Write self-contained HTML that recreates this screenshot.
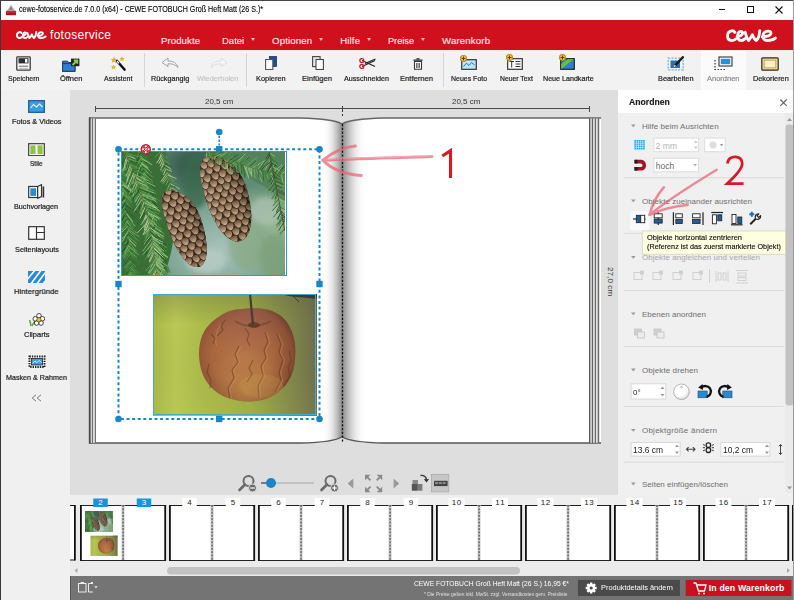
<!DOCTYPE html><html><head><meta charset='utf-8'><style>
*{margin:0;padding:0}
html,body{width:794px;height:600px;overflow:hidden;background:#f0f0f0;position:relative}
body{font-family:"Liberation Sans",sans-serif}
.a{position:absolute;display:block}
.t{position:absolute;white-space:nowrap;font-family:"Liberation Sans",sans-serif}
#titlebar{position:absolute;left:0;top:0;width:794px;height:20px;background:#fff}
#hdr{position:absolute;left:0;top:20px;width:794px;height:30px;background:#d0101c}
#tbar{position:absolute;left:0;top:50px;width:794px;height:40px;background:#f2f2f2}
#side{position:absolute;left:0;top:90px;width:70px;height:510px;background:#f0f0f0}
#canvas{position:absolute;left:70px;top:90px;width:548px;height:405px;background:#dedede}
#rpanel{position:absolute;left:618px;top:90px;width:176px;height:405px;background:#f0f0f0}
#film{position:absolute;left:70px;top:495px;width:724px;height:81px;background:#ebebeb}
#bbar{position:absolute;left:70px;top:576px;width:724px;height:24px;background:#747474}
</style></head><body><div id='titlebar'></div>
<div id='hdr'></div>
<div id='tbar'></div>
<div id='side'></div>
<div id='canvas'></div>
<div id='rpanel'></div>
<div id='film'></div>
<div id='bbar'></div>
<svg class='a' style='left:5px;top:4px' width='12' height='12' viewBox='0 0 12 12'>
<path d='M6 0.5 L10.5 7 L1.5 7 Z' fill='#c9c9c9'/><path d='M6 2 L8.5 6 L3.5 6Z' fill='#8a8a8a'/>
<rect x='1' y='6.8' width='10' height='4.4' fill='#b0141c'/><rect x='1' y='7.6' width='10' height='0.8' fill='#e04a50'/></svg>
<div class='a' style='left:719px;top:9px;width:6px;height:1px;background:#111'></div>
<div class='a' style='left:747px;top:6px;width:5px;height:5px;border:1px solid #111'></div>
<svg class='a' style='left:775px;top:6px' width='8' height='8' viewBox='0 0 8 8'><path d='M0.5 0.5L7.5 7.5M7.5 0.5L0.5 7.5' stroke='#111' stroke-width='1.1'/></svg>
<svg class='a' style='left:16.3px;top:31px' width='30.5' height='8' viewBox='0.4 -0.1 52.2 13.2' preserveAspectRatio='none'><g fill='none' stroke='#fff' stroke-width='3.3' stroke-linecap='round' stroke-linejoin='round'><path d='M9.5 3.3 C8.5 1.8 7 1.6 6 1.8 C3.2 2.3 2 4.8 2 7 C2 9.8 3.8 11.5 6.2 11.5 C7.8 11.5 9.2 10.8 10.2 10'/><path d='M11.8 7.6 C14.5 7.4 17.6 6 17.4 3.8 C17.2 1.6 13.6 1.7 12.6 4.8 C11.6 8.2 12.8 11.5 15.8 11.5 C17.6 11.5 19 10.6 20 9.6'/><path d='M20 3.2 C21 6.6 22 10 23.4 11.5 C25 10.3 26 7.8 27.4 5.6 C28.4 8 29.4 10.6 31.4 11.5 C33.4 10 34.6 6 35 1.5'/><path d='M37.5 7.8 C41 7.6 46.5 6.6 46.5 3.9 C46.5 1.3 40.5 1.3 38.8 4.6 C37.4 8 38.8 11.5 42.8 11.5 C46.2 11.5 49 10.6 51 9'/></g></svg><svg class='a' style='left:725.7px;top:28.6px' width='51' height='13.1' viewBox='0.4 -0.1 52.2 13.2' preserveAspectRatio='none'><g fill='none' stroke='#fff' stroke-width='2.9' stroke-linecap='round' stroke-linejoin='round'><path d='M9.5 3.3 C8.5 1.8 7 1.6 6 1.8 C3.2 2.3 2 4.8 2 7 C2 9.8 3.8 11.5 6.2 11.5 C7.8 11.5 9.2 10.8 10.2 10'/><path d='M11.8 7.6 C14.5 7.4 17.6 6 17.4 3.8 C17.2 1.6 13.6 1.7 12.6 4.8 C11.6 8.2 12.8 11.5 15.8 11.5 C17.6 11.5 19 10.6 20 9.6'/><path d='M20 3.2 C21 6.6 22 10 23.4 11.5 C25 10.3 26 7.8 27.4 5.6 C28.4 8 29.4 10.6 31.4 11.5 C33.4 10 34.6 6 35 1.5'/><path d='M37.5 7.8 C41 7.6 46.5 6.6 46.5 3.9 C46.5 1.3 40.5 1.3 38.8 4.6 C37.4 8 38.8 11.5 42.8 11.5 C46.2 11.5 49 10.6 51 9'/></g></svg><div class='a tri' style='left:251.0px;top:37.8px;border-left:2.5px solid transparent;border-right:2.5px solid transparent;border-top:3px solid #f2c4c4'></div><div class='a tri' style='left:319.3px;top:37.8px;border-left:2.5px solid transparent;border-right:2.5px solid transparent;border-top:3px solid #f2c4c4'></div><div class='a tri' style='left:366.8px;top:37.8px;border-left:2.5px solid transparent;border-right:2.5px solid transparent;border-top:3px solid #f2c4c4'></div><div class='a tri' style='left:421.1px;top:37.8px;border-left:2.5px solid transparent;border-right:2.5px solid transparent;border-top:3px solid #f2c4c4'></div><div class='a' style='left:143.5px;top:53px;width:1px;height:34px;background:#d6d6d6'></div><div class='a' style='left:245.5px;top:53px;width:1px;height:34px;background:#d6d6d6'></div><div class='a' style='left:443px;top:53px;width:1px;height:34px;background:#d6d6d6'></div><div class='a' style='left:701px;top:51px;width:45px;height:39px;background:#fbfbfb'></div><svg class='a' style='left:15.5px;top:55.5px' width='15' height='15' viewBox='0 0 15 15'><rect x='0.8' y='0.8' width='13.4' height='13.4' rx='0.8' fill='#fdfdfd' stroke='#3a3a3a' stroke-width='1.3'/><rect x='2.5' y='2.2' width='10' height='5.2' fill='#2e2e2e'/><rect x='9' y='3' width='2.4' height='3.6' fill='#fff'/><rect x='2.8' y='9.6' width='9.4' height='1.3' fill='#8a8a8a'/><rect x='2.8' y='11.8' width='9.4' height='1' fill='#b4b4b4'/></svg><svg class='a' style='left:61.5px;top:57.5px' width='18' height='14' viewBox='0 0 18 14'><path d='M0.6 3.2 H5.5 L6.5 4.5 H13 V13.3 H0.6Z' fill='#2a74c0' stroke='#1b3f66' stroke-width='1'/><rect x='0.6' y='5.6' width='12.4' height='7.7' fill='#2f7fd0' stroke='#1b3f66' stroke-width='1'/><rect x='9' y='0.6' width='8.4' height='7.6' fill='#222'/><path d='M10.6 7 L15 2.5 M11.8 2.3 H15.3 V5.8' stroke='#8fd14f' stroke-width='1.8' fill='none'/></svg><svg class='a' style='left:109.5px;top:55.5px' width='16' height='15' viewBox='0 0 16 15'><path d='M7 5 L14.5 13.5' stroke='#111' stroke-width='2.6' stroke-linecap='round'/><path d='M7 5 L9 7.3' stroke='#fff' stroke-width='1.2'/><path d='M4 0.5 L5 2.8 L7.5 3 L5.6 4.6 L6.2 7 L4 5.7 L1.8 7 L2.4 4.6 L0.5 3 L3 2.8Z' fill='#e0b22e'/><path d='M12 0.3 L12.8 2 L14.7 2.2 L13.3 3.4 L13.7 5.3 L12 4.3 L10.3 5.3 L10.7 3.4 L9.3 2.2 L11.2 2Z' fill='#e0b22e'/><path d='M3.5 8.5 L4.3 10.2 L6.2 10.4 L4.8 11.6 L5.2 13.5 L3.5 12.5 L1.8 13.5 L2.2 11.6 L0.8 10.4 L2.7 10.2Z' fill='#e0b22e'/></svg><svg class='a' style='left:160.5px;top:57px' width='18' height='11' viewBox='0 0 18 11'><path d='M17 10.5 C16 6 12 3.8 7 4.2 L7 1 L1 5.5 L7 9.5 L7 6.8 C11 6.5 14.5 7.5 17 10.5Z' fill='#f4f4f4' stroke='#9a9a9a' stroke-width='0.9'/></svg><svg class='a' style='left:209.5px;top:57px' width='18' height='11' viewBox='0 0 18 11'><path d='M1 10.5 C2 6 6 3.8 11 4.2 L11 1 L17 5.5 L11 9.5 L11 6.8 C7 6.5 3.5 7.5 1 10.5Z' fill='#f6f6f6' stroke='#dadada' stroke-width='0.9'/></svg><svg class='a' style='left:264.5px;top:56px' width='12' height='14' viewBox='0 0 12 14'><rect x='4.5' y='0.5' width='7' height='10' fill='#1f4d8f' stroke='#183a6a' stroke-width='0.8'/><rect x='0.6' y='3.5' width='7.2' height='10' fill='#fff' stroke='#555' stroke-width='1.1'/></svg><svg class='a' style='left:311.5px;top:56px' width='12' height='14' viewBox='0 0 12 14'><rect x='0.6' y='0.6' width='7.5' height='10' fill='#e8e8e8' stroke='#444' stroke-width='1.1'/><rect x='4' y='3.5' width='7.4' height='10' fill='#fff' stroke='#444' stroke-width='1.1'/></svg><svg class='a' style='left:358.5px;top:57.5px' width='17' height='11' viewBox='0 0 17 11'><path d='M3 2.5 L16 8.5 M3 8.5 L16 2.5' stroke='#222' stroke-width='1.1'/><path d='M6 5.5 L16.5 1' stroke='#222' stroke-width='1.3'/><circle cx='2.8' cy='2.6' r='2' fill='none' stroke='#d0202a' stroke-width='1.3'/><circle cx='2.8' cy='8.5' r='2' fill='none' stroke='#d0202a' stroke-width='1.3'/></svg><svg class='a' style='left:412.5px;top:58px' width='10' height='12' viewBox='0 0 10 12'><rect x='0.5' y='1.5' width='9' height='1.3' fill='#333'/><rect x='3.5' y='0.2' width='3' height='1.5' fill='#333'/><path d='M1.5 3.5 H8.5 V11.3 H1.5Z' fill='#fff' stroke='#333' stroke-width='1.1'/><path d='M3.6 5 V10 M5 5 V10 M6.4 5 V10' stroke='#333' stroke-width='0.8'/></svg><svg class='a' style='left:461px;top:58.5px' width='16' height='11' viewBox='0 0 16 11'><rect x='0.7' y='0.7' width='14.6' height='9.6' fill='#bfe3f7' stroke='#333' stroke-width='1.2'/><path d='M2.5 7.5 L5.5 4.2 L8 6.5 L10.5 3.5 L13.5 6' stroke='#1d78c2' stroke-width='1' fill='none'/></svg><svg class='a' style='left:459.5px;top:54.8px' width='7' height='7' viewBox='0 0 7 7'><circle cx='3.5' cy='3.5' r='3.2' fill='#f0c040' stroke='#8a6a10' stroke-width='0.7'/><path d='M3.5 1.5 V5.5 M1.5 3.5 H5.5' stroke='#5a4000' stroke-width='1'/></svg><svg class='a' style='left:507px;top:57.5px' width='16' height='12' viewBox='0 0 16 12'><rect x='0.7' y='0.7' width='14.6' height='10.6' fill='#fff' stroke='#333' stroke-width='1.2'/><path d='M2.5 3.5 H7 M4.7 3.5 V9.5 M8.5 3.5 H13.5 M8.5 6 H13.5 M8.5 8.5 H13.5' stroke='#333' stroke-width='1'/></svg><svg class='a' style='left:505.5px;top:54.3px' width='7' height='7' viewBox='0 0 7 7'><circle cx='3.5' cy='3.5' r='3.2' fill='#f0c040' stroke='#8a6a10' stroke-width='0.7'/><path d='M3.5 1.5 V5.5 M1.5 3.5 H5.5' stroke='#5a4000' stroke-width='1'/></svg><svg class='a' style='left:560px;top:57.5px' width='15' height='12' viewBox='0 0 15 12'><rect x='0.7' y='0.7' width='13.6' height='10.6' fill='#2f7fd0' stroke='#222' stroke-width='1.2'/><path d='M1.2 11 L1.2 6 L8 1.2 L13.8 1.2 Z' fill='#6cbf3a'/></svg><svg class='a' style='left:558.5px;top:54.3px' width='7' height='7' viewBox='0 0 7 7'><circle cx='3.5' cy='3.5' r='3.2' fill='#f0c040' stroke='#8a6a10' stroke-width='0.7'/><path d='M3.5 1.5 V5.5 M1.5 3.5 H5.5' stroke='#5a4000' stroke-width='1'/></svg><svg class='a' style='left:667px;top:55px' width='19' height='16' viewBox='0 0 19 16'><rect x='1.2' y='3.2' width='15' height='11.6' fill='none' stroke='#6ab4ea' stroke-width='1.3' stroke-dasharray='2 1.3'/><rect x='3.5' y='5.5' width='9.5' height='7.5' fill='#2a70b4'/><path d='M8.3 10.2 L15.8 2.2' stroke='#1a1a1a' stroke-width='2.4' stroke-linecap='round'/><path d='M8.3 10.2 L7.3 11.6' stroke='#fff' stroke-width='1.2'/></svg><svg class='a' style='left:713.5px;top:56px' width='20' height='15' viewBox='0 0 20 15'><path d='M1 4 V13.5 H12' stroke='#333' stroke-width='1.2' stroke-dasharray='1.5 1.5' fill='none'/><rect x='5' y='1' width='13' height='9' fill='#fff' stroke='#333' stroke-width='1.1'/><rect x='6.8' y='2.8' width='9.4' height='5.4' fill='#2a8fd8'/></svg><svg class='a' style='left:761px;top:56.5px' width='18' height='14' viewBox='0 0 18 14'><rect x='0.8' y='0.8' width='16.4' height='12.4' rx='1' fill='#ecd49a' stroke='#2e2a22' stroke-width='1.2'/><rect x='3.3' y='3.2' width='11.4' height='7.6' fill='#fbf2cc' stroke='#c4a050' stroke-width='0.8'/></svg><svg class='a' style='left:28px;top:99.5px' width='17' height='13' viewBox='0 0 17 13'><rect x='0.7' y='0.7' width='15.6' height='11.6' fill='#3b9ee0' stroke='#1c5e9a' stroke-width='1.3'/><path d='M2.5 8 L5.5 4.5 L8.5 7 L11.5 4 L14.5 7' stroke='#e8f6ff' stroke-width='1.1' fill='none'/></svg><svg class='a' style='left:28px;top:142.5px' width='17' height='13.5' viewBox='0 0 17 13.5'><rect x='0.7' y='0.7' width='15.6' height='12' fill='#fff' stroke='#3a3a3a' stroke-width='1.2'/><rect x='2.3' y='2.3' width='5.2' height='8.8' fill='#8cc63f'/><rect x='9.5' y='2.3' width='5.2' height='8.8' fill='#8cc63f'/></svg><svg class='a' style='left:28px;top:183.5px' width='17' height='15' viewBox='0 0 17 15'><rect x='0.7' y='2.5' width='9' height='11' fill='#fff' stroke='#333' stroke-width='1.2'/><rect x='2.3' y='4.3' width='5.8' height='7.6' fill='#2a8ad6'/><path d='M9.7 2.5 L13.5 0.7 V12.5 L9.7 14.3Z' fill='#fff' stroke='#333' stroke-width='1.2'/><rect x='14.6' y='2.5' width='1.6' height='11' fill='#333'/></svg><svg class='a' style='left:28px;top:226px' width='17' height='14' viewBox='0 0 17 14'><rect x='0.7' y='0.7' width='15.6' height='12.6' fill='#fff' stroke='#333' stroke-width='1.2'/><path d='M8.5 0.7 V13.3 M8.5 6.5 H16.3' stroke='#333' stroke-width='1.2'/></svg><svg class='a' style='left:27.8px;top:270.5px' width='17.5' height='12.5' viewBox='0 0 17.5 12.5'><defs><clipPath id='hc'><rect x='0' y='0' width='17.5' height='12.5'/></clipPath></defs><rect x='0' y='0' width='17.5' height='12.5' fill='#2a8ad6'/><g clip-path='url(#hc)' stroke='#fff' stroke-width='1.6'><path d='M-2 10 L8 -2 M2 14 L14 -2 M8 14 L20 -2 M14 14 L24 2'/></g></svg><svg class='a' style='left:29px;top:312.5px' width='16' height='14' viewBox='0 0 16 14'><path d='M2 13 C1.5 10 1 8 0.5 7' stroke='#5aa83a' stroke-width='1.6' fill='none'/><path d='M3 13 C4 11 5 9 6 8.5' stroke='#5aa83a' stroke-width='1.4' fill='none'/><g fill='#fff' stroke='#333' stroke-width='0.9'><circle cx='10' cy='2.8' r='2.3'/><circle cx='13.4' cy='5.8' r='2.3'/><circle cx='12' cy='10' r='2.3'/><circle cx='7.6' cy='10' r='2.3'/><circle cx='6.3' cy='5.8' r='2.3'/></g><circle cx='9.9' cy='6.8' r='2.2' fill='#f0c020' stroke='#333' stroke-width='0.6'/></svg><svg class='a' style='left:27.5px;top:354.5px' width='18' height='13.5' viewBox='0 0 18 13.5'><rect x='1.5' y='1.5' width='15' height='10.5' fill='#fff' stroke='#222' stroke-width='2' stroke-dasharray='1.4 1'/><rect x='3.5' y='3.5' width='11' height='6.5' fill='#3b9ee0' stroke='#222' stroke-width='0.8'/><path d='M4.5 8.5 L7 6 L9 7.5 L11 5.5 L13.5 7.5' stroke='#fff' stroke-width='0.8' fill='none'/></svg><svg class='a' style='left:30.5px;top:394px' width='11' height='8' viewBox='0 0 11 8'><path d='M5 0.8 L1.2 4 L5 7.2 M10 0.8 L6.2 4 L10 7.2' stroke='#777' stroke-width='1' fill='none'/></svg><div class='a' style='left:95px;top:108px;width:494.5px;height:1px;background:#4a4a4a'></div><div class='a' style='left:95px;top:105.5px;width:1px;height:6px;background:#4a4a4a'></div><div class='a' style='left:342px;top:105.5px;width:1px;height:6px;background:#4a4a4a'></div><div class='a' style='left:589px;top:105.5px;width:1px;height:6px;background:#4a4a4a'></div><div class='a' style='left:342px;top:105.5px;width:1px;height:12px;background:repeating-linear-gradient(#333 0 2px,transparent 2px 4px)'></div><div class='t' style='left:596px;top:277px;width:28px;font-size:8px;line-height:8px;color:#333;transform:rotate(90deg);letter-spacing:0.1px'>27,0 cm</div><svg class='a' style='left:0;top:0' width='794' height='600'><defs><linearGradient id='shL' x1='0' x2='1'><stop offset='0' stop-color='#fff' stop-opacity='0'/><stop offset='0.45' stop-color='#d8d8d8' stop-opacity='0.6'/><stop offset='1' stop-color='#8a8a8a'/></linearGradient><linearGradient id='shR' x1='0' x2='1'><stop offset='0' stop-color='#8a8a8a'/><stop offset='0.5' stop-color='#d4d4d4' stop-opacity='0.7'/><stop offset='1' stop-color='#fff' stop-opacity='0'/></linearGradient></defs><clipPath id='pgc'><path d='M89 118 H300 C320 118.5 336 120 342 124 C348 120 364 118.5 384 118 H601 V443 H384 C364 442.5 348 441 342 436.7 C336 441 320 442.5 300 443 H89 Z'/></clipPath><path d='M89 118 H300 C320 118.5 336 120 342 124 C348 120 364 118.5 384 118 H601 V443 H384 C364 442.5 348 441 342 436.7 C336 441 320 442.5 300 443 H89 Z' fill='#fff'/><g clip-path='url(#pgc)'><rect x='323' y='119' width='19' height='323' fill='url(#shL)'/><rect x='342' y='119' width='24' height='323' fill='url(#shR)'/></g><path d='M89 118 H300 C320 118.5 336 120 342 124 C348 120 364 118.5 384 118 H601' fill='none' stroke='#666' stroke-width='1.4'/><path d='M89 443 H300 C320 442.5 336 441 342 436.7 C348 441 364 442.5 384 443 H601' fill='none' stroke='#555' stroke-width='1.3'/><rect x='88.8' y='117.5' width='2' height='326' fill='#4a4a4a'/><rect x='90.8' y='118.5' width='1.2' height='324.5' fill='#d4d4d4'/><rect x='92' y='118.5' width='1.2' height='324.5' fill='#6e6e6e'/><rect x='93.2' y='118.5' width='1.6' height='324.5' fill='#dcdcdc'/><rect x='94.8' y='118.5' width='1.2' height='324.5' fill='#727272'/><rect x='589' y='118.5' width='1.6' height='324.5' fill='#5a5a5a'/><rect x='590.6' y='118.5' width='1.3' height='324.5' fill='#d8d8d8'/><rect x='591.9' y='118.5' width='1.4' height='324.5' fill='#626262'/><rect x='593.3' y='118.5' width='1.5' height='324.5' fill='#dcdcdc'/><rect x='594.8' y='118.5' width='1.4' height='324.5' fill='#686868'/><rect x='596.2' y='118.5' width='1.5' height='324.5' fill='#e2e2e2'/><rect x='597.7' y='118.5' width='1.5' height='324.5' fill='#6a6a6a'/><line x1='342.5' y1='124' x2='342.5' y2='442' stroke='#111' stroke-width='1.3' stroke-dasharray='2.2 1.6'/></svg><svg class='a' style='left:121px;top:151px' width='164' height='124' viewBox='0 0 164 124'><defs><radialGradient id='pbg1' cx='0.6' cy='0.8' r='0.55'><stop offset='0' stop-color='#a8c4bc'/><stop offset='0.55' stop-color='#82a898'/><stop offset='1' stop-color='#5f8c74'/></radialGradient><radialGradient id='pbg2' cx='0.92' cy='0.55' r='0.3'><stop offset='0' stop-color='#9ab890'/><stop offset='1' stop-color='#9ab890' stop-opacity='0'/></radialGradient><radialGradient id='pbg3' cx='0.45' cy='0.12' r='0.28'><stop offset='0' stop-color='#2c4c44'/><stop offset='1' stop-color='#2c4c44' stop-opacity='0'/></radialGradient><linearGradient id='pbr' x1='0' x2='1'><stop offset='0' stop-color='#2e5a30'/><stop offset='0.6' stop-color='#4a8040'/><stop offset='1' stop-color='#4a8040' stop-opacity='0'/></linearGradient><filter id='blur1'><feGaussianBlur stdDeviation='2.5'/></filter></defs><rect width='164' height='124' fill='url(#pbg1)'/><rect width='164' height='124' fill='url(#pbg2)'/><rect width='164' height='124' fill='url(#pbg3)'/><g filter='url(#blur1)' opacity='0.8'><ellipse cx='128' cy='92' rx='20' ry='28' fill='#8aac88'/><ellipse cx='152' cy='105' rx='14' ry='22' fill='#7fa278'/><ellipse cx='145' cy='60' rx='16' ry='14' fill='#a8c0b0'/><ellipse cx='85' cy='110' rx='20' ry='12' fill='#b8ccc6'/><ellipse cx='75' cy='30' rx='14' ry='28' fill='#3e6a50'/></g><path d='M0 0 H44 C50 30 56 60 52 90 C50 105 46 115 44 124 H0Z' fill='#3a6e36'/><line x1='0.0' y1='20.0' x2='6.3' y2='25.3' stroke='#6aa85a' stroke-width='1.0' stroke-linecap='round'/><line x1='0.0' y1='20.0' x2='-4.1' y2='32.4' stroke='#2e6a2c' stroke-width='1.0' stroke-linecap='round'/><line x1='0.2' y1='21.3' x2='5.8' y2='26.3' stroke='#24522a' stroke-width='1.0' stroke-linecap='round'/><line x1='0.2' y1='21.3' x2='-2.9' y2='28.5' stroke='#5a9a50' stroke-width='1.0' stroke-linecap='round'/><line x1='0.3' y1='22.6' x2='6.9' y2='26.9' stroke='#5a9a50' stroke-width='1.0' stroke-linecap='round'/><line x1='0.3' y1='22.6' x2='-3.2' y2='33.2' stroke='#3e7c38' stroke-width='1.0' stroke-linecap='round'/><line x1='0.5' y1='23.9' x2='7.9' y2='32.5' stroke='#2e6a2c' stroke-width='1.0' stroke-linecap='round'/><line x1='0.5' y1='23.9' x2='-5.0' y2='32.3' stroke='#3e7c38' stroke-width='1.0' stroke-linecap='round'/><line x1='0.6' y1='25.3' x2='11.9' y2='32.3' stroke='#4c8a44' stroke-width='1.0' stroke-linecap='round'/><line x1='0.6' y1='25.3' x2='-4.7' y2='34.9' stroke='#24522a' stroke-width='1.0' stroke-linecap='round'/><line x1='0.8' y1='26.6' x2='10.8' y2='34.9' stroke='#3e7c38' stroke-width='1.0' stroke-linecap='round'/><line x1='0.8' y1='26.6' x2='-3.0' y2='37.1' stroke='#3e7c38' stroke-width='1.0' stroke-linecap='round'/><line x1='0.9' y1='27.9' x2='9.2' y2='35.2' stroke='#2e6a2c' stroke-width='1.0' stroke-linecap='round'/><line x1='0.9' y1='27.9' x2='-5.4' y2='37.6' stroke='#5a9a50' stroke-width='1.0' stroke-linecap='round'/><line x1='1.1' y1='29.2' x2='7.6' y2='37.1' stroke='#4c8a44' stroke-width='1.0' stroke-linecap='round'/><line x1='1.1' y1='29.2' x2='-5.8' y2='41.1' stroke='#4c8a44' stroke-width='1.0' stroke-linecap='round'/><line x1='1.3' y1='30.5' x2='11.2' y2='38.7' stroke='#6aa85a' stroke-width='1.0' stroke-linecap='round'/><line x1='1.3' y1='30.5' x2='-3.6' y2='36.5' stroke='#4c8a44' stroke-width='1.0' stroke-linecap='round'/><line x1='1.4' y1='31.8' x2='10.8' y2='41.5' stroke='#6aa85a' stroke-width='1.0' stroke-linecap='round'/><line x1='1.4' y1='31.8' x2='-4.3' y2='41.8' stroke='#2e6a2c' stroke-width='1.0' stroke-linecap='round'/><line x1='1.6' y1='33.2' x2='10.0' y2='38.9' stroke='#8cbc74' stroke-width='1.0' stroke-linecap='round'/><line x1='1.6' y1='33.2' x2='-4.6' y2='45.5' stroke='#5a9a50' stroke-width='1.0' stroke-linecap='round'/><line x1='1.7' y1='34.5' x2='11.9' y2='40.8' stroke='#8cbc74' stroke-width='1.0' stroke-linecap='round'/><line x1='1.7' y1='34.5' x2='-5.2' y2='45.2' stroke='#8cbc74' stroke-width='1.0' stroke-linecap='round'/><line x1='1.9' y1='35.8' x2='11.2' y2='43.6' stroke='#24522a' stroke-width='1.0' stroke-linecap='round'/><line x1='1.9' y1='35.8' x2='-4.7' y2='46.8' stroke='#2e6a2c' stroke-width='1.0' stroke-linecap='round'/><line x1='2.1' y1='37.1' x2='10.0' y2='48.5' stroke='#5a9a50' stroke-width='1.0' stroke-linecap='round'/><line x1='2.1' y1='37.1' x2='-2.5' y2='43.2' stroke='#6aa85a' stroke-width='1.0' stroke-linecap='round'/><line x1='2.2' y1='38.4' x2='9.6' y2='47.6' stroke='#6aa85a' stroke-width='1.0' stroke-linecap='round'/><line x1='2.2' y1='38.4' x2='-3.7' y2='45.4' stroke='#5a9a50' stroke-width='1.0' stroke-linecap='round'/><line x1='2.4' y1='39.7' x2='7.7' y2='47.7' stroke='#5a9a50' stroke-width='1.0' stroke-linecap='round'/><line x1='2.4' y1='39.7' x2='-2.9' y2='50.0' stroke='#5a9a50' stroke-width='1.0' stroke-linecap='round'/><line x1='2.5' y1='41.1' x2='13.2' y2='47.8' stroke='#3e7c38' stroke-width='1.0' stroke-linecap='round'/><line x1='2.5' y1='41.1' x2='-3.6' y2='48.9' stroke='#8cbc74' stroke-width='1.0' stroke-linecap='round'/><line x1='2.7' y1='42.4' x2='8.6' y2='48.3' stroke='#5a9a50' stroke-width='1.0' stroke-linecap='round'/><line x1='2.7' y1='42.4' x2='-4.6' y2='53.7' stroke='#8cbc74' stroke-width='1.0' stroke-linecap='round'/><line x1='2.8' y1='43.7' x2='10.9' y2='51.3' stroke='#6aa85a' stroke-width='1.0' stroke-linecap='round'/><line x1='2.8' y1='43.7' x2='-1.8' y2='52.2' stroke='#5a9a50' stroke-width='1.0' stroke-linecap='round'/><line x1='3.0' y1='45.0' x2='7.3' y2='52.0' stroke='#3e7c38' stroke-width='1.0' stroke-linecap='round'/><line x1='3.0' y1='45.0' x2='-1.3' y2='56.1' stroke='#2e6a2c' stroke-width='1.0' stroke-linecap='round'/><line x1='3.2' y1='46.3' x2='11.2' y2='54.3' stroke='#4c8a44' stroke-width='1.0' stroke-linecap='round'/><line x1='3.2' y1='46.3' x2='-0.3' y2='53.7' stroke='#24522a' stroke-width='1.0' stroke-linecap='round'/><line x1='3.3' y1='47.6' x2='11.7' y2='55.0' stroke='#3e7c38' stroke-width='1.0' stroke-linecap='round'/><line x1='3.3' y1='47.6' x2='-3.1' y2='56.3' stroke='#24522a' stroke-width='1.0' stroke-linecap='round'/><line x1='3.5' y1='48.9' x2='11.5' y2='58.4' stroke='#5a9a50' stroke-width='1.0' stroke-linecap='round'/><line x1='3.5' y1='48.9' x2='-5.1' y2='58.3' stroke='#8cbc74' stroke-width='1.0' stroke-linecap='round'/><line x1='3.6' y1='50.3' x2='10.7' y2='58.8' stroke='#5a9a50' stroke-width='1.0' stroke-linecap='round'/><line x1='3.6' y1='50.3' x2='-0.1' y2='57.2' stroke='#6aa85a' stroke-width='1.0' stroke-linecap='round'/><line x1='3.8' y1='51.6' x2='10.1' y2='57.3' stroke='#3e7c38' stroke-width='1.0' stroke-linecap='round'/><line x1='3.8' y1='51.6' x2='-0.1' y2='58.5' stroke='#24522a' stroke-width='1.0' stroke-linecap='round'/><line x1='3.9' y1='52.9' x2='10.0' y2='56.7' stroke='#3e7c38' stroke-width='1.0' stroke-linecap='round'/><line x1='3.9' y1='52.9' x2='-3.5' y2='64.7' stroke='#24522a' stroke-width='1.0' stroke-linecap='round'/><line x1='4.1' y1='54.2' x2='15.5' y2='61.2' stroke='#24522a' stroke-width='1.0' stroke-linecap='round'/><line x1='4.1' y1='54.2' x2='-1.3' y2='64.6' stroke='#4c8a44' stroke-width='1.0' stroke-linecap='round'/><line x1='4.3' y1='55.5' x2='11.3' y2='63.4' stroke='#2e6a2c' stroke-width='1.0' stroke-linecap='round'/><line x1='4.3' y1='55.5' x2='-5.1' y2='66.3' stroke='#5a9a50' stroke-width='1.0' stroke-linecap='round'/><line x1='4.4' y1='56.8' x2='11.1' y2='63.4' stroke='#3e7c38' stroke-width='1.0' stroke-linecap='round'/><line x1='4.4' y1='56.8' x2='1.2' y2='65.9' stroke='#4c8a44' stroke-width='1.0' stroke-linecap='round'/><line x1='4.6' y1='58.2' x2='13.2' y2='66.6' stroke='#24522a' stroke-width='1.0' stroke-linecap='round'/><line x1='4.6' y1='58.2' x2='0.4' y2='71.5' stroke='#24522a' stroke-width='1.0' stroke-linecap='round'/><line x1='4.7' y1='59.5' x2='13.8' y2='67.4' stroke='#2e6a2c' stroke-width='1.0' stroke-linecap='round'/><line x1='4.7' y1='59.5' x2='-1.0' y2='66.7' stroke='#6aa85a' stroke-width='1.0' stroke-linecap='round'/><line x1='4.9' y1='60.8' x2='11.8' y2='70.8' stroke='#4c8a44' stroke-width='1.0' stroke-linecap='round'/><line x1='4.9' y1='60.8' x2='-2.3' y2='72.4' stroke='#4c8a44' stroke-width='1.0' stroke-linecap='round'/><line x1='5.1' y1='62.1' x2='11.7' y2='70.9' stroke='#8cbc74' stroke-width='1.0' stroke-linecap='round'/><line x1='5.1' y1='62.1' x2='-1.0' y2='72.1' stroke='#24522a' stroke-width='1.0' stroke-linecap='round'/><line x1='5.2' y1='63.4' x2='13.5' y2='74.9' stroke='#8cbc74' stroke-width='1.0' stroke-linecap='round'/><line x1='5.2' y1='63.4' x2='1.8' y2='71.6' stroke='#5a9a50' stroke-width='1.0' stroke-linecap='round'/><line x1='5.4' y1='64.7' x2='10.8' y2='71.7' stroke='#24522a' stroke-width='1.0' stroke-linecap='round'/><line x1='5.4' y1='64.7' x2='-1.0' y2='75.4' stroke='#2e6a2c' stroke-width='1.0' stroke-linecap='round'/><line x1='5.5' y1='66.1' x2='11.8' y2='74.5' stroke='#3e7c38' stroke-width='1.0' stroke-linecap='round'/><line x1='5.5' y1='66.1' x2='-2.8' y2='77.3' stroke='#5a9a50' stroke-width='1.0' stroke-linecap='round'/><line x1='5.7' y1='67.4' x2='12.9' y2='77.3' stroke='#4c8a44' stroke-width='1.0' stroke-linecap='round'/><line x1='5.7' y1='67.4' x2='-1.1' y2='74.4' stroke='#3e7c38' stroke-width='1.0' stroke-linecap='round'/><line x1='5.8' y1='68.7' x2='14.6' y2='74.5' stroke='#4c8a44' stroke-width='1.0' stroke-linecap='round'/><line x1='5.8' y1='68.7' x2='1.4' y2='79.4' stroke='#24522a' stroke-width='1.0' stroke-linecap='round'/><line x1='6.0' y1='70.0' x2='11.7' y2='78.9' stroke='#6aa85a' stroke-width='1.0' stroke-linecap='round'/><line x1='6.0' y1='70.0' x2='0.3' y2='80.2' stroke='#8cbc74' stroke-width='1.0' stroke-linecap='round'/><line x1='6.1' y1='71.3' x2='14.4' y2='82.1' stroke='#8cbc74' stroke-width='1.0' stroke-linecap='round'/><line x1='6.1' y1='71.3' x2='0.6' y2='77.9' stroke='#3e7c38' stroke-width='1.0' stroke-linecap='round'/><line x1='6.2' y1='72.6' x2='14.3' y2='81.0' stroke='#2e6a2c' stroke-width='1.0' stroke-linecap='round'/><line x1='6.2' y1='72.6' x2='-3.3' y2='83.0' stroke='#5a9a50' stroke-width='1.0' stroke-linecap='round'/><line x1='6.3' y1='74.0' x2='14.8' y2='83.0' stroke='#2e6a2c' stroke-width='1.0' stroke-linecap='round'/><line x1='6.3' y1='74.0' x2='0.9' y2='80.3' stroke='#3e7c38' stroke-width='1.0' stroke-linecap='round'/><line x1='6.4' y1='75.3' x2='15.8' y2='81.7' stroke='#5a9a50' stroke-width='1.0' stroke-linecap='round'/><line x1='6.4' y1='75.3' x2='0.8' y2='81.3' stroke='#8cbc74' stroke-width='1.0' stroke-linecap='round'/><line x1='6.5' y1='76.6' x2='13.2' y2='84.7' stroke='#4c8a44' stroke-width='1.0' stroke-linecap='round'/><line x1='6.5' y1='76.6' x2='2.0' y2='86.7' stroke='#2e6a2c' stroke-width='1.0' stroke-linecap='round'/><line x1='6.6' y1='77.9' x2='18.3' y2='85.8' stroke='#6aa85a' stroke-width='1.0' stroke-linecap='round'/><line x1='6.6' y1='77.9' x2='1.8' y2='89.5' stroke='#3e7c38' stroke-width='1.0' stroke-linecap='round'/><line x1='6.7' y1='79.2' x2='16.0' y2='88.8' stroke='#8cbc74' stroke-width='1.0' stroke-linecap='round'/><line x1='6.7' y1='79.2' x2='1.5' y2='84.5' stroke='#3e7c38' stroke-width='1.0' stroke-linecap='round'/><line x1='6.8' y1='80.5' x2='13.4' y2='86.5' stroke='#24522a' stroke-width='1.0' stroke-linecap='round'/><line x1='6.8' y1='80.5' x2='1.5' y2='90.2' stroke='#8cbc74' stroke-width='1.0' stroke-linecap='round'/><line x1='6.9' y1='81.9' x2='17.8' y2='90.1' stroke='#4c8a44' stroke-width='1.0' stroke-linecap='round'/><line x1='6.9' y1='81.9' x2='-1.6' y2='90.2' stroke='#8cbc74' stroke-width='1.0' stroke-linecap='round'/><line x1='7.0' y1='83.2' x2='12.2' y2='91.9' stroke='#24522a' stroke-width='1.0' stroke-linecap='round'/><line x1='7.0' y1='83.2' x2='3.7' y2='90.7' stroke='#24522a' stroke-width='1.0' stroke-linecap='round'/><line x1='7.1' y1='84.5' x2='15.6' y2='90.2' stroke='#3e7c38' stroke-width='1.0' stroke-linecap='round'/><line x1='7.1' y1='84.5' x2='-0.5' y2='94.6' stroke='#3e7c38' stroke-width='1.0' stroke-linecap='round'/><line x1='7.2' y1='85.8' x2='15.4' y2='92.3' stroke='#6aa85a' stroke-width='1.0' stroke-linecap='round'/><line x1='7.2' y1='85.8' x2='4.2' y2='92.8' stroke='#6aa85a' stroke-width='1.0' stroke-linecap='round'/><line x1='7.3' y1='87.1' x2='14.7' y2='95.4' stroke='#8cbc74' stroke-width='1.0' stroke-linecap='round'/><line x1='7.3' y1='87.1' x2='-1.7' y2='97.2' stroke='#2e6a2c' stroke-width='1.0' stroke-linecap='round'/><line x1='7.4' y1='88.4' x2='14.3' y2='94.4' stroke='#8cbc74' stroke-width='1.0' stroke-linecap='round'/><line x1='7.4' y1='88.4' x2='3.4' y2='98.0' stroke='#2e6a2c' stroke-width='1.0' stroke-linecap='round'/><line x1='7.5' y1='89.8' x2='15.3' y2='101.0' stroke='#5a9a50' stroke-width='1.0' stroke-linecap='round'/><line x1='7.5' y1='89.8' x2='0.7' y2='102.1' stroke='#24522a' stroke-width='1.0' stroke-linecap='round'/><line x1='7.6' y1='91.1' x2='15.6' y2='100.1' stroke='#5a9a50' stroke-width='1.0' stroke-linecap='round'/><line x1='7.6' y1='91.1' x2='0.3' y2='101.8' stroke='#24522a' stroke-width='1.0' stroke-linecap='round'/><line x1='7.7' y1='92.4' x2='13.7' y2='103.0' stroke='#4c8a44' stroke-width='1.0' stroke-linecap='round'/><line x1='7.7' y1='92.4' x2='-2.1' y2='101.8' stroke='#3e7c38' stroke-width='1.0' stroke-linecap='round'/><line x1='7.8' y1='93.7' x2='12.1' y2='100.6' stroke='#2e6a2c' stroke-width='1.0' stroke-linecap='round'/><line x1='7.8' y1='93.7' x2='3.0' y2='101.8' stroke='#6aa85a' stroke-width='1.0' stroke-linecap='round'/><line x1='7.9' y1='95.0' x2='13.7' y2='100.0' stroke='#6aa85a' stroke-width='1.0' stroke-linecap='round'/><line x1='7.9' y1='95.0' x2='4.1' y2='102.1' stroke='#8cbc74' stroke-width='1.0' stroke-linecap='round'/><line x1='8.0' y1='96.3' x2='17.6' y2='103.9' stroke='#6aa85a' stroke-width='1.0' stroke-linecap='round'/><line x1='8.0' y1='96.3' x2='3.5' y2='104.1' stroke='#3e7c38' stroke-width='1.0' stroke-linecap='round'/><line x1='8.0' y1='97.7' x2='12.3' y2='105.3' stroke='#2e6a2c' stroke-width='1.0' stroke-linecap='round'/><line x1='8.0' y1='97.7' x2='2.6' y2='106.8' stroke='#6aa85a' stroke-width='1.0' stroke-linecap='round'/><line x1='8.1' y1='99.0' x2='12.6' y2='106.0' stroke='#5a9a50' stroke-width='1.0' stroke-linecap='round'/><line x1='8.1' y1='99.0' x2='0.7' y2='105.7' stroke='#5a9a50' stroke-width='1.0' stroke-linecap='round'/><line x1='8.2' y1='100.3' x2='15.6' y2='106.2' stroke='#6aa85a' stroke-width='1.0' stroke-linecap='round'/><line x1='8.2' y1='100.3' x2='3.5' y2='108.6' stroke='#5a9a50' stroke-width='1.0' stroke-linecap='round'/><line x1='8.3' y1='101.6' x2='13.4' y2='106.9' stroke='#4c8a44' stroke-width='1.0' stroke-linecap='round'/><line x1='8.3' y1='101.6' x2='3.1' y2='109.3' stroke='#2e6a2c' stroke-width='1.0' stroke-linecap='round'/><line x1='8.4' y1='102.9' x2='19.4' y2='111.1' stroke='#3e7c38' stroke-width='1.0' stroke-linecap='round'/><line x1='8.4' y1='102.9' x2='2.6' y2='108.3' stroke='#4c8a44' stroke-width='1.0' stroke-linecap='round'/><line x1='8.5' y1='104.2' x2='18.8' y2='113.2' stroke='#3e7c38' stroke-width='1.0' stroke-linecap='round'/><line x1='8.5' y1='104.2' x2='4.8' y2='111.4' stroke='#5a9a50' stroke-width='1.0' stroke-linecap='round'/><line x1='8.6' y1='105.6' x2='15.0' y2='115.7' stroke='#4c8a44' stroke-width='1.0' stroke-linecap='round'/><line x1='8.6' y1='105.6' x2='3.0' y2='115.0' stroke='#24522a' stroke-width='1.0' stroke-linecap='round'/><line x1='8.7' y1='106.9' x2='16.6' y2='116.2' stroke='#2e6a2c' stroke-width='1.0' stroke-linecap='round'/><line x1='8.7' y1='106.9' x2='2.8' y2='118.3' stroke='#3e7c38' stroke-width='1.0' stroke-linecap='round'/><line x1='8.8' y1='108.2' x2='14.2' y2='113.7' stroke='#2e6a2c' stroke-width='1.0' stroke-linecap='round'/><line x1='8.8' y1='108.2' x2='1.0' y2='118.4' stroke='#2e6a2c' stroke-width='1.0' stroke-linecap='round'/><line x1='8.9' y1='109.5' x2='14.4' y2='116.3' stroke='#4c8a44' stroke-width='1.0' stroke-linecap='round'/><line x1='8.9' y1='109.5' x2='1.7' y2='117.0' stroke='#4c8a44' stroke-width='1.0' stroke-linecap='round'/><line x1='9.0' y1='110.8' x2='13.8' y2='119.8' stroke='#4c8a44' stroke-width='1.0' stroke-linecap='round'/><line x1='9.0' y1='110.8' x2='4.5' y2='116.8' stroke='#6aa85a' stroke-width='1.0' stroke-linecap='round'/><line x1='9.1' y1='112.1' x2='15.2' y2='117.3' stroke='#3e7c38' stroke-width='1.0' stroke-linecap='round'/><line x1='9.1' y1='112.1' x2='5.3' y2='119.7' stroke='#4c8a44' stroke-width='1.0' stroke-linecap='round'/><line x1='9.2' y1='113.5' x2='16.0' y2='122.0' stroke='#3e7c38' stroke-width='1.0' stroke-linecap='round'/><line x1='9.2' y1='113.5' x2='4.2' y2='123.0' stroke='#3e7c38' stroke-width='1.0' stroke-linecap='round'/><line x1='9.3' y1='114.8' x2='19.0' y2='123.3' stroke='#4c8a44' stroke-width='1.0' stroke-linecap='round'/><line x1='9.3' y1='114.8' x2='6.8' y2='121.6' stroke='#24522a' stroke-width='1.0' stroke-linecap='round'/><line x1='9.4' y1='116.1' x2='15.0' y2='122.5' stroke='#5a9a50' stroke-width='1.0' stroke-linecap='round'/><line x1='9.4' y1='116.1' x2='4.8' y2='125.4' stroke='#6aa85a' stroke-width='1.0' stroke-linecap='round'/><line x1='9.5' y1='117.4' x2='15.1' y2='126.0' stroke='#5a9a50' stroke-width='1.0' stroke-linecap='round'/><line x1='9.5' y1='117.4' x2='1.8' y2='128.5' stroke='#24522a' stroke-width='1.0' stroke-linecap='round'/><line x1='9.6' y1='118.7' x2='16.0' y2='124.6' stroke='#3e7c38' stroke-width='1.0' stroke-linecap='round'/><line x1='9.6' y1='118.7' x2='3.2' y2='130.2' stroke='#6aa85a' stroke-width='1.0' stroke-linecap='round'/><line x1='9.7' y1='120.0' x2='14.5' y2='126.7' stroke='#4c8a44' stroke-width='1.0' stroke-linecap='round'/><line x1='9.7' y1='120.0' x2='0.0' y2='128.9' stroke='#2e6a2c' stroke-width='1.0' stroke-linecap='round'/><line x1='9.8' y1='121.4' x2='19.9' y2='128.6' stroke='#4c8a44' stroke-width='1.0' stroke-linecap='round'/><line x1='9.8' y1='121.4' x2='5.8' y2='127.8' stroke='#6aa85a' stroke-width='1.0' stroke-linecap='round'/><line x1='9.9' y1='122.7' x2='17.1' y2='134.0' stroke='#6aa85a' stroke-width='1.0' stroke-linecap='round'/><line x1='9.9' y1='122.7' x2='1.5' y2='130.4' stroke='#6aa85a' stroke-width='1.0' stroke-linecap='round'/><line x1='18.0' y1='0.0' x2='25.8' y2='5.6' stroke='#3e7c38' stroke-width='1.0' stroke-linecap='round'/><line x1='18.0' y1='0.0' x2='16.3' y2='6.4' stroke='#4c8a44' stroke-width='1.0' stroke-linecap='round'/><line x1='18.4' y1='1.5' x2='25.9' y2='12.1' stroke='#24522a' stroke-width='1.0' stroke-linecap='round'/><line x1='18.4' y1='1.5' x2='16.4' y2='8.0' stroke='#4c8a44' stroke-width='1.0' stroke-linecap='round'/><line x1='18.7' y1='2.9' x2='25.2' y2='7.2' stroke='#4c8a44' stroke-width='1.0' stroke-linecap='round'/><line x1='18.7' y1='2.9' x2='15.7' y2='12.2' stroke='#24522a' stroke-width='1.0' stroke-linecap='round'/><line x1='19.1' y1='4.4' x2='24.8' y2='10.3' stroke='#8cbc74' stroke-width='1.0' stroke-linecap='round'/><line x1='19.1' y1='4.4' x2='18.0' y2='12.7' stroke='#2e6a2c' stroke-width='1.0' stroke-linecap='round'/><line x1='19.4' y1='5.9' x2='28.4' y2='11.3' stroke='#5a9a50' stroke-width='1.0' stroke-linecap='round'/><line x1='19.4' y1='5.9' x2='18.2' y2='14.4' stroke='#3e7c38' stroke-width='1.0' stroke-linecap='round'/><line x1='19.8' y1='7.4' x2='31.0' y2='13.7' stroke='#8cbc74' stroke-width='1.0' stroke-linecap='round'/><line x1='19.8' y1='7.4' x2='14.5' y2='17.0' stroke='#6aa85a' stroke-width='1.0' stroke-linecap='round'/><line x1='20.1' y1='8.8' x2='26.9' y2='16.9' stroke='#8cbc74' stroke-width='1.0' stroke-linecap='round'/><line x1='20.1' y1='8.8' x2='16.4' y2='21.4' stroke='#3e7c38' stroke-width='1.0' stroke-linecap='round'/><line x1='20.5' y1='10.3' x2='29.2' y2='16.5' stroke='#3e7c38' stroke-width='1.0' stroke-linecap='round'/><line x1='20.5' y1='10.3' x2='18.7' y2='22.3' stroke='#24522a' stroke-width='1.0' stroke-linecap='round'/><line x1='20.8' y1='11.8' x2='28.9' y2='19.9' stroke='#8cbc74' stroke-width='1.0' stroke-linecap='round'/><line x1='20.8' y1='11.8' x2='16.2' y2='23.5' stroke='#8cbc74' stroke-width='1.0' stroke-linecap='round'/><line x1='21.2' y1='13.2' x2='30.2' y2='21.3' stroke='#8cbc74' stroke-width='1.0' stroke-linecap='round'/><line x1='21.2' y1='13.2' x2='19.7' y2='24.3' stroke='#8cbc74' stroke-width='1.0' stroke-linecap='round'/><line x1='21.5' y1='14.7' x2='28.3' y2='23.5' stroke='#6aa85a' stroke-width='1.0' stroke-linecap='round'/><line x1='21.5' y1='14.7' x2='18.4' y2='21.2' stroke='#2e6a2c' stroke-width='1.0' stroke-linecap='round'/><line x1='21.9' y1='16.2' x2='29.6' y2='20.8' stroke='#2e6a2c' stroke-width='1.0' stroke-linecap='round'/><line x1='21.9' y1='16.2' x2='18.9' y2='25.3' stroke='#2e6a2c' stroke-width='1.0' stroke-linecap='round'/><line x1='22.2' y1='17.6' x2='29.8' y2='25.3' stroke='#6aa85a' stroke-width='1.0' stroke-linecap='round'/><line x1='22.2' y1='17.6' x2='20.2' y2='25.7' stroke='#5a9a50' stroke-width='1.0' stroke-linecap='round'/><line x1='22.6' y1='19.1' x2='30.0' y2='28.0' stroke='#24522a' stroke-width='1.0' stroke-linecap='round'/><line x1='22.6' y1='19.1' x2='18.7' y2='25.2' stroke='#24522a' stroke-width='1.0' stroke-linecap='round'/><line x1='22.9' y1='20.6' x2='33.0' y2='26.2' stroke='#4c8a44' stroke-width='1.0' stroke-linecap='round'/><line x1='22.9' y1='20.6' x2='16.8' y2='31.1' stroke='#3e7c38' stroke-width='1.0' stroke-linecap='round'/><line x1='23.3' y1='22.1' x2='28.6' y2='28.0' stroke='#6aa85a' stroke-width='1.0' stroke-linecap='round'/><line x1='23.3' y1='22.1' x2='19.1' y2='30.7' stroke='#8cbc74' stroke-width='1.0' stroke-linecap='round'/><line x1='23.6' y1='23.5' x2='31.3' y2='29.6' stroke='#6aa85a' stroke-width='1.0' stroke-linecap='round'/><line x1='23.6' y1='23.5' x2='21.8' y2='30.2' stroke='#6aa85a' stroke-width='1.0' stroke-linecap='round'/><line x1='24.0' y1='25.0' x2='29.0' y2='30.1' stroke='#3e7c38' stroke-width='1.0' stroke-linecap='round'/><line x1='24.0' y1='25.0' x2='20.9' y2='35.4' stroke='#6aa85a' stroke-width='1.0' stroke-linecap='round'/><line x1='24.4' y1='26.5' x2='32.7' y2='32.5' stroke='#2e6a2c' stroke-width='1.0' stroke-linecap='round'/><line x1='24.4' y1='26.5' x2='20.8' y2='35.6' stroke='#6aa85a' stroke-width='1.0' stroke-linecap='round'/><line x1='24.7' y1='27.9' x2='31.7' y2='32.0' stroke='#5a9a50' stroke-width='1.0' stroke-linecap='round'/><line x1='24.7' y1='27.9' x2='22.0' y2='37.6' stroke='#5a9a50' stroke-width='1.0' stroke-linecap='round'/><line x1='25.1' y1='29.4' x2='33.9' y2='37.0' stroke='#24522a' stroke-width='1.0' stroke-linecap='round'/><line x1='25.1' y1='29.4' x2='22.1' y2='42.1' stroke='#5a9a50' stroke-width='1.0' stroke-linecap='round'/><line x1='25.4' y1='30.9' x2='33.9' y2='35.4' stroke='#8cbc74' stroke-width='1.0' stroke-linecap='round'/><line x1='25.4' y1='30.9' x2='20.5' y2='43.1' stroke='#4c8a44' stroke-width='1.0' stroke-linecap='round'/><line x1='25.8' y1='32.4' x2='35.7' y2='40.2' stroke='#3e7c38' stroke-width='1.0' stroke-linecap='round'/><line x1='25.8' y1='32.4' x2='24.6' y2='39.5' stroke='#6aa85a' stroke-width='1.0' stroke-linecap='round'/><line x1='26.1' y1='33.8' x2='35.7' y2='42.5' stroke='#3e7c38' stroke-width='1.0' stroke-linecap='round'/><line x1='26.1' y1='33.8' x2='21.7' y2='43.6' stroke='#4c8a44' stroke-width='1.0' stroke-linecap='round'/><line x1='26.5' y1='35.3' x2='33.3' y2='44.2' stroke='#3e7c38' stroke-width='1.0' stroke-linecap='round'/><line x1='26.5' y1='35.3' x2='21.9' y2='46.8' stroke='#5a9a50' stroke-width='1.0' stroke-linecap='round'/><line x1='26.8' y1='36.8' x2='32.7' y2='39.9' stroke='#5a9a50' stroke-width='1.0' stroke-linecap='round'/><line x1='26.8' y1='36.8' x2='22.7' y2='45.1' stroke='#6aa85a' stroke-width='1.0' stroke-linecap='round'/><line x1='27.2' y1='38.2' x2='34.8' y2='42.8' stroke='#4c8a44' stroke-width='1.0' stroke-linecap='round'/><line x1='27.2' y1='38.2' x2='25.6' y2='46.9' stroke='#4c8a44' stroke-width='1.0' stroke-linecap='round'/><line x1='27.5' y1='39.7' x2='35.5' y2='48.8' stroke='#2e6a2c' stroke-width='1.0' stroke-linecap='round'/><line x1='27.5' y1='39.7' x2='23.1' y2='46.2' stroke='#2e6a2c' stroke-width='1.0' stroke-linecap='round'/><line x1='27.9' y1='41.2' x2='33.0' y2='48.0' stroke='#4c8a44' stroke-width='1.0' stroke-linecap='round'/><line x1='27.9' y1='41.2' x2='26.4' y2='50.2' stroke='#8cbc74' stroke-width='1.0' stroke-linecap='round'/><line x1='28.2' y1='42.6' x2='34.7' y2='48.9' stroke='#5a9a50' stroke-width='1.0' stroke-linecap='round'/><line x1='28.2' y1='42.6' x2='22.3' y2='53.4' stroke='#4c8a44' stroke-width='1.0' stroke-linecap='round'/><line x1='28.6' y1='44.1' x2='39.1' y2='50.2' stroke='#4c8a44' stroke-width='1.0' stroke-linecap='round'/><line x1='28.6' y1='44.1' x2='25.3' y2='51.0' stroke='#4c8a44' stroke-width='1.0' stroke-linecap='round'/><line x1='28.9' y1='45.6' x2='35.6' y2='51.1' stroke='#8cbc74' stroke-width='1.0' stroke-linecap='round'/><line x1='28.9' y1='45.6' x2='25.0' y2='57.9' stroke='#2e6a2c' stroke-width='1.0' stroke-linecap='round'/><line x1='29.3' y1='47.1' x2='36.1' y2='55.4' stroke='#24522a' stroke-width='1.0' stroke-linecap='round'/><line x1='29.3' y1='47.1' x2='24.9' y2='57.5' stroke='#2e6a2c' stroke-width='1.0' stroke-linecap='round'/><line x1='29.6' y1='48.5' x2='35.1' y2='56.1' stroke='#24522a' stroke-width='1.0' stroke-linecap='round'/><line x1='29.6' y1='48.5' x2='24.4' y2='58.0' stroke='#4c8a44' stroke-width='1.0' stroke-linecap='round'/><line x1='30.0' y1='50.0' x2='38.9' y2='59.0' stroke='#24522a' stroke-width='1.0' stroke-linecap='round'/><line x1='30.0' y1='50.0' x2='27.5' y2='59.4' stroke='#4c8a44' stroke-width='1.0' stroke-linecap='round'/><line x1='30.2' y1='51.5' x2='36.6' y2='56.8' stroke='#6aa85a' stroke-width='1.0' stroke-linecap='round'/><line x1='30.2' y1='51.5' x2='25.0' y2='57.9' stroke='#6aa85a' stroke-width='1.0' stroke-linecap='round'/><line x1='30.5' y1='53.0' x2='38.2' y2='59.1' stroke='#6aa85a' stroke-width='1.0' stroke-linecap='round'/><line x1='30.5' y1='53.0' x2='27.5' y2='60.1' stroke='#3e7c38' stroke-width='1.0' stroke-linecap='round'/><line x1='30.7' y1='54.5' x2='39.0' y2='60.0' stroke='#8cbc74' stroke-width='1.0' stroke-linecap='round'/><line x1='30.7' y1='54.5' x2='27.2' y2='61.8' stroke='#4c8a44' stroke-width='1.0' stroke-linecap='round'/><line x1='31.0' y1='56.0' x2='35.8' y2='64.3' stroke='#3e7c38' stroke-width='1.0' stroke-linecap='round'/><line x1='31.0' y1='56.0' x2='27.2' y2='63.3' stroke='#3e7c38' stroke-width='1.0' stroke-linecap='round'/><line x1='31.2' y1='57.6' x2='36.6' y2='62.3' stroke='#3e7c38' stroke-width='1.0' stroke-linecap='round'/><line x1='31.2' y1='57.6' x2='26.7' y2='68.6' stroke='#3e7c38' stroke-width='1.0' stroke-linecap='round'/><line x1='31.5' y1='59.1' x2='37.8' y2='68.7' stroke='#5a9a50' stroke-width='1.0' stroke-linecap='round'/><line x1='31.5' y1='59.1' x2='27.1' y2='69.7' stroke='#3e7c38' stroke-width='1.0' stroke-linecap='round'/><line x1='31.7' y1='60.6' x2='38.3' y2='66.5' stroke='#2e6a2c' stroke-width='1.0' stroke-linecap='round'/><line x1='31.7' y1='60.6' x2='27.2' y2='69.9' stroke='#4c8a44' stroke-width='1.0' stroke-linecap='round'/><line x1='32.0' y1='62.1' x2='40.1' y2='67.8' stroke='#6aa85a' stroke-width='1.0' stroke-linecap='round'/><line x1='32.0' y1='62.1' x2='25.1' y2='72.2' stroke='#2e6a2c' stroke-width='1.0' stroke-linecap='round'/><line x1='32.2' y1='63.6' x2='38.6' y2='68.8' stroke='#5a9a50' stroke-width='1.0' stroke-linecap='round'/><line x1='32.2' y1='63.6' x2='27.5' y2='71.8' stroke='#4c8a44' stroke-width='1.0' stroke-linecap='round'/><line x1='32.4' y1='65.1' x2='39.4' y2='75.3' stroke='#2e6a2c' stroke-width='1.0' stroke-linecap='round'/><line x1='32.4' y1='65.1' x2='30.0' y2='74.2' stroke='#8cbc74' stroke-width='1.0' stroke-linecap='round'/><line x1='32.7' y1='66.6' x2='38.0' y2='74.8' stroke='#24522a' stroke-width='1.0' stroke-linecap='round'/><line x1='32.7' y1='66.6' x2='29.6' y2='73.0' stroke='#8cbc74' stroke-width='1.0' stroke-linecap='round'/><line x1='32.9' y1='68.1' x2='39.6' y2='75.2' stroke='#5a9a50' stroke-width='1.0' stroke-linecap='round'/><line x1='32.9' y1='68.1' x2='30.6' y2='75.1' stroke='#3e7c38' stroke-width='1.0' stroke-linecap='round'/><line x1='33.2' y1='69.6' x2='43.7' y2='77.2' stroke='#2e6a2c' stroke-width='1.0' stroke-linecap='round'/><line x1='33.2' y1='69.6' x2='26.1' y2='78.5' stroke='#6aa85a' stroke-width='1.0' stroke-linecap='round'/><line x1='33.4' y1='71.1' x2='40.5' y2='81.5' stroke='#2e6a2c' stroke-width='1.0' stroke-linecap='round'/><line x1='33.4' y1='71.1' x2='30.3' y2='77.2' stroke='#8cbc74' stroke-width='1.0' stroke-linecap='round'/><line x1='33.7' y1='72.7' x2='42.2' y2='78.6' stroke='#2e6a2c' stroke-width='1.0' stroke-linecap='round'/><line x1='33.7' y1='72.7' x2='29.4' y2='80.1' stroke='#3e7c38' stroke-width='1.0' stroke-linecap='round'/><line x1='33.9' y1='74.2' x2='40.5' y2='81.8' stroke='#5a9a50' stroke-width='1.0' stroke-linecap='round'/><line x1='33.9' y1='74.2' x2='30.1' y2='80.4' stroke='#2e6a2c' stroke-width='1.0' stroke-linecap='round'/><line x1='34.2' y1='75.7' x2='44.0' y2='83.9' stroke='#3e7c38' stroke-width='1.0' stroke-linecap='round'/><line x1='34.2' y1='75.7' x2='31.1' y2='83.1' stroke='#24522a' stroke-width='1.0' stroke-linecap='round'/><line x1='34.4' y1='77.2' x2='43.1' y2='82.5' stroke='#5a9a50' stroke-width='1.0' stroke-linecap='round'/><line x1='34.4' y1='77.2' x2='31.5' y2='85.4' stroke='#8cbc74' stroke-width='1.0' stroke-linecap='round'/><line x1='34.7' y1='78.7' x2='40.0' y2='86.8' stroke='#3e7c38' stroke-width='1.0' stroke-linecap='round'/><line x1='34.7' y1='78.7' x2='31.6' y2='84.7' stroke='#5a9a50' stroke-width='1.0' stroke-linecap='round'/><line x1='34.9' y1='80.2' x2='40.3' y2='87.0' stroke='#2e6a2c' stroke-width='1.0' stroke-linecap='round'/><line x1='34.9' y1='80.2' x2='31.3' y2='92.1' stroke='#6aa85a' stroke-width='1.0' stroke-linecap='round'/><line x1='35.1' y1='81.7' x2='41.2' y2='87.4' stroke='#6aa85a' stroke-width='1.0' stroke-linecap='round'/><line x1='35.1' y1='81.7' x2='31.5' y2='90.0' stroke='#5a9a50' stroke-width='1.0' stroke-linecap='round'/><line x1='35.4' y1='83.2' x2='42.8' y2='88.0' stroke='#5a9a50' stroke-width='1.0' stroke-linecap='round'/><line x1='35.4' y1='83.2' x2='32.0' y2='91.8' stroke='#2e6a2c' stroke-width='1.0' stroke-linecap='round'/><line x1='35.6' y1='84.7' x2='42.3' y2='94.1' stroke='#24522a' stroke-width='1.0' stroke-linecap='round'/><line x1='35.6' y1='84.7' x2='33.3' y2='94.3' stroke='#3e7c38' stroke-width='1.0' stroke-linecap='round'/><line x1='35.9' y1='86.2' x2='45.0' y2='94.0' stroke='#3e7c38' stroke-width='1.0' stroke-linecap='round'/><line x1='35.9' y1='86.2' x2='32.4' y2='93.8' stroke='#4c8a44' stroke-width='1.0' stroke-linecap='round'/><line x1='36.1' y1='87.8' x2='44.9' y2='93.8' stroke='#24522a' stroke-width='1.0' stroke-linecap='round'/><line x1='36.1' y1='87.8' x2='33.8' y2='95.5' stroke='#5a9a50' stroke-width='1.0' stroke-linecap='round'/><line x1='36.4' y1='89.3' x2='40.1' y2='95.1' stroke='#24522a' stroke-width='1.0' stroke-linecap='round'/><line x1='36.4' y1='89.3' x2='33.9' y2='98.1' stroke='#3e7c38' stroke-width='1.0' stroke-linecap='round'/><line x1='36.6' y1='90.8' x2='45.5' y2='96.4' stroke='#5a9a50' stroke-width='1.0' stroke-linecap='round'/><line x1='36.6' y1='90.8' x2='35.0' y2='97.6' stroke='#5a9a50' stroke-width='1.0' stroke-linecap='round'/><line x1='36.9' y1='92.3' x2='44.9' y2='100.2' stroke='#4c8a44' stroke-width='1.0' stroke-linecap='round'/><line x1='36.9' y1='92.3' x2='29.8' y2='103.4' stroke='#3e7c38' stroke-width='1.0' stroke-linecap='round'/><line x1='37.1' y1='93.8' x2='43.0' y2='98.9' stroke='#24522a' stroke-width='1.0' stroke-linecap='round'/><line x1='37.1' y1='93.8' x2='33.4' y2='99.5' stroke='#6aa85a' stroke-width='1.0' stroke-linecap='round'/><line x1='37.3' y1='95.3' x2='44.8' y2='104.9' stroke='#4c8a44' stroke-width='1.0' stroke-linecap='round'/><line x1='37.3' y1='95.3' x2='34.4' y2='102.0' stroke='#2e6a2c' stroke-width='1.0' stroke-linecap='round'/><line x1='37.6' y1='96.8' x2='44.5' y2='102.5' stroke='#2e6a2c' stroke-width='1.0' stroke-linecap='round'/><line x1='37.6' y1='96.8' x2='32.2' y2='107.1' stroke='#5a9a50' stroke-width='1.0' stroke-linecap='round'/><line x1='37.8' y1='98.3' x2='46.8' y2='106.3' stroke='#8cbc74' stroke-width='1.0' stroke-linecap='round'/><line x1='37.8' y1='98.3' x2='33.8' y2='104.2' stroke='#6aa85a' stroke-width='1.0' stroke-linecap='round'/><line x1='38.1' y1='99.8' x2='44.5' y2='106.2' stroke='#5a9a50' stroke-width='1.0' stroke-linecap='round'/><line x1='38.1' y1='99.8' x2='35.4' y2='108.4' stroke='#5a9a50' stroke-width='1.0' stroke-linecap='round'/><line x1='38.3' y1='101.3' x2='46.2' y2='106.3' stroke='#8cbc74' stroke-width='1.0' stroke-linecap='round'/><line x1='38.3' y1='101.3' x2='33.8' y2='109.4' stroke='#5a9a50' stroke-width='1.0' stroke-linecap='round'/><line x1='38.6' y1='102.9' x2='44.5' y2='106.6' stroke='#2e6a2c' stroke-width='1.0' stroke-linecap='round'/><line x1='38.6' y1='102.9' x2='34.8' y2='113.8' stroke='#24522a' stroke-width='1.0' stroke-linecap='round'/><line x1='38.8' y1='104.4' x2='45.1' y2='109.9' stroke='#24522a' stroke-width='1.0' stroke-linecap='round'/><line x1='38.8' y1='104.4' x2='36.3' y2='115.6' stroke='#6aa85a' stroke-width='1.0' stroke-linecap='round'/><line x1='39.1' y1='105.9' x2='45.5' y2='111.3' stroke='#2e6a2c' stroke-width='1.0' stroke-linecap='round'/><line x1='39.1' y1='105.9' x2='33.5' y2='114.8' stroke='#8cbc74' stroke-width='1.0' stroke-linecap='round'/><line x1='39.3' y1='107.4' x2='47.6' y2='117.2' stroke='#2e6a2c' stroke-width='1.0' stroke-linecap='round'/><line x1='39.3' y1='107.4' x2='35.1' y2='113.4' stroke='#6aa85a' stroke-width='1.0' stroke-linecap='round'/><line x1='39.6' y1='108.9' x2='46.2' y2='119.9' stroke='#5a9a50' stroke-width='1.0' stroke-linecap='round'/><line x1='39.6' y1='108.9' x2='32.5' y2='119.4' stroke='#8cbc74' stroke-width='1.0' stroke-linecap='round'/><line x1='39.8' y1='110.4' x2='48.7' y2='119.5' stroke='#3e7c38' stroke-width='1.0' stroke-linecap='round'/><line x1='39.8' y1='110.4' x2='37.2' y2='122.9' stroke='#4c8a44' stroke-width='1.0' stroke-linecap='round'/><line x1='40.0' y1='111.9' x2='46.7' y2='121.5' stroke='#24522a' stroke-width='1.0' stroke-linecap='round'/><line x1='40.0' y1='111.9' x2='36.2' y2='123.6' stroke='#5a9a50' stroke-width='1.0' stroke-linecap='round'/><line x1='40.3' y1='113.4' x2='49.1' y2='121.3' stroke='#2e6a2c' stroke-width='1.0' stroke-linecap='round'/><line x1='40.3' y1='113.4' x2='36.2' y2='121.7' stroke='#3e7c38' stroke-width='1.0' stroke-linecap='round'/><line x1='40.5' y1='114.9' x2='46.0' y2='119.3' stroke='#2e6a2c' stroke-width='1.0' stroke-linecap='round'/><line x1='40.5' y1='114.9' x2='36.2' y2='124.2' stroke='#3e7c38' stroke-width='1.0' stroke-linecap='round'/><line x1='40.8' y1='116.4' x2='47.1' y2='127.2' stroke='#2e6a2c' stroke-width='1.0' stroke-linecap='round'/><line x1='40.8' y1='116.4' x2='38.4' y2='123.2' stroke='#2e6a2c' stroke-width='1.0' stroke-linecap='round'/><line x1='41.0' y1='118.0' x2='50.5' y2='127.0' stroke='#5a9a50' stroke-width='1.0' stroke-linecap='round'/><line x1='41.0' y1='118.0' x2='38.9' y2='125.1' stroke='#5a9a50' stroke-width='1.0' stroke-linecap='round'/><line x1='41.3' y1='119.5' x2='48.5' y2='127.8' stroke='#6aa85a' stroke-width='1.0' stroke-linecap='round'/><line x1='41.3' y1='119.5' x2='36.0' y2='129.9' stroke='#8cbc74' stroke-width='1.0' stroke-linecap='round'/><line x1='41.5' y1='121.0' x2='51.5' y2='127.9' stroke='#4c8a44' stroke-width='1.0' stroke-linecap='round'/><line x1='41.5' y1='121.0' x2='38.7' y2='128.9' stroke='#4c8a44' stroke-width='1.0' stroke-linecap='round'/><line x1='41.8' y1='122.5' x2='46.6' y2='128.8' stroke='#3e7c38' stroke-width='1.0' stroke-linecap='round'/><line x1='41.8' y1='122.5' x2='39.4' y2='130.3' stroke='#4c8a44' stroke-width='1.0' stroke-linecap='round'/><line x1='4.0' y1='0.0' x2='14.1' y2='8.2' stroke='#6aa85a' stroke-width='0.9' stroke-linecap='round'/><line x1='4.0' y1='0.0' x2='3.0' y2='10.3' stroke='#5a9a50' stroke-width='0.9' stroke-linecap='round'/><line x1='4.5' y1='1.2' x2='13.4' y2='6.0' stroke='#3e7c38' stroke-width='0.9' stroke-linecap='round'/><line x1='4.5' y1='1.2' x2='-1.8' y2='16.3' stroke='#3e7c38' stroke-width='0.9' stroke-linecap='round'/><line x1='4.9' y1='2.3' x2='20.0' y2='6.1' stroke='#5a9a50' stroke-width='0.9' stroke-linecap='round'/><line x1='4.9' y1='2.3' x2='-2.5' y2='16.3' stroke='#2e6a2c' stroke-width='0.9' stroke-linecap='round'/><line x1='5.4' y1='3.5' x2='13.3' y2='9.9' stroke='#2e6a2c' stroke-width='0.9' stroke-linecap='round'/><line x1='5.4' y1='3.5' x2='2.8' y2='19.5' stroke='#c4d8a8' stroke-width='0.9' stroke-linecap='round'/><line x1='5.8' y1='4.6' x2='14.2' y2='7.6' stroke='#a8c890' stroke-width='0.9' stroke-linecap='round'/><line x1='5.8' y1='4.6' x2='0.1' y2='15.1' stroke='#24522a' stroke-width='0.9' stroke-linecap='round'/><line x1='6.3' y1='5.8' x2='17.4' y2='13.9' stroke='#2e6a2c' stroke-width='0.9' stroke-linecap='round'/><line x1='6.3' y1='5.8' x2='4.7' y2='18.8' stroke='#c4d8a8' stroke-width='0.9' stroke-linecap='round'/><line x1='6.8' y1='6.9' x2='14.6' y2='10.4' stroke='#6aa85a' stroke-width='0.9' stroke-linecap='round'/><line x1='6.8' y1='6.9' x2='5.4' y2='16.8' stroke='#24522a' stroke-width='0.9' stroke-linecap='round'/><line x1='7.2' y1='8.1' x2='21.0' y2='11.8' stroke='#5a9a50' stroke-width='0.9' stroke-linecap='round'/><line x1='7.2' y1='8.1' x2='0.4' y2='21.4' stroke='#8cbc74' stroke-width='0.9' stroke-linecap='round'/><line x1='7.7' y1='9.2' x2='15.9' y2='14.6' stroke='#24522a' stroke-width='0.9' stroke-linecap='round'/><line x1='7.7' y1='9.2' x2='6.8' y2='17.7' stroke='#8cb878' stroke-width='0.9' stroke-linecap='round'/><line x1='8.2' y1='10.4' x2='15.8' y2='14.7' stroke='#3e7c38' stroke-width='0.9' stroke-linecap='round'/><line x1='8.2' y1='10.4' x2='2.0' y2='22.7' stroke='#4c8a44' stroke-width='0.9' stroke-linecap='round'/><line x1='8.6' y1='11.5' x2='16.2' y2='16.3' stroke='#4c8a44' stroke-width='0.9' stroke-linecap='round'/><line x1='8.6' y1='11.5' x2='5.9' y2='21.7' stroke='#24522a' stroke-width='0.9' stroke-linecap='round'/><line x1='9.1' y1='12.7' x2='18.9' y2='19.1' stroke='#2e6a2c' stroke-width='0.9' stroke-linecap='round'/><line x1='9.1' y1='12.7' x2='6.2' y2='25.3' stroke='#6aa85a' stroke-width='0.9' stroke-linecap='round'/><line x1='9.5' y1='13.8' x2='17.1' y2='17.5' stroke='#6aa85a' stroke-width='0.9' stroke-linecap='round'/><line x1='9.5' y1='13.8' x2='5.2' y2='24.5' stroke='#8cbc74' stroke-width='0.9' stroke-linecap='round'/><line x1='10.0' y1='15.0' x2='17.8' y2='17.8' stroke='#4c8a44' stroke-width='0.9' stroke-linecap='round'/><line x1='10.0' y1='15.0' x2='5.9' y2='29.4' stroke='#8cbc74' stroke-width='0.9' stroke-linecap='round'/><line x1='10.5' y1='16.2' x2='20.2' y2='21.9' stroke='#4c8a44' stroke-width='0.9' stroke-linecap='round'/><line x1='10.5' y1='16.2' x2='9.3' y2='24.8' stroke='#4c8a44' stroke-width='0.9' stroke-linecap='round'/><line x1='10.9' y1='17.3' x2='24.3' y2='25.7' stroke='#3e7c38' stroke-width='0.9' stroke-linecap='round'/><line x1='10.9' y1='17.3' x2='5.4' y2='32.2' stroke='#b0c898' stroke-width='0.9' stroke-linecap='round'/><line x1='11.4' y1='18.5' x2='19.7' y2='22.9' stroke='#24522a' stroke-width='0.9' stroke-linecap='round'/><line x1='11.4' y1='18.5' x2='10.0' y2='28.0' stroke='#3e7c38' stroke-width='0.9' stroke-linecap='round'/><line x1='11.8' y1='19.6' x2='23.6' y2='23.2' stroke='#5a9a50' stroke-width='0.9' stroke-linecap='round'/><line x1='11.8' y1='19.6' x2='8.6' y2='34.4' stroke='#2e6a2c' stroke-width='0.9' stroke-linecap='round'/><line x1='12.3' y1='20.8' x2='21.4' y2='28.9' stroke='#2e6a2c' stroke-width='0.9' stroke-linecap='round'/><line x1='12.3' y1='20.8' x2='7.4' y2='33.3' stroke='#3e7c38' stroke-width='0.9' stroke-linecap='round'/><line x1='12.8' y1='21.9' x2='23.0' y2='30.5' stroke='#4c8a44' stroke-width='0.9' stroke-linecap='round'/><line x1='12.8' y1='21.9' x2='7.0' y2='36.1' stroke='#c4d8a8' stroke-width='0.9' stroke-linecap='round'/><line x1='13.2' y1='23.1' x2='27.0' y2='29.6' stroke='#8cb878' stroke-width='0.9' stroke-linecap='round'/><line x1='13.2' y1='23.1' x2='11.6' y2='33.0' stroke='#8cbc74' stroke-width='0.9' stroke-linecap='round'/><line x1='13.7' y1='24.2' x2='20.9' y2='30.5' stroke='#6aa85a' stroke-width='0.9' stroke-linecap='round'/><line x1='13.7' y1='24.2' x2='12.4' y2='34.4' stroke='#b0c898' stroke-width='0.9' stroke-linecap='round'/><line x1='14.2' y1='25.4' x2='22.0' y2='31.3' stroke='#a8c890' stroke-width='0.9' stroke-linecap='round'/><line x1='14.2' y1='25.4' x2='7.7' y2='37.6' stroke='#6aa05a' stroke-width='0.9' stroke-linecap='round'/><line x1='14.6' y1='26.5' x2='21.9' y2='32.2' stroke='#c4d8a8' stroke-width='0.9' stroke-linecap='round'/><line x1='14.6' y1='26.5' x2='10.2' y2='41.1' stroke='#24522a' stroke-width='0.9' stroke-linecap='round'/><line x1='15.1' y1='27.7' x2='24.2' y2='33.5' stroke='#5a9a50' stroke-width='0.9' stroke-linecap='round'/><line x1='15.1' y1='27.7' x2='11.3' y2='40.8' stroke='#8cb878' stroke-width='0.9' stroke-linecap='round'/><line x1='15.5' y1='28.8' x2='24.1' y2='33.5' stroke='#2e6a2c' stroke-width='0.9' stroke-linecap='round'/><line x1='15.5' y1='28.8' x2='11.0' y2='40.3' stroke='#5a9a50' stroke-width='0.9' stroke-linecap='round'/><line x1='16.0' y1='30.0' x2='27.6' y2='36.7' stroke='#8cb878' stroke-width='0.9' stroke-linecap='round'/><line x1='16.0' y1='30.0' x2='8.3' y2='42.8' stroke='#8cbc74' stroke-width='0.9' stroke-linecap='round'/><line x1='16.4' y1='31.2' x2='25.1' y2='34.4' stroke='#8cbc74' stroke-width='0.9' stroke-linecap='round'/><line x1='16.4' y1='31.2' x2='11.9' y2='45.3' stroke='#a8c890' stroke-width='0.9' stroke-linecap='round'/><line x1='16.8' y1='32.3' x2='24.1' y2='36.8' stroke='#6aa05a' stroke-width='0.9' stroke-linecap='round'/><line x1='16.8' y1='32.3' x2='13.8' y2='47.9' stroke='#6aa85a' stroke-width='0.9' stroke-linecap='round'/><line x1='17.2' y1='33.5' x2='26.8' y2='41.4' stroke='#2e6a2c' stroke-width='0.9' stroke-linecap='round'/><line x1='17.2' y1='33.5' x2='9.6' y2='47.2' stroke='#6aa05a' stroke-width='0.9' stroke-linecap='round'/><line x1='17.5' y1='34.6' x2='24.2' y2='41.2' stroke='#3e7c38' stroke-width='0.9' stroke-linecap='round'/><line x1='17.5' y1='34.6' x2='9.2' y2='46.2' stroke='#3e7c38' stroke-width='0.9' stroke-linecap='round'/><line x1='17.9' y1='35.8' x2='33.0' y2='42.1' stroke='#8cb878' stroke-width='0.9' stroke-linecap='round'/><line x1='17.9' y1='35.8' x2='13.9' y2='50.2' stroke='#4c8a44' stroke-width='0.9' stroke-linecap='round'/><line x1='18.3' y1='36.9' x2='29.7' y2='45.4' stroke='#5a9a50' stroke-width='0.9' stroke-linecap='round'/><line x1='18.3' y1='36.9' x2='16.5' y2='47.9' stroke='#24522a' stroke-width='0.9' stroke-linecap='round'/><line x1='18.7' y1='38.1' x2='33.2' y2='43.9' stroke='#24522a' stroke-width='0.9' stroke-linecap='round'/><line x1='18.7' y1='38.1' x2='12.1' y2='48.1' stroke='#24522a' stroke-width='0.9' stroke-linecap='round'/><line x1='19.1' y1='39.2' x2='32.6' y2='47.5' stroke='#5a9a50' stroke-width='0.9' stroke-linecap='round'/><line x1='19.1' y1='39.2' x2='13.6' y2='51.4' stroke='#5a9a50' stroke-width='0.9' stroke-linecap='round'/><line x1='19.5' y1='40.4' x2='27.1' y2='44.2' stroke='#4c8a44' stroke-width='0.9' stroke-linecap='round'/><line x1='19.5' y1='40.4' x2='15.1' y2='53.2' stroke='#24522a' stroke-width='0.9' stroke-linecap='round'/><line x1='19.8' y1='41.5' x2='32.4' y2='50.9' stroke='#4c8a44' stroke-width='0.9' stroke-linecap='round'/><line x1='19.8' y1='41.5' x2='14.6' y2='50.6' stroke='#a8c890' stroke-width='0.9' stroke-linecap='round'/><line x1='20.2' y1='42.7' x2='34.8' y2='47.6' stroke='#8cb878' stroke-width='0.9' stroke-linecap='round'/><line x1='20.2' y1='42.7' x2='15.1' y2='54.7' stroke='#3e7c38' stroke-width='0.9' stroke-linecap='round'/><line x1='20.6' y1='43.8' x2='32.1' y2='49.1' stroke='#8cbc74' stroke-width='0.9' stroke-linecap='round'/><line x1='20.6' y1='43.8' x2='15.2' y2='53.8' stroke='#8cbc74' stroke-width='0.9' stroke-linecap='round'/><line x1='21.0' y1='45.0' x2='30.1' y2='54.3' stroke='#6aa85a' stroke-width='0.9' stroke-linecap='round'/><line x1='21.0' y1='45.0' x2='18.4' y2='53.5' stroke='#5a9a50' stroke-width='0.9' stroke-linecap='round'/><line x1='21.4' y1='46.2' x2='34.7' y2='51.6' stroke='#2e6a2c' stroke-width='0.9' stroke-linecap='round'/><line x1='21.4' y1='46.2' x2='18.0' y2='58.2' stroke='#24522a' stroke-width='0.9' stroke-linecap='round'/><line x1='21.8' y1='47.3' x2='35.1' y2='56.8' stroke='#c4d8a8' stroke-width='0.9' stroke-linecap='round'/><line x1='21.8' y1='47.3' x2='13.1' y2='60.3' stroke='#b0c898' stroke-width='0.9' stroke-linecap='round'/><line x1='22.2' y1='48.5' x2='30.3' y2='51.0' stroke='#4c8a44' stroke-width='0.9' stroke-linecap='round'/><line x1='22.2' y1='48.5' x2='18.6' y2='61.4' stroke='#8cbc74' stroke-width='0.9' stroke-linecap='round'/><line x1='22.5' y1='49.6' x2='35.8' y2='57.9' stroke='#4c8a44' stroke-width='0.9' stroke-linecap='round'/><line x1='22.5' y1='49.6' x2='17.7' y2='62.0' stroke='#2e6a2c' stroke-width='0.9' stroke-linecap='round'/><line x1='22.9' y1='50.8' x2='30.8' y2='53.3' stroke='#6aa85a' stroke-width='0.9' stroke-linecap='round'/><line x1='22.9' y1='50.8' x2='19.5' y2='62.9' stroke='#a8c890' stroke-width='0.9' stroke-linecap='round'/><line x1='23.3' y1='51.9' x2='35.3' y2='57.2' stroke='#c4d8a8' stroke-width='0.9' stroke-linecap='round'/><line x1='23.3' y1='51.9' x2='21.1' y2='63.0' stroke='#8cb878' stroke-width='0.9' stroke-linecap='round'/><line x1='23.7' y1='53.1' x2='31.5' y2='56.2' stroke='#5a9a50' stroke-width='0.9' stroke-linecap='round'/><line x1='23.7' y1='53.1' x2='18.2' y2='63.7' stroke='#3e7c38' stroke-width='0.9' stroke-linecap='round'/><line x1='24.1' y1='54.2' x2='36.6' y2='63.2' stroke='#24522a' stroke-width='0.9' stroke-linecap='round'/><line x1='24.1' y1='54.2' x2='20.7' y2='64.1' stroke='#2e6a2c' stroke-width='0.9' stroke-linecap='round'/><line x1='24.5' y1='55.4' x2='38.7' y2='60.2' stroke='#6aa85a' stroke-width='0.9' stroke-linecap='round'/><line x1='24.5' y1='55.4' x2='19.1' y2='67.3' stroke='#c4d8a8' stroke-width='0.9' stroke-linecap='round'/><line x1='24.8' y1='56.5' x2='35.1' y2='66.5' stroke='#5a9a50' stroke-width='0.9' stroke-linecap='round'/><line x1='24.8' y1='56.5' x2='23.1' y2='64.6' stroke='#2e6a2c' stroke-width='0.9' stroke-linecap='round'/><line x1='25.2' y1='57.7' x2='35.0' y2='63.9' stroke='#5a9a50' stroke-width='0.9' stroke-linecap='round'/><line x1='25.2' y1='57.7' x2='22.0' y2='73.1' stroke='#3e7c38' stroke-width='0.9' stroke-linecap='round'/><line x1='25.6' y1='58.8' x2='37.8' y2='62.7' stroke='#5a9a50' stroke-width='0.9' stroke-linecap='round'/><line x1='25.6' y1='58.8' x2='23.7' y2='68.5' stroke='#c4d8a8' stroke-width='0.9' stroke-linecap='round'/><line x1='26.0' y1='60.0' x2='35.7' y2='69.5' stroke='#8cbc74' stroke-width='0.9' stroke-linecap='round'/><line x1='26.0' y1='60.0' x2='19.9' y2='67.5' stroke='#24522a' stroke-width='0.9' stroke-linecap='round'/><line x1='26.2' y1='61.2' x2='38.1' y2='67.5' stroke='#b0c898' stroke-width='0.9' stroke-linecap='round'/><line x1='26.2' y1='61.2' x2='17.4' y2='72.3' stroke='#2e6a2c' stroke-width='0.9' stroke-linecap='round'/><line x1='26.4' y1='62.4' x2='35.9' y2='69.5' stroke='#8cb878' stroke-width='0.9' stroke-linecap='round'/><line x1='26.4' y1='62.4' x2='22.1' y2='75.4' stroke='#4c8a44' stroke-width='0.9' stroke-linecap='round'/><line x1='26.6' y1='63.6' x2='34.3' y2='68.5' stroke='#5a9a50' stroke-width='0.9' stroke-linecap='round'/><line x1='26.6' y1='63.6' x2='21.4' y2='71.3' stroke='#b0c898' stroke-width='0.9' stroke-linecap='round'/><line x1='26.8' y1='64.8' x2='36.6' y2='77.5' stroke='#24522a' stroke-width='0.9' stroke-linecap='round'/><line x1='26.8' y1='64.8' x2='20.6' y2='73.2' stroke='#a8c890' stroke-width='0.9' stroke-linecap='round'/><line x1='27.0' y1='66.0' x2='36.8' y2='75.9' stroke='#a8c890' stroke-width='0.9' stroke-linecap='round'/><line x1='27.0' y1='66.0' x2='19.6' y2='73.8' stroke='#5a9a50' stroke-width='0.9' stroke-linecap='round'/><line x1='27.2' y1='67.2' x2='38.2' y2='73.2' stroke='#4c8a44' stroke-width='0.9' stroke-linecap='round'/><line x1='27.2' y1='67.2' x2='23.2' y2='76.6' stroke='#b0c898' stroke-width='0.9' stroke-linecap='round'/><line x1='27.4' y1='68.4' x2='35.6' y2='73.5' stroke='#6aa85a' stroke-width='0.9' stroke-linecap='round'/><line x1='27.4' y1='68.4' x2='23.3' y2='79.1' stroke='#c4d8a8' stroke-width='0.9' stroke-linecap='round'/><line x1='27.7' y1='69.7' x2='40.9' y2='78.2' stroke='#6aa05a' stroke-width='0.9' stroke-linecap='round'/><line x1='27.7' y1='69.7' x2='16.6' y2='81.7' stroke='#a8c890' stroke-width='0.9' stroke-linecap='round'/><line x1='27.9' y1='70.9' x2='39.6' y2='80.5' stroke='#b0c898' stroke-width='0.9' stroke-linecap='round'/><line x1='27.9' y1='70.9' x2='25.5' y2='79.0' stroke='#b0c898' stroke-width='0.9' stroke-linecap='round'/><line x1='28.1' y1='72.1' x2='41.2' y2='80.5' stroke='#5a9a50' stroke-width='0.9' stroke-linecap='round'/><line x1='28.1' y1='72.1' x2='22.1' y2='83.7' stroke='#c4d8a8' stroke-width='0.9' stroke-linecap='round'/><line x1='28.3' y1='73.3' x2='34.1' y2='80.7' stroke='#2e6a2c' stroke-width='0.9' stroke-linecap='round'/><line x1='28.3' y1='73.3' x2='23.9' y2='85.9' stroke='#4c8a44' stroke-width='0.9' stroke-linecap='round'/><line x1='28.5' y1='74.5' x2='36.1' y2='80.0' stroke='#2e6a2c' stroke-width='0.9' stroke-linecap='round'/><line x1='28.5' y1='74.5' x2='25.8' y2='83.5' stroke='#6aa05a' stroke-width='0.9' stroke-linecap='round'/><line x1='28.7' y1='75.7' x2='38.7' y2='85.4' stroke='#b0c898' stroke-width='0.9' stroke-linecap='round'/><line x1='28.7' y1='75.7' x2='24.1' y2='90.3' stroke='#6aa85a' stroke-width='0.9' stroke-linecap='round'/><line x1='28.9' y1='76.9' x2='42.6' y2='85.4' stroke='#a8c890' stroke-width='0.9' stroke-linecap='round'/><line x1='28.9' y1='76.9' x2='23.1' y2='83.5' stroke='#b0c898' stroke-width='0.9' stroke-linecap='round'/><line x1='29.1' y1='78.1' x2='34.6' y2='85.4' stroke='#5a9a50' stroke-width='0.9' stroke-linecap='round'/><line x1='29.1' y1='78.1' x2='25.9' y2='86.0' stroke='#6aa05a' stroke-width='0.9' stroke-linecap='round'/><line x1='29.3' y1='79.3' x2='42.0' y2='86.2' stroke='#6aa05a' stroke-width='0.9' stroke-linecap='round'/><line x1='29.3' y1='79.3' x2='25.6' y2='87.6' stroke='#3e7c38' stroke-width='0.9' stroke-linecap='round'/><line x1='29.5' y1='80.5' x2='38.5' y2='90.7' stroke='#24522a' stroke-width='0.9' stroke-linecap='round'/><line x1='29.5' y1='80.5' x2='24.5' y2='91.2' stroke='#2e6a2c' stroke-width='0.9' stroke-linecap='round'/><line x1='29.7' y1='81.7' x2='42.6' y2='91.1' stroke='#2e6a2c' stroke-width='0.9' stroke-linecap='round'/><line x1='29.7' y1='81.7' x2='23.0' y2='90.8' stroke='#6aa85a' stroke-width='0.9' stroke-linecap='round'/><line x1='29.9' y1='82.9' x2='38.8' y2='92.8' stroke='#8cb878' stroke-width='0.9' stroke-linecap='round'/><line x1='29.9' y1='82.9' x2='21.3' y2='93.1' stroke='#2e6a2c' stroke-width='0.9' stroke-linecap='round'/><line x1='30.1' y1='84.1' x2='35.8' y2='90.5' stroke='#a8c890' stroke-width='0.9' stroke-linecap='round'/><line x1='30.1' y1='84.1' x2='23.3' y2='92.9' stroke='#b0c898' stroke-width='0.9' stroke-linecap='round'/><line x1='30.3' y1='85.3' x2='41.8' y2='91.3' stroke='#b0c898' stroke-width='0.9' stroke-linecap='round'/><line x1='30.3' y1='85.3' x2='24.5' y2='92.2' stroke='#24522a' stroke-width='0.9' stroke-linecap='round'/><line x1='30.6' y1='86.6' x2='37.6' y2='90.8' stroke='#5a9a50' stroke-width='0.9' stroke-linecap='round'/><line x1='30.6' y1='86.6' x2='24.6' y2='99.7' stroke='#2e6a2c' stroke-width='0.9' stroke-linecap='round'/><line x1='30.8' y1='87.8' x2='41.8' y2='93.2' stroke='#8cb878' stroke-width='0.9' stroke-linecap='round'/><line x1='30.8' y1='87.8' x2='21.9' y2='100.0' stroke='#8cb878' stroke-width='0.9' stroke-linecap='round'/><line x1='31.0' y1='89.0' x2='42.8' y2='100.0' stroke='#a8c890' stroke-width='0.9' stroke-linecap='round'/><line x1='31.0' y1='89.0' x2='24.6' y2='103.7' stroke='#24522a' stroke-width='0.9' stroke-linecap='round'/><line x1='31.2' y1='90.2' x2='41.6' y2='102.3' stroke='#5a9a50' stroke-width='0.9' stroke-linecap='round'/><line x1='31.2' y1='90.2' x2='26.6' y2='98.1' stroke='#6aa05a' stroke-width='0.9' stroke-linecap='round'/><line x1='31.4' y1='91.4' x2='39.6' y2='100.5' stroke='#b0c898' stroke-width='0.9' stroke-linecap='round'/><line x1='31.4' y1='91.4' x2='26.5' y2='99.1' stroke='#6aa85a' stroke-width='0.9' stroke-linecap='round'/><line x1='31.6' y1='92.6' x2='40.9' y2='99.4' stroke='#8cbc74' stroke-width='0.9' stroke-linecap='round'/><line x1='31.6' y1='92.6' x2='22.0' y2='103.4' stroke='#8cbc74' stroke-width='0.9' stroke-linecap='round'/><line x1='31.8' y1='93.8' x2='37.1' y2='100.4' stroke='#5a9a50' stroke-width='0.9' stroke-linecap='round'/><line x1='31.8' y1='93.8' x2='26.9' y2='104.5' stroke='#a8c890' stroke-width='0.9' stroke-linecap='round'/><line x1='32.0' y1='95.0' x2='40.4' y2='102.6' stroke='#6aa05a' stroke-width='0.9' stroke-linecap='round'/><line x1='32.0' y1='95.0' x2='27.0' y2='106.0' stroke='#a8c890' stroke-width='0.9' stroke-linecap='round'/><line x1='32.2' y1='96.2' x2='42.0' y2='106.0' stroke='#c4d8a8' stroke-width='0.9' stroke-linecap='round'/><line x1='32.2' y1='96.2' x2='25.6' y2='105.2' stroke='#6aa85a' stroke-width='0.9' stroke-linecap='round'/><line x1='32.3' y1='97.4' x2='43.6' y2='107.9' stroke='#8cb878' stroke-width='0.9' stroke-linecap='round'/><line x1='32.3' y1='97.4' x2='23.7' y2='108.9' stroke='#4c8a44' stroke-width='0.9' stroke-linecap='round'/><line x1='32.5' y1='98.6' x2='43.0' y2='107.8' stroke='#24522a' stroke-width='0.9' stroke-linecap='round'/><line x1='32.5' y1='98.6' x2='27.2' y2='106.3' stroke='#8cb878' stroke-width='0.9' stroke-linecap='round'/><line x1='32.7' y1='99.8' x2='42.3' y2='109.9' stroke='#a8c890' stroke-width='0.9' stroke-linecap='round'/><line x1='32.7' y1='99.8' x2='28.4' y2='109.7' stroke='#b0c898' stroke-width='0.9' stroke-linecap='round'/><line x1='32.8' y1='101.0' x2='41.1' y2='111.5' stroke='#b0c898' stroke-width='0.9' stroke-linecap='round'/><line x1='32.8' y1='101.0' x2='28.9' y2='110.6' stroke='#6aa85a' stroke-width='0.9' stroke-linecap='round'/><line x1='33.0' y1='102.2' x2='40.9' y2='110.1' stroke='#5a9a50' stroke-width='0.9' stroke-linecap='round'/><line x1='33.0' y1='102.2' x2='28.5' y2='111.0' stroke='#b0c898' stroke-width='0.9' stroke-linecap='round'/><line x1='33.2' y1='103.5' x2='38.5' y2='111.5' stroke='#6aa05a' stroke-width='0.9' stroke-linecap='round'/><line x1='33.2' y1='103.5' x2='29.1' y2='114.1' stroke='#4c8a44' stroke-width='0.9' stroke-linecap='round'/><line x1='33.3' y1='104.7' x2='42.4' y2='115.7' stroke='#8cbc74' stroke-width='0.9' stroke-linecap='round'/><line x1='33.3' y1='104.7' x2='29.4' y2='112.9' stroke='#3e7c38' stroke-width='0.9' stroke-linecap='round'/><line x1='33.5' y1='105.9' x2='46.1' y2='115.0' stroke='#8cb878' stroke-width='0.9' stroke-linecap='round'/><line x1='33.5' y1='105.9' x2='29.8' y2='116.8' stroke='#8cbc74' stroke-width='0.9' stroke-linecap='round'/><line x1='33.7' y1='107.1' x2='42.0' y2='116.2' stroke='#6aa05a' stroke-width='0.9' stroke-linecap='round'/><line x1='33.7' y1='107.1' x2='29.9' y2='114.6' stroke='#24522a' stroke-width='0.9' stroke-linecap='round'/><line x1='33.8' y1='108.3' x2='42.0' y2='116.5' stroke='#b0c898' stroke-width='0.9' stroke-linecap='round'/><line x1='33.8' y1='108.3' x2='27.4' y2='122.2' stroke='#b0c898' stroke-width='0.9' stroke-linecap='round'/><line x1='34.0' y1='109.5' x2='44.3' y2='119.6' stroke='#8cbc74' stroke-width='0.9' stroke-linecap='round'/><line x1='34.0' y1='109.5' x2='24.8' y2='119.7' stroke='#6aa05a' stroke-width='0.9' stroke-linecap='round'/><line x1='34.2' y1='110.7' x2='43.0' y2='122.4' stroke='#b0c898' stroke-width='0.9' stroke-linecap='round'/><line x1='34.2' y1='110.7' x2='28.4' y2='119.1' stroke='#4c8a44' stroke-width='0.9' stroke-linecap='round'/><line x1='34.3' y1='111.9' x2='42.6' y2='120.6' stroke='#6aa85a' stroke-width='0.9' stroke-linecap='round'/><line x1='34.3' y1='111.9' x2='28.3' y2='124.6' stroke='#8cbc74' stroke-width='0.9' stroke-linecap='round'/><line x1='34.5' y1='113.1' x2='44.0' y2='119.7' stroke='#b0c898' stroke-width='0.9' stroke-linecap='round'/><line x1='34.5' y1='113.1' x2='28.5' y2='121.5' stroke='#8cbc74' stroke-width='0.9' stroke-linecap='round'/><line x1='34.7' y1='114.3' x2='41.0' y2='119.9' stroke='#8cbc74' stroke-width='0.9' stroke-linecap='round'/><line x1='34.7' y1='114.3' x2='27.3' y2='125.9' stroke='#4c8a44' stroke-width='0.9' stroke-linecap='round'/><line x1='34.8' y1='115.5' x2='41.4' y2='124.3' stroke='#2e6a2c' stroke-width='0.9' stroke-linecap='round'/><line x1='34.8' y1='115.5' x2='28.9' y2='126.3' stroke='#3e7c38' stroke-width='0.9' stroke-linecap='round'/><line x1='35.0' y1='116.8' x2='46.1' y2='122.9' stroke='#4c8a44' stroke-width='0.9' stroke-linecap='round'/><line x1='35.0' y1='116.8' x2='25.0' y2='129.4' stroke='#5a9a50' stroke-width='0.9' stroke-linecap='round'/><line x1='35.2' y1='118.0' x2='41.8' y2='124.1' stroke='#c4d8a8' stroke-width='0.9' stroke-linecap='round'/><line x1='35.2' y1='118.0' x2='30.1' y2='126.5' stroke='#8cb878' stroke-width='0.9' stroke-linecap='round'/><line x1='35.3' y1='119.2' x2='45.3' y2='128.3' stroke='#6aa85a' stroke-width='0.9' stroke-linecap='round'/><line x1='35.3' y1='119.2' x2='29.0' y2='129.0' stroke='#8cb878' stroke-width='0.9' stroke-linecap='round'/><line x1='35.5' y1='120.4' x2='47.0' y2='128.1' stroke='#8cbc74' stroke-width='0.9' stroke-linecap='round'/><line x1='35.5' y1='120.4' x2='26.9' y2='133.8' stroke='#b0c898' stroke-width='0.9' stroke-linecap='round'/><line x1='35.7' y1='121.6' x2='41.9' y2='130.9' stroke='#2e6a2c' stroke-width='0.9' stroke-linecap='round'/><line x1='35.7' y1='121.6' x2='30.8' y2='131.9' stroke='#2e6a2c' stroke-width='0.9' stroke-linecap='round'/><line x1='35.8' y1='122.8' x2='46.1' y2='128.3' stroke='#8cbc74' stroke-width='0.9' stroke-linecap='round'/><line x1='35.8' y1='122.8' x2='27.7' y2='134.0' stroke='#c4d8a8' stroke-width='0.9' stroke-linecap='round'/><polyline points='4.0,0.0 16.0,30.0 26.0,60.0 32.0,95.0 36.0,124.0' fill='none' stroke='#5a6a38' stroke-width='0.9' opacity='0.7'/><line x1='40.0' y1='0.0' x2='46.2' y2='2.6' stroke='#3e7c38' stroke-width='0.9' stroke-linecap='round'/><line x1='40.0' y1='0.0' x2='34.3' y2='6.2' stroke='#6aa05a' stroke-width='0.9' stroke-linecap='round'/><line x1='40.5' y1='2.0' x2='48.3' y2='9.5' stroke='#4c8a44' stroke-width='0.9' stroke-linecap='round'/><line x1='40.5' y1='2.0' x2='38.3' y2='7.8' stroke='#a8c890' stroke-width='0.9' stroke-linecap='round'/><line x1='41.1' y1='4.0' x2='48.1' y2='9.6' stroke='#4c8a44' stroke-width='0.9' stroke-linecap='round'/><line x1='41.1' y1='4.0' x2='35.8' y2='11.9' stroke='#c4d8a8' stroke-width='0.9' stroke-linecap='round'/><line x1='41.6' y1='6.0' x2='49.8' y2='9.9' stroke='#3e7c38' stroke-width='0.9' stroke-linecap='round'/><line x1='41.6' y1='6.0' x2='38.2' y2='12.2' stroke='#c4d8a8' stroke-width='0.9' stroke-linecap='round'/><line x1='42.2' y1='8.0' x2='48.6' y2='12.9' stroke='#6aa05a' stroke-width='0.9' stroke-linecap='round'/><line x1='42.2' y1='8.0' x2='39.2' y2='15.0' stroke='#b0c898' stroke-width='0.9' stroke-linecap='round'/><line x1='42.7' y1='10.0' x2='49.4' y2='16.4' stroke='#4c8a44' stroke-width='0.9' stroke-linecap='round'/><line x1='42.7' y1='10.0' x2='40.2' y2='19.1' stroke='#b0c898' stroke-width='0.9' stroke-linecap='round'/><line x1='43.3' y1='12.0' x2='51.5' y2='15.9' stroke='#2e6a2c' stroke-width='0.9' stroke-linecap='round'/><line x1='43.3' y1='12.0' x2='39.4' y2='18.9' stroke='#a8c890' stroke-width='0.9' stroke-linecap='round'/><line x1='43.8' y1='14.0' x2='50.0' y2='18.2' stroke='#b0c898' stroke-width='0.9' stroke-linecap='round'/><line x1='43.8' y1='14.0' x2='40.1' y2='18.5' stroke='#2e6a2c' stroke-width='0.9' stroke-linecap='round'/><line x1='44.4' y1='16.0' x2='49.3' y2='19.9' stroke='#2e6a2c' stroke-width='0.9' stroke-linecap='round'/><line x1='44.4' y1='16.0' x2='41.3' y2='20.7' stroke='#8cb878' stroke-width='0.9' stroke-linecap='round'/><line x1='44.9' y1='18.0' x2='50.4' y2='20.2' stroke='#b0c898' stroke-width='0.9' stroke-linecap='round'/><line x1='44.9' y1='18.0' x2='42.6' y2='23.6' stroke='#c4d8a8' stroke-width='0.9' stroke-linecap='round'/><line x1='45.5' y1='20.0' x2='50.5' y2='24.2' stroke='#4c8a44' stroke-width='0.9' stroke-linecap='round'/><line x1='45.5' y1='20.0' x2='42.7' y2='25.7' stroke='#3e7c38' stroke-width='0.9' stroke-linecap='round'/><line x1='46.0' y1='22.0' x2='51.0' y2='26.0' stroke='#a8c890' stroke-width='0.9' stroke-linecap='round'/><line x1='46.0' y1='22.0' x2='40.0' y2='30.5' stroke='#b0c898' stroke-width='0.9' stroke-linecap='round'/><line x1='46.5' y1='24.1' x2='55.2' y2='27.5' stroke='#a8c890' stroke-width='0.9' stroke-linecap='round'/><line x1='46.5' y1='24.1' x2='41.7' y2='30.4' stroke='#a8c890' stroke-width='0.9' stroke-linecap='round'/><line x1='47.1' y1='26.2' x2='53.0' y2='29.9' stroke='#6aa05a' stroke-width='0.9' stroke-linecap='round'/><line x1='47.1' y1='26.2' x2='41.9' y2='32.4' stroke='#8cb878' stroke-width='0.9' stroke-linecap='round'/><line x1='47.6' y1='28.3' x2='56.7' y2='33.5' stroke='#4c8a44' stroke-width='0.9' stroke-linecap='round'/><line x1='47.6' y1='28.3' x2='45.1' y2='34.2' stroke='#8cb878' stroke-width='0.9' stroke-linecap='round'/><line x1='48.2' y1='30.4' x2='55.0' y2='32.9' stroke='#4c8a44' stroke-width='0.9' stroke-linecap='round'/><line x1='48.2' y1='30.4' x2='42.4' y2='38.6' stroke='#2e6a2c' stroke-width='0.9' stroke-linecap='round'/><line x1='48.7' y1='32.5' x2='58.4' y2='37.7' stroke='#a8c890' stroke-width='0.9' stroke-linecap='round'/><line x1='48.7' y1='32.5' x2='46.0' y2='39.4' stroke='#8cb878' stroke-width='0.9' stroke-linecap='round'/><line x1='49.3' y1='34.5' x2='54.8' y2='36.2' stroke='#2e6a2c' stroke-width='0.9' stroke-linecap='round'/><line x1='49.3' y1='34.5' x2='45.5' y2='39.2' stroke='#4c8a44' stroke-width='0.9' stroke-linecap='round'/><line x1='49.8' y1='36.6' x2='58.9' y2='41.8' stroke='#8cb878' stroke-width='0.9' stroke-linecap='round'/><line x1='49.8' y1='36.6' x2='46.9' y2='43.8' stroke='#c4d8a8' stroke-width='0.9' stroke-linecap='round'/><line x1='50.4' y1='38.7' x2='59.6' y2='43.2' stroke='#2e6a2c' stroke-width='0.9' stroke-linecap='round'/><line x1='50.4' y1='38.7' x2='46.1' y2='47.5' stroke='#6aa05a' stroke-width='0.9' stroke-linecap='round'/><line x1='50.9' y1='40.8' x2='57.6' y2='43.8' stroke='#b0c898' stroke-width='0.9' stroke-linecap='round'/><line x1='50.9' y1='40.8' x2='45.6' y2='49.3' stroke='#b0c898' stroke-width='0.9' stroke-linecap='round'/><line x1='51.5' y1='42.9' x2='58.8' y2='46.5' stroke='#2e6a2c' stroke-width='0.9' stroke-linecap='round'/><line x1='51.5' y1='42.9' x2='47.9' y2='48.9' stroke='#2e6a2c' stroke-width='0.9' stroke-linecap='round'/><polyline points='40.0,0.0 46.0,22.0 52.0,45.0' fill='none' stroke='#5a6a38' stroke-width='0.9' opacity='0.7'/><path d='M82 0 H164 V50 C150 40 135 30 118 22 C105 15 92 8 82 0Z' fill='#4a7a48' opacity='0.55'/><line x1='84.0' y1='0.0' x2='94.7' y2='-5.1' stroke='#3e7c38' stroke-width='0.9' stroke-linecap='round'/><line x1='84.0' y1='0.0' x2='86.2' y2='9.1' stroke='#24522a' stroke-width='0.9' stroke-linecap='round'/><line x1='85.6' y1='0.6' x2='94.8' y2='-10.1' stroke='#3e7c38' stroke-width='0.9' stroke-linecap='round'/><line x1='85.6' y1='0.6' x2='85.7' y2='8.1' stroke='#a8c890' stroke-width='0.9' stroke-linecap='round'/><line x1='87.2' y1='1.2' x2='97.0' y2='-3.9' stroke='#2e6a2c' stroke-width='0.9' stroke-linecap='round'/><line x1='87.2' y1='1.2' x2='88.9' y2='9.0' stroke='#2e6a2c' stroke-width='0.9' stroke-linecap='round'/><line x1='88.9' y1='1.9' x2='98.1' y2='-8.3' stroke='#2e6a2c' stroke-width='0.9' stroke-linecap='round'/><line x1='88.9' y1='1.9' x2='89.0' y2='15.5' stroke='#8cbc74' stroke-width='0.9' stroke-linecap='round'/><line x1='90.5' y1='2.5' x2='100.0' y2='-4.3' stroke='#3e7c38' stroke-width='0.9' stroke-linecap='round'/><line x1='90.5' y1='2.5' x2='94.0' y2='13.9' stroke='#8cb878' stroke-width='0.9' stroke-linecap='round'/><line x1='92.1' y1='3.1' x2='99.0' y2='-1.7' stroke='#4c8a44' stroke-width='0.9' stroke-linecap='round'/><line x1='92.1' y1='3.1' x2='91.8' y2='13.3' stroke='#3e7c38' stroke-width='0.9' stroke-linecap='round'/><line x1='93.8' y1='3.8' x2='104.3' y2='-1.6' stroke='#6aa85a' stroke-width='0.9' stroke-linecap='round'/><line x1='93.8' y1='3.8' x2='93.5' y2='11.9' stroke='#24522a' stroke-width='0.9' stroke-linecap='round'/><line x1='95.4' y1='4.4' x2='102.5' y2='-1.1' stroke='#24522a' stroke-width='0.9' stroke-linecap='round'/><line x1='95.4' y1='4.4' x2='97.7' y2='11.4' stroke='#2e6a2c' stroke-width='0.9' stroke-linecap='round'/><line x1='97.0' y1='5.0' x2='105.9' y2='-2.7' stroke='#2e6a2c' stroke-width='0.9' stroke-linecap='round'/><line x1='97.0' y1='5.0' x2='98.7' y2='15.7' stroke='#3e7c38' stroke-width='0.9' stroke-linecap='round'/><line x1='98.6' y1='5.6' x2='107.3' y2='0.4' stroke='#8cbc74' stroke-width='0.9' stroke-linecap='round'/><line x1='98.6' y1='5.6' x2='99.9' y2='12.8' stroke='#8cbc74' stroke-width='0.9' stroke-linecap='round'/><line x1='100.2' y1='6.2' x2='111.7' y2='-2.2' stroke='#4c8a44' stroke-width='0.9' stroke-linecap='round'/><line x1='100.2' y1='6.2' x2='101.9' y2='16.2' stroke='#3e7c38' stroke-width='0.9' stroke-linecap='round'/><line x1='101.9' y1='6.9' x2='108.5' y2='-1.3' stroke='#4c8a44' stroke-width='0.9' stroke-linecap='round'/><line x1='101.9' y1='6.9' x2='102.8' y2='17.0' stroke='#2e6a2c' stroke-width='0.9' stroke-linecap='round'/><line x1='103.5' y1='7.5' x2='110.2' y2='3.1' stroke='#3e7c38' stroke-width='0.9' stroke-linecap='round'/><line x1='103.5' y1='7.5' x2='105.8' y2='15.2' stroke='#8cb878' stroke-width='0.9' stroke-linecap='round'/><line x1='105.1' y1='8.1' x2='112.6' y2='-1.7' stroke='#5a9a50' stroke-width='0.9' stroke-linecap='round'/><line x1='105.1' y1='8.1' x2='107.4' y2='20.4' stroke='#2e6a2c' stroke-width='0.9' stroke-linecap='round'/><line x1='106.8' y1='8.8' x2='115.9' y2='0.3' stroke='#4c8a44' stroke-width='0.9' stroke-linecap='round'/><line x1='106.8' y1='8.8' x2='107.1' y2='16.5' stroke='#a8c890' stroke-width='0.9' stroke-linecap='round'/><line x1='108.4' y1='9.4' x2='117.1' y2='3.7' stroke='#24522a' stroke-width='0.9' stroke-linecap='round'/><line x1='108.4' y1='9.4' x2='108.0' y2='16.9' stroke='#2e6a2c' stroke-width='0.9' stroke-linecap='round'/><line x1='110.0' y1='10.0' x2='114.0' y2='4.0' stroke='#3e7c38' stroke-width='0.9' stroke-linecap='round'/><line x1='110.0' y1='10.0' x2='112.5' y2='19.0' stroke='#4c8a44' stroke-width='0.9' stroke-linecap='round'/><line x1='111.7' y1='10.5' x2='123.1' y2='4.1' stroke='#2e6a2c' stroke-width='0.9' stroke-linecap='round'/><line x1='111.7' y1='10.5' x2='115.9' y2='23.8' stroke='#8cb878' stroke-width='0.9' stroke-linecap='round'/><line x1='113.3' y1='11.1' x2='119.4' y2='5.4' stroke='#3e7c38' stroke-width='0.9' stroke-linecap='round'/><line x1='113.3' y1='11.1' x2='116.6' y2='22.4' stroke='#8cbc74' stroke-width='0.9' stroke-linecap='round'/><line x1='115.0' y1='11.6' x2='124.3' y2='2.9' stroke='#8cb878' stroke-width='0.9' stroke-linecap='round'/><line x1='115.0' y1='11.6' x2='114.9' y2='24.4' stroke='#6aa85a' stroke-width='0.9' stroke-linecap='round'/><line x1='116.7' y1='12.1' x2='121.7' y2='6.5' stroke='#6aa85a' stroke-width='0.9' stroke-linecap='round'/><line x1='116.7' y1='12.1' x2='117.0' y2='24.5' stroke='#2e6a2c' stroke-width='0.9' stroke-linecap='round'/><line x1='118.3' y1='12.7' x2='128.0' y2='6.5' stroke='#24522a' stroke-width='0.9' stroke-linecap='round'/><line x1='118.3' y1='12.7' x2='120.7' y2='26.6' stroke='#5a9a50' stroke-width='0.9' stroke-linecap='round'/><line x1='120.0' y1='13.2' x2='128.4' y2='4.6' stroke='#5a9a50' stroke-width='0.9' stroke-linecap='round'/><line x1='120.0' y1='13.2' x2='120.6' y2='22.4' stroke='#2e6a2c' stroke-width='0.9' stroke-linecap='round'/><line x1='121.7' y1='13.7' x2='127.8' y2='7.1' stroke='#4c8a44' stroke-width='0.9' stroke-linecap='round'/><line x1='121.7' y1='13.7' x2='123.9' y2='26.5' stroke='#2e6a2c' stroke-width='0.9' stroke-linecap='round'/><line x1='123.3' y1='14.3' x2='128.8' y2='8.2' stroke='#4c8a44' stroke-width='0.9' stroke-linecap='round'/><line x1='123.3' y1='14.3' x2='127.6' y2='26.8' stroke='#a8c890' stroke-width='0.9' stroke-linecap='round'/><line x1='125.0' y1='14.8' x2='135.9' y2='6.6' stroke='#6aa85a' stroke-width='0.9' stroke-linecap='round'/><line x1='125.0' y1='14.8' x2='127.2' y2='25.6' stroke='#8cb878' stroke-width='0.9' stroke-linecap='round'/><line x1='126.7' y1='15.3' x2='133.8' y2='10.6' stroke='#5a9a50' stroke-width='0.9' stroke-linecap='round'/><line x1='126.7' y1='15.3' x2='129.0' y2='22.5' stroke='#8cbc74' stroke-width='0.9' stroke-linecap='round'/><line x1='128.3' y1='15.9' x2='134.6' y2='10.0' stroke='#24522a' stroke-width='0.9' stroke-linecap='round'/><line x1='128.3' y1='15.9' x2='129.6' y2='23.0' stroke='#8cbc74' stroke-width='0.9' stroke-linecap='round'/><line x1='130.0' y1='16.4' x2='135.6' y2='11.1' stroke='#6aa85a' stroke-width='0.9' stroke-linecap='round'/><line x1='130.0' y1='16.4' x2='130.7' y2='25.2' stroke='#a8c890' stroke-width='0.9' stroke-linecap='round'/><line x1='131.7' y1='16.9' x2='143.2' y2='10.0' stroke='#a8c890' stroke-width='0.9' stroke-linecap='round'/><line x1='131.7' y1='16.9' x2='134.9' y2='27.2' stroke='#5a9a50' stroke-width='0.9' stroke-linecap='round'/><line x1='133.3' y1='17.5' x2='138.7' y2='10.8' stroke='#4c8a44' stroke-width='0.9' stroke-linecap='round'/><line x1='133.3' y1='17.5' x2='133.9' y2='26.7' stroke='#6aa85a' stroke-width='0.9' stroke-linecap='round'/><line x1='135.0' y1='18.0' x2='141.8' y2='9.6' stroke='#4c8a44' stroke-width='0.9' stroke-linecap='round'/><line x1='135.0' y1='18.0' x2='140.9' y2='30.4' stroke='#8cb878' stroke-width='0.9' stroke-linecap='round'/><line x1='136.7' y1='18.4' x2='141.6' y2='12.1' stroke='#8cb878' stroke-width='0.9' stroke-linecap='round'/><line x1='136.7' y1='18.4' x2='138.2' y2='26.5' stroke='#2e6a2c' stroke-width='0.9' stroke-linecap='round'/><line x1='138.4' y1='18.7' x2='145.0' y2='10.1' stroke='#2e6a2c' stroke-width='0.9' stroke-linecap='round'/><line x1='138.4' y1='18.7' x2='142.7' y2='26.2' stroke='#8cb878' stroke-width='0.9' stroke-linecap='round'/><line x1='140.1' y1='19.1' x2='146.2' y2='12.8' stroke='#24522a' stroke-width='0.9' stroke-linecap='round'/><line x1='140.1' y1='19.1' x2='145.0' y2='32.1' stroke='#4c8a44' stroke-width='0.9' stroke-linecap='round'/><line x1='141.8' y1='19.4' x2='146.0' y2='13.3' stroke='#5a9a50' stroke-width='0.9' stroke-linecap='round'/><line x1='141.8' y1='19.4' x2='142.5' y2='29.2' stroke='#2e6a2c' stroke-width='0.9' stroke-linecap='round'/><line x1='143.5' y1='19.8' x2='148.9' y2='10.0' stroke='#8cb878' stroke-width='0.9' stroke-linecap='round'/><line x1='143.5' y1='19.8' x2='147.8' y2='32.3' stroke='#3e7c38' stroke-width='0.9' stroke-linecap='round'/><line x1='145.2' y1='20.1' x2='154.5' y2='12.9' stroke='#3e7c38' stroke-width='0.9' stroke-linecap='round'/><line x1='145.2' y1='20.1' x2='146.9' y2='27.7' stroke='#6aa85a' stroke-width='0.9' stroke-linecap='round'/><line x1='146.9' y1='20.5' x2='155.0' y2='12.0' stroke='#a8c890' stroke-width='0.9' stroke-linecap='round'/><line x1='146.9' y1='20.5' x2='150.7' y2='30.1' stroke='#4c8a44' stroke-width='0.9' stroke-linecap='round'/><line x1='148.6' y1='20.8' x2='154.1' y2='13.9' stroke='#5a9a50' stroke-width='0.9' stroke-linecap='round'/><line x1='148.6' y1='20.8' x2='155.1' y2='33.1' stroke='#6aa85a' stroke-width='0.9' stroke-linecap='round'/><line x1='150.4' y1='21.2' x2='155.7' y2='11.5' stroke='#2e6a2c' stroke-width='0.9' stroke-linecap='round'/><line x1='150.4' y1='21.2' x2='151.5' y2='28.6' stroke='#a8c890' stroke-width='0.9' stroke-linecap='round'/><line x1='152.1' y1='21.5' x2='160.8' y2='13.6' stroke='#8cb878' stroke-width='0.9' stroke-linecap='round'/><line x1='152.1' y1='21.5' x2='156.3' y2='28.5' stroke='#2e6a2c' stroke-width='0.9' stroke-linecap='round'/><line x1='153.8' y1='21.9' x2='163.5' y2='14.9' stroke='#24522a' stroke-width='0.9' stroke-linecap='round'/><line x1='153.8' y1='21.9' x2='156.6' y2='31.8' stroke='#3e7c38' stroke-width='0.9' stroke-linecap='round'/><line x1='155.5' y1='22.2' x2='161.9' y2='14.8' stroke='#8cbc74' stroke-width='0.9' stroke-linecap='round'/><line x1='155.5' y1='22.2' x2='160.6' y2='31.5' stroke='#4c8a44' stroke-width='0.9' stroke-linecap='round'/><line x1='157.2' y1='22.6' x2='165.5' y2='12.7' stroke='#2e6a2c' stroke-width='0.9' stroke-linecap='round'/><line x1='157.2' y1='22.6' x2='161.7' y2='35.5' stroke='#2e6a2c' stroke-width='0.9' stroke-linecap='round'/><line x1='158.9' y1='22.9' x2='165.8' y2='11.8' stroke='#3e7c38' stroke-width='0.9' stroke-linecap='round'/><line x1='158.9' y1='22.9' x2='160.2' y2='36.2' stroke='#4c8a44' stroke-width='0.9' stroke-linecap='round'/><line x1='160.6' y1='23.3' x2='171.3' y2='14.2' stroke='#8cbc74' stroke-width='0.9' stroke-linecap='round'/><line x1='160.6' y1='23.3' x2='162.3' y2='34.8' stroke='#8cb878' stroke-width='0.9' stroke-linecap='round'/><line x1='162.3' y1='23.6' x2='170.1' y2='18.3' stroke='#5a9a50' stroke-width='0.9' stroke-linecap='round'/><line x1='162.3' y1='23.6' x2='166.1' y2='34.7' stroke='#4c8a44' stroke-width='0.9' stroke-linecap='round'/><polyline points='84.0,0.0 110.0,10.0 135.0,18.0 164.0,24.0' fill='none' stroke='#5a6a38' stroke-width='0.9' opacity='0.7'/><line x1='148.0' y1='0.0' x2='156.4' y2='4.6' stroke='#4c8a44' stroke-width='0.9' stroke-linecap='round'/><line x1='148.0' y1='0.0' x2='142.5' y2='6.6' stroke='#4c8a44' stroke-width='0.9' stroke-linecap='round'/><line x1='148.4' y1='2.0' x2='153.8' y2='5.3' stroke='#8cbc74' stroke-width='0.9' stroke-linecap='round'/><line x1='148.4' y1='2.0' x2='145.1' y2='7.4' stroke='#24522a' stroke-width='0.9' stroke-linecap='round'/><line x1='148.8' y1='4.0' x2='154.6' y2='8.2' stroke='#4c8a44' stroke-width='0.9' stroke-linecap='round'/><line x1='148.8' y1='4.0' x2='146.0' y2='9.4' stroke='#4a4030' stroke-width='0.9' stroke-linecap='round'/><line x1='149.2' y1='6.0' x2='153.5' y2='10.4' stroke='#2e6a2c' stroke-width='0.9' stroke-linecap='round'/><line x1='149.2' y1='6.0' x2='143.2' y2='13.8' stroke='#5a9a50' stroke-width='0.9' stroke-linecap='round'/><line x1='149.6' y1='8.0' x2='157.8' y2='13.8' stroke='#3e7c38' stroke-width='0.9' stroke-linecap='round'/><line x1='149.6' y1='8.0' x2='146.6' y2='13.9' stroke='#6aa85a' stroke-width='0.9' stroke-linecap='round'/><line x1='150.0' y1='10.0' x2='155.9' y2='13.7' stroke='#5a9a50' stroke-width='0.9' stroke-linecap='round'/><line x1='150.0' y1='10.0' x2='145.7' y2='14.2' stroke='#24522a' stroke-width='0.9' stroke-linecap='round'/><line x1='150.4' y1='12.0' x2='155.9' y2='15.3' stroke='#24522a' stroke-width='0.9' stroke-linecap='round'/><line x1='150.4' y1='12.0' x2='146.8' y2='20.3' stroke='#4a4030' stroke-width='0.9' stroke-linecap='round'/><line x1='150.8' y1='14.0' x2='156.2' y2='19.0' stroke='#4c8a44' stroke-width='0.9' stroke-linecap='round'/><line x1='150.8' y1='14.0' x2='145.6' y2='22.3' stroke='#24522a' stroke-width='0.9' stroke-linecap='round'/><line x1='151.2' y1='16.0' x2='158.4' y2='19.3' stroke='#8cbc74' stroke-width='0.9' stroke-linecap='round'/><line x1='151.2' y1='16.0' x2='147.5' y2='23.8' stroke='#4c8a44' stroke-width='0.9' stroke-linecap='round'/><line x1='151.6' y1='18.0' x2='157.7' y2='23.8' stroke='#5a9a50' stroke-width='0.9' stroke-linecap='round'/><line x1='151.6' y1='18.0' x2='147.4' y2='23.1' stroke='#3e7c38' stroke-width='0.9' stroke-linecap='round'/><line x1='152.0' y1='20.0' x2='159.6' y2='27.1' stroke='#4a4030' stroke-width='0.9' stroke-linecap='round'/><line x1='152.0' y1='20.0' x2='147.7' y2='24.9' stroke='#4c8a44' stroke-width='0.9' stroke-linecap='round'/><line x1='152.4' y1='22.0' x2='159.9' y2='27.6' stroke='#5a9a50' stroke-width='0.9' stroke-linecap='round'/><line x1='152.4' y1='22.0' x2='148.5' y2='27.3' stroke='#3e7c38' stroke-width='0.9' stroke-linecap='round'/><line x1='152.8' y1='24.0' x2='159.3' y2='29.3' stroke='#2e6a2c' stroke-width='0.9' stroke-linecap='round'/><line x1='152.8' y1='24.0' x2='148.6' y2='30.1' stroke='#24522a' stroke-width='0.9' stroke-linecap='round'/><line x1='153.2' y1='26.0' x2='160.6' y2='33.1' stroke='#4a4030' stroke-width='0.9' stroke-linecap='round'/><line x1='153.2' y1='26.0' x2='150.3' y2='33.2' stroke='#4a4030' stroke-width='0.9' stroke-linecap='round'/><line x1='153.6' y1='28.0' x2='162.0' y2='31.6' stroke='#5a9a50' stroke-width='0.9' stroke-linecap='round'/><line x1='153.6' y1='28.0' x2='149.4' y2='37.2' stroke='#6aa85a' stroke-width='0.9' stroke-linecap='round'/><line x1='154.0' y1='30.0' x2='162.8' y2='33.3' stroke='#2e6a2c' stroke-width='0.9' stroke-linecap='round'/><line x1='154.0' y1='30.0' x2='148.8' y2='39.2' stroke='#3e7c38' stroke-width='0.9' stroke-linecap='round'/><line x1='154.4' y1='32.0' x2='163.1' y2='35.7' stroke='#6aa85a' stroke-width='0.9' stroke-linecap='round'/><line x1='154.4' y1='32.0' x2='147.6' y2='39.7' stroke='#2e6a2c' stroke-width='0.9' stroke-linecap='round'/><line x1='154.8' y1='34.0' x2='160.2' y2='36.8' stroke='#4a4030' stroke-width='0.9' stroke-linecap='round'/><line x1='154.8' y1='34.0' x2='151.8' y2='38.8' stroke='#4c8a44' stroke-width='0.9' stroke-linecap='round'/><line x1='155.2' y1='36.0' x2='165.4' y2='39.7' stroke='#5a9a50' stroke-width='0.9' stroke-linecap='round'/><line x1='155.2' y1='36.0' x2='151.3' y2='41.1' stroke='#24522a' stroke-width='0.9' stroke-linecap='round'/><line x1='155.6' y1='38.0' x2='164.5' y2='42.5' stroke='#2e6a2c' stroke-width='0.9' stroke-linecap='round'/><line x1='155.6' y1='38.0' x2='152.0' y2='48.0' stroke='#5a9a50' stroke-width='0.9' stroke-linecap='round'/><line x1='156.0' y1='40.0' x2='165.0' y2='44.6' stroke='#4a4030' stroke-width='0.9' stroke-linecap='round'/><line x1='156.0' y1='40.0' x2='150.7' y2='47.7' stroke='#3e7c38' stroke-width='0.9' stroke-linecap='round'/><line x1='156.4' y1='42.0' x2='161.6' y2='45.0' stroke='#4c8a44' stroke-width='0.9' stroke-linecap='round'/><line x1='156.4' y1='42.0' x2='154.2' y2='47.8' stroke='#4a4030' stroke-width='0.9' stroke-linecap='round'/><line x1='156.8' y1='44.0' x2='164.6' y2='49.7' stroke='#3e7c38' stroke-width='0.9' stroke-linecap='round'/><line x1='156.8' y1='44.0' x2='153.8' y2='51.1' stroke='#4c8a44' stroke-width='0.9' stroke-linecap='round'/><line x1='157.2' y1='46.0' x2='162.7' y2='49.9' stroke='#5a9a50' stroke-width='0.9' stroke-linecap='round'/><line x1='157.2' y1='46.0' x2='153.7' y2='53.9' stroke='#8cbc74' stroke-width='0.9' stroke-linecap='round'/><line x1='157.6' y1='48.0' x2='166.8' y2='52.1' stroke='#8cbc74' stroke-width='0.9' stroke-linecap='round'/><line x1='157.6' y1='48.0' x2='152.0' y2='54.8' stroke='#2e6a2c' stroke-width='0.9' stroke-linecap='round'/><line x1='158.0' y1='50.0' x2='167.2' y2='55.5' stroke='#6aa85a' stroke-width='0.9' stroke-linecap='round'/><line x1='158.0' y1='50.0' x2='154.7' y2='56.0' stroke='#6aa85a' stroke-width='0.9' stroke-linecap='round'/><line x1='158.4' y1='52.0' x2='166.2' y2='58.5' stroke='#6aa85a' stroke-width='0.9' stroke-linecap='round'/><line x1='158.4' y1='52.0' x2='151.5' y2='59.5' stroke='#2e6a2c' stroke-width='0.9' stroke-linecap='round'/><line x1='158.8' y1='54.0' x2='164.3' y2='57.0' stroke='#6aa85a' stroke-width='0.9' stroke-linecap='round'/><line x1='158.8' y1='54.0' x2='155.3' y2='61.0' stroke='#2e6a2c' stroke-width='0.9' stroke-linecap='round'/><line x1='159.2' y1='56.0' x2='166.5' y2='60.2' stroke='#3e7c38' stroke-width='0.9' stroke-linecap='round'/><line x1='159.2' y1='56.0' x2='156.0' y2='61.8' stroke='#2e6a2c' stroke-width='0.9' stroke-linecap='round'/><line x1='159.6' y1='58.0' x2='166.6' y2='61.4' stroke='#8cbc74' stroke-width='0.9' stroke-linecap='round'/><line x1='159.6' y1='58.0' x2='152.5' y2='66.0' stroke='#2e6a2c' stroke-width='0.9' stroke-linecap='round'/><line x1='160.0' y1='60.0' x2='167.6' y2='67.0' stroke='#2e6a2c' stroke-width='0.9' stroke-linecap='round'/><line x1='160.0' y1='60.0' x2='156.9' y2='68.5' stroke='#24522a' stroke-width='0.9' stroke-linecap='round'/><line x1='160.4' y1='62.0' x2='166.6' y2='68.4' stroke='#2e6a2c' stroke-width='0.9' stroke-linecap='round'/><line x1='160.4' y1='62.0' x2='156.2' y2='67.5' stroke='#2e6a2c' stroke-width='0.9' stroke-linecap='round'/><line x1='160.8' y1='64.0' x2='169.9' y2='69.7' stroke='#24522a' stroke-width='0.9' stroke-linecap='round'/><line x1='160.8' y1='64.0' x2='158.0' y2='70.8' stroke='#4c8a44' stroke-width='0.9' stroke-linecap='round'/><line x1='161.2' y1='66.0' x2='169.3' y2='69.4' stroke='#24522a' stroke-width='0.9' stroke-linecap='round'/><line x1='161.2' y1='66.0' x2='158.0' y2='74.1' stroke='#4c8a44' stroke-width='0.9' stroke-linecap='round'/><line x1='161.6' y1='68.0' x2='168.7' y2='72.4' stroke='#24522a' stroke-width='0.9' stroke-linecap='round'/><line x1='161.6' y1='68.0' x2='155.4' y2='74.1' stroke='#24522a' stroke-width='0.9' stroke-linecap='round'/><line x1='162.0' y1='70.0' x2='167.4' y2='72.7' stroke='#24522a' stroke-width='0.9' stroke-linecap='round'/><line x1='162.0' y1='70.0' x2='155.9' y2='76.4' stroke='#5a9a50' stroke-width='0.9' stroke-linecap='round'/><line x1='162.4' y1='72.0' x2='167.6' y2='76.1' stroke='#6aa85a' stroke-width='0.9' stroke-linecap='round'/><line x1='162.4' y1='72.0' x2='157.8' y2='79.2' stroke='#4a4030' stroke-width='0.9' stroke-linecap='round'/><line x1='162.8' y1='74.0' x2='168.9' y2='77.9' stroke='#5a9a50' stroke-width='0.9' stroke-linecap='round'/><line x1='162.8' y1='74.0' x2='159.6' y2='79.7' stroke='#8cbc74' stroke-width='0.9' stroke-linecap='round'/><line x1='163.2' y1='76.0' x2='168.4' y2='81.6' stroke='#6aa85a' stroke-width='0.9' stroke-linecap='round'/><line x1='163.2' y1='76.0' x2='158.8' y2='85.8' stroke='#6aa85a' stroke-width='0.9' stroke-linecap='round'/><line x1='163.6' y1='78.0' x2='170.3' y2='82.7' stroke='#24522a' stroke-width='0.9' stroke-linecap='round'/><line x1='163.6' y1='78.0' x2='158.9' y2='82.8' stroke='#2e6a2c' stroke-width='0.9' stroke-linecap='round'/><polyline points='148.0,0.0 154.0,30.0 160.0,60.0 164.0,80.0' fill='none' stroke='#4a3a28' stroke-width='0.9' opacity='0.7'/><defs><linearGradient id='c1g' x1='0' y1='0' x2='0' y2='1'><stop offset='0' stop-color='#5a4230'/><stop offset='0.55' stop-color='#a38364'/><stop offset='1' stop-color='#d2b898'/></linearGradient><linearGradient id='c1s' x1='0' x2='1'><stop offset='0' stop-color='#fff' stop-opacity='0.12'/><stop offset='0.4' stop-color='#fff' stop-opacity='0'/><stop offset='0.75' stop-color='#000' stop-opacity='0.1'/><stop offset='1' stop-color='#000' stop-opacity='0.45'/></linearGradient></defs><g transform='translate(65 77) rotate(-19)'><clipPath id='c1'><path d='M-7.7 -41.0 C3.4 -42.6 16.1 -28.7 17.0 -6.1 C17.3 16.4 11.9 40.2 0.0 41.0 C-11.9 40.2 -17.3 16.4 -17.0 -6.1 C-16.7 -28.7 -14.4 -39.4 -7.7 -41.0Z'/></clipPath><path d='M-7.7 -41.0 C3.4 -42.6 16.1 -28.7 17.0 -6.1 C17.3 16.4 11.9 40.2 0.0 41.0 C-11.9 40.2 -17.3 16.4 -17.0 -6.1 C-16.7 -28.7 -14.4 -39.4 -7.7 -41.0Z' fill='#3e2c20'/><g clip-path='url(#c1)'><path d='M-20.4 40.5 C-20.7 46.5 -18.1 49.1 -16.1 49.1 C-14.1 49.1 -11.5 46.5 -11.8 40.5Z' fill='url(#c1g)' stroke='#2a1c12' stroke-width='0.85'/><path d='M-13.2 41.2 C-13.5 47.2 -10.9 49.8 -8.9 49.8 C-6.9 49.8 -4.3 47.2 -4.6 41.2Z' fill='url(#c1g)' stroke='#2a1c12' stroke-width='0.85'/><path d='M-4.8 40.4 C-5.1 46.4 -2.5 49.0 -0.5 49.0 C1.5 49.0 4.1 46.4 3.8 40.4Z' fill='url(#c1g)' stroke='#2a1c12' stroke-width='0.85'/><path d='M3.2 40.7 C2.9 46.7 5.5 49.3 7.5 49.3 C9.5 49.3 12.1 46.7 11.8 40.7Z' fill='url(#c1g)' stroke='#2a1c12' stroke-width='0.85'/><path d='M11.6 40.4 C11.3 46.4 13.9 49.0 15.9 49.0 C17.9 49.0 20.5 46.4 20.2 40.4Z' fill='url(#c1g)' stroke='#2a1c12' stroke-width='0.85'/><path d='M-25.0 34.7 C-25.3 40.7 -22.7 43.3 -20.7 43.3 C-18.7 43.3 -16.1 40.7 -16.4 34.7Z' fill='url(#c1g)' stroke='#2a1c12' stroke-width='0.85'/><path d='M-16.4 33.9 C-16.7 39.9 -14.1 42.5 -12.1 42.5 C-10.1 42.5 -7.5 39.9 -7.8 33.9Z' fill='url(#c1g)' stroke='#2a1c12' stroke-width='0.85'/><path d='M-8.9 34.1 C-9.2 40.1 -6.6 42.7 -4.6 42.7 C-2.6 42.7 0.0 40.1 -0.3 34.1Z' fill='url(#c1g)' stroke='#2a1c12' stroke-width='0.85'/><path d='M-0.5 34.3 C-0.8 40.3 1.8 42.9 3.8 42.9 C5.8 42.9 8.4 40.3 8.1 34.3Z' fill='url(#c1g)' stroke='#2a1c12' stroke-width='0.85'/><path d='M7.7 34.5 C7.4 40.5 10.0 43.1 12.0 43.1 C14.0 43.1 16.6 40.5 16.3 34.5Z' fill='url(#c1g)' stroke='#2a1c12' stroke-width='0.85'/><path d='M15.3 34.4 C15.0 40.4 17.6 43.0 19.6 43.0 C21.6 43.0 24.2 40.4 23.9 34.4Z' fill='url(#c1g)' stroke='#2a1c12' stroke-width='0.85'/><path d='M-20.4 27.9 C-20.7 33.9 -18.1 36.5 -16.1 36.5 C-14.1 36.5 -11.5 33.9 -11.8 27.9Z' fill='url(#c1g)' stroke='#2a1c12' stroke-width='0.85'/><path d='M-12.7 27.9 C-13.0 33.9 -10.4 36.5 -8.4 36.5 C-6.4 36.5 -3.8 33.9 -4.1 27.9Z' fill='url(#c1g)' stroke='#2a1c12' stroke-width='0.85'/><path d='M-4.4 28.0 C-4.7 34.0 -2.1 36.6 -0.1 36.6 C1.9 36.6 4.5 34.0 4.2 28.0Z' fill='url(#c1g)' stroke='#2a1c12' stroke-width='0.85'/><path d='M2.9 28.0 C2.6 34.0 5.2 36.6 7.2 36.6 C9.2 36.6 11.8 34.0 11.5 28.0Z' fill='url(#c1g)' stroke='#2a1c12' stroke-width='0.85'/><path d='M10.7 27.9 C10.4 33.9 13.0 36.5 15.0 36.5 C17.0 36.5 19.6 33.9 19.3 27.9Z' fill='url(#c1g)' stroke='#2a1c12' stroke-width='0.85'/><path d='M-24.6 21.0 C-24.9 27.0 -22.3 29.6 -20.3 29.6 C-18.3 29.6 -15.7 27.0 -16.0 21.0Z' fill='url(#c1g)' stroke='#2a1c12' stroke-width='0.85'/><path d='M-16.1 21.1 C-16.4 27.1 -13.8 29.7 -11.8 29.7 C-9.8 29.7 -7.2 27.1 -7.5 21.1Z' fill='url(#c1g)' stroke='#2a1c12' stroke-width='0.85'/><path d='M-8.8 21.3 C-9.1 27.3 -6.5 29.9 -4.5 29.9 C-2.5 29.9 0.1 27.3 -0.2 21.3Z' fill='url(#c1g)' stroke='#2a1c12' stroke-width='0.85'/><path d='M-0.3 21.1 C-0.6 27.1 2.0 29.7 4.0 29.7 C6.0 29.7 8.6 27.1 8.3 21.1Z' fill='url(#c1g)' stroke='#2a1c12' stroke-width='0.85'/><path d='M7.2 21.0 C6.9 27.0 9.5 29.6 11.5 29.6 C13.5 29.6 16.1 27.0 15.8 21.0Z' fill='url(#c1g)' stroke='#2a1c12' stroke-width='0.85'/><path d='M15.2 21.2 C14.9 27.2 17.5 29.8 19.5 29.8 C21.5 29.8 24.1 27.2 23.8 21.2Z' fill='url(#c1g)' stroke='#2a1c12' stroke-width='0.85'/><path d='M-20.9 14.3 C-21.2 20.3 -18.6 22.9 -16.6 22.9 C-14.6 22.9 -12.0 20.3 -12.3 14.3Z' fill='url(#c1g)' stroke='#2a1c12' stroke-width='0.85'/><path d='M-12.6 14.3 C-12.9 20.3 -10.3 22.9 -8.3 22.9 C-6.3 22.9 -3.7 20.3 -4.0 14.3Z' fill='url(#c1g)' stroke='#2a1c12' stroke-width='0.85'/><path d='M-4.9 14.7 C-5.2 20.7 -2.6 23.3 -0.6 23.3 C1.4 23.3 4.0 20.7 3.7 14.7Z' fill='url(#c1g)' stroke='#2a1c12' stroke-width='0.85'/><path d='M3.7 14.4 C3.4 20.4 6.0 23.0 8.0 23.0 C10.0 23.0 12.6 20.4 12.3 14.4Z' fill='url(#c1g)' stroke='#2a1c12' stroke-width='0.85'/><path d='M11.2 14.1 C10.9 20.1 13.5 22.7 15.5 22.7 C17.5 22.7 20.1 20.1 19.8 14.1Z' fill='url(#c1g)' stroke='#2a1c12' stroke-width='0.85'/><path d='M-24.9 7.4 C-25.2 13.4 -22.6 16.0 -20.6 16.0 C-18.6 16.0 -16.0 13.4 -16.3 7.4Z' fill='url(#c1g)' stroke='#2a1c12' stroke-width='0.85'/><path d='M-16.6 7.9 C-16.9 13.9 -14.3 16.5 -12.3 16.5 C-10.3 16.5 -7.7 13.9 -8.0 7.9Z' fill='url(#c1g)' stroke='#2a1c12' stroke-width='0.85'/><path d='M-9.2 8.2 C-9.5 14.2 -6.9 16.8 -4.9 16.8 C-2.9 16.8 -0.3 14.2 -0.6 8.2Z' fill='url(#c1g)' stroke='#2a1c12' stroke-width='0.85'/><path d='M-0.9 8.1 C-1.2 14.1 1.4 16.7 3.4 16.7 C5.4 16.7 8.0 14.1 7.7 8.1Z' fill='url(#c1g)' stroke='#2a1c12' stroke-width='0.85'/><path d='M7.7 8.3 C7.4 14.3 10.0 16.9 12.0 16.9 C14.0 16.9 16.6 14.3 16.3 8.3Z' fill='url(#c1g)' stroke='#2a1c12' stroke-width='0.85'/><path d='M14.9 7.7 C14.6 13.7 17.2 16.3 19.2 16.3 C21.2 16.3 23.8 13.7 23.5 7.7Z' fill='url(#c1g)' stroke='#2a1c12' stroke-width='0.85'/><path d='M-20.2 0.7 C-20.5 6.7 -17.9 9.3 -15.9 9.3 C-13.9 9.3 -11.3 6.7 -11.6 0.7Z' fill='url(#c1g)' stroke='#2a1c12' stroke-width='0.85'/><path d='M-13.2 1.3 C-13.5 7.3 -10.9 9.9 -8.9 9.9 C-6.9 9.9 -4.3 7.3 -4.6 1.3Z' fill='url(#c1g)' stroke='#2a1c12' stroke-width='0.85'/><path d='M-4.7 1.6 C-5.0 7.6 -2.4 10.2 -0.4 10.2 C1.6 10.2 4.2 7.6 3.9 1.6Z' fill='url(#c1g)' stroke='#2a1c12' stroke-width='0.85'/><path d='M3.6 1.2 C3.3 7.2 5.9 9.8 7.9 9.8 C9.9 9.8 12.5 7.2 12.2 1.2Z' fill='url(#c1g)' stroke='#2a1c12' stroke-width='0.85'/><path d='M11.9 1.2 C11.6 7.2 14.2 9.8 16.2 9.8 C18.2 9.8 20.8 7.2 20.5 1.2Z' fill='url(#c1g)' stroke='#2a1c12' stroke-width='0.85'/><path d='M-24.7 -5.2 C-25.0 0.8 -22.4 3.4 -20.4 3.4 C-18.4 3.4 -15.8 0.8 -16.1 -5.2Z' fill='url(#c1g)' stroke='#2a1c12' stroke-width='0.85'/><path d='M-16.8 -5.5 C-17.1 0.5 -14.5 3.1 -12.5 3.1 C-10.5 3.1 -7.9 0.5 -8.2 -5.5Z' fill='url(#c1g)' stroke='#2a1c12' stroke-width='0.85'/><path d='M-8.6 -5.5 C-8.9 0.5 -6.3 3.1 -4.3 3.1 C-2.3 3.1 0.3 0.5 0.0 -5.5Z' fill='url(#c1g)' stroke='#2a1c12' stroke-width='0.85'/><path d='M-0.2 -5.2 C-0.5 0.8 2.1 3.4 4.1 3.4 C6.1 3.4 8.7 0.8 8.4 -5.2Z' fill='url(#c1g)' stroke='#2a1c12' stroke-width='0.85'/><path d='M7.3 -5.8 C7.0 0.2 9.6 2.8 11.6 2.8 C13.6 2.8 16.2 0.2 15.9 -5.8Z' fill='url(#c1g)' stroke='#2a1c12' stroke-width='0.85'/><path d='M15.1 -5.5 C14.8 0.5 17.4 3.1 19.4 3.1 C21.4 3.1 24.0 0.5 23.7 -5.5Z' fill='url(#c1g)' stroke='#2a1c12' stroke-width='0.85'/><path d='M-20.6 -11.9 C-20.9 -5.9 -18.3 -3.3 -16.3 -3.3 C-14.3 -3.3 -11.7 -5.9 -12.0 -11.9Z' fill='url(#c1g)' stroke='#2a1c12' stroke-width='0.85'/><path d='M-12.2 -11.5 C-12.5 -5.5 -9.9 -2.9 -7.9 -2.9 C-5.9 -2.9 -3.3 -5.5 -3.6 -11.5Z' fill='url(#c1g)' stroke='#2a1c12' stroke-width='0.85'/><path d='M-4.7 -12.1 C-5.0 -6.1 -2.4 -3.5 -0.4 -3.5 C1.6 -3.5 4.2 -6.1 3.9 -12.1Z' fill='url(#c1g)' stroke='#2a1c12' stroke-width='0.85'/><path d='M3.4 -11.5 C3.1 -5.5 5.7 -2.9 7.7 -2.9 C9.7 -2.9 12.3 -5.5 12.0 -11.5Z' fill='url(#c1g)' stroke='#2a1c12' stroke-width='0.85'/><path d='M11.1 -12.0 C10.8 -6.0 13.4 -3.4 15.4 -3.4 C17.4 -3.4 20.0 -6.0 19.7 -12.0Z' fill='url(#c1g)' stroke='#2a1c12' stroke-width='0.85'/><path d='M-24.3 -18.9 C-24.6 -12.9 -22.0 -10.3 -20.0 -10.3 C-18.0 -10.3 -15.4 -12.9 -15.7 -18.9Z' fill='url(#c1g)' stroke='#2a1c12' stroke-width='0.85'/><path d='M-16.9 -18.1 C-17.2 -12.1 -14.6 -9.5 -12.6 -9.5 C-10.6 -9.5 -8.0 -12.1 -8.3 -18.1Z' fill='url(#c1g)' stroke='#2a1c12' stroke-width='0.85'/><path d='M-8.3 -18.6 C-8.6 -12.6 -6.0 -10.0 -4.0 -10.0 C-2.0 -10.0 0.6 -12.6 0.3 -18.6Z' fill='url(#c1g)' stroke='#2a1c12' stroke-width='0.85'/><path d='M-1.2 -18.2 C-1.5 -12.2 1.1 -9.6 3.1 -9.6 C5.1 -9.6 7.7 -12.2 7.4 -18.2Z' fill='url(#c1g)' stroke='#2a1c12' stroke-width='0.85'/><path d='M7.5 -18.3 C7.2 -12.3 9.8 -9.7 11.8 -9.7 C13.8 -9.7 16.4 -12.3 16.1 -18.3Z' fill='url(#c1g)' stroke='#2a1c12' stroke-width='0.85'/><path d='M15.9 -18.2 C15.6 -12.2 18.2 -9.6 20.2 -9.6 C22.2 -9.6 24.8 -12.2 24.5 -18.2Z' fill='url(#c1g)' stroke='#2a1c12' stroke-width='0.85'/><path d='M-20.8 -25.5 C-21.1 -19.5 -18.5 -16.9 -16.5 -16.9 C-14.5 -16.9 -11.9 -19.5 -12.2 -25.5Z' fill='url(#c1g)' stroke='#2a1c12' stroke-width='0.85'/><path d='M-13.0 -25.2 C-13.3 -19.2 -10.7 -16.6 -8.7 -16.6 C-6.7 -16.6 -4.1 -19.2 -4.4 -25.2Z' fill='url(#c1g)' stroke='#2a1c12' stroke-width='0.85'/><path d='M-4.7 -25.5 C-5.0 -19.5 -2.4 -16.9 -0.4 -16.9 C1.6 -16.9 4.2 -19.5 3.9 -25.5Z' fill='url(#c1g)' stroke='#2a1c12' stroke-width='0.85'/><path d='M2.9 -25.1 C2.6 -19.1 5.2 -16.5 7.2 -16.5 C9.2 -16.5 11.8 -19.1 11.5 -25.1Z' fill='url(#c1g)' stroke='#2a1c12' stroke-width='0.85'/><path d='M11.4 -25.3 C11.1 -19.3 13.7 -16.7 15.7 -16.7 C17.7 -16.7 20.3 -19.3 20.0 -25.3Z' fill='url(#c1g)' stroke='#2a1c12' stroke-width='0.85'/><path d='M-24.1 -31.7 C-24.4 -25.7 -21.8 -23.1 -19.8 -23.1 C-17.8 -23.1 -15.2 -25.7 -15.5 -31.7Z' fill='url(#c1g)' stroke='#2a1c12' stroke-width='0.85'/><path d='M-17.2 -31.9 C-17.5 -25.9 -14.9 -23.3 -12.9 -23.3 C-10.9 -23.3 -8.3 -25.9 -8.6 -31.9Z' fill='url(#c1g)' stroke='#2a1c12' stroke-width='0.85'/><path d='M-8.4 -32.0 C-8.7 -26.0 -6.1 -23.4 -4.1 -23.4 C-2.1 -23.4 0.5 -26.0 0.2 -32.0Z' fill='url(#c1g)' stroke='#2a1c12' stroke-width='0.85'/><path d='M-0.5 -32.3 C-0.8 -26.3 1.8 -23.7 3.8 -23.7 C5.8 -23.7 8.4 -26.3 8.1 -32.3Z' fill='url(#c1g)' stroke='#2a1c12' stroke-width='0.85'/><path d='M7.1 -31.5 C6.8 -25.5 9.4 -22.9 11.4 -22.9 C13.4 -22.9 16.0 -25.5 15.7 -31.5Z' fill='url(#c1g)' stroke='#2a1c12' stroke-width='0.85'/><path d='M15.4 -31.6 C15.1 -25.6 17.7 -23.0 19.7 -23.0 C21.7 -23.0 24.3 -25.6 24.0 -31.6Z' fill='url(#c1g)' stroke='#2a1c12' stroke-width='0.85'/><path d='M-21.1 -38.4 C-21.4 -32.4 -18.8 -29.8 -16.8 -29.8 C-14.8 -29.8 -12.2 -32.4 -12.5 -38.4Z' fill='url(#c1g)' stroke='#2a1c12' stroke-width='0.85'/><path d='M-12.6 -38.6 C-12.9 -32.6 -10.3 -30.0 -8.3 -30.0 C-6.3 -30.0 -3.7 -32.6 -4.0 -38.6Z' fill='url(#c1g)' stroke='#2a1c12' stroke-width='0.85'/><path d='M-4.5 -38.4 C-4.8 -32.4 -2.2 -29.8 -0.2 -29.8 C1.8 -29.8 4.4 -32.4 4.1 -38.4Z' fill='url(#c1g)' stroke='#2a1c12' stroke-width='0.85'/><path d='M3.9 -38.3 C3.6 -32.3 6.2 -29.7 8.2 -29.7 C10.2 -29.7 12.8 -32.3 12.5 -38.3Z' fill='url(#c1g)' stroke='#2a1c12' stroke-width='0.85'/><path d='M11.2 -38.8 C10.9 -32.8 13.5 -30.2 15.5 -30.2 C17.5 -30.2 20.1 -32.8 19.8 -38.8Z' fill='url(#c1g)' stroke='#2a1c12' stroke-width='0.85'/><path d='M-25.1 -44.7 C-25.4 -38.7 -22.8 -36.1 -20.8 -36.1 C-18.8 -36.1 -16.2 -38.7 -16.5 -44.7Z' fill='url(#c1g)' stroke='#2a1c12' stroke-width='0.85'/><path d='M-17.2 -45.4 C-17.5 -39.4 -14.9 -36.8 -12.9 -36.8 C-10.9 -36.8 -8.3 -39.4 -8.6 -45.4Z' fill='url(#c1g)' stroke='#2a1c12' stroke-width='0.85'/><path d='M-9.1 -45.0 C-9.4 -39.0 -6.8 -36.4 -4.8 -36.4 C-2.8 -36.4 -0.2 -39.0 -0.5 -45.0Z' fill='url(#c1g)' stroke='#2a1c12' stroke-width='0.85'/><path d='M-0.3 -44.9 C-0.6 -38.9 2.0 -36.3 4.0 -36.3 C6.0 -36.3 8.6 -38.9 8.3 -44.9Z' fill='url(#c1g)' stroke='#2a1c12' stroke-width='0.85'/><path d='M7.7 -45.4 C7.4 -39.4 10.0 -36.8 12.0 -36.8 C14.0 -36.8 16.6 -39.4 16.3 -45.4Z' fill='url(#c1g)' stroke='#2a1c12' stroke-width='0.85'/><path d='M14.7 -44.7 C14.4 -38.7 17.0 -36.1 19.0 -36.1 C21.0 -36.1 23.6 -38.7 23.3 -44.7Z' fill='url(#c1g)' stroke='#2a1c12' stroke-width='0.85'/><rect x='-18.700000000000003' y='-45.1' width='37.400000000000006' height='90.2' fill='url(#c1s)'/></g></g><defs><linearGradient id='c2g' x1='0' y1='0' x2='0' y2='1'><stop offset='0' stop-color='#5a4230'/><stop offset='0.55' stop-color='#a38364'/><stop offset='1' stop-color='#d2b898'/></linearGradient><linearGradient id='c2s' x1='0' x2='1'><stop offset='0' stop-color='#fff' stop-opacity='0.12'/><stop offset='0.4' stop-color='#fff' stop-opacity='0'/><stop offset='0.75' stop-color='#000' stop-opacity='0.1'/><stop offset='1' stop-color='#000' stop-opacity='0.45'/></linearGradient></defs><g transform='translate(106.5 47) rotate(-17)'><clipPath id='c2'><path d='M-9.5 -45.0 C4.2 -46.8 19.9 -31.5 21.0 -6.8 C21.4 18.0 14.7 44.1 0.0 45.0 C-14.7 44.1 -21.4 18.0 -21.0 -6.8 C-20.6 -31.5 -17.8 -43.2 -9.5 -45.0Z'/></clipPath><path d='M-9.5 -45.0 C4.2 -46.8 19.9 -31.5 21.0 -6.8 C21.4 18.0 14.7 44.1 0.0 45.0 C-14.7 44.1 -21.4 18.0 -21.0 -6.8 C-20.6 -31.5 -17.8 -43.2 -9.5 -45.0Z' fill='#3e2c20'/><g clip-path='url(#c2)'><path d='M-29.7 43.6 C-30.0 49.6 -27.4 52.2 -25.4 52.2 C-23.4 52.2 -20.8 49.6 -21.1 43.6Z' fill='url(#c2g)' stroke='#2a1c12' stroke-width='0.85'/><path d='M-21.7 43.1 C-22.0 49.1 -19.4 51.7 -17.4 51.7 C-15.4 51.7 -12.8 49.1 -13.1 43.1Z' fill='url(#c2g)' stroke='#2a1c12' stroke-width='0.85'/><path d='M-13.8 43.0 C-14.1 49.0 -11.5 51.6 -9.5 51.6 C-7.5 51.6 -4.9 49.0 -5.2 43.0Z' fill='url(#c2g)' stroke='#2a1c12' stroke-width='0.85'/><path d='M-5.0 43.5 C-5.3 49.5 -2.7 52.1 -0.7 52.1 C1.3 52.1 3.9 49.5 3.6 43.5Z' fill='url(#c2g)' stroke='#2a1c12' stroke-width='0.85'/><path d='M2.3 43.3 C2.0 49.3 4.6 51.9 6.6 51.9 C8.6 51.9 11.2 49.3 10.9 43.3Z' fill='url(#c2g)' stroke='#2a1c12' stroke-width='0.85'/><path d='M10.4 43.0 C10.1 49.0 12.7 51.6 14.7 51.6 C16.7 51.6 19.3 49.0 19.0 43.0Z' fill='url(#c2g)' stroke='#2a1c12' stroke-width='0.85'/><path d='M19.0 43.5 C18.7 49.5 21.3 52.1 23.3 52.1 C25.3 52.1 27.9 49.5 27.6 43.5Z' fill='url(#c2g)' stroke='#2a1c12' stroke-width='0.85'/><path d='M-24.9 36.7 C-25.2 42.7 -22.6 45.3 -20.6 45.3 C-18.6 45.3 -16.0 42.7 -16.3 36.7Z' fill='url(#c2g)' stroke='#2a1c12' stroke-width='0.85'/><path d='M-17.4 36.5 C-17.7 42.5 -15.1 45.1 -13.1 45.1 C-11.1 45.1 -8.5 42.5 -8.8 36.5Z' fill='url(#c2g)' stroke='#2a1c12' stroke-width='0.85'/><path d='M-10.0 37.2 C-10.3 43.2 -7.7 45.8 -5.7 45.8 C-3.7 45.8 -1.1 43.2 -1.4 37.2Z' fill='url(#c2g)' stroke='#2a1c12' stroke-width='0.85'/><path d='M-1.1 36.6 C-1.4 42.6 1.2 45.2 3.2 45.2 C5.2 45.2 7.8 42.6 7.5 36.6Z' fill='url(#c2g)' stroke='#2a1c12' stroke-width='0.85'/><path d='M7.0 37.1 C6.7 43.1 9.3 45.7 11.3 45.7 C13.3 45.7 15.9 43.1 15.6 37.1Z' fill='url(#c2g)' stroke='#2a1c12' stroke-width='0.85'/><path d='M14.3 36.9 C14.0 42.9 16.6 45.5 18.6 45.5 C20.6 45.5 23.2 42.9 22.9 36.9Z' fill='url(#c2g)' stroke='#2a1c12' stroke-width='0.85'/><path d='M-28.9 30.2 C-29.2 36.2 -26.6 38.8 -24.6 38.8 C-22.6 38.8 -20.0 36.2 -20.3 30.2Z' fill='url(#c2g)' stroke='#2a1c12' stroke-width='0.85'/><path d='M-21.0 29.9 C-21.3 35.9 -18.7 38.5 -16.7 38.5 C-14.7 38.5 -12.1 35.9 -12.4 29.9Z' fill='url(#c2g)' stroke='#2a1c12' stroke-width='0.85'/><path d='M-13.6 30.4 C-13.9 36.4 -11.3 39.0 -9.3 39.0 C-7.3 39.0 -4.7 36.4 -5.0 30.4Z' fill='url(#c2g)' stroke='#2a1c12' stroke-width='0.85'/><path d='M-5.8 30.0 C-6.1 36.0 -3.5 38.6 -1.5 38.6 C0.5 38.6 3.1 36.0 2.8 30.0Z' fill='url(#c2g)' stroke='#2a1c12' stroke-width='0.85'/><path d='M3.0 30.2 C2.7 36.2 5.3 38.8 7.3 38.8 C9.3 38.8 11.9 36.2 11.6 30.2Z' fill='url(#c2g)' stroke='#2a1c12' stroke-width='0.85'/><path d='M10.9 29.9 C10.6 35.9 13.2 38.5 15.2 38.5 C17.2 38.5 19.8 35.9 19.5 29.9Z' fill='url(#c2g)' stroke='#2a1c12' stroke-width='0.85'/><path d='M18.1 30.1 C17.8 36.1 20.4 38.7 22.4 38.7 C24.4 38.7 27.0 36.1 26.7 30.1Z' fill='url(#c2g)' stroke='#2a1c12' stroke-width='0.85'/><path d='M-25.9 24.1 C-26.2 30.1 -23.6 32.7 -21.6 32.7 C-19.6 32.7 -17.0 30.1 -17.3 24.1Z' fill='url(#c2g)' stroke='#2a1c12' stroke-width='0.85'/><path d='M-17.8 23.7 C-18.1 29.7 -15.5 32.3 -13.5 32.3 C-11.5 32.3 -8.9 29.7 -9.2 23.7Z' fill='url(#c2g)' stroke='#2a1c12' stroke-width='0.85'/><path d='M-10.0 23.6 C-10.3 29.6 -7.7 32.2 -5.7 32.2 C-3.7 32.2 -1.1 29.6 -1.4 23.6Z' fill='url(#c2g)' stroke='#2a1c12' stroke-width='0.85'/><path d='M-1.6 23.5 C-1.9 29.5 0.7 32.1 2.7 32.1 C4.7 32.1 7.3 29.5 7.0 23.5Z' fill='url(#c2g)' stroke='#2a1c12' stroke-width='0.85'/><path d='M6.0 23.2 C5.7 29.2 8.3 31.8 10.3 31.8 C12.3 31.8 14.9 29.2 14.6 23.2Z' fill='url(#c2g)' stroke='#2a1c12' stroke-width='0.85'/><path d='M14.9 23.5 C14.6 29.5 17.2 32.1 19.2 32.1 C21.2 32.1 23.8 29.5 23.5 23.5Z' fill='url(#c2g)' stroke='#2a1c12' stroke-width='0.85'/><path d='M-29.8 16.7 C-30.1 22.7 -27.5 25.3 -25.5 25.3 C-23.5 25.3 -20.9 22.7 -21.2 16.7Z' fill='url(#c2g)' stroke='#2a1c12' stroke-width='0.85'/><path d='M-21.8 16.7 C-22.1 22.7 -19.5 25.3 -17.5 25.3 C-15.5 25.3 -12.9 22.7 -13.2 16.7Z' fill='url(#c2g)' stroke='#2a1c12' stroke-width='0.85'/><path d='M-14.1 17.2 C-14.4 23.2 -11.8 25.8 -9.8 25.8 C-7.8 25.8 -5.2 23.2 -5.5 17.2Z' fill='url(#c2g)' stroke='#2a1c12' stroke-width='0.85'/><path d='M-5.7 16.7 C-6.0 22.7 -3.4 25.3 -1.4 25.3 C0.6 25.3 3.2 22.7 2.9 16.7Z' fill='url(#c2g)' stroke='#2a1c12' stroke-width='0.85'/><path d='M2.7 16.6 C2.4 22.6 5.0 25.2 7.0 25.2 C9.0 25.2 11.6 22.6 11.3 16.6Z' fill='url(#c2g)' stroke='#2a1c12' stroke-width='0.85'/><path d='M10.2 17.3 C9.9 23.3 12.5 25.9 14.5 25.9 C16.5 25.9 19.1 23.3 18.8 17.3Z' fill='url(#c2g)' stroke='#2a1c12' stroke-width='0.85'/><path d='M18.1 16.9 C17.8 22.9 20.4 25.5 22.4 25.5 C24.4 25.5 27.0 22.9 26.7 16.9Z' fill='url(#c2g)' stroke='#2a1c12' stroke-width='0.85'/><path d='M-25.1 10.7 C-25.4 16.7 -22.8 19.3 -20.8 19.3 C-18.8 19.3 -16.2 16.7 -16.5 10.7Z' fill='url(#c2g)' stroke='#2a1c12' stroke-width='0.85'/><path d='M-17.9 10.3 C-18.2 16.3 -15.6 18.9 -13.6 18.9 C-11.6 18.9 -9.0 16.3 -9.3 10.3Z' fill='url(#c2g)' stroke='#2a1c12' stroke-width='0.85'/><path d='M-9.2 10.3 C-9.5 16.3 -6.9 18.9 -4.9 18.9 C-2.9 18.9 -0.3 16.3 -0.6 10.3Z' fill='url(#c2g)' stroke='#2a1c12' stroke-width='0.85'/><path d='M-0.9 10.1 C-1.2 16.1 1.4 18.7 3.4 18.7 C5.4 18.7 8.0 16.1 7.7 10.1Z' fill='url(#c2g)' stroke='#2a1c12' stroke-width='0.85'/><path d='M7.0 10.4 C6.7 16.4 9.3 19.0 11.3 19.0 C13.3 19.0 15.9 16.4 15.6 10.4Z' fill='url(#c2g)' stroke='#2a1c12' stroke-width='0.85'/><path d='M14.2 10.4 C13.9 16.4 16.5 19.0 18.5 19.0 C20.5 19.0 23.1 16.4 22.8 10.4Z' fill='url(#c2g)' stroke='#2a1c12' stroke-width='0.85'/><path d='M-29.9 4.0 C-30.2 10.0 -27.6 12.6 -25.6 12.6 C-23.6 12.6 -21.0 10.0 -21.3 4.0Z' fill='url(#c2g)' stroke='#2a1c12' stroke-width='0.85'/><path d='M-21.8 4.2 C-22.1 10.2 -19.5 12.8 -17.5 12.8 C-15.5 12.8 -12.9 10.2 -13.2 4.2Z' fill='url(#c2g)' stroke='#2a1c12' stroke-width='0.85'/><path d='M-13.4 3.7 C-13.7 9.7 -11.1 12.3 -9.1 12.3 C-7.1 12.3 -4.5 9.7 -4.8 3.7Z' fill='url(#c2g)' stroke='#2a1c12' stroke-width='0.85'/><path d='M-5.8 3.9 C-6.1 9.9 -3.5 12.5 -1.5 12.5 C0.5 12.5 3.1 9.9 2.8 3.9Z' fill='url(#c2g)' stroke='#2a1c12' stroke-width='0.85'/><path d='M2.2 4.2 C1.9 10.2 4.5 12.8 6.5 12.8 C8.5 12.8 11.1 10.2 10.8 4.2Z' fill='url(#c2g)' stroke='#2a1c12' stroke-width='0.85'/><path d='M10.0 3.8 C9.7 9.8 12.3 12.4 14.3 12.4 C16.3 12.4 18.9 9.8 18.6 3.8Z' fill='url(#c2g)' stroke='#2a1c12' stroke-width='0.85'/><path d='M18.6 3.6 C18.3 9.6 20.9 12.2 22.9 12.2 C24.9 12.2 27.5 9.6 27.2 3.6Z' fill='url(#c2g)' stroke='#2a1c12' stroke-width='0.85'/><path d='M-25.2 -2.9 C-25.5 3.1 -22.9 5.7 -20.9 5.7 C-18.9 5.7 -16.3 3.1 -16.6 -2.9Z' fill='url(#c2g)' stroke='#2a1c12' stroke-width='0.85'/><path d='M-17.3 -2.7 C-17.6 3.3 -15.0 5.9 -13.0 5.9 C-11.0 5.9 -8.4 3.3 -8.7 -2.7Z' fill='url(#c2g)' stroke='#2a1c12' stroke-width='0.85'/><path d='M-9.7 -2.9 C-10.0 3.1 -7.4 5.7 -5.4 5.7 C-3.4 5.7 -0.8 3.1 -1.1 -2.9Z' fill='url(#c2g)' stroke='#2a1c12' stroke-width='0.85'/><path d='M-2.0 -3.1 C-2.3 2.9 0.3 5.5 2.3 5.5 C4.3 5.5 6.9 2.9 6.6 -3.1Z' fill='url(#c2g)' stroke='#2a1c12' stroke-width='0.85'/><path d='M6.9 -3.0 C6.6 3.0 9.2 5.6 11.2 5.6 C13.2 5.6 15.8 3.0 15.5 -3.0Z' fill='url(#c2g)' stroke='#2a1c12' stroke-width='0.85'/><path d='M14.7 -3.2 C14.4 2.8 17.0 5.4 19.0 5.4 C21.0 5.4 23.6 2.8 23.3 -3.2Z' fill='url(#c2g)' stroke='#2a1c12' stroke-width='0.85'/><path d='M-29.4 -9.5 C-29.7 -3.5 -27.1 -0.9 -25.1 -0.9 C-23.1 -0.9 -20.5 -3.5 -20.8 -9.5Z' fill='url(#c2g)' stroke='#2a1c12' stroke-width='0.85'/><path d='M-21.5 -9.6 C-21.8 -3.6 -19.2 -1.0 -17.2 -1.0 C-15.2 -1.0 -12.6 -3.6 -12.9 -9.6Z' fill='url(#c2g)' stroke='#2a1c12' stroke-width='0.85'/><path d='M-14.0 -9.6 C-14.3 -3.6 -11.7 -1.0 -9.7 -1.0 C-7.7 -1.0 -5.1 -3.6 -5.4 -9.6Z' fill='url(#c2g)' stroke='#2a1c12' stroke-width='0.85'/><path d='M-5.8 -9.8 C-6.1 -3.8 -3.5 -1.2 -1.5 -1.2 C0.5 -1.2 3.1 -3.8 2.8 -9.8Z' fill='url(#c2g)' stroke='#2a1c12' stroke-width='0.85'/><path d='M2.8 -9.6 C2.5 -3.6 5.1 -1.0 7.1 -1.0 C9.1 -1.0 11.7 -3.6 11.4 -9.6Z' fill='url(#c2g)' stroke='#2a1c12' stroke-width='0.85'/><path d='M10.4 -9.0 C10.1 -3.0 12.7 -0.4 14.7 -0.4 C16.7 -0.4 19.3 -3.0 19.0 -9.0Z' fill='url(#c2g)' stroke='#2a1c12' stroke-width='0.85'/><path d='M18.8 -9.0 C18.5 -3.0 21.1 -0.4 23.1 -0.4 C25.1 -0.4 27.7 -3.0 27.4 -9.0Z' fill='url(#c2g)' stroke='#2a1c12' stroke-width='0.85'/><path d='M-25.1 -16.4 C-25.4 -10.4 -22.8 -7.8 -20.8 -7.8 C-18.8 -7.8 -16.2 -10.4 -16.5 -16.4Z' fill='url(#c2g)' stroke='#2a1c12' stroke-width='0.85'/><path d='M-17.8 -16.5 C-18.1 -10.5 -15.5 -7.9 -13.5 -7.9 C-11.5 -7.9 -8.9 -10.5 -9.2 -16.5Z' fill='url(#c2g)' stroke='#2a1c12' stroke-width='0.85'/><path d='M-9.3 -15.8 C-9.6 -9.8 -7.0 -7.2 -5.0 -7.2 C-3.0 -7.2 -0.4 -9.8 -0.7 -15.8Z' fill='url(#c2g)' stroke='#2a1c12' stroke-width='0.85'/><path d='M-1.7 -16.1 C-2.0 -10.1 0.6 -7.5 2.6 -7.5 C4.6 -7.5 7.2 -10.1 6.9 -16.1Z' fill='url(#c2g)' stroke='#2a1c12' stroke-width='0.85'/><path d='M6.7 -15.8 C6.4 -9.8 9.0 -7.2 11.0 -7.2 C13.0 -7.2 15.6 -9.8 15.3 -15.8Z' fill='url(#c2g)' stroke='#2a1c12' stroke-width='0.85'/><path d='M14.2 -15.7 C13.9 -9.7 16.5 -7.1 18.5 -7.1 C20.5 -7.1 23.1 -9.7 22.8 -15.7Z' fill='url(#c2g)' stroke='#2a1c12' stroke-width='0.85'/><path d='M-29.7 -22.5 C-30.0 -16.5 -27.4 -13.9 -25.4 -13.9 C-23.4 -13.9 -20.8 -16.5 -21.1 -22.5Z' fill='url(#c2g)' stroke='#2a1c12' stroke-width='0.85'/><path d='M-21.9 -23.0 C-22.2 -17.0 -19.6 -14.4 -17.6 -14.4 C-15.6 -14.4 -13.0 -17.0 -13.3 -23.0Z' fill='url(#c2g)' stroke='#2a1c12' stroke-width='0.85'/><path d='M-13.0 -22.4 C-13.3 -16.4 -10.7 -13.8 -8.7 -13.8 C-6.7 -13.8 -4.1 -16.4 -4.4 -22.4Z' fill='url(#c2g)' stroke='#2a1c12' stroke-width='0.85'/><path d='M-5.2 -23.1 C-5.5 -17.1 -2.9 -14.5 -0.9 -14.5 C1.1 -14.5 3.7 -17.1 3.4 -23.1Z' fill='url(#c2g)' stroke='#2a1c12' stroke-width='0.85'/><path d='M1.9 -22.9 C1.6 -16.9 4.2 -14.3 6.2 -14.3 C8.2 -14.3 10.8 -16.9 10.5 -22.9Z' fill='url(#c2g)' stroke='#2a1c12' stroke-width='0.85'/><path d='M10.1 -22.8 C9.8 -16.8 12.4 -14.2 14.4 -14.2 C16.4 -14.2 19.0 -16.8 18.7 -22.8Z' fill='url(#c2g)' stroke='#2a1c12' stroke-width='0.85'/><path d='M18.4 -23.1 C18.1 -17.1 20.7 -14.5 22.7 -14.5 C24.7 -14.5 27.3 -17.1 27.0 -23.1Z' fill='url(#c2g)' stroke='#2a1c12' stroke-width='0.85'/><path d='M-25.7 -29.1 C-26.0 -23.1 -23.4 -20.5 -21.4 -20.5 C-19.4 -20.5 -16.8 -23.1 -17.1 -29.1Z' fill='url(#c2g)' stroke='#2a1c12' stroke-width='0.85'/><path d='M-17.9 -28.9 C-18.2 -22.9 -15.6 -20.3 -13.6 -20.3 C-11.6 -20.3 -9.0 -22.9 -9.3 -28.9Z' fill='url(#c2g)' stroke='#2a1c12' stroke-width='0.85'/><path d='M-9.4 -29.0 C-9.7 -23.0 -7.1 -20.4 -5.1 -20.4 C-3.1 -20.4 -0.5 -23.0 -0.8 -29.0Z' fill='url(#c2g)' stroke='#2a1c12' stroke-width='0.85'/><path d='M-1.8 -29.3 C-2.1 -23.3 0.5 -20.7 2.5 -20.7 C4.5 -20.7 7.1 -23.3 6.8 -29.3Z' fill='url(#c2g)' stroke='#2a1c12' stroke-width='0.85'/><path d='M6.7 -29.4 C6.4 -23.4 9.0 -20.8 11.0 -20.8 C13.0 -20.8 15.6 -23.4 15.3 -29.4Z' fill='url(#c2g)' stroke='#2a1c12' stroke-width='0.85'/><path d='M13.9 -28.9 C13.6 -22.9 16.2 -20.3 18.2 -20.3 C20.2 -20.3 22.8 -22.9 22.5 -28.9Z' fill='url(#c2g)' stroke='#2a1c12' stroke-width='0.85'/><path d='M-29.2 -36.0 C-29.5 -30.0 -26.9 -27.4 -24.9 -27.4 C-22.9 -27.4 -20.3 -30.0 -20.6 -36.0Z' fill='url(#c2g)' stroke='#2a1c12' stroke-width='0.85'/><path d='M-22.0 -35.4 C-22.3 -29.4 -19.7 -26.8 -17.7 -26.8 C-15.7 -26.8 -13.1 -29.4 -13.4 -35.4Z' fill='url(#c2g)' stroke='#2a1c12' stroke-width='0.85'/><path d='M-13.4 -36.3 C-13.7 -30.3 -11.1 -27.7 -9.1 -27.7 C-7.1 -27.7 -4.5 -30.3 -4.8 -36.3Z' fill='url(#c2g)' stroke='#2a1c12' stroke-width='0.85'/><path d='M-5.8 -36.2 C-6.1 -30.2 -3.5 -27.6 -1.5 -27.6 C0.5 -27.6 3.1 -30.2 2.8 -36.2Z' fill='url(#c2g)' stroke='#2a1c12' stroke-width='0.85'/><path d='M2.8 -36.1 C2.5 -30.1 5.1 -27.5 7.1 -27.5 C9.1 -27.5 11.7 -30.1 11.4 -36.1Z' fill='url(#c2g)' stroke='#2a1c12' stroke-width='0.85'/><path d='M11.0 -35.6 C10.7 -29.6 13.3 -27.0 15.3 -27.0 C17.3 -27.0 19.9 -29.6 19.6 -35.6Z' fill='url(#c2g)' stroke='#2a1c12' stroke-width='0.85'/><path d='M18.0 -35.6 C17.7 -29.6 20.3 -27.0 22.3 -27.0 C24.3 -27.0 26.9 -29.6 26.6 -35.6Z' fill='url(#c2g)' stroke='#2a1c12' stroke-width='0.85'/><path d='M-25.6 -42.2 C-25.9 -36.2 -23.3 -33.6 -21.3 -33.6 C-19.3 -33.6 -16.7 -36.2 -17.0 -42.2Z' fill='url(#c2g)' stroke='#2a1c12' stroke-width='0.85'/><path d='M-17.1 -42.6 C-17.4 -36.6 -14.8 -34.0 -12.8 -34.0 C-10.8 -34.0 -8.2 -36.6 -8.5 -42.6Z' fill='url(#c2g)' stroke='#2a1c12' stroke-width='0.85'/><path d='M-10.0 -42.0 C-10.3 -36.0 -7.7 -33.4 -5.7 -33.4 C-3.7 -33.4 -1.1 -36.0 -1.4 -42.0Z' fill='url(#c2g)' stroke='#2a1c12' stroke-width='0.85'/><path d='M-1.6 -42.0 C-1.9 -36.0 0.7 -33.4 2.7 -33.4 C4.7 -33.4 7.3 -36.0 7.0 -42.0Z' fill='url(#c2g)' stroke='#2a1c12' stroke-width='0.85'/><path d='M6.7 -42.2 C6.4 -36.2 9.0 -33.6 11.0 -33.6 C13.0 -33.6 15.6 -36.2 15.3 -42.2Z' fill='url(#c2g)' stroke='#2a1c12' stroke-width='0.85'/><path d='M14.9 -42.3 C14.6 -36.3 17.2 -33.7 19.2 -33.7 C21.2 -33.7 23.8 -36.3 23.5 -42.3Z' fill='url(#c2g)' stroke='#2a1c12' stroke-width='0.85'/><path d='M-29.6 -49.4 C-29.9 -43.4 -27.3 -40.8 -25.3 -40.8 C-23.3 -40.8 -20.7 -43.4 -21.0 -49.4Z' fill='url(#c2g)' stroke='#2a1c12' stroke-width='0.85'/><path d='M-21.3 -49.1 C-21.6 -43.1 -19.0 -40.5 -17.0 -40.5 C-15.0 -40.5 -12.4 -43.1 -12.7 -49.1Z' fill='url(#c2g)' stroke='#2a1c12' stroke-width='0.85'/><path d='M-13.5 -48.6 C-13.8 -42.6 -11.2 -40.0 -9.2 -40.0 C-7.2 -40.0 -4.6 -42.6 -4.9 -48.6Z' fill='url(#c2g)' stroke='#2a1c12' stroke-width='0.85'/><path d='M-5.9 -48.7 C-6.2 -42.7 -3.6 -40.1 -1.6 -40.1 C0.4 -40.1 3.0 -42.7 2.7 -48.7Z' fill='url(#c2g)' stroke='#2a1c12' stroke-width='0.85'/><path d='M2.0 -48.8 C1.7 -42.8 4.3 -40.2 6.3 -40.2 C8.3 -40.2 10.9 -42.8 10.6 -48.8Z' fill='url(#c2g)' stroke='#2a1c12' stroke-width='0.85'/><path d='M10.9 -49.2 C10.6 -43.2 13.2 -40.6 15.2 -40.6 C17.2 -40.6 19.8 -43.2 19.5 -49.2Z' fill='url(#c2g)' stroke='#2a1c12' stroke-width='0.85'/><path d='M18.6 -48.5 C18.3 -42.5 20.9 -39.9 22.9 -39.9 C24.9 -39.9 27.5 -42.5 27.2 -48.5Z' fill='url(#c2g)' stroke='#2a1c12' stroke-width='0.85'/><rect x='-23.1' y='-49.50000000000001' width='46.2' height='99.00000000000001' fill='url(#c2s)'/></g></g><line x1='86.0' y1='0.0' x2='93.1' y2='-2.9' stroke='#3e7c38' stroke-width='0.9' stroke-linecap='round'/><line x1='86.0' y1='0.0' x2='83.9' y2='5.4' stroke='#4c8a44' stroke-width='0.9' stroke-linecap='round'/><line x1='88.0' y1='1.4' x2='93.2' y2='-1.5' stroke='#4c8a44' stroke-width='0.9' stroke-linecap='round'/><line x1='88.0' y1='1.4' x2='88.4' y2='9.8' stroke='#5a9a50' stroke-width='0.9' stroke-linecap='round'/><line x1='90.0' y1='2.9' x2='95.7' y2='0.6' stroke='#3e7c38' stroke-width='0.9' stroke-linecap='round'/><line x1='90.0' y1='2.9' x2='91.0' y2='11.2' stroke='#3e7c38' stroke-width='0.9' stroke-linecap='round'/><line x1='92.0' y1='4.3' x2='98.5' y2='2.7' stroke='#4c8a44' stroke-width='0.9' stroke-linecap='round'/><line x1='92.0' y1='4.3' x2='92.4' y2='12.7' stroke='#24522a' stroke-width='0.9' stroke-linecap='round'/><line x1='94.0' y1='5.7' x2='100.0' y2='3.0' stroke='#8cbc74' stroke-width='0.9' stroke-linecap='round'/><line x1='94.0' y1='5.7' x2='94.4' y2='12.8' stroke='#3e7c38' stroke-width='0.9' stroke-linecap='round'/><line x1='96.0' y1='7.1' x2='101.3' y2='5.1' stroke='#5a9a50' stroke-width='0.9' stroke-linecap='round'/><line x1='96.0' y1='7.1' x2='93.9' y2='13.8' stroke='#3e7c38' stroke-width='0.9' stroke-linecap='round'/><line x1='98.0' y1='8.6' x2='103.1' y2='4.7' stroke='#4c8a44' stroke-width='0.9' stroke-linecap='round'/><line x1='98.0' y1='8.6' x2='97.4' y2='13.7' stroke='#4c8a44' stroke-width='0.9' stroke-linecap='round'/><line x1='100.0' y1='10.0' x2='103.7' y2='6.0' stroke='#4c8a44' stroke-width='0.9' stroke-linecap='round'/><line x1='100.0' y1='10.0' x2='100.9' y2='15.4' stroke='#4c8a44' stroke-width='0.9' stroke-linecap='round'/><line x1='102.3' y1='10.9' x2='108.0' y2='5.6' stroke='#4c8a44' stroke-width='0.9' stroke-linecap='round'/><line x1='102.3' y1='10.9' x2='103.8' y2='15.9' stroke='#2e6a2c' stroke-width='0.9' stroke-linecap='round'/><line x1='104.6' y1='11.7' x2='111.8' y2='5.1' stroke='#5a9a50' stroke-width='0.9' stroke-linecap='round'/><line x1='104.6' y1='11.7' x2='107.4' y2='19.7' stroke='#6aa85a' stroke-width='0.9' stroke-linecap='round'/><line x1='106.9' y1='12.6' x2='111.1' y2='9.1' stroke='#5a9a50' stroke-width='0.9' stroke-linecap='round'/><line x1='106.9' y1='12.6' x2='106.1' y2='19.9' stroke='#8cbc74' stroke-width='0.9' stroke-linecap='round'/><line x1='109.1' y1='13.4' x2='113.0' y2='10.2' stroke='#2e6a2c' stroke-width='0.9' stroke-linecap='round'/><line x1='109.1' y1='13.4' x2='109.6' y2='21.5' stroke='#6aa85a' stroke-width='0.9' stroke-linecap='round'/><line x1='111.4' y1='14.3' x2='116.4' y2='10.6' stroke='#3e7c38' stroke-width='0.9' stroke-linecap='round'/><line x1='111.4' y1='14.3' x2='114.3' y2='22.4' stroke='#2e6a2c' stroke-width='0.9' stroke-linecap='round'/><line x1='113.7' y1='15.1' x2='121.3' y2='10.1' stroke='#4c8a44' stroke-width='0.9' stroke-linecap='round'/><line x1='113.7' y1='15.1' x2='115.6' y2='24.7' stroke='#24522a' stroke-width='0.9' stroke-linecap='round'/></svg><div class='a' style='left:120.5px;top:150.5px;width:164px;height:123px;border:1px solid #2b9ac8'></div><svg class='a' style='left:153px;top:294px' width='164' height='122' viewBox='0 0 164 122'><defs><linearGradient id='abg' x1='0' x2='1'><stop offset='0' stop-color='#a8b848'/><stop offset='0.14' stop-color='#bac855'/><stop offset='0.3' stop-color='#acbb4a'/><stop offset='0.6' stop-color='#9eab48'/><stop offset='0.84' stop-color='#80864a'/><stop offset='1' stop-color='#6e6c4c'/></linearGradient><linearGradient id='abg2' x1='0' y1='0' x2='0' y2='1'><stop offset='0' stop-color='#5a6040' stop-opacity='0.3'/><stop offset='0.25' stop-color='#5a6040' stop-opacity='0'/><stop offset='1' stop-color='#b8c850' stop-opacity='0.12'/></linearGradient><radialGradient id='ap' cx='0.45' cy='0.5' r='0.58'><stop offset='0' stop-color='#b87648'/><stop offset='0.55' stop-color='#a8663e'/><stop offset='0.88' stop-color='#8a5034'/><stop offset='1' stop-color='#6e3e2a'/></radialGradient><radialGradient id='aps' cx='0.5' cy='0.88' r='0.45'><stop offset='0' stop-color='#c89a50' stop-opacity='0.55'/><stop offset='1' stop-color='#c89a50' stop-opacity='0'/></radialGradient><radialGradient id='apt' cx='0.5' cy='0.1' r='0.45'><stop offset='0' stop-color='#9a6058' stop-opacity='0.5'/><stop offset='1' stop-color='#9a6058' stop-opacity='0'/></radialGradient></defs><rect width='164' height='122' fill='url(#abg)'/><rect width='164' height='122' fill='url(#abg2)'/><path d='M128 0 H164 V5 C152 3 140 4 128 0Z' fill='#3a3a30'/><path d='M140 2 L146 8' stroke='#3a3a30' stroke-width='1'/><path d='M72 19 C79.0 15.4 86.7 15.0 94 14.5 C101.3 14.0 109.5 13.9 116 16 C122.5 18.1 128.7 21.3 133 27 C137.3 32.7 141.0 41.2 142 50 C143.0 58.8 142.2 71.7 139 80 C135.8 88.3 129.8 95.4 123 100 C116.2 104.6 106.8 107.2 98 107.5 C89.2 107.8 77.7 105.8 70 102 C62.3 98.2 56.0 92.0 52 85 C48.0 78.0 46.0 68.2 46 60 C46.0 51.8 47.7 42.8 52 36 C56.3 29.2 65.0 22.6 72 19 Z' fill='url(#ap)'/><path d='M72 19 C79.0 15.4 86.7 15.0 94 14.5 C101.3 14.0 109.5 13.9 116 16 C122.5 18.1 128.7 21.3 133 27 C137.3 32.7 141.0 41.2 142 50 C143.0 58.8 142.2 71.7 139 80 C135.8 88.3 129.8 95.4 123 100 C116.2 104.6 106.8 107.2 98 107.5 C89.2 107.8 77.7 105.8 70 102 C62.3 98.2 56.0 92.0 52 85 C48.0 78.0 46.0 68.2 46 60 C46.0 51.8 47.7 42.8 52 36 C56.3 29.2 65.0 22.6 72 19 Z' fill='url(#aps)'/><path d='M72 19 C79.0 15.4 86.7 15.0 94 14.5 C101.3 14.0 109.5 13.9 116 16 C122.5 18.1 128.7 21.3 133 27 C137.3 32.7 141.0 41.2 142 50 C143.0 58.8 142.2 71.7 139 80 C135.8 88.3 129.8 95.4 123 100 C116.2 104.6 106.8 107.2 98 107.5 C89.2 107.8 77.7 105.8 70 102 C62.3 98.2 56.0 92.0 52 85 C48.0 78.0 46.0 68.2 46 60 C46.0 51.8 47.7 42.8 52 36 C56.3 29.2 65.0 22.6 72 19 Z' fill='url(#apt)'/><path d='M82 27 C90 33 106 34 118 27' stroke='#6a3a26' stroke-width='2' fill='none' opacity='0.5'/><ellipse cx='101' cy='31' rx='6' ry='3' fill='#4a2a1e' opacity='0.6'/><path d='M97 0 C98 10 99 20 100 31' stroke='#4a3a32' stroke-width='2.2' fill='none'/><path d='M72 26 L68 32 L70 36 L64 42 M58 40 L62 44 L60 50' stroke='#5e321e' stroke-width='1.1' fill='none' opacity='0.5' stroke-linejoin='round'/><path d='M112 38 L115 48 L111 56 L113 64 L108 72 L110 82 L105 92 L106 104' stroke='#5e321e' stroke-width='1.1' fill='none' opacity='0.5' stroke-linejoin='round'/><path d='M124 40 L128 50 L126 58 L130 66 L126 78 L128 86 L122 98' stroke='#5e321e' stroke-width='1.1' fill='none' opacity='0.5' stroke-linejoin='round'/><path d='M86 52 L82 60 L85 68 L79 76 L81 84 L75 94 L77 104' stroke='#5e321e' stroke-width='1.1' fill='none' opacity='0.5' stroke-linejoin='round'/><path d='M136 56 L138 66 L135 74 L137 82 L131 92' stroke='#5e321e' stroke-width='1.1' fill='none' opacity='0.5' stroke-linejoin='round'/><path d='M92 34 L96 40 L94 46 L97 52' stroke='#5e321e' stroke-width='1.1' fill='none' opacity='0.5' stroke-linejoin='round'/><path d='M56 70 L54 78 L58 86 L57 94' stroke='#5e321e' stroke-width='1.1' fill='none' opacity='0.5' stroke-linejoin='round'/><path d='M100 66 L96 74 L99 80 L94 88' stroke='#5e321e' stroke-width='1.1' fill='none' opacity='0.5' stroke-linejoin='round'/><path d='M112 38 L115 48 L111 56 L113 64 L108 72 L110 82 L105 92 L106 104' stroke='#d49c68' stroke-width='1.2' fill='none' opacity='0.35' transform='translate(1.6 0.4)' stroke-linejoin='round'/><path d='M86 52 L82 60 L85 68 L79 76 L81 84 L75 94 L77 104' stroke='#d49c68' stroke-width='1.2' fill='none' opacity='0.35' transform='translate(1.6 0.4)' stroke-linejoin='round'/><path d='M124 40 L128 50 L126 58 L130 66 L126 78 L128 86 L122 98' stroke='#d49c68' stroke-width='1.2' fill='none' opacity='0.35' transform='translate(1.6 0.4)' stroke-linejoin='round'/><path d='M66 30 C62 36 60 44 62 52' stroke='#d49c68' stroke-width='1.2' fill='none' opacity='0.35' transform='translate(1.6 0.4)' stroke-linejoin='round'/><ellipse cx='108' cy='92' rx='22' ry='12' fill='#c8984c' opacity='0.25'/></svg><div class='a' style='left:152.5px;top:293.5px;width:163.5px;height:121.5px;border:1px solid #48a8c8;box-sizing:border-box'></div><svg class='a' style='left:0;top:0' width='794' height='600'><path d='M118.5 149.2 H319.5 V419 H118.5 Z' fill='none' stroke='#1a86c8' stroke-width='2' stroke-dasharray='3 2.6'/><circle cx='118.5' cy='149.2' r='3.3' fill='#1a86c8'/><circle cx='319.5' cy='149.2' r='3.3' fill='#1a86c8'/><circle cx='118.5' cy='419' r='3.3' fill='#1a86c8'/><circle cx='319.5' cy='419' r='3.3' fill='#1a86c8'/><rect x='216.0' y='146.0' width='6.4' height='6.4' fill='#1a86c8'/><rect x='216.0' y='415.8' width='6.4' height='6.4' fill='#1a86c8'/><rect x='115.3' y='280.8' width='6.4' height='6.4' fill='#1a86c8'/><rect x='316.3' y='280.8' width='6.4' height='6.4' fill='#1a86c8'/><line x1='219.2' y1='132' x2='219.2' y2='146' stroke='#1a86c8' stroke-width='1.6' stroke-dasharray='2.2 1.6'/><circle cx='219.2' cy='132' r='3.3' fill='#1a86c8'/><circle cx='145.8' cy='149.3' r='5.2' fill='#b01828'/><circle cx='145.8' cy='149.3' r='3.9' fill='none' stroke='#fff' stroke-width='0.5' opacity='0.6'/><g fill='#fff'><circle cx='145.8' cy='146.6' r='1'/><circle cx='145.8' cy='152' r='1'/><circle cx='143.1' cy='149.3' r='1'/><circle cx='148.5' cy='149.3' r='1'/></g><path d='M144 147.5 L147.6 151.1 M147.6 147.5 L144 151.1' stroke='#fff' stroke-width='0.8'/></svg><svg class='a' style='left:0;top:0' width='794' height='600'><circle cx='248.5' cy='481.0' r='5' fill='none' stroke='#6a6a6a' stroke-width='2'/><path d='M245.0 484.5 L239.5 490.0' stroke='#6a6a6a' stroke-width='2.6' stroke-linecap='round'/><circle cx='252.5' cy='488.0' r='4' fill='#6a6a6a' stroke='#dedede' stroke-width='1'/><path d='M250.2 488.0 H254.8' stroke='#fff' stroke-width='1.2'/><circle cx='330.5' cy='481.0' r='5' fill='none' stroke='#6a6a6a' stroke-width='2'/><path d='M327.0 484.5 L321.5 490.0' stroke='#6a6a6a' stroke-width='2.6' stroke-linecap='round'/><circle cx='334.5' cy='488.0' r='4' fill='#6a6a6a' stroke='#dedede' stroke-width='1'/><path d='M332.2 488.0 H336.8' stroke='#fff' stroke-width='1.2'/><path d='M334.5 485.7 V490.3' stroke='#fff' stroke-width='1.2'/><line x1='261' y1='483' x2='314' y2='483' stroke='#9a9a9a' stroke-width='0.8'/><line x1='261' y1='483' x2='268' y2='483' stroke='#333' stroke-width='1'/><circle cx='271' cy='483' r='5' fill='#1a86c8'/><path d='M353.3 478.6 L347.6 483.5 L353.3 488.4Z' fill='#9a9a9a'/><path d='M393.6 478.6 L399.2 483.5 L393.6 488.4Z' fill='#9a9a9a'/><g fill='#8a8a8a'><path d='M365 474.8 L370.5 474.8 L365 480.3Z'/><path d='M382.2 474.8 L376.7 474.8 L382.2 480.3Z'/><path d='M365 492.2 L370.5 492.2 L365 486.7Z'/><path d='M382.2 492.2 L376.7 492.2 L382.2 486.7Z'/></g><g stroke='#8a8a8a' stroke-width='1.8'><path d='M366.5 476.3 L370.5 480.3 M380.7 476.3 L376.7 480.3 M366.5 490.7 L370.5 486.7 M380.7 490.7 L376.7 486.7'/></g><rect x='411.8' y='484' width='6' height='6.7' fill='#555'/><rect x='417.8' y='484' width='4.6' height='6.7' fill='#7a7a7a'/><rect x='412.5' y='480' width='5.5' height='4' fill='#888'/><path d='M420.5 475.5 C424 475 426.5 477 426.5 480' stroke='#333' stroke-width='1.4' fill='none'/><path d='M423.8 479.3 L426.6 482.6 L429 479Z' fill='#333'/><rect x='431.4' y='474.3' width='17.4' height='17.6' fill='#c6c6c6' stroke='#a8a8a8' stroke-width='0.7'/><rect x='434' y='480.8' width='13.6' height='5.3' fill='#444'/><path d='M435 483 H446.5' stroke='#ccc' stroke-width='1' stroke-dasharray='3 0.8'/></svg><svg class='a' style='left:0;top:0' width='794' height='600'><rect x='618' y='90' width='176' height='22.8' fill='#fff'/><path d='M780.3 99.5 L786.7 105.9 M786.7 99.5 L780.3 105.9' stroke='#666' stroke-width='1.15'/><rect x='785' y='113' width='9' height='380' fill='#ebebeb'/><rect x='785.5' y='124.5' width='8' height='281' rx='3' fill='#c2c2c2'/><path d='M787 121 L789.5 118 L792 121Z' fill='#999'/><path d='M787 486.5 L789.5 489.5 L792 486.5Z' fill='#999'/><rect x='623.5' y='177.2' width='160' height='1' fill='#dadada'/><rect x='623.5' y='232.8' width='160' height='1' fill='#dadada'/><rect x='623.5' y='290' width='160' height='1' fill='#dadada'/><rect x='623.5' y='346' width='160' height='1' fill='#dadada'/><rect x='623.5' y='406' width='160' height='1' fill='#dadada'/><rect x='623.5' y='461.6' width='160' height='1' fill='#dadada'/><path d='M631 124.5 H635.6 L633.3 127.3Z' fill='#999'/><path d='M631 199.5 H635.6 L633.3 202.3Z' fill='#999'/><path d='M631 256 H635.6 L633.3 258.8Z' fill='#999'/><path d='M631 312.4 H635.6 L633.3 315.2Z' fill='#999'/><path d='M631 368.6 H635.6 L633.3 371.40000000000003Z' fill='#999'/><path d='M631 429 H635.6 L633.3 431.8Z' fill='#999'/><path d='M631 482.6 H635.6 L633.3 485.40000000000003Z' fill='#999'/><rect x='634.4' y='140' width='10.3' height='9.4' fill='#2f9ad8'/><g stroke='#e8f6ff' stroke-width='0.55'><line x1='636.46' y1='140' x2='636.46' y2='149.4'/><line x1='638.52' y1='140' x2='638.52' y2='149.4'/><line x1='640.58' y1='140' x2='640.58' y2='149.4'/><line x1='642.64' y1='140' x2='642.64' y2='149.4'/><line x1='634.4' y1='141.88' x2='644.7' y2='141.88'/><line x1='634.4' y1='143.76' x2='644.7' y2='143.76'/><line x1='634.4' y1='145.64' x2='644.7' y2='145.64'/><line x1='634.4' y1='147.52' x2='644.7' y2='147.52'/></g><rect x='653.9' y='138.1' width='44.7' height='13.6' fill='#fff' stroke='#dcdcdc' stroke-width='1'/><path d='M693.8 143 L695.8 140.6 L697.8 143Z M693.8 146.5 L695.8 149 L697.8 146.5Z' fill='#c8c8c8'/><rect x='704.7' y='138.1' width='20.5' height='13.6' fill='#fff' stroke='#dcdcdc' stroke-width='1'/><circle cx='713' cy='145' r='3.6' fill='#dedede'/><path d='M719.8 144 L723.4 144 L721.6 146.3Z' fill='#999'/><path d='M634.6 159.8 H640.5 C644.4 159.8 646 162.4 646 165.2 C646 168 644.4 170.6 640.5 170.6 H634.6 V167 H640.3 C642 167 642.5 166.1 642.5 165.2 C642.5 164.3 642 163.4 640.3 163.4 H634.6Z' fill='#9e1628'/><rect x='634.4' y='159.8' width='3.2' height='3.6' fill='#222'/><rect x='634.4' y='167' width='3.2' height='3.6' fill='#222'/><rect x='653.9' y='158.2' width='44.7' height='13.6' fill='#fff' stroke='#dcdcdc' stroke-width='1'/><path d='M693.3 164 L697 164 L695.15 166.3Z' fill='#aaa'/><rect x='630.4' y='211.3' width='18.6' height='19' fill='#fafafa'/><g transform='translate(0 -1.5)'><path d='M633 220.5 H645.5' stroke='#222' stroke-width='1.2'/><rect x='636.3' y='216.8' width='4' height='7.4' fill='#1f5f9a' stroke='#222' stroke-width='0.8'/><rect x='640.7' y='216.8' width='4' height='7.4' fill='#fff' stroke='#222' stroke-width='0.9'/><path d='M658.2 213.8 V226.5' stroke='#222' stroke-width='1.2'/><rect x='654.2' y='215.3' width='8' height='4' fill='#fff' stroke='#222' stroke-width='0.9'/><rect x='654.2' y='220.6' width='8' height='4' fill='#1f5f9a' stroke='#222' stroke-width='0.8'/><path d='M673.4 213.8 V226.5' stroke='#222' stroke-width='1.2'/><rect x='675.8' y='215.3' width='6.5' height='4' fill='#fff' stroke='#222' stroke-width='0.9'/><rect x='675.8' y='221' width='6.5' height='4' fill='#1f5f9a' stroke='#222' stroke-width='0.8'/><path d='M703 213.8 V226.5' stroke='#222' stroke-width='1.2'/><rect x='692.6' y='215.3' width='7.5' height='4' fill='#fff' stroke='#222' stroke-width='0.9'/><rect x='692.6' y='221' width='7.5' height='4' fill='#1f5f9a' stroke='#222' stroke-width='0.8'/><path d='M711.3 214 H723' stroke='#222' stroke-width='1.2'/><rect x='712.4' y='216.3' width='4' height='9' fill='#fff' stroke='#222' stroke-width='0.9'/><rect x='717.8' y='216.3' width='4' height='6' fill='#1f5f9a' stroke='#222' stroke-width='0.8'/><path d='M731 226.3 H742.6' stroke='#222' stroke-width='1.2'/><rect x='732' y='216' width='4' height='9' fill='#fff' stroke='#222' stroke-width='0.9'/><rect x='737.8' y='218.5' width='4' height='6.5' fill='#1f5f9a' stroke='#222' stroke-width='0.8'/><path d='M750 225.5 L755.5 220 C754.5 217.5 756 215 758.8 215.3 L757 217.3 L758.6 218.9 L760.6 217.1 C761 220 758.5 221.5 756 220.5 L750.5 226' stroke='#222' stroke-width='1.2' fill='#fff' stroke-linejoin='round'/><path d='M751.8 213.3 V218.3 M749.3 215.8 H754.3' stroke='#1f6fb8' stroke-width='2'/></g><rect x='634' y='272.5' width='8' height='7' fill='none' stroke='#d0d0d0' stroke-width='1'/><rect x='640' y='270.5' width='4' height='4' fill='#d0d0d0'/><rect x='653' y='272.5' width='8' height='7' fill='none' stroke='#d0d0d0' stroke-width='1'/><rect x='659' y='270.5' width='4' height='4' fill='#d0d0d0'/><rect x='673' y='272.5' width='8' height='7' fill='none' stroke='#d0d0d0' stroke-width='1'/><rect x='679' y='270.5' width='4' height='4' fill='#d0d0d0'/><rect x='693' y='272.5' width='8' height='7' fill='none' stroke='#d0d0d0' stroke-width='1'/><rect x='699' y='270.5' width='4' height='4' fill='#d0d0d0'/><rect x='709' y='269' width='1' height='14' fill='#d0d0d0'/><path d='M716 271 V282 M728 271 V282' stroke='#d0d0d0' stroke-width='1'/><rect x='718' y='273' width='3' height='7' fill='none' stroke='#d0d0d0'/><rect x='723' y='273' width='3' height='7' fill='none' stroke='#d0d0d0'/><path d='M736 270.5 H748 M736 283 H748' stroke='#d0d0d0'/><rect x='738' y='273' width='8' height='3' fill='none' stroke='#d0d0d0'/><rect x='738' y='277.5' width='8' height='3' fill='none' stroke='#d0d0d0'/><rect x='634.5' y='329' width='7' height='6' fill='#d0d0d0' stroke='#c4c4c4' stroke-width='0.8'/><rect x='637.5' y='332' width='7' height='6' fill='#ececec' stroke='#c4c4c4' stroke-width='0.8'/><rect x='654' y='329' width='7' height='6' fill='#d0d0d0' stroke='#c4c4c4' stroke-width='0.8'/><rect x='657' y='332' width='7' height='6' fill='#ececec' stroke='#c4c4c4' stroke-width='0.8'/><rect x='631.1' y='383.8' width='34.7' height='15.2' fill='#fff' stroke='#d8d8d8'/><path d='M660.5 389 L662.5 386.5 L664.5 389Z M660.5 394 L662.5 396.5 L664.5 394Z' fill='#999'/><defs><radialGradient id='dial' cx='0.4' cy='0.35' r='0.7'><stop offset='0.6' stop-color='#fff'/><stop offset='1' stop-color='#d0d0d0'/></radialGradient></defs><circle cx='681.5' cy='391.8' r='7.8' fill='url(#dial)' stroke='#9a9a9a' stroke-width='0.7'/><circle cx='681.5' cy='387.2' r='1' fill='none' stroke='#999' stroke-width='0.6'/><rect x='698' y='391' width='9.2' height='6.8' fill='#2a8ad0' stroke='#16507e' stroke-width='0.6'/><path d='M701.5 387.3 C703.5 385.6 708 385.3 710 388.3 C712 391.5 710.5 396 706.5 396.8' stroke='#111' stroke-width='2.3' fill='none'/><path d='M698.2 387.5 L702.6 384 L703 390Z' fill='#111'/><rect x='722.8' y='391' width='9.2' height='6.8' fill='#2a8ad0' stroke='#16507e' stroke-width='0.6'/><path d='M728.5 387.3 C726.5 385.6 722 385.3 720 388.3 C718 391.5 719.5 396 723.5 396.8' stroke='#111' stroke-width='2.3' fill='none'/><path d='M731.8 387.5 L727.4 384 L727 390Z' fill='#111'/><rect x='631.1' y='442.5' width='49' height='13.6' fill='#fff' stroke='#d8d8d8'/><path d='M675 447 L677 444.5 L679 447Z M675 451.5 L677 454 L679 451.5Z' fill='#999'/><rect x='720.9' y='442.5' width='49' height='13.6' fill='#fff' stroke='#d8d8d8'/><path d='M765 447 L767 444.5 L769 447Z M765 451.5 L767 454 L769 451.5Z' fill='#999'/><path d='M686.5 449.3 H695 M688.6 447.2 L686.5 449.3 L688.6 451.4 M692.9 447.2 L695 449.3 L692.9 451.4' stroke='#444' stroke-width='1.1' fill='none'/><path d='M780.5 444.5 V454.5 M778.8 446.2 L780.5 444.5 L782.2 446.2 M778.8 452.8 L780.5 454.5 L782.2 452.8' stroke='#444' stroke-width='1' fill='none'/><g stroke='#222' fill='none'><rect x='706.2' y='442.8' width='4.4' height='4.6' rx='2' stroke-width='1.3'/><rect x='706.2' y='447.9' width='4.4' height='4.6' rx='2' stroke-width='1.3'/><path d='M703 444.5 L705 445.5 M702.8 447.7 H705 M703 450.9 L705 449.9 M713.8 444.5 L711.8 445.5 M714 447.7 H711.8 M713.8 450.9 L711.8 449.9' stroke-width='0.9'/></g></svg><svg class='a' style='left:0;top:0' width='794' height='600'><rect x='70' y='495' width='724' height='10' fill='#efefef'/><rect x='70' y='505' width='6' height='55.5' fill='#fff'/><path d='M70 505.5 H75 M70 560 H75' stroke='#111' stroke-width='1'/><rect x='74' y='505' width='1.8' height='55.5' fill='#111'/><rect x='80.0' y='505' width='86.1' height='55.5' fill='#fff'/><path d='M80.0 505.5 H166.1 M80.0 560.5 H166.1' stroke='#222' stroke-width='1'/><rect x='80.0' y='505' width='1.8' height='55.5' fill='#111'/><rect x='164.29999999999998' y='505' width='1.8' height='55.5' fill='#111'/><rect x='121.05' y='505.5' width='4' height='54.5' fill='#e6e6e6'/><rect x='122.05' y='505.5' width='2' height='54.5' fill='#c8c8c8'/><line x1='123.05' y1='505' x2='123.05' y2='560.5' stroke='#333' stroke-width='1' stroke-dasharray='2 1.3'/><rect x='169.0' y='505' width='86.1' height='55.5' fill='#fff'/><path d='M169.0 505.5 H255.1 M169.0 560.5 H255.1' stroke='#222' stroke-width='1'/><rect x='169.0' y='505' width='1.8' height='55.5' fill='#111'/><rect x='253.29999999999998' y='505' width='1.8' height='55.5' fill='#111'/><rect x='210.05' y='505.5' width='4' height='54.5' fill='#e6e6e6'/><rect x='211.05' y='505.5' width='2' height='54.5' fill='#c8c8c8'/><line x1='212.05' y1='505' x2='212.05' y2='560.5' stroke='#333' stroke-width='1' stroke-dasharray='2 1.3'/><rect x='258.0' y='505' width='86.1' height='55.5' fill='#fff'/><path d='M258.0 505.5 H344.1 M258.0 560.5 H344.1' stroke='#222' stroke-width='1'/><rect x='258.0' y='505' width='1.8' height='55.5' fill='#111'/><rect x='342.3' y='505' width='1.8' height='55.5' fill='#111'/><rect x='299.05' y='505.5' width='4' height='54.5' fill='#e6e6e6'/><rect x='300.05' y='505.5' width='2' height='54.5' fill='#c8c8c8'/><line x1='301.05' y1='505' x2='301.05' y2='560.5' stroke='#333' stroke-width='1' stroke-dasharray='2 1.3'/><rect x='347.0' y='505' width='86.1' height='55.5' fill='#fff'/><path d='M347.0 505.5 H433.1 M347.0 560.5 H433.1' stroke='#222' stroke-width='1'/><rect x='347.0' y='505' width='1.8' height='55.5' fill='#111'/><rect x='431.3' y='505' width='1.8' height='55.5' fill='#111'/><rect x='388.05' y='505.5' width='4' height='54.5' fill='#e6e6e6'/><rect x='389.05' y='505.5' width='2' height='54.5' fill='#c8c8c8'/><line x1='390.05' y1='505' x2='390.05' y2='560.5' stroke='#333' stroke-width='1' stroke-dasharray='2 1.3'/><rect x='436.0' y='505' width='86.1' height='55.5' fill='#fff'/><path d='M436.0 505.5 H522.1 M436.0 560.5 H522.1' stroke='#222' stroke-width='1'/><rect x='436.0' y='505' width='1.8' height='55.5' fill='#111'/><rect x='520.3000000000001' y='505' width='1.8' height='55.5' fill='#111'/><rect x='477.05' y='505.5' width='4' height='54.5' fill='#e6e6e6'/><rect x='478.05' y='505.5' width='2' height='54.5' fill='#c8c8c8'/><line x1='479.05' y1='505' x2='479.05' y2='560.5' stroke='#333' stroke-width='1' stroke-dasharray='2 1.3'/><rect x='525.0' y='505' width='86.1' height='55.5' fill='#fff'/><path d='M525.0 505.5 H611.1 M525.0 560.5 H611.1' stroke='#222' stroke-width='1'/><rect x='525.0' y='505' width='1.8' height='55.5' fill='#111'/><rect x='609.3000000000001' y='505' width='1.8' height='55.5' fill='#111'/><rect x='566.05' y='505.5' width='4' height='54.5' fill='#e6e6e6'/><rect x='567.05' y='505.5' width='2' height='54.5' fill='#c8c8c8'/><line x1='568.05' y1='505' x2='568.05' y2='560.5' stroke='#333' stroke-width='1' stroke-dasharray='2 1.3'/><rect x='614.0' y='505' width='86.1' height='55.5' fill='#fff'/><path d='M614.0 505.5 H700.1 M614.0 560.5 H700.1' stroke='#222' stroke-width='1'/><rect x='614.0' y='505' width='1.8' height='55.5' fill='#111'/><rect x='698.3000000000001' y='505' width='1.8' height='55.5' fill='#111'/><rect x='655.05' y='505.5' width='4' height='54.5' fill='#e6e6e6'/><rect x='656.05' y='505.5' width='2' height='54.5' fill='#c8c8c8'/><line x1='657.05' y1='505' x2='657.05' y2='560.5' stroke='#333' stroke-width='1' stroke-dasharray='2 1.3'/><rect x='703.0' y='505' width='86.1' height='55.5' fill='#fff'/><path d='M703.0 505.5 H789.1 M703.0 560.5 H789.1' stroke='#222' stroke-width='1'/><rect x='703.0' y='505' width='1.8' height='55.5' fill='#111'/><rect x='787.3000000000001' y='505' width='1.8' height='55.5' fill='#111'/><rect x='744.05' y='505.5' width='4' height='54.5' fill='#e6e6e6'/><rect x='745.05' y='505.5' width='2' height='54.5' fill='#c8c8c8'/><line x1='746.05' y1='505' x2='746.05' y2='560.5' stroke='#333' stroke-width='1' stroke-dasharray='2 1.3'/><rect x='792.0' y='505' width='86.1' height='55.5' fill='#fff'/><path d='M792.0 505.5 H878.1 M792.0 560.5 H878.1' stroke='#222' stroke-width='1'/><rect x='792.0' y='505' width='1.8' height='55.5' fill='#111'/><rect x='876.3000000000001' y='505' width='1.8' height='55.5' fill='#111'/><rect x='833.05' y='505.5' width='4' height='54.5' fill='#e6e6e6'/><rect x='834.05' y='505.5' width='2' height='54.5' fill='#c8c8c8'/><line x1='835.05' y1='505' x2='835.05' y2='560.5' stroke='#333' stroke-width='1' stroke-dasharray='2 1.3'/><defs><linearGradient id='tbg' x1='0' x2='1'><stop offset='0' stop-color='#b0bd50'/><stop offset='1' stop-color='#7d8048'/></linearGradient><radialGradient id='tap' cx='0.4' cy='0.4' r='0.6'><stop offset='0' stop-color='#c8885a'/><stop offset='1' stop-color='#8a4a2c'/></radialGradient></defs><svg x='85' y='511' width='28' height='21' viewBox='0 0 164 124' preserveAspectRatio='none'><defs><radialGradient id='pbg1T' cx='0.6' cy='0.8' r='0.55'><stop offset='0' stop-color='#a8c4bc'/><stop offset='0.55' stop-color='#82a898'/><stop offset='1' stop-color='#5f8c74'/></radialGradient><radialGradient id='pbg2T' cx='0.92' cy='0.55' r='0.3'><stop offset='0' stop-color='#9ab890'/><stop offset='1' stop-color='#9ab890' stop-opacity='0'/></radialGradient><radialGradient id='pbg3T' cx='0.45' cy='0.12' r='0.28'><stop offset='0' stop-color='#2c4c44'/><stop offset='1' stop-color='#2c4c44' stop-opacity='0'/></radialGradient><linearGradient id='pbrT' x1='0' x2='1'><stop offset='0' stop-color='#2e5a30'/><stop offset='0.6' stop-color='#4a8040'/><stop offset='1' stop-color='#4a8040' stop-opacity='0'/></linearGradient><filter id='blur1T'><feGaussianBlur stdDeviation='2.5'/></filter></defs><rect width='164' height='124' fill='url(#pbg1T)'/><rect width='164' height='124' fill='url(#pbg2T)'/><rect width='164' height='124' fill='url(#pbg3T)'/><g filter='url(#blur1T)' opacity='0.8'><ellipse cx='128' cy='92' rx='20' ry='28' fill='#8aac88'/><ellipse cx='152' cy='105' rx='14' ry='22' fill='#7fa278'/><ellipse cx='145' cy='60' rx='16' ry='14' fill='#a8c0b0'/><ellipse cx='85' cy='110' rx='20' ry='12' fill='#b8ccc6'/><ellipse cx='75' cy='30' rx='14' ry='28' fill='#3e6a50'/></g><path d='M0 0 H44 C50 30 56 60 52 90 C50 105 46 115 44 124 H0Z' fill='#3a6e36'/><line x1='0.0' y1='20.0' x2='6.3' y2='25.3' stroke='#6aa85a' stroke-width='1.0' stroke-linecap='round'/><line x1='0.0' y1='20.0' x2='-4.1' y2='32.4' stroke='#2e6a2c' stroke-width='1.0' stroke-linecap='round'/><line x1='0.2' y1='21.3' x2='5.8' y2='26.3' stroke='#24522a' stroke-width='1.0' stroke-linecap='round'/><line x1='0.2' y1='21.3' x2='-2.9' y2='28.5' stroke='#5a9a50' stroke-width='1.0' stroke-linecap='round'/><line x1='0.3' y1='22.6' x2='6.9' y2='26.9' stroke='#5a9a50' stroke-width='1.0' stroke-linecap='round'/><line x1='0.3' y1='22.6' x2='-3.2' y2='33.2' stroke='#3e7c38' stroke-width='1.0' stroke-linecap='round'/><line x1='0.5' y1='23.9' x2='7.9' y2='32.5' stroke='#2e6a2c' stroke-width='1.0' stroke-linecap='round'/><line x1='0.5' y1='23.9' x2='-5.0' y2='32.3' stroke='#3e7c38' stroke-width='1.0' stroke-linecap='round'/><line x1='0.6' y1='25.3' x2='11.9' y2='32.3' stroke='#4c8a44' stroke-width='1.0' stroke-linecap='round'/><line x1='0.6' y1='25.3' x2='-4.7' y2='34.9' stroke='#24522a' stroke-width='1.0' stroke-linecap='round'/><line x1='0.8' y1='26.6' x2='10.8' y2='34.9' stroke='#3e7c38' stroke-width='1.0' stroke-linecap='round'/><line x1='0.8' y1='26.6' x2='-3.0' y2='37.1' stroke='#3e7c38' stroke-width='1.0' stroke-linecap='round'/><line x1='0.9' y1='27.9' x2='9.2' y2='35.2' stroke='#2e6a2c' stroke-width='1.0' stroke-linecap='round'/><line x1='0.9' y1='27.9' x2='-5.4' y2='37.6' stroke='#5a9a50' stroke-width='1.0' stroke-linecap='round'/><line x1='1.1' y1='29.2' x2='7.6' y2='37.1' stroke='#4c8a44' stroke-width='1.0' stroke-linecap='round'/><line x1='1.1' y1='29.2' x2='-5.8' y2='41.1' stroke='#4c8a44' stroke-width='1.0' stroke-linecap='round'/><line x1='1.3' y1='30.5' x2='11.2' y2='38.7' stroke='#6aa85a' stroke-width='1.0' stroke-linecap='round'/><line x1='1.3' y1='30.5' x2='-3.6' y2='36.5' stroke='#4c8a44' stroke-width='1.0' stroke-linecap='round'/><line x1='1.4' y1='31.8' x2='10.8' y2='41.5' stroke='#6aa85a' stroke-width='1.0' stroke-linecap='round'/><line x1='1.4' y1='31.8' x2='-4.3' y2='41.8' stroke='#2e6a2c' stroke-width='1.0' stroke-linecap='round'/><line x1='1.6' y1='33.2' x2='10.0' y2='38.9' stroke='#8cbc74' stroke-width='1.0' stroke-linecap='round'/><line x1='1.6' y1='33.2' x2='-4.6' y2='45.5' stroke='#5a9a50' stroke-width='1.0' stroke-linecap='round'/><line x1='1.7' y1='34.5' x2='11.9' y2='40.8' stroke='#8cbc74' stroke-width='1.0' stroke-linecap='round'/><line x1='1.7' y1='34.5' x2='-5.2' y2='45.2' stroke='#8cbc74' stroke-width='1.0' stroke-linecap='round'/><line x1='1.9' y1='35.8' x2='11.2' y2='43.6' stroke='#24522a' stroke-width='1.0' stroke-linecap='round'/><line x1='1.9' y1='35.8' x2='-4.7' y2='46.8' stroke='#2e6a2c' stroke-width='1.0' stroke-linecap='round'/><line x1='2.1' y1='37.1' x2='10.0' y2='48.5' stroke='#5a9a50' stroke-width='1.0' stroke-linecap='round'/><line x1='2.1' y1='37.1' x2='-2.5' y2='43.2' stroke='#6aa85a' stroke-width='1.0' stroke-linecap='round'/><line x1='2.2' y1='38.4' x2='9.6' y2='47.6' stroke='#6aa85a' stroke-width='1.0' stroke-linecap='round'/><line x1='2.2' y1='38.4' x2='-3.7' y2='45.4' stroke='#5a9a50' stroke-width='1.0' stroke-linecap='round'/><line x1='2.4' y1='39.7' x2='7.7' y2='47.7' stroke='#5a9a50' stroke-width='1.0' stroke-linecap='round'/><line x1='2.4' y1='39.7' x2='-2.9' y2='50.0' stroke='#5a9a50' stroke-width='1.0' stroke-linecap='round'/><line x1='2.5' y1='41.1' x2='13.2' y2='47.8' stroke='#3e7c38' stroke-width='1.0' stroke-linecap='round'/><line x1='2.5' y1='41.1' x2='-3.6' y2='48.9' stroke='#8cbc74' stroke-width='1.0' stroke-linecap='round'/><line x1='2.7' y1='42.4' x2='8.6' y2='48.3' stroke='#5a9a50' stroke-width='1.0' stroke-linecap='round'/><line x1='2.7' y1='42.4' x2='-4.6' y2='53.7' stroke='#8cbc74' stroke-width='1.0' stroke-linecap='round'/><line x1='2.8' y1='43.7' x2='10.9' y2='51.3' stroke='#6aa85a' stroke-width='1.0' stroke-linecap='round'/><line x1='2.8' y1='43.7' x2='-1.8' y2='52.2' stroke='#5a9a50' stroke-width='1.0' stroke-linecap='round'/><line x1='3.0' y1='45.0' x2='7.3' y2='52.0' stroke='#3e7c38' stroke-width='1.0' stroke-linecap='round'/><line x1='3.0' y1='45.0' x2='-1.3' y2='56.1' stroke='#2e6a2c' stroke-width='1.0' stroke-linecap='round'/><line x1='3.2' y1='46.3' x2='11.2' y2='54.3' stroke='#4c8a44' stroke-width='1.0' stroke-linecap='round'/><line x1='3.2' y1='46.3' x2='-0.3' y2='53.7' stroke='#24522a' stroke-width='1.0' stroke-linecap='round'/><line x1='3.3' y1='47.6' x2='11.7' y2='55.0' stroke='#3e7c38' stroke-width='1.0' stroke-linecap='round'/><line x1='3.3' y1='47.6' x2='-3.1' y2='56.3' stroke='#24522a' stroke-width='1.0' stroke-linecap='round'/><line x1='3.5' y1='48.9' x2='11.5' y2='58.4' stroke='#5a9a50' stroke-width='1.0' stroke-linecap='round'/><line x1='3.5' y1='48.9' x2='-5.1' y2='58.3' stroke='#8cbc74' stroke-width='1.0' stroke-linecap='round'/><line x1='3.6' y1='50.3' x2='10.7' y2='58.8' stroke='#5a9a50' stroke-width='1.0' stroke-linecap='round'/><line x1='3.6' y1='50.3' x2='-0.1' y2='57.2' stroke='#6aa85a' stroke-width='1.0' stroke-linecap='round'/><line x1='3.8' y1='51.6' x2='10.1' y2='57.3' stroke='#3e7c38' stroke-width='1.0' stroke-linecap='round'/><line x1='3.8' y1='51.6' x2='-0.1' y2='58.5' stroke='#24522a' stroke-width='1.0' stroke-linecap='round'/><line x1='3.9' y1='52.9' x2='10.0' y2='56.7' stroke='#3e7c38' stroke-width='1.0' stroke-linecap='round'/><line x1='3.9' y1='52.9' x2='-3.5' y2='64.7' stroke='#24522a' stroke-width='1.0' stroke-linecap='round'/><line x1='4.1' y1='54.2' x2='15.5' y2='61.2' stroke='#24522a' stroke-width='1.0' stroke-linecap='round'/><line x1='4.1' y1='54.2' x2='-1.3' y2='64.6' stroke='#4c8a44' stroke-width='1.0' stroke-linecap='round'/><line x1='4.3' y1='55.5' x2='11.3' y2='63.4' stroke='#2e6a2c' stroke-width='1.0' stroke-linecap='round'/><line x1='4.3' y1='55.5' x2='-5.1' y2='66.3' stroke='#5a9a50' stroke-width='1.0' stroke-linecap='round'/><line x1='4.4' y1='56.8' x2='11.1' y2='63.4' stroke='#3e7c38' stroke-width='1.0' stroke-linecap='round'/><line x1='4.4' y1='56.8' x2='1.2' y2='65.9' stroke='#4c8a44' stroke-width='1.0' stroke-linecap='round'/><line x1='4.6' y1='58.2' x2='13.2' y2='66.6' stroke='#24522a' stroke-width='1.0' stroke-linecap='round'/><line x1='4.6' y1='58.2' x2='0.4' y2='71.5' stroke='#24522a' stroke-width='1.0' stroke-linecap='round'/><line x1='4.7' y1='59.5' x2='13.8' y2='67.4' stroke='#2e6a2c' stroke-width='1.0' stroke-linecap='round'/><line x1='4.7' y1='59.5' x2='-1.0' y2='66.7' stroke='#6aa85a' stroke-width='1.0' stroke-linecap='round'/><line x1='4.9' y1='60.8' x2='11.8' y2='70.8' stroke='#4c8a44' stroke-width='1.0' stroke-linecap='round'/><line x1='4.9' y1='60.8' x2='-2.3' y2='72.4' stroke='#4c8a44' stroke-width='1.0' stroke-linecap='round'/><line x1='5.1' y1='62.1' x2='11.7' y2='70.9' stroke='#8cbc74' stroke-width='1.0' stroke-linecap='round'/><line x1='5.1' y1='62.1' x2='-1.0' y2='72.1' stroke='#24522a' stroke-width='1.0' stroke-linecap='round'/><line x1='5.2' y1='63.4' x2='13.5' y2='74.9' stroke='#8cbc74' stroke-width='1.0' stroke-linecap='round'/><line x1='5.2' y1='63.4' x2='1.8' y2='71.6' stroke='#5a9a50' stroke-width='1.0' stroke-linecap='round'/><line x1='5.4' y1='64.7' x2='10.8' y2='71.7' stroke='#24522a' stroke-width='1.0' stroke-linecap='round'/><line x1='5.4' y1='64.7' x2='-1.0' y2='75.4' stroke='#2e6a2c' stroke-width='1.0' stroke-linecap='round'/><line x1='5.5' y1='66.1' x2='11.8' y2='74.5' stroke='#3e7c38' stroke-width='1.0' stroke-linecap='round'/><line x1='5.5' y1='66.1' x2='-2.8' y2='77.3' stroke='#5a9a50' stroke-width='1.0' stroke-linecap='round'/><line x1='5.7' y1='67.4' x2='12.9' y2='77.3' stroke='#4c8a44' stroke-width='1.0' stroke-linecap='round'/><line x1='5.7' y1='67.4' x2='-1.1' y2='74.4' stroke='#3e7c38' stroke-width='1.0' stroke-linecap='round'/><line x1='5.8' y1='68.7' x2='14.6' y2='74.5' stroke='#4c8a44' stroke-width='1.0' stroke-linecap='round'/><line x1='5.8' y1='68.7' x2='1.4' y2='79.4' stroke='#24522a' stroke-width='1.0' stroke-linecap='round'/><line x1='6.0' y1='70.0' x2='11.7' y2='78.9' stroke='#6aa85a' stroke-width='1.0' stroke-linecap='round'/><line x1='6.0' y1='70.0' x2='0.3' y2='80.2' stroke='#8cbc74' stroke-width='1.0' stroke-linecap='round'/><line x1='6.1' y1='71.3' x2='14.4' y2='82.1' stroke='#8cbc74' stroke-width='1.0' stroke-linecap='round'/><line x1='6.1' y1='71.3' x2='0.6' y2='77.9' stroke='#3e7c38' stroke-width='1.0' stroke-linecap='round'/><line x1='6.2' y1='72.6' x2='14.3' y2='81.0' stroke='#2e6a2c' stroke-width='1.0' stroke-linecap='round'/><line x1='6.2' y1='72.6' x2='-3.3' y2='83.0' stroke='#5a9a50' stroke-width='1.0' stroke-linecap='round'/><line x1='6.3' y1='74.0' x2='14.8' y2='83.0' stroke='#2e6a2c' stroke-width='1.0' stroke-linecap='round'/><line x1='6.3' y1='74.0' x2='0.9' y2='80.3' stroke='#3e7c38' stroke-width='1.0' stroke-linecap='round'/><line x1='6.4' y1='75.3' x2='15.8' y2='81.7' stroke='#5a9a50' stroke-width='1.0' stroke-linecap='round'/><line x1='6.4' y1='75.3' x2='0.8' y2='81.3' stroke='#8cbc74' stroke-width='1.0' stroke-linecap='round'/><line x1='6.5' y1='76.6' x2='13.2' y2='84.7' stroke='#4c8a44' stroke-width='1.0' stroke-linecap='round'/><line x1='6.5' y1='76.6' x2='2.0' y2='86.7' stroke='#2e6a2c' stroke-width='1.0' stroke-linecap='round'/><line x1='6.6' y1='77.9' x2='18.3' y2='85.8' stroke='#6aa85a' stroke-width='1.0' stroke-linecap='round'/><line x1='6.6' y1='77.9' x2='1.8' y2='89.5' stroke='#3e7c38' stroke-width='1.0' stroke-linecap='round'/><line x1='6.7' y1='79.2' x2='16.0' y2='88.8' stroke='#8cbc74' stroke-width='1.0' stroke-linecap='round'/><line x1='6.7' y1='79.2' x2='1.5' y2='84.5' stroke='#3e7c38' stroke-width='1.0' stroke-linecap='round'/><line x1='6.8' y1='80.5' x2='13.4' y2='86.5' stroke='#24522a' stroke-width='1.0' stroke-linecap='round'/><line x1='6.8' y1='80.5' x2='1.5' y2='90.2' stroke='#8cbc74' stroke-width='1.0' stroke-linecap='round'/><line x1='6.9' y1='81.9' x2='17.8' y2='90.1' stroke='#4c8a44' stroke-width='1.0' stroke-linecap='round'/><line x1='6.9' y1='81.9' x2='-1.6' y2='90.2' stroke='#8cbc74' stroke-width='1.0' stroke-linecap='round'/><line x1='7.0' y1='83.2' x2='12.2' y2='91.9' stroke='#24522a' stroke-width='1.0' stroke-linecap='round'/><line x1='7.0' y1='83.2' x2='3.7' y2='90.7' stroke='#24522a' stroke-width='1.0' stroke-linecap='round'/><line x1='7.1' y1='84.5' x2='15.6' y2='90.2' stroke='#3e7c38' stroke-width='1.0' stroke-linecap='round'/><line x1='7.1' y1='84.5' x2='-0.5' y2='94.6' stroke='#3e7c38' stroke-width='1.0' stroke-linecap='round'/><line x1='7.2' y1='85.8' x2='15.4' y2='92.3' stroke='#6aa85a' stroke-width='1.0' stroke-linecap='round'/><line x1='7.2' y1='85.8' x2='4.2' y2='92.8' stroke='#6aa85a' stroke-width='1.0' stroke-linecap='round'/><line x1='7.3' y1='87.1' x2='14.7' y2='95.4' stroke='#8cbc74' stroke-width='1.0' stroke-linecap='round'/><line x1='7.3' y1='87.1' x2='-1.7' y2='97.2' stroke='#2e6a2c' stroke-width='1.0' stroke-linecap='round'/><line x1='7.4' y1='88.4' x2='14.3' y2='94.4' stroke='#8cbc74' stroke-width='1.0' stroke-linecap='round'/><line x1='7.4' y1='88.4' x2='3.4' y2='98.0' stroke='#2e6a2c' stroke-width='1.0' stroke-linecap='round'/><line x1='7.5' y1='89.8' x2='15.3' y2='101.0' stroke='#5a9a50' stroke-width='1.0' stroke-linecap='round'/><line x1='7.5' y1='89.8' x2='0.7' y2='102.1' stroke='#24522a' stroke-width='1.0' stroke-linecap='round'/><line x1='7.6' y1='91.1' x2='15.6' y2='100.1' stroke='#5a9a50' stroke-width='1.0' stroke-linecap='round'/><line x1='7.6' y1='91.1' x2='0.3' y2='101.8' stroke='#24522a' stroke-width='1.0' stroke-linecap='round'/><line x1='7.7' y1='92.4' x2='13.7' y2='103.0' stroke='#4c8a44' stroke-width='1.0' stroke-linecap='round'/><line x1='7.7' y1='92.4' x2='-2.1' y2='101.8' stroke='#3e7c38' stroke-width='1.0' stroke-linecap='round'/><line x1='7.8' y1='93.7' x2='12.1' y2='100.6' stroke='#2e6a2c' stroke-width='1.0' stroke-linecap='round'/><line x1='7.8' y1='93.7' x2='3.0' y2='101.8' stroke='#6aa85a' stroke-width='1.0' stroke-linecap='round'/><line x1='7.9' y1='95.0' x2='13.7' y2='100.0' stroke='#6aa85a' stroke-width='1.0' stroke-linecap='round'/><line x1='7.9' y1='95.0' x2='4.1' y2='102.1' stroke='#8cbc74' stroke-width='1.0' stroke-linecap='round'/><line x1='8.0' y1='96.3' x2='17.6' y2='103.9' stroke='#6aa85a' stroke-width='1.0' stroke-linecap='round'/><line x1='8.0' y1='96.3' x2='3.5' y2='104.1' stroke='#3e7c38' stroke-width='1.0' stroke-linecap='round'/><line x1='8.0' y1='97.7' x2='12.3' y2='105.3' stroke='#2e6a2c' stroke-width='1.0' stroke-linecap='round'/><line x1='8.0' y1='97.7' x2='2.6' y2='106.8' stroke='#6aa85a' stroke-width='1.0' stroke-linecap='round'/><line x1='8.1' y1='99.0' x2='12.6' y2='106.0' stroke='#5a9a50' stroke-width='1.0' stroke-linecap='round'/><line x1='8.1' y1='99.0' x2='0.7' y2='105.7' stroke='#5a9a50' stroke-width='1.0' stroke-linecap='round'/><line x1='8.2' y1='100.3' x2='15.6' y2='106.2' stroke='#6aa85a' stroke-width='1.0' stroke-linecap='round'/><line x1='8.2' y1='100.3' x2='3.5' y2='108.6' stroke='#5a9a50' stroke-width='1.0' stroke-linecap='round'/><line x1='8.3' y1='101.6' x2='13.4' y2='106.9' stroke='#4c8a44' stroke-width='1.0' stroke-linecap='round'/><line x1='8.3' y1='101.6' x2='3.1' y2='109.3' stroke='#2e6a2c' stroke-width='1.0' stroke-linecap='round'/><line x1='8.4' y1='102.9' x2='19.4' y2='111.1' stroke='#3e7c38' stroke-width='1.0' stroke-linecap='round'/><line x1='8.4' y1='102.9' x2='2.6' y2='108.3' stroke='#4c8a44' stroke-width='1.0' stroke-linecap='round'/><line x1='8.5' y1='104.2' x2='18.8' y2='113.2' stroke='#3e7c38' stroke-width='1.0' stroke-linecap='round'/><line x1='8.5' y1='104.2' x2='4.8' y2='111.4' stroke='#5a9a50' stroke-width='1.0' stroke-linecap='round'/><line x1='8.6' y1='105.6' x2='15.0' y2='115.7' stroke='#4c8a44' stroke-width='1.0' stroke-linecap='round'/><line x1='8.6' y1='105.6' x2='3.0' y2='115.0' stroke='#24522a' stroke-width='1.0' stroke-linecap='round'/><line x1='8.7' y1='106.9' x2='16.6' y2='116.2' stroke='#2e6a2c' stroke-width='1.0' stroke-linecap='round'/><line x1='8.7' y1='106.9' x2='2.8' y2='118.3' stroke='#3e7c38' stroke-width='1.0' stroke-linecap='round'/><line x1='8.8' y1='108.2' x2='14.2' y2='113.7' stroke='#2e6a2c' stroke-width='1.0' stroke-linecap='round'/><line x1='8.8' y1='108.2' x2='1.0' y2='118.4' stroke='#2e6a2c' stroke-width='1.0' stroke-linecap='round'/><line x1='8.9' y1='109.5' x2='14.4' y2='116.3' stroke='#4c8a44' stroke-width='1.0' stroke-linecap='round'/><line x1='8.9' y1='109.5' x2='1.7' y2='117.0' stroke='#4c8a44' stroke-width='1.0' stroke-linecap='round'/><line x1='9.0' y1='110.8' x2='13.8' y2='119.8' stroke='#4c8a44' stroke-width='1.0' stroke-linecap='round'/><line x1='9.0' y1='110.8' x2='4.5' y2='116.8' stroke='#6aa85a' stroke-width='1.0' stroke-linecap='round'/><line x1='9.1' y1='112.1' x2='15.2' y2='117.3' stroke='#3e7c38' stroke-width='1.0' stroke-linecap='round'/><line x1='9.1' y1='112.1' x2='5.3' y2='119.7' stroke='#4c8a44' stroke-width='1.0' stroke-linecap='round'/><line x1='9.2' y1='113.5' x2='16.0' y2='122.0' stroke='#3e7c38' stroke-width='1.0' stroke-linecap='round'/><line x1='9.2' y1='113.5' x2='4.2' y2='123.0' stroke='#3e7c38' stroke-width='1.0' stroke-linecap='round'/><line x1='9.3' y1='114.8' x2='19.0' y2='123.3' stroke='#4c8a44' stroke-width='1.0' stroke-linecap='round'/><line x1='9.3' y1='114.8' x2='6.8' y2='121.6' stroke='#24522a' stroke-width='1.0' stroke-linecap='round'/><line x1='9.4' y1='116.1' x2='15.0' y2='122.5' stroke='#5a9a50' stroke-width='1.0' stroke-linecap='round'/><line x1='9.4' y1='116.1' x2='4.8' y2='125.4' stroke='#6aa85a' stroke-width='1.0' stroke-linecap='round'/><line x1='9.5' y1='117.4' x2='15.1' y2='126.0' stroke='#5a9a50' stroke-width='1.0' stroke-linecap='round'/><line x1='9.5' y1='117.4' x2='1.8' y2='128.5' stroke='#24522a' stroke-width='1.0' stroke-linecap='round'/><line x1='9.6' y1='118.7' x2='16.0' y2='124.6' stroke='#3e7c38' stroke-width='1.0' stroke-linecap='round'/><line x1='9.6' y1='118.7' x2='3.2' y2='130.2' stroke='#6aa85a' stroke-width='1.0' stroke-linecap='round'/><line x1='9.7' y1='120.0' x2='14.5' y2='126.7' stroke='#4c8a44' stroke-width='1.0' stroke-linecap='round'/><line x1='9.7' y1='120.0' x2='0.0' y2='128.9' stroke='#2e6a2c' stroke-width='1.0' stroke-linecap='round'/><line x1='9.8' y1='121.4' x2='19.9' y2='128.6' stroke='#4c8a44' stroke-width='1.0' stroke-linecap='round'/><line x1='9.8' y1='121.4' x2='5.8' y2='127.8' stroke='#6aa85a' stroke-width='1.0' stroke-linecap='round'/><line x1='9.9' y1='122.7' x2='17.1' y2='134.0' stroke='#6aa85a' stroke-width='1.0' stroke-linecap='round'/><line x1='9.9' y1='122.7' x2='1.5' y2='130.4' stroke='#6aa85a' stroke-width='1.0' stroke-linecap='round'/><line x1='18.0' y1='0.0' x2='25.8' y2='5.6' stroke='#3e7c38' stroke-width='1.0' stroke-linecap='round'/><line x1='18.0' y1='0.0' x2='16.3' y2='6.4' stroke='#4c8a44' stroke-width='1.0' stroke-linecap='round'/><line x1='18.4' y1='1.5' x2='25.9' y2='12.1' stroke='#24522a' stroke-width='1.0' stroke-linecap='round'/><line x1='18.4' y1='1.5' x2='16.4' y2='8.0' stroke='#4c8a44' stroke-width='1.0' stroke-linecap='round'/><line x1='18.7' y1='2.9' x2='25.2' y2='7.2' stroke='#4c8a44' stroke-width='1.0' stroke-linecap='round'/><line x1='18.7' y1='2.9' x2='15.7' y2='12.2' stroke='#24522a' stroke-width='1.0' stroke-linecap='round'/><line x1='19.1' y1='4.4' x2='24.8' y2='10.3' stroke='#8cbc74' stroke-width='1.0' stroke-linecap='round'/><line x1='19.1' y1='4.4' x2='18.0' y2='12.7' stroke='#2e6a2c' stroke-width='1.0' stroke-linecap='round'/><line x1='19.4' y1='5.9' x2='28.4' y2='11.3' stroke='#5a9a50' stroke-width='1.0' stroke-linecap='round'/><line x1='19.4' y1='5.9' x2='18.2' y2='14.4' stroke='#3e7c38' stroke-width='1.0' stroke-linecap='round'/><line x1='19.8' y1='7.4' x2='31.0' y2='13.7' stroke='#8cbc74' stroke-width='1.0' stroke-linecap='round'/><line x1='19.8' y1='7.4' x2='14.5' y2='17.0' stroke='#6aa85a' stroke-width='1.0' stroke-linecap='round'/><line x1='20.1' y1='8.8' x2='26.9' y2='16.9' stroke='#8cbc74' stroke-width='1.0' stroke-linecap='round'/><line x1='20.1' y1='8.8' x2='16.4' y2='21.4' stroke='#3e7c38' stroke-width='1.0' stroke-linecap='round'/><line x1='20.5' y1='10.3' x2='29.2' y2='16.5' stroke='#3e7c38' stroke-width='1.0' stroke-linecap='round'/><line x1='20.5' y1='10.3' x2='18.7' y2='22.3' stroke='#24522a' stroke-width='1.0' stroke-linecap='round'/><line x1='20.8' y1='11.8' x2='28.9' y2='19.9' stroke='#8cbc74' stroke-width='1.0' stroke-linecap='round'/><line x1='20.8' y1='11.8' x2='16.2' y2='23.5' stroke='#8cbc74' stroke-width='1.0' stroke-linecap='round'/><line x1='21.2' y1='13.2' x2='30.2' y2='21.3' stroke='#8cbc74' stroke-width='1.0' stroke-linecap='round'/><line x1='21.2' y1='13.2' x2='19.7' y2='24.3' stroke='#8cbc74' stroke-width='1.0' stroke-linecap='round'/><line x1='21.5' y1='14.7' x2='28.3' y2='23.5' stroke='#6aa85a' stroke-width='1.0' stroke-linecap='round'/><line x1='21.5' y1='14.7' x2='18.4' y2='21.2' stroke='#2e6a2c' stroke-width='1.0' stroke-linecap='round'/><line x1='21.9' y1='16.2' x2='29.6' y2='20.8' stroke='#2e6a2c' stroke-width='1.0' stroke-linecap='round'/><line x1='21.9' y1='16.2' x2='18.9' y2='25.3' stroke='#2e6a2c' stroke-width='1.0' stroke-linecap='round'/><line x1='22.2' y1='17.6' x2='29.8' y2='25.3' stroke='#6aa85a' stroke-width='1.0' stroke-linecap='round'/><line x1='22.2' y1='17.6' x2='20.2' y2='25.7' stroke='#5a9a50' stroke-width='1.0' stroke-linecap='round'/><line x1='22.6' y1='19.1' x2='30.0' y2='28.0' stroke='#24522a' stroke-width='1.0' stroke-linecap='round'/><line x1='22.6' y1='19.1' x2='18.7' y2='25.2' stroke='#24522a' stroke-width='1.0' stroke-linecap='round'/><line x1='22.9' y1='20.6' x2='33.0' y2='26.2' stroke='#4c8a44' stroke-width='1.0' stroke-linecap='round'/><line x1='22.9' y1='20.6' x2='16.8' y2='31.1' stroke='#3e7c38' stroke-width='1.0' stroke-linecap='round'/><line x1='23.3' y1='22.1' x2='28.6' y2='28.0' stroke='#6aa85a' stroke-width='1.0' stroke-linecap='round'/><line x1='23.3' y1='22.1' x2='19.1' y2='30.7' stroke='#8cbc74' stroke-width='1.0' stroke-linecap='round'/><line x1='23.6' y1='23.5' x2='31.3' y2='29.6' stroke='#6aa85a' stroke-width='1.0' stroke-linecap='round'/><line x1='23.6' y1='23.5' x2='21.8' y2='30.2' stroke='#6aa85a' stroke-width='1.0' stroke-linecap='round'/><line x1='24.0' y1='25.0' x2='29.0' y2='30.1' stroke='#3e7c38' stroke-width='1.0' stroke-linecap='round'/><line x1='24.0' y1='25.0' x2='20.9' y2='35.4' stroke='#6aa85a' stroke-width='1.0' stroke-linecap='round'/><line x1='24.4' y1='26.5' x2='32.7' y2='32.5' stroke='#2e6a2c' stroke-width='1.0' stroke-linecap='round'/><line x1='24.4' y1='26.5' x2='20.8' y2='35.6' stroke='#6aa85a' stroke-width='1.0' stroke-linecap='round'/><line x1='24.7' y1='27.9' x2='31.7' y2='32.0' stroke='#5a9a50' stroke-width='1.0' stroke-linecap='round'/><line x1='24.7' y1='27.9' x2='22.0' y2='37.6' stroke='#5a9a50' stroke-width='1.0' stroke-linecap='round'/><line x1='25.1' y1='29.4' x2='33.9' y2='37.0' stroke='#24522a' stroke-width='1.0' stroke-linecap='round'/><line x1='25.1' y1='29.4' x2='22.1' y2='42.1' stroke='#5a9a50' stroke-width='1.0' stroke-linecap='round'/><line x1='25.4' y1='30.9' x2='33.9' y2='35.4' stroke='#8cbc74' stroke-width='1.0' stroke-linecap='round'/><line x1='25.4' y1='30.9' x2='20.5' y2='43.1' stroke='#4c8a44' stroke-width='1.0' stroke-linecap='round'/><line x1='25.8' y1='32.4' x2='35.7' y2='40.2' stroke='#3e7c38' stroke-width='1.0' stroke-linecap='round'/><line x1='25.8' y1='32.4' x2='24.6' y2='39.5' stroke='#6aa85a' stroke-width='1.0' stroke-linecap='round'/><line x1='26.1' y1='33.8' x2='35.7' y2='42.5' stroke='#3e7c38' stroke-width='1.0' stroke-linecap='round'/><line x1='26.1' y1='33.8' x2='21.7' y2='43.6' stroke='#4c8a44' stroke-width='1.0' stroke-linecap='round'/><line x1='26.5' y1='35.3' x2='33.3' y2='44.2' stroke='#3e7c38' stroke-width='1.0' stroke-linecap='round'/><line x1='26.5' y1='35.3' x2='21.9' y2='46.8' stroke='#5a9a50' stroke-width='1.0' stroke-linecap='round'/><line x1='26.8' y1='36.8' x2='32.7' y2='39.9' stroke='#5a9a50' stroke-width='1.0' stroke-linecap='round'/><line x1='26.8' y1='36.8' x2='22.7' y2='45.1' stroke='#6aa85a' stroke-width='1.0' stroke-linecap='round'/><line x1='27.2' y1='38.2' x2='34.8' y2='42.8' stroke='#4c8a44' stroke-width='1.0' stroke-linecap='round'/><line x1='27.2' y1='38.2' x2='25.6' y2='46.9' stroke='#4c8a44' stroke-width='1.0' stroke-linecap='round'/><line x1='27.5' y1='39.7' x2='35.5' y2='48.8' stroke='#2e6a2c' stroke-width='1.0' stroke-linecap='round'/><line x1='27.5' y1='39.7' x2='23.1' y2='46.2' stroke='#2e6a2c' stroke-width='1.0' stroke-linecap='round'/><line x1='27.9' y1='41.2' x2='33.0' y2='48.0' stroke='#4c8a44' stroke-width='1.0' stroke-linecap='round'/><line x1='27.9' y1='41.2' x2='26.4' y2='50.2' stroke='#8cbc74' stroke-width='1.0' stroke-linecap='round'/><line x1='28.2' y1='42.6' x2='34.7' y2='48.9' stroke='#5a9a50' stroke-width='1.0' stroke-linecap='round'/><line x1='28.2' y1='42.6' x2='22.3' y2='53.4' stroke='#4c8a44' stroke-width='1.0' stroke-linecap='round'/><line x1='28.6' y1='44.1' x2='39.1' y2='50.2' stroke='#4c8a44' stroke-width='1.0' stroke-linecap='round'/><line x1='28.6' y1='44.1' x2='25.3' y2='51.0' stroke='#4c8a44' stroke-width='1.0' stroke-linecap='round'/><line x1='28.9' y1='45.6' x2='35.6' y2='51.1' stroke='#8cbc74' stroke-width='1.0' stroke-linecap='round'/><line x1='28.9' y1='45.6' x2='25.0' y2='57.9' stroke='#2e6a2c' stroke-width='1.0' stroke-linecap='round'/><line x1='29.3' y1='47.1' x2='36.1' y2='55.4' stroke='#24522a' stroke-width='1.0' stroke-linecap='round'/><line x1='29.3' y1='47.1' x2='24.9' y2='57.5' stroke='#2e6a2c' stroke-width='1.0' stroke-linecap='round'/><line x1='29.6' y1='48.5' x2='35.1' y2='56.1' stroke='#24522a' stroke-width='1.0' stroke-linecap='round'/><line x1='29.6' y1='48.5' x2='24.4' y2='58.0' stroke='#4c8a44' stroke-width='1.0' stroke-linecap='round'/><line x1='30.0' y1='50.0' x2='38.9' y2='59.0' stroke='#24522a' stroke-width='1.0' stroke-linecap='round'/><line x1='30.0' y1='50.0' x2='27.5' y2='59.4' stroke='#4c8a44' stroke-width='1.0' stroke-linecap='round'/><line x1='30.2' y1='51.5' x2='36.6' y2='56.8' stroke='#6aa85a' stroke-width='1.0' stroke-linecap='round'/><line x1='30.2' y1='51.5' x2='25.0' y2='57.9' stroke='#6aa85a' stroke-width='1.0' stroke-linecap='round'/><line x1='30.5' y1='53.0' x2='38.2' y2='59.1' stroke='#6aa85a' stroke-width='1.0' stroke-linecap='round'/><line x1='30.5' y1='53.0' x2='27.5' y2='60.1' stroke='#3e7c38' stroke-width='1.0' stroke-linecap='round'/><line x1='30.7' y1='54.5' x2='39.0' y2='60.0' stroke='#8cbc74' stroke-width='1.0' stroke-linecap='round'/><line x1='30.7' y1='54.5' x2='27.2' y2='61.8' stroke='#4c8a44' stroke-width='1.0' stroke-linecap='round'/><line x1='31.0' y1='56.0' x2='35.8' y2='64.3' stroke='#3e7c38' stroke-width='1.0' stroke-linecap='round'/><line x1='31.0' y1='56.0' x2='27.2' y2='63.3' stroke='#3e7c38' stroke-width='1.0' stroke-linecap='round'/><line x1='31.2' y1='57.6' x2='36.6' y2='62.3' stroke='#3e7c38' stroke-width='1.0' stroke-linecap='round'/><line x1='31.2' y1='57.6' x2='26.7' y2='68.6' stroke='#3e7c38' stroke-width='1.0' stroke-linecap='round'/><line x1='31.5' y1='59.1' x2='37.8' y2='68.7' stroke='#5a9a50' stroke-width='1.0' stroke-linecap='round'/><line x1='31.5' y1='59.1' x2='27.1' y2='69.7' stroke='#3e7c38' stroke-width='1.0' stroke-linecap='round'/><line x1='31.7' y1='60.6' x2='38.3' y2='66.5' stroke='#2e6a2c' stroke-width='1.0' stroke-linecap='round'/><line x1='31.7' y1='60.6' x2='27.2' y2='69.9' stroke='#4c8a44' stroke-width='1.0' stroke-linecap='round'/><line x1='32.0' y1='62.1' x2='40.1' y2='67.8' stroke='#6aa85a' stroke-width='1.0' stroke-linecap='round'/><line x1='32.0' y1='62.1' x2='25.1' y2='72.2' stroke='#2e6a2c' stroke-width='1.0' stroke-linecap='round'/><line x1='32.2' y1='63.6' x2='38.6' y2='68.8' stroke='#5a9a50' stroke-width='1.0' stroke-linecap='round'/><line x1='32.2' y1='63.6' x2='27.5' y2='71.8' stroke='#4c8a44' stroke-width='1.0' stroke-linecap='round'/><line x1='32.4' y1='65.1' x2='39.4' y2='75.3' stroke='#2e6a2c' stroke-width='1.0' stroke-linecap='round'/><line x1='32.4' y1='65.1' x2='30.0' y2='74.2' stroke='#8cbc74' stroke-width='1.0' stroke-linecap='round'/><line x1='32.7' y1='66.6' x2='38.0' y2='74.8' stroke='#24522a' stroke-width='1.0' stroke-linecap='round'/><line x1='32.7' y1='66.6' x2='29.6' y2='73.0' stroke='#8cbc74' stroke-width='1.0' stroke-linecap='round'/><line x1='32.9' y1='68.1' x2='39.6' y2='75.2' stroke='#5a9a50' stroke-width='1.0' stroke-linecap='round'/><line x1='32.9' y1='68.1' x2='30.6' y2='75.1' stroke='#3e7c38' stroke-width='1.0' stroke-linecap='round'/><line x1='33.2' y1='69.6' x2='43.7' y2='77.2' stroke='#2e6a2c' stroke-width='1.0' stroke-linecap='round'/><line x1='33.2' y1='69.6' x2='26.1' y2='78.5' stroke='#6aa85a' stroke-width='1.0' stroke-linecap='round'/><line x1='33.4' y1='71.1' x2='40.5' y2='81.5' stroke='#2e6a2c' stroke-width='1.0' stroke-linecap='round'/><line x1='33.4' y1='71.1' x2='30.3' y2='77.2' stroke='#8cbc74' stroke-width='1.0' stroke-linecap='round'/><line x1='33.7' y1='72.7' x2='42.2' y2='78.6' stroke='#2e6a2c' stroke-width='1.0' stroke-linecap='round'/><line x1='33.7' y1='72.7' x2='29.4' y2='80.1' stroke='#3e7c38' stroke-width='1.0' stroke-linecap='round'/><line x1='33.9' y1='74.2' x2='40.5' y2='81.8' stroke='#5a9a50' stroke-width='1.0' stroke-linecap='round'/><line x1='33.9' y1='74.2' x2='30.1' y2='80.4' stroke='#2e6a2c' stroke-width='1.0' stroke-linecap='round'/><line x1='34.2' y1='75.7' x2='44.0' y2='83.9' stroke='#3e7c38' stroke-width='1.0' stroke-linecap='round'/><line x1='34.2' y1='75.7' x2='31.1' y2='83.1' stroke='#24522a' stroke-width='1.0' stroke-linecap='round'/><line x1='34.4' y1='77.2' x2='43.1' y2='82.5' stroke='#5a9a50' stroke-width='1.0' stroke-linecap='round'/><line x1='34.4' y1='77.2' x2='31.5' y2='85.4' stroke='#8cbc74' stroke-width='1.0' stroke-linecap='round'/><line x1='34.7' y1='78.7' x2='40.0' y2='86.8' stroke='#3e7c38' stroke-width='1.0' stroke-linecap='round'/><line x1='34.7' y1='78.7' x2='31.6' y2='84.7' stroke='#5a9a50' stroke-width='1.0' stroke-linecap='round'/><line x1='34.9' y1='80.2' x2='40.3' y2='87.0' stroke='#2e6a2c' stroke-width='1.0' stroke-linecap='round'/><line x1='34.9' y1='80.2' x2='31.3' y2='92.1' stroke='#6aa85a' stroke-width='1.0' stroke-linecap='round'/><line x1='35.1' y1='81.7' x2='41.2' y2='87.4' stroke='#6aa85a' stroke-width='1.0' stroke-linecap='round'/><line x1='35.1' y1='81.7' x2='31.5' y2='90.0' stroke='#5a9a50' stroke-width='1.0' stroke-linecap='round'/><line x1='35.4' y1='83.2' x2='42.8' y2='88.0' stroke='#5a9a50' stroke-width='1.0' stroke-linecap='round'/><line x1='35.4' y1='83.2' x2='32.0' y2='91.8' stroke='#2e6a2c' stroke-width='1.0' stroke-linecap='round'/><line x1='35.6' y1='84.7' x2='42.3' y2='94.1' stroke='#24522a' stroke-width='1.0' stroke-linecap='round'/><line x1='35.6' y1='84.7' x2='33.3' y2='94.3' stroke='#3e7c38' stroke-width='1.0' stroke-linecap='round'/><line x1='35.9' y1='86.2' x2='45.0' y2='94.0' stroke='#3e7c38' stroke-width='1.0' stroke-linecap='round'/><line x1='35.9' y1='86.2' x2='32.4' y2='93.8' stroke='#4c8a44' stroke-width='1.0' stroke-linecap='round'/><line x1='36.1' y1='87.8' x2='44.9' y2='93.8' stroke='#24522a' stroke-width='1.0' stroke-linecap='round'/><line x1='36.1' y1='87.8' x2='33.8' y2='95.5' stroke='#5a9a50' stroke-width='1.0' stroke-linecap='round'/><line x1='36.4' y1='89.3' x2='40.1' y2='95.1' stroke='#24522a' stroke-width='1.0' stroke-linecap='round'/><line x1='36.4' y1='89.3' x2='33.9' y2='98.1' stroke='#3e7c38' stroke-width='1.0' stroke-linecap='round'/><line x1='36.6' y1='90.8' x2='45.5' y2='96.4' stroke='#5a9a50' stroke-width='1.0' stroke-linecap='round'/><line x1='36.6' y1='90.8' x2='35.0' y2='97.6' stroke='#5a9a50' stroke-width='1.0' stroke-linecap='round'/><line x1='36.9' y1='92.3' x2='44.9' y2='100.2' stroke='#4c8a44' stroke-width='1.0' stroke-linecap='round'/><line x1='36.9' y1='92.3' x2='29.8' y2='103.4' stroke='#3e7c38' stroke-width='1.0' stroke-linecap='round'/><line x1='37.1' y1='93.8' x2='43.0' y2='98.9' stroke='#24522a' stroke-width='1.0' stroke-linecap='round'/><line x1='37.1' y1='93.8' x2='33.4' y2='99.5' stroke='#6aa85a' stroke-width='1.0' stroke-linecap='round'/><line x1='37.3' y1='95.3' x2='44.8' y2='104.9' stroke='#4c8a44' stroke-width='1.0' stroke-linecap='round'/><line x1='37.3' y1='95.3' x2='34.4' y2='102.0' stroke='#2e6a2c' stroke-width='1.0' stroke-linecap='round'/><line x1='37.6' y1='96.8' x2='44.5' y2='102.5' stroke='#2e6a2c' stroke-width='1.0' stroke-linecap='round'/><line x1='37.6' y1='96.8' x2='32.2' y2='107.1' stroke='#5a9a50' stroke-width='1.0' stroke-linecap='round'/><line x1='37.8' y1='98.3' x2='46.8' y2='106.3' stroke='#8cbc74' stroke-width='1.0' stroke-linecap='round'/><line x1='37.8' y1='98.3' x2='33.8' y2='104.2' stroke='#6aa85a' stroke-width='1.0' stroke-linecap='round'/><line x1='38.1' y1='99.8' x2='44.5' y2='106.2' stroke='#5a9a50' stroke-width='1.0' stroke-linecap='round'/><line x1='38.1' y1='99.8' x2='35.4' y2='108.4' stroke='#5a9a50' stroke-width='1.0' stroke-linecap='round'/><line x1='38.3' y1='101.3' x2='46.2' y2='106.3' stroke='#8cbc74' stroke-width='1.0' stroke-linecap='round'/><line x1='38.3' y1='101.3' x2='33.8' y2='109.4' stroke='#5a9a50' stroke-width='1.0' stroke-linecap='round'/><line x1='38.6' y1='102.9' x2='44.5' y2='106.6' stroke='#2e6a2c' stroke-width='1.0' stroke-linecap='round'/><line x1='38.6' y1='102.9' x2='34.8' y2='113.8' stroke='#24522a' stroke-width='1.0' stroke-linecap='round'/><line x1='38.8' y1='104.4' x2='45.1' y2='109.9' stroke='#24522a' stroke-width='1.0' stroke-linecap='round'/><line x1='38.8' y1='104.4' x2='36.3' y2='115.6' stroke='#6aa85a' stroke-width='1.0' stroke-linecap='round'/><line x1='39.1' y1='105.9' x2='45.5' y2='111.3' stroke='#2e6a2c' stroke-width='1.0' stroke-linecap='round'/><line x1='39.1' y1='105.9' x2='33.5' y2='114.8' stroke='#8cbc74' stroke-width='1.0' stroke-linecap='round'/><line x1='39.3' y1='107.4' x2='47.6' y2='117.2' stroke='#2e6a2c' stroke-width='1.0' stroke-linecap='round'/><line x1='39.3' y1='107.4' x2='35.1' y2='113.4' stroke='#6aa85a' stroke-width='1.0' stroke-linecap='round'/><line x1='39.6' y1='108.9' x2='46.2' y2='119.9' stroke='#5a9a50' stroke-width='1.0' stroke-linecap='round'/><line x1='39.6' y1='108.9' x2='32.5' y2='119.4' stroke='#8cbc74' stroke-width='1.0' stroke-linecap='round'/><line x1='39.8' y1='110.4' x2='48.7' y2='119.5' stroke='#3e7c38' stroke-width='1.0' stroke-linecap='round'/><line x1='39.8' y1='110.4' x2='37.2' y2='122.9' stroke='#4c8a44' stroke-width='1.0' stroke-linecap='round'/><line x1='40.0' y1='111.9' x2='46.7' y2='121.5' stroke='#24522a' stroke-width='1.0' stroke-linecap='round'/><line x1='40.0' y1='111.9' x2='36.2' y2='123.6' stroke='#5a9a50' stroke-width='1.0' stroke-linecap='round'/><line x1='40.3' y1='113.4' x2='49.1' y2='121.3' stroke='#2e6a2c' stroke-width='1.0' stroke-linecap='round'/><line x1='40.3' y1='113.4' x2='36.2' y2='121.7' stroke='#3e7c38' stroke-width='1.0' stroke-linecap='round'/><line x1='40.5' y1='114.9' x2='46.0' y2='119.3' stroke='#2e6a2c' stroke-width='1.0' stroke-linecap='round'/><line x1='40.5' y1='114.9' x2='36.2' y2='124.2' stroke='#3e7c38' stroke-width='1.0' stroke-linecap='round'/><line x1='40.8' y1='116.4' x2='47.1' y2='127.2' stroke='#2e6a2c' stroke-width='1.0' stroke-linecap='round'/><line x1='40.8' y1='116.4' x2='38.4' y2='123.2' stroke='#2e6a2c' stroke-width='1.0' stroke-linecap='round'/><line x1='41.0' y1='118.0' x2='50.5' y2='127.0' stroke='#5a9a50' stroke-width='1.0' stroke-linecap='round'/><line x1='41.0' y1='118.0' x2='38.9' y2='125.1' stroke='#5a9a50' stroke-width='1.0' stroke-linecap='round'/><line x1='41.3' y1='119.5' x2='48.5' y2='127.8' stroke='#6aa85a' stroke-width='1.0' stroke-linecap='round'/><line x1='41.3' y1='119.5' x2='36.0' y2='129.9' stroke='#8cbc74' stroke-width='1.0' stroke-linecap='round'/><line x1='41.5' y1='121.0' x2='51.5' y2='127.9' stroke='#4c8a44' stroke-width='1.0' stroke-linecap='round'/><line x1='41.5' y1='121.0' x2='38.7' y2='128.9' stroke='#4c8a44' stroke-width='1.0' stroke-linecap='round'/><line x1='41.8' y1='122.5' x2='46.6' y2='128.8' stroke='#3e7c38' stroke-width='1.0' stroke-linecap='round'/><line x1='41.8' y1='122.5' x2='39.4' y2='130.3' stroke='#4c8a44' stroke-width='1.0' stroke-linecap='round'/><line x1='4.0' y1='0.0' x2='14.1' y2='8.2' stroke='#6aa85a' stroke-width='0.9' stroke-linecap='round'/><line x1='4.0' y1='0.0' x2='3.0' y2='10.3' stroke='#5a9a50' stroke-width='0.9' stroke-linecap='round'/><line x1='4.5' y1='1.2' x2='13.4' y2='6.0' stroke='#3e7c38' stroke-width='0.9' stroke-linecap='round'/><line x1='4.5' y1='1.2' x2='-1.8' y2='16.3' stroke='#3e7c38' stroke-width='0.9' stroke-linecap='round'/><line x1='4.9' y1='2.3' x2='20.0' y2='6.1' stroke='#5a9a50' stroke-width='0.9' stroke-linecap='round'/><line x1='4.9' y1='2.3' x2='-2.5' y2='16.3' stroke='#2e6a2c' stroke-width='0.9' stroke-linecap='round'/><line x1='5.4' y1='3.5' x2='13.3' y2='9.9' stroke='#2e6a2c' stroke-width='0.9' stroke-linecap='round'/><line x1='5.4' y1='3.5' x2='2.8' y2='19.5' stroke='#c4d8a8' stroke-width='0.9' stroke-linecap='round'/><line x1='5.8' y1='4.6' x2='14.2' y2='7.6' stroke='#a8c890' stroke-width='0.9' stroke-linecap='round'/><line x1='5.8' y1='4.6' x2='0.1' y2='15.1' stroke='#24522a' stroke-width='0.9' stroke-linecap='round'/><line x1='6.3' y1='5.8' x2='17.4' y2='13.9' stroke='#2e6a2c' stroke-width='0.9' stroke-linecap='round'/><line x1='6.3' y1='5.8' x2='4.7' y2='18.8' stroke='#c4d8a8' stroke-width='0.9' stroke-linecap='round'/><line x1='6.8' y1='6.9' x2='14.6' y2='10.4' stroke='#6aa85a' stroke-width='0.9' stroke-linecap='round'/><line x1='6.8' y1='6.9' x2='5.4' y2='16.8' stroke='#24522a' stroke-width='0.9' stroke-linecap='round'/><line x1='7.2' y1='8.1' x2='21.0' y2='11.8' stroke='#5a9a50' stroke-width='0.9' stroke-linecap='round'/><line x1='7.2' y1='8.1' x2='0.4' y2='21.4' stroke='#8cbc74' stroke-width='0.9' stroke-linecap='round'/><line x1='7.7' y1='9.2' x2='15.9' y2='14.6' stroke='#24522a' stroke-width='0.9' stroke-linecap='round'/><line x1='7.7' y1='9.2' x2='6.8' y2='17.7' stroke='#8cb878' stroke-width='0.9' stroke-linecap='round'/><line x1='8.2' y1='10.4' x2='15.8' y2='14.7' stroke='#3e7c38' stroke-width='0.9' stroke-linecap='round'/><line x1='8.2' y1='10.4' x2='2.0' y2='22.7' stroke='#4c8a44' stroke-width='0.9' stroke-linecap='round'/><line x1='8.6' y1='11.5' x2='16.2' y2='16.3' stroke='#4c8a44' stroke-width='0.9' stroke-linecap='round'/><line x1='8.6' y1='11.5' x2='5.9' y2='21.7' stroke='#24522a' stroke-width='0.9' stroke-linecap='round'/><line x1='9.1' y1='12.7' x2='18.9' y2='19.1' stroke='#2e6a2c' stroke-width='0.9' stroke-linecap='round'/><line x1='9.1' y1='12.7' x2='6.2' y2='25.3' stroke='#6aa85a' stroke-width='0.9' stroke-linecap='round'/><line x1='9.5' y1='13.8' x2='17.1' y2='17.5' stroke='#6aa85a' stroke-width='0.9' stroke-linecap='round'/><line x1='9.5' y1='13.8' x2='5.2' y2='24.5' stroke='#8cbc74' stroke-width='0.9' stroke-linecap='round'/><line x1='10.0' y1='15.0' x2='17.8' y2='17.8' stroke='#4c8a44' stroke-width='0.9' stroke-linecap='round'/><line x1='10.0' y1='15.0' x2='5.9' y2='29.4' stroke='#8cbc74' stroke-width='0.9' stroke-linecap='round'/><line x1='10.5' y1='16.2' x2='20.2' y2='21.9' stroke='#4c8a44' stroke-width='0.9' stroke-linecap='round'/><line x1='10.5' y1='16.2' x2='9.3' y2='24.8' stroke='#4c8a44' stroke-width='0.9' stroke-linecap='round'/><line x1='10.9' y1='17.3' x2='24.3' y2='25.7' stroke='#3e7c38' stroke-width='0.9' stroke-linecap='round'/><line x1='10.9' y1='17.3' x2='5.4' y2='32.2' stroke='#b0c898' stroke-width='0.9' stroke-linecap='round'/><line x1='11.4' y1='18.5' x2='19.7' y2='22.9' stroke='#24522a' stroke-width='0.9' stroke-linecap='round'/><line x1='11.4' y1='18.5' x2='10.0' y2='28.0' stroke='#3e7c38' stroke-width='0.9' stroke-linecap='round'/><line x1='11.8' y1='19.6' x2='23.6' y2='23.2' stroke='#5a9a50' stroke-width='0.9' stroke-linecap='round'/><line x1='11.8' y1='19.6' x2='8.6' y2='34.4' stroke='#2e6a2c' stroke-width='0.9' stroke-linecap='round'/><line x1='12.3' y1='20.8' x2='21.4' y2='28.9' stroke='#2e6a2c' stroke-width='0.9' stroke-linecap='round'/><line x1='12.3' y1='20.8' x2='7.4' y2='33.3' stroke='#3e7c38' stroke-width='0.9' stroke-linecap='round'/><line x1='12.8' y1='21.9' x2='23.0' y2='30.5' stroke='#4c8a44' stroke-width='0.9' stroke-linecap='round'/><line x1='12.8' y1='21.9' x2='7.0' y2='36.1' stroke='#c4d8a8' stroke-width='0.9' stroke-linecap='round'/><line x1='13.2' y1='23.1' x2='27.0' y2='29.6' stroke='#8cb878' stroke-width='0.9' stroke-linecap='round'/><line x1='13.2' y1='23.1' x2='11.6' y2='33.0' stroke='#8cbc74' stroke-width='0.9' stroke-linecap='round'/><line x1='13.7' y1='24.2' x2='20.9' y2='30.5' stroke='#6aa85a' stroke-width='0.9' stroke-linecap='round'/><line x1='13.7' y1='24.2' x2='12.4' y2='34.4' stroke='#b0c898' stroke-width='0.9' stroke-linecap='round'/><line x1='14.2' y1='25.4' x2='22.0' y2='31.3' stroke='#a8c890' stroke-width='0.9' stroke-linecap='round'/><line x1='14.2' y1='25.4' x2='7.7' y2='37.6' stroke='#6aa05a' stroke-width='0.9' stroke-linecap='round'/><line x1='14.6' y1='26.5' x2='21.9' y2='32.2' stroke='#c4d8a8' stroke-width='0.9' stroke-linecap='round'/><line x1='14.6' y1='26.5' x2='10.2' y2='41.1' stroke='#24522a' stroke-width='0.9' stroke-linecap='round'/><line x1='15.1' y1='27.7' x2='24.2' y2='33.5' stroke='#5a9a50' stroke-width='0.9' stroke-linecap='round'/><line x1='15.1' y1='27.7' x2='11.3' y2='40.8' stroke='#8cb878' stroke-width='0.9' stroke-linecap='round'/><line x1='15.5' y1='28.8' x2='24.1' y2='33.5' stroke='#2e6a2c' stroke-width='0.9' stroke-linecap='round'/><line x1='15.5' y1='28.8' x2='11.0' y2='40.3' stroke='#5a9a50' stroke-width='0.9' stroke-linecap='round'/><line x1='16.0' y1='30.0' x2='27.6' y2='36.7' stroke='#8cb878' stroke-width='0.9' stroke-linecap='round'/><line x1='16.0' y1='30.0' x2='8.3' y2='42.8' stroke='#8cbc74' stroke-width='0.9' stroke-linecap='round'/><line x1='16.4' y1='31.2' x2='25.1' y2='34.4' stroke='#8cbc74' stroke-width='0.9' stroke-linecap='round'/><line x1='16.4' y1='31.2' x2='11.9' y2='45.3' stroke='#a8c890' stroke-width='0.9' stroke-linecap='round'/><line x1='16.8' y1='32.3' x2='24.1' y2='36.8' stroke='#6aa05a' stroke-width='0.9' stroke-linecap='round'/><line x1='16.8' y1='32.3' x2='13.8' y2='47.9' stroke='#6aa85a' stroke-width='0.9' stroke-linecap='round'/><line x1='17.2' y1='33.5' x2='26.8' y2='41.4' stroke='#2e6a2c' stroke-width='0.9' stroke-linecap='round'/><line x1='17.2' y1='33.5' x2='9.6' y2='47.2' stroke='#6aa05a' stroke-width='0.9' stroke-linecap='round'/><line x1='17.5' y1='34.6' x2='24.2' y2='41.2' stroke='#3e7c38' stroke-width='0.9' stroke-linecap='round'/><line x1='17.5' y1='34.6' x2='9.2' y2='46.2' stroke='#3e7c38' stroke-width='0.9' stroke-linecap='round'/><line x1='17.9' y1='35.8' x2='33.0' y2='42.1' stroke='#8cb878' stroke-width='0.9' stroke-linecap='round'/><line x1='17.9' y1='35.8' x2='13.9' y2='50.2' stroke='#4c8a44' stroke-width='0.9' stroke-linecap='round'/><line x1='18.3' y1='36.9' x2='29.7' y2='45.4' stroke='#5a9a50' stroke-width='0.9' stroke-linecap='round'/><line x1='18.3' y1='36.9' x2='16.5' y2='47.9' stroke='#24522a' stroke-width='0.9' stroke-linecap='round'/><line x1='18.7' y1='38.1' x2='33.2' y2='43.9' stroke='#24522a' stroke-width='0.9' stroke-linecap='round'/><line x1='18.7' y1='38.1' x2='12.1' y2='48.1' stroke='#24522a' stroke-width='0.9' stroke-linecap='round'/><line x1='19.1' y1='39.2' x2='32.6' y2='47.5' stroke='#5a9a50' stroke-width='0.9' stroke-linecap='round'/><line x1='19.1' y1='39.2' x2='13.6' y2='51.4' stroke='#5a9a50' stroke-width='0.9' stroke-linecap='round'/><line x1='19.5' y1='40.4' x2='27.1' y2='44.2' stroke='#4c8a44' stroke-width='0.9' stroke-linecap='round'/><line x1='19.5' y1='40.4' x2='15.1' y2='53.2' stroke='#24522a' stroke-width='0.9' stroke-linecap='round'/><line x1='19.8' y1='41.5' x2='32.4' y2='50.9' stroke='#4c8a44' stroke-width='0.9' stroke-linecap='round'/><line x1='19.8' y1='41.5' x2='14.6' y2='50.6' stroke='#a8c890' stroke-width='0.9' stroke-linecap='round'/><line x1='20.2' y1='42.7' x2='34.8' y2='47.6' stroke='#8cb878' stroke-width='0.9' stroke-linecap='round'/><line x1='20.2' y1='42.7' x2='15.1' y2='54.7' stroke='#3e7c38' stroke-width='0.9' stroke-linecap='round'/><line x1='20.6' y1='43.8' x2='32.1' y2='49.1' stroke='#8cbc74' stroke-width='0.9' stroke-linecap='round'/><line x1='20.6' y1='43.8' x2='15.2' y2='53.8' stroke='#8cbc74' stroke-width='0.9' stroke-linecap='round'/><line x1='21.0' y1='45.0' x2='30.1' y2='54.3' stroke='#6aa85a' stroke-width='0.9' stroke-linecap='round'/><line x1='21.0' y1='45.0' x2='18.4' y2='53.5' stroke='#5a9a50' stroke-width='0.9' stroke-linecap='round'/><line x1='21.4' y1='46.2' x2='34.7' y2='51.6' stroke='#2e6a2c' stroke-width='0.9' stroke-linecap='round'/><line x1='21.4' y1='46.2' x2='18.0' y2='58.2' stroke='#24522a' stroke-width='0.9' stroke-linecap='round'/><line x1='21.8' y1='47.3' x2='35.1' y2='56.8' stroke='#c4d8a8' stroke-width='0.9' stroke-linecap='round'/><line x1='21.8' y1='47.3' x2='13.1' y2='60.3' stroke='#b0c898' stroke-width='0.9' stroke-linecap='round'/><line x1='22.2' y1='48.5' x2='30.3' y2='51.0' stroke='#4c8a44' stroke-width='0.9' stroke-linecap='round'/><line x1='22.2' y1='48.5' x2='18.6' y2='61.4' stroke='#8cbc74' stroke-width='0.9' stroke-linecap='round'/><line x1='22.5' y1='49.6' x2='35.8' y2='57.9' stroke='#4c8a44' stroke-width='0.9' stroke-linecap='round'/><line x1='22.5' y1='49.6' x2='17.7' y2='62.0' stroke='#2e6a2c' stroke-width='0.9' stroke-linecap='round'/><line x1='22.9' y1='50.8' x2='30.8' y2='53.3' stroke='#6aa85a' stroke-width='0.9' stroke-linecap='round'/><line x1='22.9' y1='50.8' x2='19.5' y2='62.9' stroke='#a8c890' stroke-width='0.9' stroke-linecap='round'/><line x1='23.3' y1='51.9' x2='35.3' y2='57.2' stroke='#c4d8a8' stroke-width='0.9' stroke-linecap='round'/><line x1='23.3' y1='51.9' x2='21.1' y2='63.0' stroke='#8cb878' stroke-width='0.9' stroke-linecap='round'/><line x1='23.7' y1='53.1' x2='31.5' y2='56.2' stroke='#5a9a50' stroke-width='0.9' stroke-linecap='round'/><line x1='23.7' y1='53.1' x2='18.2' y2='63.7' stroke='#3e7c38' stroke-width='0.9' stroke-linecap='round'/><line x1='24.1' y1='54.2' x2='36.6' y2='63.2' stroke='#24522a' stroke-width='0.9' stroke-linecap='round'/><line x1='24.1' y1='54.2' x2='20.7' y2='64.1' stroke='#2e6a2c' stroke-width='0.9' stroke-linecap='round'/><line x1='24.5' y1='55.4' x2='38.7' y2='60.2' stroke='#6aa85a' stroke-width='0.9' stroke-linecap='round'/><line x1='24.5' y1='55.4' x2='19.1' y2='67.3' stroke='#c4d8a8' stroke-width='0.9' stroke-linecap='round'/><line x1='24.8' y1='56.5' x2='35.1' y2='66.5' stroke='#5a9a50' stroke-width='0.9' stroke-linecap='round'/><line x1='24.8' y1='56.5' x2='23.1' y2='64.6' stroke='#2e6a2c' stroke-width='0.9' stroke-linecap='round'/><line x1='25.2' y1='57.7' x2='35.0' y2='63.9' stroke='#5a9a50' stroke-width='0.9' stroke-linecap='round'/><line x1='25.2' y1='57.7' x2='22.0' y2='73.1' stroke='#3e7c38' stroke-width='0.9' stroke-linecap='round'/><line x1='25.6' y1='58.8' x2='37.8' y2='62.7' stroke='#5a9a50' stroke-width='0.9' stroke-linecap='round'/><line x1='25.6' y1='58.8' x2='23.7' y2='68.5' stroke='#c4d8a8' stroke-width='0.9' stroke-linecap='round'/><line x1='26.0' y1='60.0' x2='35.7' y2='69.5' stroke='#8cbc74' stroke-width='0.9' stroke-linecap='round'/><line x1='26.0' y1='60.0' x2='19.9' y2='67.5' stroke='#24522a' stroke-width='0.9' stroke-linecap='round'/><line x1='26.2' y1='61.2' x2='38.1' y2='67.5' stroke='#b0c898' stroke-width='0.9' stroke-linecap='round'/><line x1='26.2' y1='61.2' x2='17.4' y2='72.3' stroke='#2e6a2c' stroke-width='0.9' stroke-linecap='round'/><line x1='26.4' y1='62.4' x2='35.9' y2='69.5' stroke='#8cb878' stroke-width='0.9' stroke-linecap='round'/><line x1='26.4' y1='62.4' x2='22.1' y2='75.4' stroke='#4c8a44' stroke-width='0.9' stroke-linecap='round'/><line x1='26.6' y1='63.6' x2='34.3' y2='68.5' stroke='#5a9a50' stroke-width='0.9' stroke-linecap='round'/><line x1='26.6' y1='63.6' x2='21.4' y2='71.3' stroke='#b0c898' stroke-width='0.9' stroke-linecap='round'/><line x1='26.8' y1='64.8' x2='36.6' y2='77.5' stroke='#24522a' stroke-width='0.9' stroke-linecap='round'/><line x1='26.8' y1='64.8' x2='20.6' y2='73.2' stroke='#a8c890' stroke-width='0.9' stroke-linecap='round'/><line x1='27.0' y1='66.0' x2='36.8' y2='75.9' stroke='#a8c890' stroke-width='0.9' stroke-linecap='round'/><line x1='27.0' y1='66.0' x2='19.6' y2='73.8' stroke='#5a9a50' stroke-width='0.9' stroke-linecap='round'/><line x1='27.2' y1='67.2' x2='38.2' y2='73.2' stroke='#4c8a44' stroke-width='0.9' stroke-linecap='round'/><line x1='27.2' y1='67.2' x2='23.2' y2='76.6' stroke='#b0c898' stroke-width='0.9' stroke-linecap='round'/><line x1='27.4' y1='68.4' x2='35.6' y2='73.5' stroke='#6aa85a' stroke-width='0.9' stroke-linecap='round'/><line x1='27.4' y1='68.4' x2='23.3' y2='79.1' stroke='#c4d8a8' stroke-width='0.9' stroke-linecap='round'/><line x1='27.7' y1='69.7' x2='40.9' y2='78.2' stroke='#6aa05a' stroke-width='0.9' stroke-linecap='round'/><line x1='27.7' y1='69.7' x2='16.6' y2='81.7' stroke='#a8c890' stroke-width='0.9' stroke-linecap='round'/><line x1='27.9' y1='70.9' x2='39.6' y2='80.5' stroke='#b0c898' stroke-width='0.9' stroke-linecap='round'/><line x1='27.9' y1='70.9' x2='25.5' y2='79.0' stroke='#b0c898' stroke-width='0.9' stroke-linecap='round'/><line x1='28.1' y1='72.1' x2='41.2' y2='80.5' stroke='#5a9a50' stroke-width='0.9' stroke-linecap='round'/><line x1='28.1' y1='72.1' x2='22.1' y2='83.7' stroke='#c4d8a8' stroke-width='0.9' stroke-linecap='round'/><line x1='28.3' y1='73.3' x2='34.1' y2='80.7' stroke='#2e6a2c' stroke-width='0.9' stroke-linecap='round'/><line x1='28.3' y1='73.3' x2='23.9' y2='85.9' stroke='#4c8a44' stroke-width='0.9' stroke-linecap='round'/><line x1='28.5' y1='74.5' x2='36.1' y2='80.0' stroke='#2e6a2c' stroke-width='0.9' stroke-linecap='round'/><line x1='28.5' y1='74.5' x2='25.8' y2='83.5' stroke='#6aa05a' stroke-width='0.9' stroke-linecap='round'/><line x1='28.7' y1='75.7' x2='38.7' y2='85.4' stroke='#b0c898' stroke-width='0.9' stroke-linecap='round'/><line x1='28.7' y1='75.7' x2='24.1' y2='90.3' stroke='#6aa85a' stroke-width='0.9' stroke-linecap='round'/><line x1='28.9' y1='76.9' x2='42.6' y2='85.4' stroke='#a8c890' stroke-width='0.9' stroke-linecap='round'/><line x1='28.9' y1='76.9' x2='23.1' y2='83.5' stroke='#b0c898' stroke-width='0.9' stroke-linecap='round'/><line x1='29.1' y1='78.1' x2='34.6' y2='85.4' stroke='#5a9a50' stroke-width='0.9' stroke-linecap='round'/><line x1='29.1' y1='78.1' x2='25.9' y2='86.0' stroke='#6aa05a' stroke-width='0.9' stroke-linecap='round'/><line x1='29.3' y1='79.3' x2='42.0' y2='86.2' stroke='#6aa05a' stroke-width='0.9' stroke-linecap='round'/><line x1='29.3' y1='79.3' x2='25.6' y2='87.6' stroke='#3e7c38' stroke-width='0.9' stroke-linecap='round'/><line x1='29.5' y1='80.5' x2='38.5' y2='90.7' stroke='#24522a' stroke-width='0.9' stroke-linecap='round'/><line x1='29.5' y1='80.5' x2='24.5' y2='91.2' stroke='#2e6a2c' stroke-width='0.9' stroke-linecap='round'/><line x1='29.7' y1='81.7' x2='42.6' y2='91.1' stroke='#2e6a2c' stroke-width='0.9' stroke-linecap='round'/><line x1='29.7' y1='81.7' x2='23.0' y2='90.8' stroke='#6aa85a' stroke-width='0.9' stroke-linecap='round'/><line x1='29.9' y1='82.9' x2='38.8' y2='92.8' stroke='#8cb878' stroke-width='0.9' stroke-linecap='round'/><line x1='29.9' y1='82.9' x2='21.3' y2='93.1' stroke='#2e6a2c' stroke-width='0.9' stroke-linecap='round'/><line x1='30.1' y1='84.1' x2='35.8' y2='90.5' stroke='#a8c890' stroke-width='0.9' stroke-linecap='round'/><line x1='30.1' y1='84.1' x2='23.3' y2='92.9' stroke='#b0c898' stroke-width='0.9' stroke-linecap='round'/><line x1='30.3' y1='85.3' x2='41.8' y2='91.3' stroke='#b0c898' stroke-width='0.9' stroke-linecap='round'/><line x1='30.3' y1='85.3' x2='24.5' y2='92.2' stroke='#24522a' stroke-width='0.9' stroke-linecap='round'/><line x1='30.6' y1='86.6' x2='37.6' y2='90.8' stroke='#5a9a50' stroke-width='0.9' stroke-linecap='round'/><line x1='30.6' y1='86.6' x2='24.6' y2='99.7' stroke='#2e6a2c' stroke-width='0.9' stroke-linecap='round'/><line x1='30.8' y1='87.8' x2='41.8' y2='93.2' stroke='#8cb878' stroke-width='0.9' stroke-linecap='round'/><line x1='30.8' y1='87.8' x2='21.9' y2='100.0' stroke='#8cb878' stroke-width='0.9' stroke-linecap='round'/><line x1='31.0' y1='89.0' x2='42.8' y2='100.0' stroke='#a8c890' stroke-width='0.9' stroke-linecap='round'/><line x1='31.0' y1='89.0' x2='24.6' y2='103.7' stroke='#24522a' stroke-width='0.9' stroke-linecap='round'/><line x1='31.2' y1='90.2' x2='41.6' y2='102.3' stroke='#5a9a50' stroke-width='0.9' stroke-linecap='round'/><line x1='31.2' y1='90.2' x2='26.6' y2='98.1' stroke='#6aa05a' stroke-width='0.9' stroke-linecap='round'/><line x1='31.4' y1='91.4' x2='39.6' y2='100.5' stroke='#b0c898' stroke-width='0.9' stroke-linecap='round'/><line x1='31.4' y1='91.4' x2='26.5' y2='99.1' stroke='#6aa85a' stroke-width='0.9' stroke-linecap='round'/><line x1='31.6' y1='92.6' x2='40.9' y2='99.4' stroke='#8cbc74' stroke-width='0.9' stroke-linecap='round'/><line x1='31.6' y1='92.6' x2='22.0' y2='103.4' stroke='#8cbc74' stroke-width='0.9' stroke-linecap='round'/><line x1='31.8' y1='93.8' x2='37.1' y2='100.4' stroke='#5a9a50' stroke-width='0.9' stroke-linecap='round'/><line x1='31.8' y1='93.8' x2='26.9' y2='104.5' stroke='#a8c890' stroke-width='0.9' stroke-linecap='round'/><line x1='32.0' y1='95.0' x2='40.4' y2='102.6' stroke='#6aa05a' stroke-width='0.9' stroke-linecap='round'/><line x1='32.0' y1='95.0' x2='27.0' y2='106.0' stroke='#a8c890' stroke-width='0.9' stroke-linecap='round'/><line x1='32.2' y1='96.2' x2='42.0' y2='106.0' stroke='#c4d8a8' stroke-width='0.9' stroke-linecap='round'/><line x1='32.2' y1='96.2' x2='25.6' y2='105.2' stroke='#6aa85a' stroke-width='0.9' stroke-linecap='round'/><line x1='32.3' y1='97.4' x2='43.6' y2='107.9' stroke='#8cb878' stroke-width='0.9' stroke-linecap='round'/><line x1='32.3' y1='97.4' x2='23.7' y2='108.9' stroke='#4c8a44' stroke-width='0.9' stroke-linecap='round'/><line x1='32.5' y1='98.6' x2='43.0' y2='107.8' stroke='#24522a' stroke-width='0.9' stroke-linecap='round'/><line x1='32.5' y1='98.6' x2='27.2' y2='106.3' stroke='#8cb878' stroke-width='0.9' stroke-linecap='round'/><line x1='32.7' y1='99.8' x2='42.3' y2='109.9' stroke='#a8c890' stroke-width='0.9' stroke-linecap='round'/><line x1='32.7' y1='99.8' x2='28.4' y2='109.7' stroke='#b0c898' stroke-width='0.9' stroke-linecap='round'/><line x1='32.8' y1='101.0' x2='41.1' y2='111.5' stroke='#b0c898' stroke-width='0.9' stroke-linecap='round'/><line x1='32.8' y1='101.0' x2='28.9' y2='110.6' stroke='#6aa85a' stroke-width='0.9' stroke-linecap='round'/><line x1='33.0' y1='102.2' x2='40.9' y2='110.1' stroke='#5a9a50' stroke-width='0.9' stroke-linecap='round'/><line x1='33.0' y1='102.2' x2='28.5' y2='111.0' stroke='#b0c898' stroke-width='0.9' stroke-linecap='round'/><line x1='33.2' y1='103.5' x2='38.5' y2='111.5' stroke='#6aa05a' stroke-width='0.9' stroke-linecap='round'/><line x1='33.2' y1='103.5' x2='29.1' y2='114.1' stroke='#4c8a44' stroke-width='0.9' stroke-linecap='round'/><line x1='33.3' y1='104.7' x2='42.4' y2='115.7' stroke='#8cbc74' stroke-width='0.9' stroke-linecap='round'/><line x1='33.3' y1='104.7' x2='29.4' y2='112.9' stroke='#3e7c38' stroke-width='0.9' stroke-linecap='round'/><line x1='33.5' y1='105.9' x2='46.1' y2='115.0' stroke='#8cb878' stroke-width='0.9' stroke-linecap='round'/><line x1='33.5' y1='105.9' x2='29.8' y2='116.8' stroke='#8cbc74' stroke-width='0.9' stroke-linecap='round'/><line x1='33.7' y1='107.1' x2='42.0' y2='116.2' stroke='#6aa05a' stroke-width='0.9' stroke-linecap='round'/><line x1='33.7' y1='107.1' x2='29.9' y2='114.6' stroke='#24522a' stroke-width='0.9' stroke-linecap='round'/><line x1='33.8' y1='108.3' x2='42.0' y2='116.5' stroke='#b0c898' stroke-width='0.9' stroke-linecap='round'/><line x1='33.8' y1='108.3' x2='27.4' y2='122.2' stroke='#b0c898' stroke-width='0.9' stroke-linecap='round'/><line x1='34.0' y1='109.5' x2='44.3' y2='119.6' stroke='#8cbc74' stroke-width='0.9' stroke-linecap='round'/><line x1='34.0' y1='109.5' x2='24.8' y2='119.7' stroke='#6aa05a' stroke-width='0.9' stroke-linecap='round'/><line x1='34.2' y1='110.7' x2='43.0' y2='122.4' stroke='#b0c898' stroke-width='0.9' stroke-linecap='round'/><line x1='34.2' y1='110.7' x2='28.4' y2='119.1' stroke='#4c8a44' stroke-width='0.9' stroke-linecap='round'/><line x1='34.3' y1='111.9' x2='42.6' y2='120.6' stroke='#6aa85a' stroke-width='0.9' stroke-linecap='round'/><line x1='34.3' y1='111.9' x2='28.3' y2='124.6' stroke='#8cbc74' stroke-width='0.9' stroke-linecap='round'/><line x1='34.5' y1='113.1' x2='44.0' y2='119.7' stroke='#b0c898' stroke-width='0.9' stroke-linecap='round'/><line x1='34.5' y1='113.1' x2='28.5' y2='121.5' stroke='#8cbc74' stroke-width='0.9' stroke-linecap='round'/><line x1='34.7' y1='114.3' x2='41.0' y2='119.9' stroke='#8cbc74' stroke-width='0.9' stroke-linecap='round'/><line x1='34.7' y1='114.3' x2='27.3' y2='125.9' stroke='#4c8a44' stroke-width='0.9' stroke-linecap='round'/><line x1='34.8' y1='115.5' x2='41.4' y2='124.3' stroke='#2e6a2c' stroke-width='0.9' stroke-linecap='round'/><line x1='34.8' y1='115.5' x2='28.9' y2='126.3' stroke='#3e7c38' stroke-width='0.9' stroke-linecap='round'/><line x1='35.0' y1='116.8' x2='46.1' y2='122.9' stroke='#4c8a44' stroke-width='0.9' stroke-linecap='round'/><line x1='35.0' y1='116.8' x2='25.0' y2='129.4' stroke='#5a9a50' stroke-width='0.9' stroke-linecap='round'/><line x1='35.2' y1='118.0' x2='41.8' y2='124.1' stroke='#c4d8a8' stroke-width='0.9' stroke-linecap='round'/><line x1='35.2' y1='118.0' x2='30.1' y2='126.5' stroke='#8cb878' stroke-width='0.9' stroke-linecap='round'/><line x1='35.3' y1='119.2' x2='45.3' y2='128.3' stroke='#6aa85a' stroke-width='0.9' stroke-linecap='round'/><line x1='35.3' y1='119.2' x2='29.0' y2='129.0' stroke='#8cb878' stroke-width='0.9' stroke-linecap='round'/><line x1='35.5' y1='120.4' x2='47.0' y2='128.1' stroke='#8cbc74' stroke-width='0.9' stroke-linecap='round'/><line x1='35.5' y1='120.4' x2='26.9' y2='133.8' stroke='#b0c898' stroke-width='0.9' stroke-linecap='round'/><line x1='35.7' y1='121.6' x2='41.9' y2='130.9' stroke='#2e6a2c' stroke-width='0.9' stroke-linecap='round'/><line x1='35.7' y1='121.6' x2='30.8' y2='131.9' stroke='#2e6a2c' stroke-width='0.9' stroke-linecap='round'/><line x1='35.8' y1='122.8' x2='46.1' y2='128.3' stroke='#8cbc74' stroke-width='0.9' stroke-linecap='round'/><line x1='35.8' y1='122.8' x2='27.7' y2='134.0' stroke='#c4d8a8' stroke-width='0.9' stroke-linecap='round'/><polyline points='4.0,0.0 16.0,30.0 26.0,60.0 32.0,95.0 36.0,124.0' fill='none' stroke='#5a6a38' stroke-width='0.9' opacity='0.7'/><line x1='40.0' y1='0.0' x2='46.2' y2='2.6' stroke='#3e7c38' stroke-width='0.9' stroke-linecap='round'/><line x1='40.0' y1='0.0' x2='34.3' y2='6.2' stroke='#6aa05a' stroke-width='0.9' stroke-linecap='round'/><line x1='40.5' y1='2.0' x2='48.3' y2='9.5' stroke='#4c8a44' stroke-width='0.9' stroke-linecap='round'/><line x1='40.5' y1='2.0' x2='38.3' y2='7.8' stroke='#a8c890' stroke-width='0.9' stroke-linecap='round'/><line x1='41.1' y1='4.0' x2='48.1' y2='9.6' stroke='#4c8a44' stroke-width='0.9' stroke-linecap='round'/><line x1='41.1' y1='4.0' x2='35.8' y2='11.9' stroke='#c4d8a8' stroke-width='0.9' stroke-linecap='round'/><line x1='41.6' y1='6.0' x2='49.8' y2='9.9' stroke='#3e7c38' stroke-width='0.9' stroke-linecap='round'/><line x1='41.6' y1='6.0' x2='38.2' y2='12.2' stroke='#c4d8a8' stroke-width='0.9' stroke-linecap='round'/><line x1='42.2' y1='8.0' x2='48.6' y2='12.9' stroke='#6aa05a' stroke-width='0.9' stroke-linecap='round'/><line x1='42.2' y1='8.0' x2='39.2' y2='15.0' stroke='#b0c898' stroke-width='0.9' stroke-linecap='round'/><line x1='42.7' y1='10.0' x2='49.4' y2='16.4' stroke='#4c8a44' stroke-width='0.9' stroke-linecap='round'/><line x1='42.7' y1='10.0' x2='40.2' y2='19.1' stroke='#b0c898' stroke-width='0.9' stroke-linecap='round'/><line x1='43.3' y1='12.0' x2='51.5' y2='15.9' stroke='#2e6a2c' stroke-width='0.9' stroke-linecap='round'/><line x1='43.3' y1='12.0' x2='39.4' y2='18.9' stroke='#a8c890' stroke-width='0.9' stroke-linecap='round'/><line x1='43.8' y1='14.0' x2='50.0' y2='18.2' stroke='#b0c898' stroke-width='0.9' stroke-linecap='round'/><line x1='43.8' y1='14.0' x2='40.1' y2='18.5' stroke='#2e6a2c' stroke-width='0.9' stroke-linecap='round'/><line x1='44.4' y1='16.0' x2='49.3' y2='19.9' stroke='#2e6a2c' stroke-width='0.9' stroke-linecap='round'/><line x1='44.4' y1='16.0' x2='41.3' y2='20.7' stroke='#8cb878' stroke-width='0.9' stroke-linecap='round'/><line x1='44.9' y1='18.0' x2='50.4' y2='20.2' stroke='#b0c898' stroke-width='0.9' stroke-linecap='round'/><line x1='44.9' y1='18.0' x2='42.6' y2='23.6' stroke='#c4d8a8' stroke-width='0.9' stroke-linecap='round'/><line x1='45.5' y1='20.0' x2='50.5' y2='24.2' stroke='#4c8a44' stroke-width='0.9' stroke-linecap='round'/><line x1='45.5' y1='20.0' x2='42.7' y2='25.7' stroke='#3e7c38' stroke-width='0.9' stroke-linecap='round'/><line x1='46.0' y1='22.0' x2='51.0' y2='26.0' stroke='#a8c890' stroke-width='0.9' stroke-linecap='round'/><line x1='46.0' y1='22.0' x2='40.0' y2='30.5' stroke='#b0c898' stroke-width='0.9' stroke-linecap='round'/><line x1='46.5' y1='24.1' x2='55.2' y2='27.5' stroke='#a8c890' stroke-width='0.9' stroke-linecap='round'/><line x1='46.5' y1='24.1' x2='41.7' y2='30.4' stroke='#a8c890' stroke-width='0.9' stroke-linecap='round'/><line x1='47.1' y1='26.2' x2='53.0' y2='29.9' stroke='#6aa05a' stroke-width='0.9' stroke-linecap='round'/><line x1='47.1' y1='26.2' x2='41.9' y2='32.4' stroke='#8cb878' stroke-width='0.9' stroke-linecap='round'/><line x1='47.6' y1='28.3' x2='56.7' y2='33.5' stroke='#4c8a44' stroke-width='0.9' stroke-linecap='round'/><line x1='47.6' y1='28.3' x2='45.1' y2='34.2' stroke='#8cb878' stroke-width='0.9' stroke-linecap='round'/><line x1='48.2' y1='30.4' x2='55.0' y2='32.9' stroke='#4c8a44' stroke-width='0.9' stroke-linecap='round'/><line x1='48.2' y1='30.4' x2='42.4' y2='38.6' stroke='#2e6a2c' stroke-width='0.9' stroke-linecap='round'/><line x1='48.7' y1='32.5' x2='58.4' y2='37.7' stroke='#a8c890' stroke-width='0.9' stroke-linecap='round'/><line x1='48.7' y1='32.5' x2='46.0' y2='39.4' stroke='#8cb878' stroke-width='0.9' stroke-linecap='round'/><line x1='49.3' y1='34.5' x2='54.8' y2='36.2' stroke='#2e6a2c' stroke-width='0.9' stroke-linecap='round'/><line x1='49.3' y1='34.5' x2='45.5' y2='39.2' stroke='#4c8a44' stroke-width='0.9' stroke-linecap='round'/><line x1='49.8' y1='36.6' x2='58.9' y2='41.8' stroke='#8cb878' stroke-width='0.9' stroke-linecap='round'/><line x1='49.8' y1='36.6' x2='46.9' y2='43.8' stroke='#c4d8a8' stroke-width='0.9' stroke-linecap='round'/><line x1='50.4' y1='38.7' x2='59.6' y2='43.2' stroke='#2e6a2c' stroke-width='0.9' stroke-linecap='round'/><line x1='50.4' y1='38.7' x2='46.1' y2='47.5' stroke='#6aa05a' stroke-width='0.9' stroke-linecap='round'/><line x1='50.9' y1='40.8' x2='57.6' y2='43.8' stroke='#b0c898' stroke-width='0.9' stroke-linecap='round'/><line x1='50.9' y1='40.8' x2='45.6' y2='49.3' stroke='#b0c898' stroke-width='0.9' stroke-linecap='round'/><line x1='51.5' y1='42.9' x2='58.8' y2='46.5' stroke='#2e6a2c' stroke-width='0.9' stroke-linecap='round'/><line x1='51.5' y1='42.9' x2='47.9' y2='48.9' stroke='#2e6a2c' stroke-width='0.9' stroke-linecap='round'/><polyline points='40.0,0.0 46.0,22.0 52.0,45.0' fill='none' stroke='#5a6a38' stroke-width='0.9' opacity='0.7'/><path d='M82 0 H164 V50 C150 40 135 30 118 22 C105 15 92 8 82 0Z' fill='#4a7a48' opacity='0.55'/><line x1='84.0' y1='0.0' x2='94.7' y2='-5.1' stroke='#3e7c38' stroke-width='0.9' stroke-linecap='round'/><line x1='84.0' y1='0.0' x2='86.2' y2='9.1' stroke='#24522a' stroke-width='0.9' stroke-linecap='round'/><line x1='85.6' y1='0.6' x2='94.8' y2='-10.1' stroke='#3e7c38' stroke-width='0.9' stroke-linecap='round'/><line x1='85.6' y1='0.6' x2='85.7' y2='8.1' stroke='#a8c890' stroke-width='0.9' stroke-linecap='round'/><line x1='87.2' y1='1.2' x2='97.0' y2='-3.9' stroke='#2e6a2c' stroke-width='0.9' stroke-linecap='round'/><line x1='87.2' y1='1.2' x2='88.9' y2='9.0' stroke='#2e6a2c' stroke-width='0.9' stroke-linecap='round'/><line x1='88.9' y1='1.9' x2='98.1' y2='-8.3' stroke='#2e6a2c' stroke-width='0.9' stroke-linecap='round'/><line x1='88.9' y1='1.9' x2='89.0' y2='15.5' stroke='#8cbc74' stroke-width='0.9' stroke-linecap='round'/><line x1='90.5' y1='2.5' x2='100.0' y2='-4.3' stroke='#3e7c38' stroke-width='0.9' stroke-linecap='round'/><line x1='90.5' y1='2.5' x2='94.0' y2='13.9' stroke='#8cb878' stroke-width='0.9' stroke-linecap='round'/><line x1='92.1' y1='3.1' x2='99.0' y2='-1.7' stroke='#4c8a44' stroke-width='0.9' stroke-linecap='round'/><line x1='92.1' y1='3.1' x2='91.8' y2='13.3' stroke='#3e7c38' stroke-width='0.9' stroke-linecap='round'/><line x1='93.8' y1='3.8' x2='104.3' y2='-1.6' stroke='#6aa85a' stroke-width='0.9' stroke-linecap='round'/><line x1='93.8' y1='3.8' x2='93.5' y2='11.9' stroke='#24522a' stroke-width='0.9' stroke-linecap='round'/><line x1='95.4' y1='4.4' x2='102.5' y2='-1.1' stroke='#24522a' stroke-width='0.9' stroke-linecap='round'/><line x1='95.4' y1='4.4' x2='97.7' y2='11.4' stroke='#2e6a2c' stroke-width='0.9' stroke-linecap='round'/><line x1='97.0' y1='5.0' x2='105.9' y2='-2.7' stroke='#2e6a2c' stroke-width='0.9' stroke-linecap='round'/><line x1='97.0' y1='5.0' x2='98.7' y2='15.7' stroke='#3e7c38' stroke-width='0.9' stroke-linecap='round'/><line x1='98.6' y1='5.6' x2='107.3' y2='0.4' stroke='#8cbc74' stroke-width='0.9' stroke-linecap='round'/><line x1='98.6' y1='5.6' x2='99.9' y2='12.8' stroke='#8cbc74' stroke-width='0.9' stroke-linecap='round'/><line x1='100.2' y1='6.2' x2='111.7' y2='-2.2' stroke='#4c8a44' stroke-width='0.9' stroke-linecap='round'/><line x1='100.2' y1='6.2' x2='101.9' y2='16.2' stroke='#3e7c38' stroke-width='0.9' stroke-linecap='round'/><line x1='101.9' y1='6.9' x2='108.5' y2='-1.3' stroke='#4c8a44' stroke-width='0.9' stroke-linecap='round'/><line x1='101.9' y1='6.9' x2='102.8' y2='17.0' stroke='#2e6a2c' stroke-width='0.9' stroke-linecap='round'/><line x1='103.5' y1='7.5' x2='110.2' y2='3.1' stroke='#3e7c38' stroke-width='0.9' stroke-linecap='round'/><line x1='103.5' y1='7.5' x2='105.8' y2='15.2' stroke='#8cb878' stroke-width='0.9' stroke-linecap='round'/><line x1='105.1' y1='8.1' x2='112.6' y2='-1.7' stroke='#5a9a50' stroke-width='0.9' stroke-linecap='round'/><line x1='105.1' y1='8.1' x2='107.4' y2='20.4' stroke='#2e6a2c' stroke-width='0.9' stroke-linecap='round'/><line x1='106.8' y1='8.8' x2='115.9' y2='0.3' stroke='#4c8a44' stroke-width='0.9' stroke-linecap='round'/><line x1='106.8' y1='8.8' x2='107.1' y2='16.5' stroke='#a8c890' stroke-width='0.9' stroke-linecap='round'/><line x1='108.4' y1='9.4' x2='117.1' y2='3.7' stroke='#24522a' stroke-width='0.9' stroke-linecap='round'/><line x1='108.4' y1='9.4' x2='108.0' y2='16.9' stroke='#2e6a2c' stroke-width='0.9' stroke-linecap='round'/><line x1='110.0' y1='10.0' x2='114.0' y2='4.0' stroke='#3e7c38' stroke-width='0.9' stroke-linecap='round'/><line x1='110.0' y1='10.0' x2='112.5' y2='19.0' stroke='#4c8a44' stroke-width='0.9' stroke-linecap='round'/><line x1='111.7' y1='10.5' x2='123.1' y2='4.1' stroke='#2e6a2c' stroke-width='0.9' stroke-linecap='round'/><line x1='111.7' y1='10.5' x2='115.9' y2='23.8' stroke='#8cb878' stroke-width='0.9' stroke-linecap='round'/><line x1='113.3' y1='11.1' x2='119.4' y2='5.4' stroke='#3e7c38' stroke-width='0.9' stroke-linecap='round'/><line x1='113.3' y1='11.1' x2='116.6' y2='22.4' stroke='#8cbc74' stroke-width='0.9' stroke-linecap='round'/><line x1='115.0' y1='11.6' x2='124.3' y2='2.9' stroke='#8cb878' stroke-width='0.9' stroke-linecap='round'/><line x1='115.0' y1='11.6' x2='114.9' y2='24.4' stroke='#6aa85a' stroke-width='0.9' stroke-linecap='round'/><line x1='116.7' y1='12.1' x2='121.7' y2='6.5' stroke='#6aa85a' stroke-width='0.9' stroke-linecap='round'/><line x1='116.7' y1='12.1' x2='117.0' y2='24.5' stroke='#2e6a2c' stroke-width='0.9' stroke-linecap='round'/><line x1='118.3' y1='12.7' x2='128.0' y2='6.5' stroke='#24522a' stroke-width='0.9' stroke-linecap='round'/><line x1='118.3' y1='12.7' x2='120.7' y2='26.6' stroke='#5a9a50' stroke-width='0.9' stroke-linecap='round'/><line x1='120.0' y1='13.2' x2='128.4' y2='4.6' stroke='#5a9a50' stroke-width='0.9' stroke-linecap='round'/><line x1='120.0' y1='13.2' x2='120.6' y2='22.4' stroke='#2e6a2c' stroke-width='0.9' stroke-linecap='round'/><line x1='121.7' y1='13.7' x2='127.8' y2='7.1' stroke='#4c8a44' stroke-width='0.9' stroke-linecap='round'/><line x1='121.7' y1='13.7' x2='123.9' y2='26.5' stroke='#2e6a2c' stroke-width='0.9' stroke-linecap='round'/><line x1='123.3' y1='14.3' x2='128.8' y2='8.2' stroke='#4c8a44' stroke-width='0.9' stroke-linecap='round'/><line x1='123.3' y1='14.3' x2='127.6' y2='26.8' stroke='#a8c890' stroke-width='0.9' stroke-linecap='round'/><line x1='125.0' y1='14.8' x2='135.9' y2='6.6' stroke='#6aa85a' stroke-width='0.9' stroke-linecap='round'/><line x1='125.0' y1='14.8' x2='127.2' y2='25.6' stroke='#8cb878' stroke-width='0.9' stroke-linecap='round'/><line x1='126.7' y1='15.3' x2='133.8' y2='10.6' stroke='#5a9a50' stroke-width='0.9' stroke-linecap='round'/><line x1='126.7' y1='15.3' x2='129.0' y2='22.5' stroke='#8cbc74' stroke-width='0.9' stroke-linecap='round'/><line x1='128.3' y1='15.9' x2='134.6' y2='10.0' stroke='#24522a' stroke-width='0.9' stroke-linecap='round'/><line x1='128.3' y1='15.9' x2='129.6' y2='23.0' stroke='#8cbc74' stroke-width='0.9' stroke-linecap='round'/><line x1='130.0' y1='16.4' x2='135.6' y2='11.1' stroke='#6aa85a' stroke-width='0.9' stroke-linecap='round'/><line x1='130.0' y1='16.4' x2='130.7' y2='25.2' stroke='#a8c890' stroke-width='0.9' stroke-linecap='round'/><line x1='131.7' y1='16.9' x2='143.2' y2='10.0' stroke='#a8c890' stroke-width='0.9' stroke-linecap='round'/><line x1='131.7' y1='16.9' x2='134.9' y2='27.2' stroke='#5a9a50' stroke-width='0.9' stroke-linecap='round'/><line x1='133.3' y1='17.5' x2='138.7' y2='10.8' stroke='#4c8a44' stroke-width='0.9' stroke-linecap='round'/><line x1='133.3' y1='17.5' x2='133.9' y2='26.7' stroke='#6aa85a' stroke-width='0.9' stroke-linecap='round'/><line x1='135.0' y1='18.0' x2='141.8' y2='9.6' stroke='#4c8a44' stroke-width='0.9' stroke-linecap='round'/><line x1='135.0' y1='18.0' x2='140.9' y2='30.4' stroke='#8cb878' stroke-width='0.9' stroke-linecap='round'/><line x1='136.7' y1='18.4' x2='141.6' y2='12.1' stroke='#8cb878' stroke-width='0.9' stroke-linecap='round'/><line x1='136.7' y1='18.4' x2='138.2' y2='26.5' stroke='#2e6a2c' stroke-width='0.9' stroke-linecap='round'/><line x1='138.4' y1='18.7' x2='145.0' y2='10.1' stroke='#2e6a2c' stroke-width='0.9' stroke-linecap='round'/><line x1='138.4' y1='18.7' x2='142.7' y2='26.2' stroke='#8cb878' stroke-width='0.9' stroke-linecap='round'/><line x1='140.1' y1='19.1' x2='146.2' y2='12.8' stroke='#24522a' stroke-width='0.9' stroke-linecap='round'/><line x1='140.1' y1='19.1' x2='145.0' y2='32.1' stroke='#4c8a44' stroke-width='0.9' stroke-linecap='round'/><line x1='141.8' y1='19.4' x2='146.0' y2='13.3' stroke='#5a9a50' stroke-width='0.9' stroke-linecap='round'/><line x1='141.8' y1='19.4' x2='142.5' y2='29.2' stroke='#2e6a2c' stroke-width='0.9' stroke-linecap='round'/><line x1='143.5' y1='19.8' x2='148.9' y2='10.0' stroke='#8cb878' stroke-width='0.9' stroke-linecap='round'/><line x1='143.5' y1='19.8' x2='147.8' y2='32.3' stroke='#3e7c38' stroke-width='0.9' stroke-linecap='round'/><line x1='145.2' y1='20.1' x2='154.5' y2='12.9' stroke='#3e7c38' stroke-width='0.9' stroke-linecap='round'/><line x1='145.2' y1='20.1' x2='146.9' y2='27.7' stroke='#6aa85a' stroke-width='0.9' stroke-linecap='round'/><line x1='146.9' y1='20.5' x2='155.0' y2='12.0' stroke='#a8c890' stroke-width='0.9' stroke-linecap='round'/><line x1='146.9' y1='20.5' x2='150.7' y2='30.1' stroke='#4c8a44' stroke-width='0.9' stroke-linecap='round'/><line x1='148.6' y1='20.8' x2='154.1' y2='13.9' stroke='#5a9a50' stroke-width='0.9' stroke-linecap='round'/><line x1='148.6' y1='20.8' x2='155.1' y2='33.1' stroke='#6aa85a' stroke-width='0.9' stroke-linecap='round'/><line x1='150.4' y1='21.2' x2='155.7' y2='11.5' stroke='#2e6a2c' stroke-width='0.9' stroke-linecap='round'/><line x1='150.4' y1='21.2' x2='151.5' y2='28.6' stroke='#a8c890' stroke-width='0.9' stroke-linecap='round'/><line x1='152.1' y1='21.5' x2='160.8' y2='13.6' stroke='#8cb878' stroke-width='0.9' stroke-linecap='round'/><line x1='152.1' y1='21.5' x2='156.3' y2='28.5' stroke='#2e6a2c' stroke-width='0.9' stroke-linecap='round'/><line x1='153.8' y1='21.9' x2='163.5' y2='14.9' stroke='#24522a' stroke-width='0.9' stroke-linecap='round'/><line x1='153.8' y1='21.9' x2='156.6' y2='31.8' stroke='#3e7c38' stroke-width='0.9' stroke-linecap='round'/><line x1='155.5' y1='22.2' x2='161.9' y2='14.8' stroke='#8cbc74' stroke-width='0.9' stroke-linecap='round'/><line x1='155.5' y1='22.2' x2='160.6' y2='31.5' stroke='#4c8a44' stroke-width='0.9' stroke-linecap='round'/><line x1='157.2' y1='22.6' x2='165.5' y2='12.7' stroke='#2e6a2c' stroke-width='0.9' stroke-linecap='round'/><line x1='157.2' y1='22.6' x2='161.7' y2='35.5' stroke='#2e6a2c' stroke-width='0.9' stroke-linecap='round'/><line x1='158.9' y1='22.9' x2='165.8' y2='11.8' stroke='#3e7c38' stroke-width='0.9' stroke-linecap='round'/><line x1='158.9' y1='22.9' x2='160.2' y2='36.2' stroke='#4c8a44' stroke-width='0.9' stroke-linecap='round'/><line x1='160.6' y1='23.3' x2='171.3' y2='14.2' stroke='#8cbc74' stroke-width='0.9' stroke-linecap='round'/><line x1='160.6' y1='23.3' x2='162.3' y2='34.8' stroke='#8cb878' stroke-width='0.9' stroke-linecap='round'/><line x1='162.3' y1='23.6' x2='170.1' y2='18.3' stroke='#5a9a50' stroke-width='0.9' stroke-linecap='round'/><line x1='162.3' y1='23.6' x2='166.1' y2='34.7' stroke='#4c8a44' stroke-width='0.9' stroke-linecap='round'/><polyline points='84.0,0.0 110.0,10.0 135.0,18.0 164.0,24.0' fill='none' stroke='#5a6a38' stroke-width='0.9' opacity='0.7'/><line x1='148.0' y1='0.0' x2='156.4' y2='4.6' stroke='#4c8a44' stroke-width='0.9' stroke-linecap='round'/><line x1='148.0' y1='0.0' x2='142.5' y2='6.6' stroke='#4c8a44' stroke-width='0.9' stroke-linecap='round'/><line x1='148.4' y1='2.0' x2='153.8' y2='5.3' stroke='#8cbc74' stroke-width='0.9' stroke-linecap='round'/><line x1='148.4' y1='2.0' x2='145.1' y2='7.4' stroke='#24522a' stroke-width='0.9' stroke-linecap='round'/><line x1='148.8' y1='4.0' x2='154.6' y2='8.2' stroke='#4c8a44' stroke-width='0.9' stroke-linecap='round'/><line x1='148.8' y1='4.0' x2='146.0' y2='9.4' stroke='#4a4030' stroke-width='0.9' stroke-linecap='round'/><line x1='149.2' y1='6.0' x2='153.5' y2='10.4' stroke='#2e6a2c' stroke-width='0.9' stroke-linecap='round'/><line x1='149.2' y1='6.0' x2='143.2' y2='13.8' stroke='#5a9a50' stroke-width='0.9' stroke-linecap='round'/><line x1='149.6' y1='8.0' x2='157.8' y2='13.8' stroke='#3e7c38' stroke-width='0.9' stroke-linecap='round'/><line x1='149.6' y1='8.0' x2='146.6' y2='13.9' stroke='#6aa85a' stroke-width='0.9' stroke-linecap='round'/><line x1='150.0' y1='10.0' x2='155.9' y2='13.7' stroke='#5a9a50' stroke-width='0.9' stroke-linecap='round'/><line x1='150.0' y1='10.0' x2='145.7' y2='14.2' stroke='#24522a' stroke-width='0.9' stroke-linecap='round'/><line x1='150.4' y1='12.0' x2='155.9' y2='15.3' stroke='#24522a' stroke-width='0.9' stroke-linecap='round'/><line x1='150.4' y1='12.0' x2='146.8' y2='20.3' stroke='#4a4030' stroke-width='0.9' stroke-linecap='round'/><line x1='150.8' y1='14.0' x2='156.2' y2='19.0' stroke='#4c8a44' stroke-width='0.9' stroke-linecap='round'/><line x1='150.8' y1='14.0' x2='145.6' y2='22.3' stroke='#24522a' stroke-width='0.9' stroke-linecap='round'/><line x1='151.2' y1='16.0' x2='158.4' y2='19.3' stroke='#8cbc74' stroke-width='0.9' stroke-linecap='round'/><line x1='151.2' y1='16.0' x2='147.5' y2='23.8' stroke='#4c8a44' stroke-width='0.9' stroke-linecap='round'/><line x1='151.6' y1='18.0' x2='157.7' y2='23.8' stroke='#5a9a50' stroke-width='0.9' stroke-linecap='round'/><line x1='151.6' y1='18.0' x2='147.4' y2='23.1' stroke='#3e7c38' stroke-width='0.9' stroke-linecap='round'/><line x1='152.0' y1='20.0' x2='159.6' y2='27.1' stroke='#4a4030' stroke-width='0.9' stroke-linecap='round'/><line x1='152.0' y1='20.0' x2='147.7' y2='24.9' stroke='#4c8a44' stroke-width='0.9' stroke-linecap='round'/><line x1='152.4' y1='22.0' x2='159.9' y2='27.6' stroke='#5a9a50' stroke-width='0.9' stroke-linecap='round'/><line x1='152.4' y1='22.0' x2='148.5' y2='27.3' stroke='#3e7c38' stroke-width='0.9' stroke-linecap='round'/><line x1='152.8' y1='24.0' x2='159.3' y2='29.3' stroke='#2e6a2c' stroke-width='0.9' stroke-linecap='round'/><line x1='152.8' y1='24.0' x2='148.6' y2='30.1' stroke='#24522a' stroke-width='0.9' stroke-linecap='round'/><line x1='153.2' y1='26.0' x2='160.6' y2='33.1' stroke='#4a4030' stroke-width='0.9' stroke-linecap='round'/><line x1='153.2' y1='26.0' x2='150.3' y2='33.2' stroke='#4a4030' stroke-width='0.9' stroke-linecap='round'/><line x1='153.6' y1='28.0' x2='162.0' y2='31.6' stroke='#5a9a50' stroke-width='0.9' stroke-linecap='round'/><line x1='153.6' y1='28.0' x2='149.4' y2='37.2' stroke='#6aa85a' stroke-width='0.9' stroke-linecap='round'/><line x1='154.0' y1='30.0' x2='162.8' y2='33.3' stroke='#2e6a2c' stroke-width='0.9' stroke-linecap='round'/><line x1='154.0' y1='30.0' x2='148.8' y2='39.2' stroke='#3e7c38' stroke-width='0.9' stroke-linecap='round'/><line x1='154.4' y1='32.0' x2='163.1' y2='35.7' stroke='#6aa85a' stroke-width='0.9' stroke-linecap='round'/><line x1='154.4' y1='32.0' x2='147.6' y2='39.7' stroke='#2e6a2c' stroke-width='0.9' stroke-linecap='round'/><line x1='154.8' y1='34.0' x2='160.2' y2='36.8' stroke='#4a4030' stroke-width='0.9' stroke-linecap='round'/><line x1='154.8' y1='34.0' x2='151.8' y2='38.8' stroke='#4c8a44' stroke-width='0.9' stroke-linecap='round'/><line x1='155.2' y1='36.0' x2='165.4' y2='39.7' stroke='#5a9a50' stroke-width='0.9' stroke-linecap='round'/><line x1='155.2' y1='36.0' x2='151.3' y2='41.1' stroke='#24522a' stroke-width='0.9' stroke-linecap='round'/><line x1='155.6' y1='38.0' x2='164.5' y2='42.5' stroke='#2e6a2c' stroke-width='0.9' stroke-linecap='round'/><line x1='155.6' y1='38.0' x2='152.0' y2='48.0' stroke='#5a9a50' stroke-width='0.9' stroke-linecap='round'/><line x1='156.0' y1='40.0' x2='165.0' y2='44.6' stroke='#4a4030' stroke-width='0.9' stroke-linecap='round'/><line x1='156.0' y1='40.0' x2='150.7' y2='47.7' stroke='#3e7c38' stroke-width='0.9' stroke-linecap='round'/><line x1='156.4' y1='42.0' x2='161.6' y2='45.0' stroke='#4c8a44' stroke-width='0.9' stroke-linecap='round'/><line x1='156.4' y1='42.0' x2='154.2' y2='47.8' stroke='#4a4030' stroke-width='0.9' stroke-linecap='round'/><line x1='156.8' y1='44.0' x2='164.6' y2='49.7' stroke='#3e7c38' stroke-width='0.9' stroke-linecap='round'/><line x1='156.8' y1='44.0' x2='153.8' y2='51.1' stroke='#4c8a44' stroke-width='0.9' stroke-linecap='round'/><line x1='157.2' y1='46.0' x2='162.7' y2='49.9' stroke='#5a9a50' stroke-width='0.9' stroke-linecap='round'/><line x1='157.2' y1='46.0' x2='153.7' y2='53.9' stroke='#8cbc74' stroke-width='0.9' stroke-linecap='round'/><line x1='157.6' y1='48.0' x2='166.8' y2='52.1' stroke='#8cbc74' stroke-width='0.9' stroke-linecap='round'/><line x1='157.6' y1='48.0' x2='152.0' y2='54.8' stroke='#2e6a2c' stroke-width='0.9' stroke-linecap='round'/><line x1='158.0' y1='50.0' x2='167.2' y2='55.5' stroke='#6aa85a' stroke-width='0.9' stroke-linecap='round'/><line x1='158.0' y1='50.0' x2='154.7' y2='56.0' stroke='#6aa85a' stroke-width='0.9' stroke-linecap='round'/><line x1='158.4' y1='52.0' x2='166.2' y2='58.5' stroke='#6aa85a' stroke-width='0.9' stroke-linecap='round'/><line x1='158.4' y1='52.0' x2='151.5' y2='59.5' stroke='#2e6a2c' stroke-width='0.9' stroke-linecap='round'/><line x1='158.8' y1='54.0' x2='164.3' y2='57.0' stroke='#6aa85a' stroke-width='0.9' stroke-linecap='round'/><line x1='158.8' y1='54.0' x2='155.3' y2='61.0' stroke='#2e6a2c' stroke-width='0.9' stroke-linecap='round'/><line x1='159.2' y1='56.0' x2='166.5' y2='60.2' stroke='#3e7c38' stroke-width='0.9' stroke-linecap='round'/><line x1='159.2' y1='56.0' x2='156.0' y2='61.8' stroke='#2e6a2c' stroke-width='0.9' stroke-linecap='round'/><line x1='159.6' y1='58.0' x2='166.6' y2='61.4' stroke='#8cbc74' stroke-width='0.9' stroke-linecap='round'/><line x1='159.6' y1='58.0' x2='152.5' y2='66.0' stroke='#2e6a2c' stroke-width='0.9' stroke-linecap='round'/><line x1='160.0' y1='60.0' x2='167.6' y2='67.0' stroke='#2e6a2c' stroke-width='0.9' stroke-linecap='round'/><line x1='160.0' y1='60.0' x2='156.9' y2='68.5' stroke='#24522a' stroke-width='0.9' stroke-linecap='round'/><line x1='160.4' y1='62.0' x2='166.6' y2='68.4' stroke='#2e6a2c' stroke-width='0.9' stroke-linecap='round'/><line x1='160.4' y1='62.0' x2='156.2' y2='67.5' stroke='#2e6a2c' stroke-width='0.9' stroke-linecap='round'/><line x1='160.8' y1='64.0' x2='169.9' y2='69.7' stroke='#24522a' stroke-width='0.9' stroke-linecap='round'/><line x1='160.8' y1='64.0' x2='158.0' y2='70.8' stroke='#4c8a44' stroke-width='0.9' stroke-linecap='round'/><line x1='161.2' y1='66.0' x2='169.3' y2='69.4' stroke='#24522a' stroke-width='0.9' stroke-linecap='round'/><line x1='161.2' y1='66.0' x2='158.0' y2='74.1' stroke='#4c8a44' stroke-width='0.9' stroke-linecap='round'/><line x1='161.6' y1='68.0' x2='168.7' y2='72.4' stroke='#24522a' stroke-width='0.9' stroke-linecap='round'/><line x1='161.6' y1='68.0' x2='155.4' y2='74.1' stroke='#24522a' stroke-width='0.9' stroke-linecap='round'/><line x1='162.0' y1='70.0' x2='167.4' y2='72.7' stroke='#24522a' stroke-width='0.9' stroke-linecap='round'/><line x1='162.0' y1='70.0' x2='155.9' y2='76.4' stroke='#5a9a50' stroke-width='0.9' stroke-linecap='round'/><line x1='162.4' y1='72.0' x2='167.6' y2='76.1' stroke='#6aa85a' stroke-width='0.9' stroke-linecap='round'/><line x1='162.4' y1='72.0' x2='157.8' y2='79.2' stroke='#4a4030' stroke-width='0.9' stroke-linecap='round'/><line x1='162.8' y1='74.0' x2='168.9' y2='77.9' stroke='#5a9a50' stroke-width='0.9' stroke-linecap='round'/><line x1='162.8' y1='74.0' x2='159.6' y2='79.7' stroke='#8cbc74' stroke-width='0.9' stroke-linecap='round'/><line x1='163.2' y1='76.0' x2='168.4' y2='81.6' stroke='#6aa85a' stroke-width='0.9' stroke-linecap='round'/><line x1='163.2' y1='76.0' x2='158.8' y2='85.8' stroke='#6aa85a' stroke-width='0.9' stroke-linecap='round'/><line x1='163.6' y1='78.0' x2='170.3' y2='82.7' stroke='#24522a' stroke-width='0.9' stroke-linecap='round'/><line x1='163.6' y1='78.0' x2='158.9' y2='82.8' stroke='#2e6a2c' stroke-width='0.9' stroke-linecap='round'/><polyline points='148.0,0.0 154.0,30.0 160.0,60.0 164.0,80.0' fill='none' stroke='#4a3a28' stroke-width='0.9' opacity='0.7'/><defs><linearGradient id='c1gT' x1='0' y1='0' x2='0' y2='1'><stop offset='0' stop-color='#5a4230'/><stop offset='0.55' stop-color='#a38364'/><stop offset='1' stop-color='#d2b898'/></linearGradient><linearGradient id='c1sT' x1='0' x2='1'><stop offset='0' stop-color='#fff' stop-opacity='0.12'/><stop offset='0.4' stop-color='#fff' stop-opacity='0'/><stop offset='0.75' stop-color='#000' stop-opacity='0.1'/><stop offset='1' stop-color='#000' stop-opacity='0.45'/></linearGradient></defs><g transform='translate(65 77) rotate(-19)'><clipPath id='c1T'><path d='M-7.7 -41.0 C3.4 -42.6 16.1 -28.7 17.0 -6.1 C17.3 16.4 11.9 40.2 0.0 41.0 C-11.9 40.2 -17.3 16.4 -17.0 -6.1 C-16.7 -28.7 -14.4 -39.4 -7.7 -41.0Z'/></clipPath><path d='M-7.7 -41.0 C3.4 -42.6 16.1 -28.7 17.0 -6.1 C17.3 16.4 11.9 40.2 0.0 41.0 C-11.9 40.2 -17.3 16.4 -17.0 -6.1 C-16.7 -28.7 -14.4 -39.4 -7.7 -41.0Z' fill='#3e2c20'/><g clip-path='url(#c1T)'><path d='M-20.4 40.5 C-20.7 46.5 -18.1 49.1 -16.1 49.1 C-14.1 49.1 -11.5 46.5 -11.8 40.5Z' fill='url(#c1gT)' stroke='#2a1c12' stroke-width='0.85'/><path d='M-13.2 41.2 C-13.5 47.2 -10.9 49.8 -8.9 49.8 C-6.9 49.8 -4.3 47.2 -4.6 41.2Z' fill='url(#c1gT)' stroke='#2a1c12' stroke-width='0.85'/><path d='M-4.8 40.4 C-5.1 46.4 -2.5 49.0 -0.5 49.0 C1.5 49.0 4.1 46.4 3.8 40.4Z' fill='url(#c1gT)' stroke='#2a1c12' stroke-width='0.85'/><path d='M3.2 40.7 C2.9 46.7 5.5 49.3 7.5 49.3 C9.5 49.3 12.1 46.7 11.8 40.7Z' fill='url(#c1gT)' stroke='#2a1c12' stroke-width='0.85'/><path d='M11.6 40.4 C11.3 46.4 13.9 49.0 15.9 49.0 C17.9 49.0 20.5 46.4 20.2 40.4Z' fill='url(#c1gT)' stroke='#2a1c12' stroke-width='0.85'/><path d='M-25.0 34.7 C-25.3 40.7 -22.7 43.3 -20.7 43.3 C-18.7 43.3 -16.1 40.7 -16.4 34.7Z' fill='url(#c1gT)' stroke='#2a1c12' stroke-width='0.85'/><path d='M-16.4 33.9 C-16.7 39.9 -14.1 42.5 -12.1 42.5 C-10.1 42.5 -7.5 39.9 -7.8 33.9Z' fill='url(#c1gT)' stroke='#2a1c12' stroke-width='0.85'/><path d='M-8.9 34.1 C-9.2 40.1 -6.6 42.7 -4.6 42.7 C-2.6 42.7 0.0 40.1 -0.3 34.1Z' fill='url(#c1gT)' stroke='#2a1c12' stroke-width='0.85'/><path d='M-0.5 34.3 C-0.8 40.3 1.8 42.9 3.8 42.9 C5.8 42.9 8.4 40.3 8.1 34.3Z' fill='url(#c1gT)' stroke='#2a1c12' stroke-width='0.85'/><path d='M7.7 34.5 C7.4 40.5 10.0 43.1 12.0 43.1 C14.0 43.1 16.6 40.5 16.3 34.5Z' fill='url(#c1gT)' stroke='#2a1c12' stroke-width='0.85'/><path d='M15.3 34.4 C15.0 40.4 17.6 43.0 19.6 43.0 C21.6 43.0 24.2 40.4 23.9 34.4Z' fill='url(#c1gT)' stroke='#2a1c12' stroke-width='0.85'/><path d='M-20.4 27.9 C-20.7 33.9 -18.1 36.5 -16.1 36.5 C-14.1 36.5 -11.5 33.9 -11.8 27.9Z' fill='url(#c1gT)' stroke='#2a1c12' stroke-width='0.85'/><path d='M-12.7 27.9 C-13.0 33.9 -10.4 36.5 -8.4 36.5 C-6.4 36.5 -3.8 33.9 -4.1 27.9Z' fill='url(#c1gT)' stroke='#2a1c12' stroke-width='0.85'/><path d='M-4.4 28.0 C-4.7 34.0 -2.1 36.6 -0.1 36.6 C1.9 36.6 4.5 34.0 4.2 28.0Z' fill='url(#c1gT)' stroke='#2a1c12' stroke-width='0.85'/><path d='M2.9 28.0 C2.6 34.0 5.2 36.6 7.2 36.6 C9.2 36.6 11.8 34.0 11.5 28.0Z' fill='url(#c1gT)' stroke='#2a1c12' stroke-width='0.85'/><path d='M10.7 27.9 C10.4 33.9 13.0 36.5 15.0 36.5 C17.0 36.5 19.6 33.9 19.3 27.9Z' fill='url(#c1gT)' stroke='#2a1c12' stroke-width='0.85'/><path d='M-24.6 21.0 C-24.9 27.0 -22.3 29.6 -20.3 29.6 C-18.3 29.6 -15.7 27.0 -16.0 21.0Z' fill='url(#c1gT)' stroke='#2a1c12' stroke-width='0.85'/><path d='M-16.1 21.1 C-16.4 27.1 -13.8 29.7 -11.8 29.7 C-9.8 29.7 -7.2 27.1 -7.5 21.1Z' fill='url(#c1gT)' stroke='#2a1c12' stroke-width='0.85'/><path d='M-8.8 21.3 C-9.1 27.3 -6.5 29.9 -4.5 29.9 C-2.5 29.9 0.1 27.3 -0.2 21.3Z' fill='url(#c1gT)' stroke='#2a1c12' stroke-width='0.85'/><path d='M-0.3 21.1 C-0.6 27.1 2.0 29.7 4.0 29.7 C6.0 29.7 8.6 27.1 8.3 21.1Z' fill='url(#c1gT)' stroke='#2a1c12' stroke-width='0.85'/><path d='M7.2 21.0 C6.9 27.0 9.5 29.6 11.5 29.6 C13.5 29.6 16.1 27.0 15.8 21.0Z' fill='url(#c1gT)' stroke='#2a1c12' stroke-width='0.85'/><path d='M15.2 21.2 C14.9 27.2 17.5 29.8 19.5 29.8 C21.5 29.8 24.1 27.2 23.8 21.2Z' fill='url(#c1gT)' stroke='#2a1c12' stroke-width='0.85'/><path d='M-20.9 14.3 C-21.2 20.3 -18.6 22.9 -16.6 22.9 C-14.6 22.9 -12.0 20.3 -12.3 14.3Z' fill='url(#c1gT)' stroke='#2a1c12' stroke-width='0.85'/><path d='M-12.6 14.3 C-12.9 20.3 -10.3 22.9 -8.3 22.9 C-6.3 22.9 -3.7 20.3 -4.0 14.3Z' fill='url(#c1gT)' stroke='#2a1c12' stroke-width='0.85'/><path d='M-4.9 14.7 C-5.2 20.7 -2.6 23.3 -0.6 23.3 C1.4 23.3 4.0 20.7 3.7 14.7Z' fill='url(#c1gT)' stroke='#2a1c12' stroke-width='0.85'/><path d='M3.7 14.4 C3.4 20.4 6.0 23.0 8.0 23.0 C10.0 23.0 12.6 20.4 12.3 14.4Z' fill='url(#c1gT)' stroke='#2a1c12' stroke-width='0.85'/><path d='M11.2 14.1 C10.9 20.1 13.5 22.7 15.5 22.7 C17.5 22.7 20.1 20.1 19.8 14.1Z' fill='url(#c1gT)' stroke='#2a1c12' stroke-width='0.85'/><path d='M-24.9 7.4 C-25.2 13.4 -22.6 16.0 -20.6 16.0 C-18.6 16.0 -16.0 13.4 -16.3 7.4Z' fill='url(#c1gT)' stroke='#2a1c12' stroke-width='0.85'/><path d='M-16.6 7.9 C-16.9 13.9 -14.3 16.5 -12.3 16.5 C-10.3 16.5 -7.7 13.9 -8.0 7.9Z' fill='url(#c1gT)' stroke='#2a1c12' stroke-width='0.85'/><path d='M-9.2 8.2 C-9.5 14.2 -6.9 16.8 -4.9 16.8 C-2.9 16.8 -0.3 14.2 -0.6 8.2Z' fill='url(#c1gT)' stroke='#2a1c12' stroke-width='0.85'/><path d='M-0.9 8.1 C-1.2 14.1 1.4 16.7 3.4 16.7 C5.4 16.7 8.0 14.1 7.7 8.1Z' fill='url(#c1gT)' stroke='#2a1c12' stroke-width='0.85'/><path d='M7.7 8.3 C7.4 14.3 10.0 16.9 12.0 16.9 C14.0 16.9 16.6 14.3 16.3 8.3Z' fill='url(#c1gT)' stroke='#2a1c12' stroke-width='0.85'/><path d='M14.9 7.7 C14.6 13.7 17.2 16.3 19.2 16.3 C21.2 16.3 23.8 13.7 23.5 7.7Z' fill='url(#c1gT)' stroke='#2a1c12' stroke-width='0.85'/><path d='M-20.2 0.7 C-20.5 6.7 -17.9 9.3 -15.9 9.3 C-13.9 9.3 -11.3 6.7 -11.6 0.7Z' fill='url(#c1gT)' stroke='#2a1c12' stroke-width='0.85'/><path d='M-13.2 1.3 C-13.5 7.3 -10.9 9.9 -8.9 9.9 C-6.9 9.9 -4.3 7.3 -4.6 1.3Z' fill='url(#c1gT)' stroke='#2a1c12' stroke-width='0.85'/><path d='M-4.7 1.6 C-5.0 7.6 -2.4 10.2 -0.4 10.2 C1.6 10.2 4.2 7.6 3.9 1.6Z' fill='url(#c1gT)' stroke='#2a1c12' stroke-width='0.85'/><path d='M3.6 1.2 C3.3 7.2 5.9 9.8 7.9 9.8 C9.9 9.8 12.5 7.2 12.2 1.2Z' fill='url(#c1gT)' stroke='#2a1c12' stroke-width='0.85'/><path d='M11.9 1.2 C11.6 7.2 14.2 9.8 16.2 9.8 C18.2 9.8 20.8 7.2 20.5 1.2Z' fill='url(#c1gT)' stroke='#2a1c12' stroke-width='0.85'/><path d='M-24.7 -5.2 C-25.0 0.8 -22.4 3.4 -20.4 3.4 C-18.4 3.4 -15.8 0.8 -16.1 -5.2Z' fill='url(#c1gT)' stroke='#2a1c12' stroke-width='0.85'/><path d='M-16.8 -5.5 C-17.1 0.5 -14.5 3.1 -12.5 3.1 C-10.5 3.1 -7.9 0.5 -8.2 -5.5Z' fill='url(#c1gT)' stroke='#2a1c12' stroke-width='0.85'/><path d='M-8.6 -5.5 C-8.9 0.5 -6.3 3.1 -4.3 3.1 C-2.3 3.1 0.3 0.5 0.0 -5.5Z' fill='url(#c1gT)' stroke='#2a1c12' stroke-width='0.85'/><path d='M-0.2 -5.2 C-0.5 0.8 2.1 3.4 4.1 3.4 C6.1 3.4 8.7 0.8 8.4 -5.2Z' fill='url(#c1gT)' stroke='#2a1c12' stroke-width='0.85'/><path d='M7.3 -5.8 C7.0 0.2 9.6 2.8 11.6 2.8 C13.6 2.8 16.2 0.2 15.9 -5.8Z' fill='url(#c1gT)' stroke='#2a1c12' stroke-width='0.85'/><path d='M15.1 -5.5 C14.8 0.5 17.4 3.1 19.4 3.1 C21.4 3.1 24.0 0.5 23.7 -5.5Z' fill='url(#c1gT)' stroke='#2a1c12' stroke-width='0.85'/><path d='M-20.6 -11.9 C-20.9 -5.9 -18.3 -3.3 -16.3 -3.3 C-14.3 -3.3 -11.7 -5.9 -12.0 -11.9Z' fill='url(#c1gT)' stroke='#2a1c12' stroke-width='0.85'/><path d='M-12.2 -11.5 C-12.5 -5.5 -9.9 -2.9 -7.9 -2.9 C-5.9 -2.9 -3.3 -5.5 -3.6 -11.5Z' fill='url(#c1gT)' stroke='#2a1c12' stroke-width='0.85'/><path d='M-4.7 -12.1 C-5.0 -6.1 -2.4 -3.5 -0.4 -3.5 C1.6 -3.5 4.2 -6.1 3.9 -12.1Z' fill='url(#c1gT)' stroke='#2a1c12' stroke-width='0.85'/><path d='M3.4 -11.5 C3.1 -5.5 5.7 -2.9 7.7 -2.9 C9.7 -2.9 12.3 -5.5 12.0 -11.5Z' fill='url(#c1gT)' stroke='#2a1c12' stroke-width='0.85'/><path d='M11.1 -12.0 C10.8 -6.0 13.4 -3.4 15.4 -3.4 C17.4 -3.4 20.0 -6.0 19.7 -12.0Z' fill='url(#c1gT)' stroke='#2a1c12' stroke-width='0.85'/><path d='M-24.3 -18.9 C-24.6 -12.9 -22.0 -10.3 -20.0 -10.3 C-18.0 -10.3 -15.4 -12.9 -15.7 -18.9Z' fill='url(#c1gT)' stroke='#2a1c12' stroke-width='0.85'/><path d='M-16.9 -18.1 C-17.2 -12.1 -14.6 -9.5 -12.6 -9.5 C-10.6 -9.5 -8.0 -12.1 -8.3 -18.1Z' fill='url(#c1gT)' stroke='#2a1c12' stroke-width='0.85'/><path d='M-8.3 -18.6 C-8.6 -12.6 -6.0 -10.0 -4.0 -10.0 C-2.0 -10.0 0.6 -12.6 0.3 -18.6Z' fill='url(#c1gT)' stroke='#2a1c12' stroke-width='0.85'/><path d='M-1.2 -18.2 C-1.5 -12.2 1.1 -9.6 3.1 -9.6 C5.1 -9.6 7.7 -12.2 7.4 -18.2Z' fill='url(#c1gT)' stroke='#2a1c12' stroke-width='0.85'/><path d='M7.5 -18.3 C7.2 -12.3 9.8 -9.7 11.8 -9.7 C13.8 -9.7 16.4 -12.3 16.1 -18.3Z' fill='url(#c1gT)' stroke='#2a1c12' stroke-width='0.85'/><path d='M15.9 -18.2 C15.6 -12.2 18.2 -9.6 20.2 -9.6 C22.2 -9.6 24.8 -12.2 24.5 -18.2Z' fill='url(#c1gT)' stroke='#2a1c12' stroke-width='0.85'/><path d='M-20.8 -25.5 C-21.1 -19.5 -18.5 -16.9 -16.5 -16.9 C-14.5 -16.9 -11.9 -19.5 -12.2 -25.5Z' fill='url(#c1gT)' stroke='#2a1c12' stroke-width='0.85'/><path d='M-13.0 -25.2 C-13.3 -19.2 -10.7 -16.6 -8.7 -16.6 C-6.7 -16.6 -4.1 -19.2 -4.4 -25.2Z' fill='url(#c1gT)' stroke='#2a1c12' stroke-width='0.85'/><path d='M-4.7 -25.5 C-5.0 -19.5 -2.4 -16.9 -0.4 -16.9 C1.6 -16.9 4.2 -19.5 3.9 -25.5Z' fill='url(#c1gT)' stroke='#2a1c12' stroke-width='0.85'/><path d='M2.9 -25.1 C2.6 -19.1 5.2 -16.5 7.2 -16.5 C9.2 -16.5 11.8 -19.1 11.5 -25.1Z' fill='url(#c1gT)' stroke='#2a1c12' stroke-width='0.85'/><path d='M11.4 -25.3 C11.1 -19.3 13.7 -16.7 15.7 -16.7 C17.7 -16.7 20.3 -19.3 20.0 -25.3Z' fill='url(#c1gT)' stroke='#2a1c12' stroke-width='0.85'/><path d='M-24.1 -31.7 C-24.4 -25.7 -21.8 -23.1 -19.8 -23.1 C-17.8 -23.1 -15.2 -25.7 -15.5 -31.7Z' fill='url(#c1gT)' stroke='#2a1c12' stroke-width='0.85'/><path d='M-17.2 -31.9 C-17.5 -25.9 -14.9 -23.3 -12.9 -23.3 C-10.9 -23.3 -8.3 -25.9 -8.6 -31.9Z' fill='url(#c1gT)' stroke='#2a1c12' stroke-width='0.85'/><path d='M-8.4 -32.0 C-8.7 -26.0 -6.1 -23.4 -4.1 -23.4 C-2.1 -23.4 0.5 -26.0 0.2 -32.0Z' fill='url(#c1gT)' stroke='#2a1c12' stroke-width='0.85'/><path d='M-0.5 -32.3 C-0.8 -26.3 1.8 -23.7 3.8 -23.7 C5.8 -23.7 8.4 -26.3 8.1 -32.3Z' fill='url(#c1gT)' stroke='#2a1c12' stroke-width='0.85'/><path d='M7.1 -31.5 C6.8 -25.5 9.4 -22.9 11.4 -22.9 C13.4 -22.9 16.0 -25.5 15.7 -31.5Z' fill='url(#c1gT)' stroke='#2a1c12' stroke-width='0.85'/><path d='M15.4 -31.6 C15.1 -25.6 17.7 -23.0 19.7 -23.0 C21.7 -23.0 24.3 -25.6 24.0 -31.6Z' fill='url(#c1gT)' stroke='#2a1c12' stroke-width='0.85'/><path d='M-21.1 -38.4 C-21.4 -32.4 -18.8 -29.8 -16.8 -29.8 C-14.8 -29.8 -12.2 -32.4 -12.5 -38.4Z' fill='url(#c1gT)' stroke='#2a1c12' stroke-width='0.85'/><path d='M-12.6 -38.6 C-12.9 -32.6 -10.3 -30.0 -8.3 -30.0 C-6.3 -30.0 -3.7 -32.6 -4.0 -38.6Z' fill='url(#c1gT)' stroke='#2a1c12' stroke-width='0.85'/><path d='M-4.5 -38.4 C-4.8 -32.4 -2.2 -29.8 -0.2 -29.8 C1.8 -29.8 4.4 -32.4 4.1 -38.4Z' fill='url(#c1gT)' stroke='#2a1c12' stroke-width='0.85'/><path d='M3.9 -38.3 C3.6 -32.3 6.2 -29.7 8.2 -29.7 C10.2 -29.7 12.8 -32.3 12.5 -38.3Z' fill='url(#c1gT)' stroke='#2a1c12' stroke-width='0.85'/><path d='M11.2 -38.8 C10.9 -32.8 13.5 -30.2 15.5 -30.2 C17.5 -30.2 20.1 -32.8 19.8 -38.8Z' fill='url(#c1gT)' stroke='#2a1c12' stroke-width='0.85'/><path d='M-25.1 -44.7 C-25.4 -38.7 -22.8 -36.1 -20.8 -36.1 C-18.8 -36.1 -16.2 -38.7 -16.5 -44.7Z' fill='url(#c1gT)' stroke='#2a1c12' stroke-width='0.85'/><path d='M-17.2 -45.4 C-17.5 -39.4 -14.9 -36.8 -12.9 -36.8 C-10.9 -36.8 -8.3 -39.4 -8.6 -45.4Z' fill='url(#c1gT)' stroke='#2a1c12' stroke-width='0.85'/><path d='M-9.1 -45.0 C-9.4 -39.0 -6.8 -36.4 -4.8 -36.4 C-2.8 -36.4 -0.2 -39.0 -0.5 -45.0Z' fill='url(#c1gT)' stroke='#2a1c12' stroke-width='0.85'/><path d='M-0.3 -44.9 C-0.6 -38.9 2.0 -36.3 4.0 -36.3 C6.0 -36.3 8.6 -38.9 8.3 -44.9Z' fill='url(#c1gT)' stroke='#2a1c12' stroke-width='0.85'/><path d='M7.7 -45.4 C7.4 -39.4 10.0 -36.8 12.0 -36.8 C14.0 -36.8 16.6 -39.4 16.3 -45.4Z' fill='url(#c1gT)' stroke='#2a1c12' stroke-width='0.85'/><path d='M14.7 -44.7 C14.4 -38.7 17.0 -36.1 19.0 -36.1 C21.0 -36.1 23.6 -38.7 23.3 -44.7Z' fill='url(#c1gT)' stroke='#2a1c12' stroke-width='0.85'/><rect x='-18.700000000000003' y='-45.1' width='37.400000000000006' height='90.2' fill='url(#c1sT)'/></g></g><defs><linearGradient id='c2gT' x1='0' y1='0' x2='0' y2='1'><stop offset='0' stop-color='#5a4230'/><stop offset='0.55' stop-color='#a38364'/><stop offset='1' stop-color='#d2b898'/></linearGradient><linearGradient id='c2sT' x1='0' x2='1'><stop offset='0' stop-color='#fff' stop-opacity='0.12'/><stop offset='0.4' stop-color='#fff' stop-opacity='0'/><stop offset='0.75' stop-color='#000' stop-opacity='0.1'/><stop offset='1' stop-color='#000' stop-opacity='0.45'/></linearGradient></defs><g transform='translate(106.5 47) rotate(-17)'><clipPath id='c2T'><path d='M-9.5 -45.0 C4.2 -46.8 19.9 -31.5 21.0 -6.8 C21.4 18.0 14.7 44.1 0.0 45.0 C-14.7 44.1 -21.4 18.0 -21.0 -6.8 C-20.6 -31.5 -17.8 -43.2 -9.5 -45.0Z'/></clipPath><path d='M-9.5 -45.0 C4.2 -46.8 19.9 -31.5 21.0 -6.8 C21.4 18.0 14.7 44.1 0.0 45.0 C-14.7 44.1 -21.4 18.0 -21.0 -6.8 C-20.6 -31.5 -17.8 -43.2 -9.5 -45.0Z' fill='#3e2c20'/><g clip-path='url(#c2T)'><path d='M-29.7 43.6 C-30.0 49.6 -27.4 52.2 -25.4 52.2 C-23.4 52.2 -20.8 49.6 -21.1 43.6Z' fill='url(#c2gT)' stroke='#2a1c12' stroke-width='0.85'/><path d='M-21.7 43.1 C-22.0 49.1 -19.4 51.7 -17.4 51.7 C-15.4 51.7 -12.8 49.1 -13.1 43.1Z' fill='url(#c2gT)' stroke='#2a1c12' stroke-width='0.85'/><path d='M-13.8 43.0 C-14.1 49.0 -11.5 51.6 -9.5 51.6 C-7.5 51.6 -4.9 49.0 -5.2 43.0Z' fill='url(#c2gT)' stroke='#2a1c12' stroke-width='0.85'/><path d='M-5.0 43.5 C-5.3 49.5 -2.7 52.1 -0.7 52.1 C1.3 52.1 3.9 49.5 3.6 43.5Z' fill='url(#c2gT)' stroke='#2a1c12' stroke-width='0.85'/><path d='M2.3 43.3 C2.0 49.3 4.6 51.9 6.6 51.9 C8.6 51.9 11.2 49.3 10.9 43.3Z' fill='url(#c2gT)' stroke='#2a1c12' stroke-width='0.85'/><path d='M10.4 43.0 C10.1 49.0 12.7 51.6 14.7 51.6 C16.7 51.6 19.3 49.0 19.0 43.0Z' fill='url(#c2gT)' stroke='#2a1c12' stroke-width='0.85'/><path d='M19.0 43.5 C18.7 49.5 21.3 52.1 23.3 52.1 C25.3 52.1 27.9 49.5 27.6 43.5Z' fill='url(#c2gT)' stroke='#2a1c12' stroke-width='0.85'/><path d='M-24.9 36.7 C-25.2 42.7 -22.6 45.3 -20.6 45.3 C-18.6 45.3 -16.0 42.7 -16.3 36.7Z' fill='url(#c2gT)' stroke='#2a1c12' stroke-width='0.85'/><path d='M-17.4 36.5 C-17.7 42.5 -15.1 45.1 -13.1 45.1 C-11.1 45.1 -8.5 42.5 -8.8 36.5Z' fill='url(#c2gT)' stroke='#2a1c12' stroke-width='0.85'/><path d='M-10.0 37.2 C-10.3 43.2 -7.7 45.8 -5.7 45.8 C-3.7 45.8 -1.1 43.2 -1.4 37.2Z' fill='url(#c2gT)' stroke='#2a1c12' stroke-width='0.85'/><path d='M-1.1 36.6 C-1.4 42.6 1.2 45.2 3.2 45.2 C5.2 45.2 7.8 42.6 7.5 36.6Z' fill='url(#c2gT)' stroke='#2a1c12' stroke-width='0.85'/><path d='M7.0 37.1 C6.7 43.1 9.3 45.7 11.3 45.7 C13.3 45.7 15.9 43.1 15.6 37.1Z' fill='url(#c2gT)' stroke='#2a1c12' stroke-width='0.85'/><path d='M14.3 36.9 C14.0 42.9 16.6 45.5 18.6 45.5 C20.6 45.5 23.2 42.9 22.9 36.9Z' fill='url(#c2gT)' stroke='#2a1c12' stroke-width='0.85'/><path d='M-28.9 30.2 C-29.2 36.2 -26.6 38.8 -24.6 38.8 C-22.6 38.8 -20.0 36.2 -20.3 30.2Z' fill='url(#c2gT)' stroke='#2a1c12' stroke-width='0.85'/><path d='M-21.0 29.9 C-21.3 35.9 -18.7 38.5 -16.7 38.5 C-14.7 38.5 -12.1 35.9 -12.4 29.9Z' fill='url(#c2gT)' stroke='#2a1c12' stroke-width='0.85'/><path d='M-13.6 30.4 C-13.9 36.4 -11.3 39.0 -9.3 39.0 C-7.3 39.0 -4.7 36.4 -5.0 30.4Z' fill='url(#c2gT)' stroke='#2a1c12' stroke-width='0.85'/><path d='M-5.8 30.0 C-6.1 36.0 -3.5 38.6 -1.5 38.6 C0.5 38.6 3.1 36.0 2.8 30.0Z' fill='url(#c2gT)' stroke='#2a1c12' stroke-width='0.85'/><path d='M3.0 30.2 C2.7 36.2 5.3 38.8 7.3 38.8 C9.3 38.8 11.9 36.2 11.6 30.2Z' fill='url(#c2gT)' stroke='#2a1c12' stroke-width='0.85'/><path d='M10.9 29.9 C10.6 35.9 13.2 38.5 15.2 38.5 C17.2 38.5 19.8 35.9 19.5 29.9Z' fill='url(#c2gT)' stroke='#2a1c12' stroke-width='0.85'/><path d='M18.1 30.1 C17.8 36.1 20.4 38.7 22.4 38.7 C24.4 38.7 27.0 36.1 26.7 30.1Z' fill='url(#c2gT)' stroke='#2a1c12' stroke-width='0.85'/><path d='M-25.9 24.1 C-26.2 30.1 -23.6 32.7 -21.6 32.7 C-19.6 32.7 -17.0 30.1 -17.3 24.1Z' fill='url(#c2gT)' stroke='#2a1c12' stroke-width='0.85'/><path d='M-17.8 23.7 C-18.1 29.7 -15.5 32.3 -13.5 32.3 C-11.5 32.3 -8.9 29.7 -9.2 23.7Z' fill='url(#c2gT)' stroke='#2a1c12' stroke-width='0.85'/><path d='M-10.0 23.6 C-10.3 29.6 -7.7 32.2 -5.7 32.2 C-3.7 32.2 -1.1 29.6 -1.4 23.6Z' fill='url(#c2gT)' stroke='#2a1c12' stroke-width='0.85'/><path d='M-1.6 23.5 C-1.9 29.5 0.7 32.1 2.7 32.1 C4.7 32.1 7.3 29.5 7.0 23.5Z' fill='url(#c2gT)' stroke='#2a1c12' stroke-width='0.85'/><path d='M6.0 23.2 C5.7 29.2 8.3 31.8 10.3 31.8 C12.3 31.8 14.9 29.2 14.6 23.2Z' fill='url(#c2gT)' stroke='#2a1c12' stroke-width='0.85'/><path d='M14.9 23.5 C14.6 29.5 17.2 32.1 19.2 32.1 C21.2 32.1 23.8 29.5 23.5 23.5Z' fill='url(#c2gT)' stroke='#2a1c12' stroke-width='0.85'/><path d='M-29.8 16.7 C-30.1 22.7 -27.5 25.3 -25.5 25.3 C-23.5 25.3 -20.9 22.7 -21.2 16.7Z' fill='url(#c2gT)' stroke='#2a1c12' stroke-width='0.85'/><path d='M-21.8 16.7 C-22.1 22.7 -19.5 25.3 -17.5 25.3 C-15.5 25.3 -12.9 22.7 -13.2 16.7Z' fill='url(#c2gT)' stroke='#2a1c12' stroke-width='0.85'/><path d='M-14.1 17.2 C-14.4 23.2 -11.8 25.8 -9.8 25.8 C-7.8 25.8 -5.2 23.2 -5.5 17.2Z' fill='url(#c2gT)' stroke='#2a1c12' stroke-width='0.85'/><path d='M-5.7 16.7 C-6.0 22.7 -3.4 25.3 -1.4 25.3 C0.6 25.3 3.2 22.7 2.9 16.7Z' fill='url(#c2gT)' stroke='#2a1c12' stroke-width='0.85'/><path d='M2.7 16.6 C2.4 22.6 5.0 25.2 7.0 25.2 C9.0 25.2 11.6 22.6 11.3 16.6Z' fill='url(#c2gT)' stroke='#2a1c12' stroke-width='0.85'/><path d='M10.2 17.3 C9.9 23.3 12.5 25.9 14.5 25.9 C16.5 25.9 19.1 23.3 18.8 17.3Z' fill='url(#c2gT)' stroke='#2a1c12' stroke-width='0.85'/><path d='M18.1 16.9 C17.8 22.9 20.4 25.5 22.4 25.5 C24.4 25.5 27.0 22.9 26.7 16.9Z' fill='url(#c2gT)' stroke='#2a1c12' stroke-width='0.85'/><path d='M-25.1 10.7 C-25.4 16.7 -22.8 19.3 -20.8 19.3 C-18.8 19.3 -16.2 16.7 -16.5 10.7Z' fill='url(#c2gT)' stroke='#2a1c12' stroke-width='0.85'/><path d='M-17.9 10.3 C-18.2 16.3 -15.6 18.9 -13.6 18.9 C-11.6 18.9 -9.0 16.3 -9.3 10.3Z' fill='url(#c2gT)' stroke='#2a1c12' stroke-width='0.85'/><path d='M-9.2 10.3 C-9.5 16.3 -6.9 18.9 -4.9 18.9 C-2.9 18.9 -0.3 16.3 -0.6 10.3Z' fill='url(#c2gT)' stroke='#2a1c12' stroke-width='0.85'/><path d='M-0.9 10.1 C-1.2 16.1 1.4 18.7 3.4 18.7 C5.4 18.7 8.0 16.1 7.7 10.1Z' fill='url(#c2gT)' stroke='#2a1c12' stroke-width='0.85'/><path d='M7.0 10.4 C6.7 16.4 9.3 19.0 11.3 19.0 C13.3 19.0 15.9 16.4 15.6 10.4Z' fill='url(#c2gT)' stroke='#2a1c12' stroke-width='0.85'/><path d='M14.2 10.4 C13.9 16.4 16.5 19.0 18.5 19.0 C20.5 19.0 23.1 16.4 22.8 10.4Z' fill='url(#c2gT)' stroke='#2a1c12' stroke-width='0.85'/><path d='M-29.9 4.0 C-30.2 10.0 -27.6 12.6 -25.6 12.6 C-23.6 12.6 -21.0 10.0 -21.3 4.0Z' fill='url(#c2gT)' stroke='#2a1c12' stroke-width='0.85'/><path d='M-21.8 4.2 C-22.1 10.2 -19.5 12.8 -17.5 12.8 C-15.5 12.8 -12.9 10.2 -13.2 4.2Z' fill='url(#c2gT)' stroke='#2a1c12' stroke-width='0.85'/><path d='M-13.4 3.7 C-13.7 9.7 -11.1 12.3 -9.1 12.3 C-7.1 12.3 -4.5 9.7 -4.8 3.7Z' fill='url(#c2gT)' stroke='#2a1c12' stroke-width='0.85'/><path d='M-5.8 3.9 C-6.1 9.9 -3.5 12.5 -1.5 12.5 C0.5 12.5 3.1 9.9 2.8 3.9Z' fill='url(#c2gT)' stroke='#2a1c12' stroke-width='0.85'/><path d='M2.2 4.2 C1.9 10.2 4.5 12.8 6.5 12.8 C8.5 12.8 11.1 10.2 10.8 4.2Z' fill='url(#c2gT)' stroke='#2a1c12' stroke-width='0.85'/><path d='M10.0 3.8 C9.7 9.8 12.3 12.4 14.3 12.4 C16.3 12.4 18.9 9.8 18.6 3.8Z' fill='url(#c2gT)' stroke='#2a1c12' stroke-width='0.85'/><path d='M18.6 3.6 C18.3 9.6 20.9 12.2 22.9 12.2 C24.9 12.2 27.5 9.6 27.2 3.6Z' fill='url(#c2gT)' stroke='#2a1c12' stroke-width='0.85'/><path d='M-25.2 -2.9 C-25.5 3.1 -22.9 5.7 -20.9 5.7 C-18.9 5.7 -16.3 3.1 -16.6 -2.9Z' fill='url(#c2gT)' stroke='#2a1c12' stroke-width='0.85'/><path d='M-17.3 -2.7 C-17.6 3.3 -15.0 5.9 -13.0 5.9 C-11.0 5.9 -8.4 3.3 -8.7 -2.7Z' fill='url(#c2gT)' stroke='#2a1c12' stroke-width='0.85'/><path d='M-9.7 -2.9 C-10.0 3.1 -7.4 5.7 -5.4 5.7 C-3.4 5.7 -0.8 3.1 -1.1 -2.9Z' fill='url(#c2gT)' stroke='#2a1c12' stroke-width='0.85'/><path d='M-2.0 -3.1 C-2.3 2.9 0.3 5.5 2.3 5.5 C4.3 5.5 6.9 2.9 6.6 -3.1Z' fill='url(#c2gT)' stroke='#2a1c12' stroke-width='0.85'/><path d='M6.9 -3.0 C6.6 3.0 9.2 5.6 11.2 5.6 C13.2 5.6 15.8 3.0 15.5 -3.0Z' fill='url(#c2gT)' stroke='#2a1c12' stroke-width='0.85'/><path d='M14.7 -3.2 C14.4 2.8 17.0 5.4 19.0 5.4 C21.0 5.4 23.6 2.8 23.3 -3.2Z' fill='url(#c2gT)' stroke='#2a1c12' stroke-width='0.85'/><path d='M-29.4 -9.5 C-29.7 -3.5 -27.1 -0.9 -25.1 -0.9 C-23.1 -0.9 -20.5 -3.5 -20.8 -9.5Z' fill='url(#c2gT)' stroke='#2a1c12' stroke-width='0.85'/><path d='M-21.5 -9.6 C-21.8 -3.6 -19.2 -1.0 -17.2 -1.0 C-15.2 -1.0 -12.6 -3.6 -12.9 -9.6Z' fill='url(#c2gT)' stroke='#2a1c12' stroke-width='0.85'/><path d='M-14.0 -9.6 C-14.3 -3.6 -11.7 -1.0 -9.7 -1.0 C-7.7 -1.0 -5.1 -3.6 -5.4 -9.6Z' fill='url(#c2gT)' stroke='#2a1c12' stroke-width='0.85'/><path d='M-5.8 -9.8 C-6.1 -3.8 -3.5 -1.2 -1.5 -1.2 C0.5 -1.2 3.1 -3.8 2.8 -9.8Z' fill='url(#c2gT)' stroke='#2a1c12' stroke-width='0.85'/><path d='M2.8 -9.6 C2.5 -3.6 5.1 -1.0 7.1 -1.0 C9.1 -1.0 11.7 -3.6 11.4 -9.6Z' fill='url(#c2gT)' stroke='#2a1c12' stroke-width='0.85'/><path d='M10.4 -9.0 C10.1 -3.0 12.7 -0.4 14.7 -0.4 C16.7 -0.4 19.3 -3.0 19.0 -9.0Z' fill='url(#c2gT)' stroke='#2a1c12' stroke-width='0.85'/><path d='M18.8 -9.0 C18.5 -3.0 21.1 -0.4 23.1 -0.4 C25.1 -0.4 27.7 -3.0 27.4 -9.0Z' fill='url(#c2gT)' stroke='#2a1c12' stroke-width='0.85'/><path d='M-25.1 -16.4 C-25.4 -10.4 -22.8 -7.8 -20.8 -7.8 C-18.8 -7.8 -16.2 -10.4 -16.5 -16.4Z' fill='url(#c2gT)' stroke='#2a1c12' stroke-width='0.85'/><path d='M-17.8 -16.5 C-18.1 -10.5 -15.5 -7.9 -13.5 -7.9 C-11.5 -7.9 -8.9 -10.5 -9.2 -16.5Z' fill='url(#c2gT)' stroke='#2a1c12' stroke-width='0.85'/><path d='M-9.3 -15.8 C-9.6 -9.8 -7.0 -7.2 -5.0 -7.2 C-3.0 -7.2 -0.4 -9.8 -0.7 -15.8Z' fill='url(#c2gT)' stroke='#2a1c12' stroke-width='0.85'/><path d='M-1.7 -16.1 C-2.0 -10.1 0.6 -7.5 2.6 -7.5 C4.6 -7.5 7.2 -10.1 6.9 -16.1Z' fill='url(#c2gT)' stroke='#2a1c12' stroke-width='0.85'/><path d='M6.7 -15.8 C6.4 -9.8 9.0 -7.2 11.0 -7.2 C13.0 -7.2 15.6 -9.8 15.3 -15.8Z' fill='url(#c2gT)' stroke='#2a1c12' stroke-width='0.85'/><path d='M14.2 -15.7 C13.9 -9.7 16.5 -7.1 18.5 -7.1 C20.5 -7.1 23.1 -9.7 22.8 -15.7Z' fill='url(#c2gT)' stroke='#2a1c12' stroke-width='0.85'/><path d='M-29.7 -22.5 C-30.0 -16.5 -27.4 -13.9 -25.4 -13.9 C-23.4 -13.9 -20.8 -16.5 -21.1 -22.5Z' fill='url(#c2gT)' stroke='#2a1c12' stroke-width='0.85'/><path d='M-21.9 -23.0 C-22.2 -17.0 -19.6 -14.4 -17.6 -14.4 C-15.6 -14.4 -13.0 -17.0 -13.3 -23.0Z' fill='url(#c2gT)' stroke='#2a1c12' stroke-width='0.85'/><path d='M-13.0 -22.4 C-13.3 -16.4 -10.7 -13.8 -8.7 -13.8 C-6.7 -13.8 -4.1 -16.4 -4.4 -22.4Z' fill='url(#c2gT)' stroke='#2a1c12' stroke-width='0.85'/><path d='M-5.2 -23.1 C-5.5 -17.1 -2.9 -14.5 -0.9 -14.5 C1.1 -14.5 3.7 -17.1 3.4 -23.1Z' fill='url(#c2gT)' stroke='#2a1c12' stroke-width='0.85'/><path d='M1.9 -22.9 C1.6 -16.9 4.2 -14.3 6.2 -14.3 C8.2 -14.3 10.8 -16.9 10.5 -22.9Z' fill='url(#c2gT)' stroke='#2a1c12' stroke-width='0.85'/><path d='M10.1 -22.8 C9.8 -16.8 12.4 -14.2 14.4 -14.2 C16.4 -14.2 19.0 -16.8 18.7 -22.8Z' fill='url(#c2gT)' stroke='#2a1c12' stroke-width='0.85'/><path d='M18.4 -23.1 C18.1 -17.1 20.7 -14.5 22.7 -14.5 C24.7 -14.5 27.3 -17.1 27.0 -23.1Z' fill='url(#c2gT)' stroke='#2a1c12' stroke-width='0.85'/><path d='M-25.7 -29.1 C-26.0 -23.1 -23.4 -20.5 -21.4 -20.5 C-19.4 -20.5 -16.8 -23.1 -17.1 -29.1Z' fill='url(#c2gT)' stroke='#2a1c12' stroke-width='0.85'/><path d='M-17.9 -28.9 C-18.2 -22.9 -15.6 -20.3 -13.6 -20.3 C-11.6 -20.3 -9.0 -22.9 -9.3 -28.9Z' fill='url(#c2gT)' stroke='#2a1c12' stroke-width='0.85'/><path d='M-9.4 -29.0 C-9.7 -23.0 -7.1 -20.4 -5.1 -20.4 C-3.1 -20.4 -0.5 -23.0 -0.8 -29.0Z' fill='url(#c2gT)' stroke='#2a1c12' stroke-width='0.85'/><path d='M-1.8 -29.3 C-2.1 -23.3 0.5 -20.7 2.5 -20.7 C4.5 -20.7 7.1 -23.3 6.8 -29.3Z' fill='url(#c2gT)' stroke='#2a1c12' stroke-width='0.85'/><path d='M6.7 -29.4 C6.4 -23.4 9.0 -20.8 11.0 -20.8 C13.0 -20.8 15.6 -23.4 15.3 -29.4Z' fill='url(#c2gT)' stroke='#2a1c12' stroke-width='0.85'/><path d='M13.9 -28.9 C13.6 -22.9 16.2 -20.3 18.2 -20.3 C20.2 -20.3 22.8 -22.9 22.5 -28.9Z' fill='url(#c2gT)' stroke='#2a1c12' stroke-width='0.85'/><path d='M-29.2 -36.0 C-29.5 -30.0 -26.9 -27.4 -24.9 -27.4 C-22.9 -27.4 -20.3 -30.0 -20.6 -36.0Z' fill='url(#c2gT)' stroke='#2a1c12' stroke-width='0.85'/><path d='M-22.0 -35.4 C-22.3 -29.4 -19.7 -26.8 -17.7 -26.8 C-15.7 -26.8 -13.1 -29.4 -13.4 -35.4Z' fill='url(#c2gT)' stroke='#2a1c12' stroke-width='0.85'/><path d='M-13.4 -36.3 C-13.7 -30.3 -11.1 -27.7 -9.1 -27.7 C-7.1 -27.7 -4.5 -30.3 -4.8 -36.3Z' fill='url(#c2gT)' stroke='#2a1c12' stroke-width='0.85'/><path d='M-5.8 -36.2 C-6.1 -30.2 -3.5 -27.6 -1.5 -27.6 C0.5 -27.6 3.1 -30.2 2.8 -36.2Z' fill='url(#c2gT)' stroke='#2a1c12' stroke-width='0.85'/><path d='M2.8 -36.1 C2.5 -30.1 5.1 -27.5 7.1 -27.5 C9.1 -27.5 11.7 -30.1 11.4 -36.1Z' fill='url(#c2gT)' stroke='#2a1c12' stroke-width='0.85'/><path d='M11.0 -35.6 C10.7 -29.6 13.3 -27.0 15.3 -27.0 C17.3 -27.0 19.9 -29.6 19.6 -35.6Z' fill='url(#c2gT)' stroke='#2a1c12' stroke-width='0.85'/><path d='M18.0 -35.6 C17.7 -29.6 20.3 -27.0 22.3 -27.0 C24.3 -27.0 26.9 -29.6 26.6 -35.6Z' fill='url(#c2gT)' stroke='#2a1c12' stroke-width='0.85'/><path d='M-25.6 -42.2 C-25.9 -36.2 -23.3 -33.6 -21.3 -33.6 C-19.3 -33.6 -16.7 -36.2 -17.0 -42.2Z' fill='url(#c2gT)' stroke='#2a1c12' stroke-width='0.85'/><path d='M-17.1 -42.6 C-17.4 -36.6 -14.8 -34.0 -12.8 -34.0 C-10.8 -34.0 -8.2 -36.6 -8.5 -42.6Z' fill='url(#c2gT)' stroke='#2a1c12' stroke-width='0.85'/><path d='M-10.0 -42.0 C-10.3 -36.0 -7.7 -33.4 -5.7 -33.4 C-3.7 -33.4 -1.1 -36.0 -1.4 -42.0Z' fill='url(#c2gT)' stroke='#2a1c12' stroke-width='0.85'/><path d='M-1.6 -42.0 C-1.9 -36.0 0.7 -33.4 2.7 -33.4 C4.7 -33.4 7.3 -36.0 7.0 -42.0Z' fill='url(#c2gT)' stroke='#2a1c12' stroke-width='0.85'/><path d='M6.7 -42.2 C6.4 -36.2 9.0 -33.6 11.0 -33.6 C13.0 -33.6 15.6 -36.2 15.3 -42.2Z' fill='url(#c2gT)' stroke='#2a1c12' stroke-width='0.85'/><path d='M14.9 -42.3 C14.6 -36.3 17.2 -33.7 19.2 -33.7 C21.2 -33.7 23.8 -36.3 23.5 -42.3Z' fill='url(#c2gT)' stroke='#2a1c12' stroke-width='0.85'/><path d='M-29.6 -49.4 C-29.9 -43.4 -27.3 -40.8 -25.3 -40.8 C-23.3 -40.8 -20.7 -43.4 -21.0 -49.4Z' fill='url(#c2gT)' stroke='#2a1c12' stroke-width='0.85'/><path d='M-21.3 -49.1 C-21.6 -43.1 -19.0 -40.5 -17.0 -40.5 C-15.0 -40.5 -12.4 -43.1 -12.7 -49.1Z' fill='url(#c2gT)' stroke='#2a1c12' stroke-width='0.85'/><path d='M-13.5 -48.6 C-13.8 -42.6 -11.2 -40.0 -9.2 -40.0 C-7.2 -40.0 -4.6 -42.6 -4.9 -48.6Z' fill='url(#c2gT)' stroke='#2a1c12' stroke-width='0.85'/><path d='M-5.9 -48.7 C-6.2 -42.7 -3.6 -40.1 -1.6 -40.1 C0.4 -40.1 3.0 -42.7 2.7 -48.7Z' fill='url(#c2gT)' stroke='#2a1c12' stroke-width='0.85'/><path d='M2.0 -48.8 C1.7 -42.8 4.3 -40.2 6.3 -40.2 C8.3 -40.2 10.9 -42.8 10.6 -48.8Z' fill='url(#c2gT)' stroke='#2a1c12' stroke-width='0.85'/><path d='M10.9 -49.2 C10.6 -43.2 13.2 -40.6 15.2 -40.6 C17.2 -40.6 19.8 -43.2 19.5 -49.2Z' fill='url(#c2gT)' stroke='#2a1c12' stroke-width='0.85'/><path d='M18.6 -48.5 C18.3 -42.5 20.9 -39.9 22.9 -39.9 C24.9 -39.9 27.5 -42.5 27.2 -48.5Z' fill='url(#c2gT)' stroke='#2a1c12' stroke-width='0.85'/><rect x='-23.1' y='-49.50000000000001' width='46.2' height='99.00000000000001' fill='url(#c2sT)'/></g></g><line x1='86.0' y1='0.0' x2='93.1' y2='-2.9' stroke='#3e7c38' stroke-width='0.9' stroke-linecap='round'/><line x1='86.0' y1='0.0' x2='83.9' y2='5.4' stroke='#4c8a44' stroke-width='0.9' stroke-linecap='round'/><line x1='88.0' y1='1.4' x2='93.2' y2='-1.5' stroke='#4c8a44' stroke-width='0.9' stroke-linecap='round'/><line x1='88.0' y1='1.4' x2='88.4' y2='9.8' stroke='#5a9a50' stroke-width='0.9' stroke-linecap='round'/><line x1='90.0' y1='2.9' x2='95.7' y2='0.6' stroke='#3e7c38' stroke-width='0.9' stroke-linecap='round'/><line x1='90.0' y1='2.9' x2='91.0' y2='11.2' stroke='#3e7c38' stroke-width='0.9' stroke-linecap='round'/><line x1='92.0' y1='4.3' x2='98.5' y2='2.7' stroke='#4c8a44' stroke-width='0.9' stroke-linecap='round'/><line x1='92.0' y1='4.3' x2='92.4' y2='12.7' stroke='#24522a' stroke-width='0.9' stroke-linecap='round'/><line x1='94.0' y1='5.7' x2='100.0' y2='3.0' stroke='#8cbc74' stroke-width='0.9' stroke-linecap='round'/><line x1='94.0' y1='5.7' x2='94.4' y2='12.8' stroke='#3e7c38' stroke-width='0.9' stroke-linecap='round'/><line x1='96.0' y1='7.1' x2='101.3' y2='5.1' stroke='#5a9a50' stroke-width='0.9' stroke-linecap='round'/><line x1='96.0' y1='7.1' x2='93.9' y2='13.8' stroke='#3e7c38' stroke-width='0.9' stroke-linecap='round'/><line x1='98.0' y1='8.6' x2='103.1' y2='4.7' stroke='#4c8a44' stroke-width='0.9' stroke-linecap='round'/><line x1='98.0' y1='8.6' x2='97.4' y2='13.7' stroke='#4c8a44' stroke-width='0.9' stroke-linecap='round'/><line x1='100.0' y1='10.0' x2='103.7' y2='6.0' stroke='#4c8a44' stroke-width='0.9' stroke-linecap='round'/><line x1='100.0' y1='10.0' x2='100.9' y2='15.4' stroke='#4c8a44' stroke-width='0.9' stroke-linecap='round'/><line x1='102.3' y1='10.9' x2='108.0' y2='5.6' stroke='#4c8a44' stroke-width='0.9' stroke-linecap='round'/><line x1='102.3' y1='10.9' x2='103.8' y2='15.9' stroke='#2e6a2c' stroke-width='0.9' stroke-linecap='round'/><line x1='104.6' y1='11.7' x2='111.8' y2='5.1' stroke='#5a9a50' stroke-width='0.9' stroke-linecap='round'/><line x1='104.6' y1='11.7' x2='107.4' y2='19.7' stroke='#6aa85a' stroke-width='0.9' stroke-linecap='round'/><line x1='106.9' y1='12.6' x2='111.1' y2='9.1' stroke='#5a9a50' stroke-width='0.9' stroke-linecap='round'/><line x1='106.9' y1='12.6' x2='106.1' y2='19.9' stroke='#8cbc74' stroke-width='0.9' stroke-linecap='round'/><line x1='109.1' y1='13.4' x2='113.0' y2='10.2' stroke='#2e6a2c' stroke-width='0.9' stroke-linecap='round'/><line x1='109.1' y1='13.4' x2='109.6' y2='21.5' stroke='#6aa85a' stroke-width='0.9' stroke-linecap='round'/><line x1='111.4' y1='14.3' x2='116.4' y2='10.6' stroke='#3e7c38' stroke-width='0.9' stroke-linecap='round'/><line x1='111.4' y1='14.3' x2='114.3' y2='22.4' stroke='#2e6a2c' stroke-width='0.9' stroke-linecap='round'/><line x1='113.7' y1='15.1' x2='121.3' y2='10.1' stroke='#4c8a44' stroke-width='0.9' stroke-linecap='round'/><line x1='113.7' y1='15.1' x2='115.6' y2='24.7' stroke='#24522a' stroke-width='0.9' stroke-linecap='round'/></svg><svg x='90.3' y='535.5' width='27.5' height='20.5' viewBox='0 0 164 122' preserveAspectRatio='none'><defs><linearGradient id='abgT' x1='0' x2='1'><stop offset='0' stop-color='#a8b848'/><stop offset='0.14' stop-color='#bac855'/><stop offset='0.3' stop-color='#acbb4a'/><stop offset='0.6' stop-color='#9eab48'/><stop offset='0.84' stop-color='#80864a'/><stop offset='1' stop-color='#6e6c4c'/></linearGradient><linearGradient id='abg2T' x1='0' y1='0' x2='0' y2='1'><stop offset='0' stop-color='#5a6040' stop-opacity='0.3'/><stop offset='0.25' stop-color='#5a6040' stop-opacity='0'/><stop offset='1' stop-color='#b8c850' stop-opacity='0.12'/></linearGradient><radialGradient id='apT' cx='0.45' cy='0.5' r='0.58'><stop offset='0' stop-color='#b87648'/><stop offset='0.55' stop-color='#a8663e'/><stop offset='0.88' stop-color='#8a5034'/><stop offset='1' stop-color='#6e3e2a'/></radialGradient><radialGradient id='apsT' cx='0.5' cy='0.88' r='0.45'><stop offset='0' stop-color='#c89a50' stop-opacity='0.55'/><stop offset='1' stop-color='#c89a50' stop-opacity='0'/></radialGradient><radialGradient id='aptT' cx='0.5' cy='0.1' r='0.45'><stop offset='0' stop-color='#9a6058' stop-opacity='0.5'/><stop offset='1' stop-color='#9a6058' stop-opacity='0'/></radialGradient></defs><rect width='164' height='122' fill='url(#abgT)'/><rect width='164' height='122' fill='url(#abg2T)'/><path d='M128 0 H164 V5 C152 3 140 4 128 0Z' fill='#3a3a30'/><path d='M140 2 L146 8' stroke='#3a3a30' stroke-width='1'/><path d='M72 19 C79.0 15.4 86.7 15.0 94 14.5 C101.3 14.0 109.5 13.9 116 16 C122.5 18.1 128.7 21.3 133 27 C137.3 32.7 141.0 41.2 142 50 C143.0 58.8 142.2 71.7 139 80 C135.8 88.3 129.8 95.4 123 100 C116.2 104.6 106.8 107.2 98 107.5 C89.2 107.8 77.7 105.8 70 102 C62.3 98.2 56.0 92.0 52 85 C48.0 78.0 46.0 68.2 46 60 C46.0 51.8 47.7 42.8 52 36 C56.3 29.2 65.0 22.6 72 19 Z' fill='url(#apT)'/><path d='M72 19 C79.0 15.4 86.7 15.0 94 14.5 C101.3 14.0 109.5 13.9 116 16 C122.5 18.1 128.7 21.3 133 27 C137.3 32.7 141.0 41.2 142 50 C143.0 58.8 142.2 71.7 139 80 C135.8 88.3 129.8 95.4 123 100 C116.2 104.6 106.8 107.2 98 107.5 C89.2 107.8 77.7 105.8 70 102 C62.3 98.2 56.0 92.0 52 85 C48.0 78.0 46.0 68.2 46 60 C46.0 51.8 47.7 42.8 52 36 C56.3 29.2 65.0 22.6 72 19 Z' fill='url(#apsT)'/><path d='M72 19 C79.0 15.4 86.7 15.0 94 14.5 C101.3 14.0 109.5 13.9 116 16 C122.5 18.1 128.7 21.3 133 27 C137.3 32.7 141.0 41.2 142 50 C143.0 58.8 142.2 71.7 139 80 C135.8 88.3 129.8 95.4 123 100 C116.2 104.6 106.8 107.2 98 107.5 C89.2 107.8 77.7 105.8 70 102 C62.3 98.2 56.0 92.0 52 85 C48.0 78.0 46.0 68.2 46 60 C46.0 51.8 47.7 42.8 52 36 C56.3 29.2 65.0 22.6 72 19 Z' fill='url(#aptT)'/><path d='M82 27 C90 33 106 34 118 27' stroke='#6a3a26' stroke-width='2' fill='none' opacity='0.5'/><ellipse cx='101' cy='31' rx='6' ry='3' fill='#4a2a1e' opacity='0.6'/><path d='M97 0 C98 10 99 20 100 31' stroke='#4a3a32' stroke-width='2.2' fill='none'/><path d='M72 26 L68 32 L70 36 L64 42 M58 40 L62 44 L60 50' stroke='#5e321e' stroke-width='1.1' fill='none' opacity='0.5' stroke-linejoin='round'/><path d='M112 38 L115 48 L111 56 L113 64 L108 72 L110 82 L105 92 L106 104' stroke='#5e321e' stroke-width='1.1' fill='none' opacity='0.5' stroke-linejoin='round'/><path d='M124 40 L128 50 L126 58 L130 66 L126 78 L128 86 L122 98' stroke='#5e321e' stroke-width='1.1' fill='none' opacity='0.5' stroke-linejoin='round'/><path d='M86 52 L82 60 L85 68 L79 76 L81 84 L75 94 L77 104' stroke='#5e321e' stroke-width='1.1' fill='none' opacity='0.5' stroke-linejoin='round'/><path d='M136 56 L138 66 L135 74 L137 82 L131 92' stroke='#5e321e' stroke-width='1.1' fill='none' opacity='0.5' stroke-linejoin='round'/><path d='M92 34 L96 40 L94 46 L97 52' stroke='#5e321e' stroke-width='1.1' fill='none' opacity='0.5' stroke-linejoin='round'/><path d='M56 70 L54 78 L58 86 L57 94' stroke='#5e321e' stroke-width='1.1' fill='none' opacity='0.5' stroke-linejoin='round'/><path d='M100 66 L96 74 L99 80 L94 88' stroke='#5e321e' stroke-width='1.1' fill='none' opacity='0.5' stroke-linejoin='round'/><path d='M112 38 L115 48 L111 56 L113 64 L108 72 L110 82 L105 92 L106 104' stroke='#d49c68' stroke-width='1.2' fill='none' opacity='0.35' transform='translate(1.6 0.4)' stroke-linejoin='round'/><path d='M86 52 L82 60 L85 68 L79 76 L81 84 L75 94 L77 104' stroke='#d49c68' stroke-width='1.2' fill='none' opacity='0.35' transform='translate(1.6 0.4)' stroke-linejoin='round'/><path d='M124 40 L128 50 L126 58 L130 66 L126 78 L128 86 L122 98' stroke='#d49c68' stroke-width='1.2' fill='none' opacity='0.35' transform='translate(1.6 0.4)' stroke-linejoin='round'/><path d='M66 30 C62 36 60 44 62 52' stroke='#d49c68' stroke-width='1.2' fill='none' opacity='0.35' transform='translate(1.6 0.4)' stroke-linejoin='round'/><ellipse cx='108' cy='92' rx='22' ry='12' fill='#c8984c' opacity='0.25'/></svg><rect x='93.25' y='498.5' width='14.5' height='8.5' fill='#1a94d8'/><rect x='136.75' y='498.5' width='14.5' height='8.5' fill='#1a94d8'/><rect x='182.25' y='498' width='14.5' height='9.5' fill='#fff'/><rect x='225.75' y='498' width='14.5' height='9.5' fill='#fff'/><rect x='271.25' y='498' width='14.5' height='9.5' fill='#fff'/><rect x='314.75' y='498' width='14.5' height='9.5' fill='#fff'/><rect x='360.25' y='498' width='14.5' height='9.5' fill='#fff'/><rect x='403.75' y='498' width='14.5' height='9.5' fill='#fff'/><rect x='448.5' y='498' width='16' height='9.5' fill='#fff'/><rect x='492.0' y='498' width='16' height='9.5' fill='#fff'/><rect x='537.5' y='498' width='16' height='9.5' fill='#fff'/><rect x='581.0' y='498' width='16' height='9.5' fill='#fff'/><rect x='626.5' y='498' width='16' height='9.5' fill='#fff'/><rect x='670.0' y='498' width='16' height='9.5' fill='#fff'/><rect x='715.5' y='498' width='16' height='9.5' fill='#fff'/><rect x='759.0' y='498' width='16' height='9.5' fill='#fff'/><rect x='70' y='563' width='724' height='13' fill='#ebebeb'/><rect x='167' y='567' width='353' height='7.6' rx='3.8' fill='#c2c2c2'/><path d='M77.5 568 L74.5 570.5 L77.5 573Z' fill='#aaa'/><path d='M787 568 L790 570.5 L787 573Z' fill='#aaa'/><rect x='70' y='576' width='724' height='24' fill='#747474'/><rect x='70' y='576' width='1' height='24' fill='#5a5a5a'/><g fill='none' stroke='#ececec' stroke-width='1'><rect x='78.5' y='583.5' width='7.5' height='8.5'/><path d='M80.5 582.5 H84' /><path d='M93 583.5 H88.5 V592 H93'/><path d='M91 582.5 H93'/></g><path d='M94.2 586.3 H97.8 L96 588.3Z' fill='#ececec'/><rect x='577.9' y='579.9' width='102' height='16.1' fill='#4a4a4a'/><rect x='685.7' y='579.9' width='105.7' height='16.1' fill='#c8101e'/><g transform='translate(591.2 588)'><rect x='-1.2' y='-5.5' width='2.4' height='11' fill='#fff' transform='rotate(0)'/><rect x='-1.2' y='-5.5' width='2.4' height='11' fill='#fff' transform='rotate(45)'/><rect x='-1.2' y='-5.5' width='2.4' height='11' fill='#fff' transform='rotate(90)'/><rect x='-1.2' y='-5.5' width='2.4' height='11' fill='#fff' transform='rotate(135)'/><circle r='4' fill='#fff'/><circle r='1.6' fill='#4a4a4a'/></g><g fill='none' stroke='#fff' stroke-width='1.3' stroke-linejoin='round'><path d='M693.5 583 H696 L698.5 591 H704.5 L706 585 H697'/></g><circle cx='699' cy='593.6' r='1' fill='#fff'/><circle cx='704' cy='593.6' r='1' fill='#fff'/></svg><div class='t' style='left:19.3px;top:5.49px;font-size:8.4px;line-height:8.4px;color:#000;font-weight:400;transform:scaleX(0.8505);transform-origin:0 0;-webkit-text-stroke:0.12px #000'>cewe-fotoservice.de 7.0.0 (x64) - CEWE FOTOBUCH Groß Heft Matt (26 S.)*</div><div class='t' style='left:50.0px;top:29.04px;font-size:12px;line-height:12px;color:#fff;font-weight:400;letter-spacing:0.297px;'>fotoservice</div><div class='t' style='left:161.0px;top:35.87px;font-size:9.6px;line-height:9.6px;color:#fce6e6;font-weight:400;letter-spacing:0.085px;-webkit-text-stroke:0.15px #fce6e6'>Produkte</div><div class='t' style='left:221.8px;top:35.87px;font-size:9.6px;line-height:9.6px;color:#fce6e6;font-weight:400;transform:scaleX(0.9908);transform-origin:0 0;-webkit-text-stroke:0.15px #fce6e6'>Datei</div><div class='t' style='left:272.1px;top:35.87px;font-size:9.6px;line-height:9.6px;color:#fce6e6;font-weight:400;letter-spacing:0.137px;-webkit-text-stroke:0.15px #fce6e6'>Optionen</div><div class='t' style='left:340.2px;top:35.87px;font-size:9.6px;line-height:9.6px;color:#fce6e6;font-weight:400;letter-spacing:0.149px;-webkit-text-stroke:0.15px #fce6e6'>Hilfe</div><div class='t' style='left:388.0px;top:35.87px;font-size:9.6px;line-height:9.6px;color:#fce6e6;font-weight:400;transform:scaleX(0.9558);transform-origin:0 0;-webkit-text-stroke:0.15px #fce6e6'>Preise</div><div class='t' style='left:442.0px;top:35.87px;font-size:9.6px;line-height:9.6px;color:#fce6e6;font-weight:400;letter-spacing:0.178px;-webkit-text-stroke:0.15px #fce6e6'>Warenkorb</div><div class='t' style='left:7.7px;top:75.27px;font-size:7.6px;line-height:7.6px;color:#1a1a1a;font-weight:400;transform:scaleX(0.9180);transform-origin:0 0;-webkit-text-stroke:0.2px #1a1a1a'>Speichern</div><div class='t' style='left:59.5px;top:75.27px;font-size:7.6px;line-height:7.6px;color:#1a1a1a;font-weight:400;transform:scaleX(0.9880);transform-origin:0 0;-webkit-text-stroke:0.2px #1a1a1a'>Öffnen</div><div class='t' style='left:103.5px;top:75.27px;font-size:7.6px;line-height:7.6px;color:#1a1a1a;font-weight:400;transform:scaleX(0.9217);transform-origin:0 0;-webkit-text-stroke:0.2px #1a1a1a'>Assistent</div><div class='t' style='left:150.8px;top:75.27px;font-size:7.6px;line-height:7.6px;color:#1a1a1a;font-weight:400;transform:scaleX(0.9524);transform-origin:0 0;-webkit-text-stroke:0.2px #1a1a1a'>Rückgangig</div><div class='t' style='left:197.0px;top:75.27px;font-size:7.6px;line-height:7.6px;color:#c4c4c4;font-weight:400;transform:scaleX(0.9686);transform-origin:0 0;-webkit-text-stroke:0.2px #c4c4c4'>Wiederholen</div><div class='t' style='left:255.8px;top:75.27px;font-size:7.6px;line-height:7.6px;color:#1a1a1a;font-weight:400;transform:scaleX(0.9768);transform-origin:0 0;-webkit-text-stroke:0.2px #1a1a1a'>Kopieren</div><div class='t' style='left:302.0px;top:75.27px;font-size:7.6px;line-height:7.6px;color:#1a1a1a;font-weight:400;letter-spacing:0.002px;-webkit-text-stroke:0.2px #1a1a1a'>Einfügen</div><div class='t' style='left:344.0px;top:75.27px;font-size:7.6px;line-height:7.6px;color:#1a1a1a;font-weight:400;transform:scaleX(0.9430);transform-origin:0 0;-webkit-text-stroke:0.2px #1a1a1a'>Ausschneiden</div><div class='t' style='left:400.0px;top:75.27px;font-size:7.6px;line-height:7.6px;color:#1a1a1a;font-weight:400;letter-spacing:0.008px;-webkit-text-stroke:0.2px #1a1a1a'>Entfernen</div><div class='t' style='left:450.9px;top:75.27px;font-size:7.6px;line-height:7.6px;color:#1a1a1a;font-weight:400;transform:scaleX(0.9194);transform-origin:0 0;-webkit-text-stroke:0.2px #1a1a1a'>Neues Foto</div><div class='t' style='left:499.7px;top:75.27px;font-size:7.6px;line-height:7.6px;color:#1a1a1a;font-weight:400;transform:scaleX(0.8963);transform-origin:0 0;-webkit-text-stroke:0.2px #1a1a1a'>Neuer Text</div><div class='t' style='left:542.7px;top:75.27px;font-size:7.6px;line-height:7.6px;color:#1a1a1a;font-weight:400;transform:scaleX(0.9381);transform-origin:0 0;-webkit-text-stroke:0.2px #1a1a1a'>Neue Landkarte</div><div class='t' style='left:658.0px;top:75.27px;font-size:7.6px;line-height:7.6px;color:#1a1a1a;font-weight:400;transform:scaleX(0.9664);transform-origin:0 0;-webkit-text-stroke:0.2px #1a1a1a'>Bearbeiten</div><div class='t' style='left:707.0px;top:75.27px;font-size:7.6px;line-height:7.6px;color:#8a8a8a;font-weight:400;transform:scaleX(0.9867);transform-origin:0 0;-webkit-text-stroke:0.2px #8a8a8a'>Anordnen</div><div class='t' style='left:752.7px;top:75.27px;font-size:7.6px;line-height:7.6px;color:#1a1a1a;font-weight:400;transform:scaleX(0.9608);transform-origin:0 0;-webkit-text-stroke:0.2px #1a1a1a'>Dekorieren</div><div class='t' style='left:11.5px;top:118.07px;font-size:7.6px;line-height:7.6px;color:#1a1a1a;font-weight:400;transform:scaleX(0.9638);transform-origin:0 0;-webkit-text-stroke:0.2px #1a1a1a'>Fotos &amp; Videos</div><div class='t' style='left:30.0px;top:159.87px;font-size:7.6px;line-height:7.6px;color:#1a1a1a;font-weight:400;transform:scaleX(0.8592);transform-origin:0 0;-webkit-text-stroke:0.2px #1a1a1a'>Stile</div><div class='t' style='left:14.0px;top:203.07px;font-size:7.6px;line-height:7.6px;color:#1a1a1a;font-weight:400;transform:scaleX(0.9472);transform-origin:0 0;-webkit-text-stroke:0.2px #1a1a1a'>Buchvorlagen</div><div class='t' style='left:14.5px;top:245.57px;font-size:7.6px;line-height:7.6px;color:#1a1a1a;font-weight:400;transform:scaleX(0.9629);transform-origin:0 0;-webkit-text-stroke:0.2px #1a1a1a'>Seitenlayouts</div><div class='t' style='left:14.0px;top:288.37px;font-size:7.6px;line-height:7.6px;color:#1a1a1a;font-weight:400;letter-spacing:0.063px;-webkit-text-stroke:0.2px #1a1a1a'>Hintergründe</div><div class='t' style='left:23.5px;top:330.57px;font-size:7.6px;line-height:7.6px;color:#1a1a1a;font-weight:400;transform:scaleX(0.9903);transform-origin:0 0;-webkit-text-stroke:0.2px #1a1a1a'>Cliparts</div><div class='t' style='left:5.7px;top:373.97px;font-size:7.6px;line-height:7.6px;color:#1a1a1a;font-weight:400;transform:scaleX(0.9430);transform-origin:0 0;-webkit-text-stroke:0.2px #1a1a1a'>Masken &amp; Rahmen</div><div class='t' style='left:204.7px;top:97.53px;font-size:8px;line-height:8px;color:#333;font-weight:400;transform:scaleX(0.9941);transform-origin:0 0;'>20,5 cm</div><div class='t' style='left:452.0px;top:97.53px;font-size:8px;line-height:8px;color:#333;font-weight:400;transform:scaleX(0.9941);transform-origin:0 0;'>20,5 cm</div><div class='t' style='left:629.0px;top:98.15px;font-size:8.8px;line-height:8.8px;color:#1a1a1a;font-weight:700;transform:scaleX(0.9844);transform-origin:0 0;-webkit-text-stroke:0.15px #1a1a1a'>Anordnen</div><div class='t' style='left:641.9px;top:122.63px;font-size:8px;line-height:8px;color:#6e6e6e;font-weight:400;letter-spacing:0.077px;'>Hilfe beim Ausrichten</div><div class='t' style='left:655.5px;top:141.50px;font-size:8.5px;line-height:8.5px;color:#b4b4b4;font-weight:400;letter-spacing:0.083px;'>2 mm</div><div class='t' style='left:655.7px;top:161.60px;font-size:8.5px;line-height:8.5px;color:#6a6a6a;font-weight:400;letter-spacing:0.021px;'>hoch</div><div class='t' style='left:642.0px;top:197.53px;font-size:8px;line-height:8px;color:#6e6e6e;font-weight:400;letter-spacing:0.053px;'>Objekte zueinander ausrichten</div><div class='t' style='left:642.0px;top:254.03px;font-size:8px;line-height:8px;color:#a8a8a8;font-weight:400;letter-spacing:0.047px;'>Objekte angleichen und verteilen</div><div class='t' style='left:642.0px;top:310.53px;font-size:8px;line-height:8px;color:#6e6e6e;font-weight:400;letter-spacing:0.027px;'>Ebenen anordnen</div><div class='t' style='left:642.0px;top:366.73px;font-size:8px;line-height:8px;color:#6e6e6e;font-weight:400;letter-spacing:0.100px;'>Objekte drehen</div><div class='t' style='left:632.6px;top:388.53px;font-size:8px;line-height:8px;color:#222;font-weight:400;transform:scaleX(0.9927);transform-origin:0 0;'>0°</div><div class='t' style='left:642.0px;top:427.23px;font-size:8px;line-height:8px;color:#6e6e6e;font-weight:400;letter-spacing:0.226px;'>Objektgröße ändern</div><div class='t' style='left:633.0px;top:445.60px;font-size:8.5px;line-height:8.5px;color:#222;font-weight:400;transform:scaleX(0.9917);transform-origin:0 0;'>13.6 cm</div><div class='t' style='left:723.0px;top:445.60px;font-size:8.5px;line-height:8.5px;color:#222;font-weight:400;transform:scaleX(0.9917);transform-origin:0 0;'>10,2 cm</div><div class='t' style='left:642.0px;top:480.73px;font-size:8px;line-height:8px;color:#6e6e6e;font-weight:400;letter-spacing:0.027px;'>Seiten einfügen/löschen</div><div class='t' style='left:413.9px;top:580.07px;font-size:7.6px;line-height:7.6px;color:#fff;font-weight:400;transform:scaleX(0.8852);transform-origin:0 0;'>CEWE FOTOBUCH Groß Heft Matt (26 S.) 16,95 €*</div><div class='t' style='left:424.0px;top:591.77px;font-size:5px;line-height:5px;color:#e0e0e0;font-weight:400;transform:scaleX(0.9742);transform-origin:0 0;'>* Die Preise gelten inkl. MwSt. zzgl. Versandkosten gem. Preisliste</div><div class='t' style='left:601.0px;top:584.37px;font-size:7.6px;line-height:7.6px;color:#fff;font-weight:400;transform:scaleX(0.9744);transform-origin:0 0;'>Produktdetails ändern</div><div class='t' style='left:708.8px;top:584.05px;font-size:8.8px;line-height:8.8px;color:#fff;font-weight:700;letter-spacing:0.109px;'>In den Warenkorb</div><div class='t' style='left:98.2px;top:498.83px;font-size:8px;line-height:8px;color:#fff;font-weight:400;letter-spacing:0.000px;'>2</div><div class='t' style='left:141.7px;top:498.83px;font-size:8px;line-height:8px;color:#fff;font-weight:400;letter-spacing:0.000px;'>3</div><div class='t' style='left:187.2px;top:498.83px;font-size:8px;line-height:8px;color:#222;font-weight:400;letter-spacing:0.000px;'>4</div><div class='t' style='left:230.7px;top:498.83px;font-size:8px;line-height:8px;color:#222;font-weight:400;letter-spacing:0.000px;'>5</div><div class='t' style='left:276.2px;top:498.83px;font-size:8px;line-height:8px;color:#222;font-weight:400;letter-spacing:0.000px;'>6</div><div class='t' style='left:319.7px;top:498.83px;font-size:8px;line-height:8px;color:#222;font-weight:400;letter-spacing:0.000px;'>7</div><div class='t' style='left:365.2px;top:498.83px;font-size:8px;line-height:8px;color:#222;font-weight:400;letter-spacing:0.000px;'>8</div><div class='t' style='left:408.7px;top:498.83px;font-size:8px;line-height:8px;color:#222;font-weight:400;letter-spacing:0.000px;'>9</div><div class='t' style='left:451.8px;top:498.83px;font-size:8px;line-height:8px;color:#222;font-weight:400;letter-spacing:0.494px;'>10</div><div class='t' style='left:495.3px;top:498.83px;font-size:8px;line-height:8px;color:#222;font-weight:400;letter-spacing:1.087px;'>11</div><div class='t' style='left:540.8px;top:498.83px;font-size:8px;line-height:8px;color:#222;font-weight:400;letter-spacing:0.494px;'>12</div><div class='t' style='left:584.3px;top:498.83px;font-size:8px;line-height:8px;color:#222;font-weight:400;letter-spacing:0.494px;'>13</div><div class='t' style='left:629.8px;top:498.83px;font-size:8px;line-height:8px;color:#222;font-weight:400;letter-spacing:0.494px;'>14</div><div class='t' style='left:673.3px;top:498.83px;font-size:8px;line-height:8px;color:#222;font-weight:400;letter-spacing:0.494px;'>15</div><div class='t' style='left:718.8px;top:498.83px;font-size:8px;line-height:8px;color:#222;font-weight:400;letter-spacing:0.494px;'>16</div><div class='t' style='left:762.3px;top:498.83px;font-size:8px;line-height:8px;color:#222;font-weight:400;letter-spacing:0.494px;'>17</div><svg class='a' style='left:0;top:0;z-index:3' width='794' height='600'><rect x='642.3' y='231' width='143.2' height='23.2' fill='#ffffe1' stroke='#d4d4b8' stroke-width='0.8'/></svg><div class='t' style='left:646.8px;top:234.20px;font-size:7.8px;line-height:7.8px;color:#111;font-weight:400;transform:scaleX(0.9530);transform-origin:0 0;z-index:4;-webkit-text-stroke:0.15px #111'>Objekte horizontal zentrieren</div><div class='t' style='left:646.8px;top:242.90px;font-size:7.8px;line-height:7.8px;color:#111;font-weight:400;transform:scaleX(0.9273);transform-origin:0 0;z-index:4;-webkit-text-stroke:0.15px #111'>(Referenz ist das zuerst markierte Objekt)</div><svg class='a' style='left:0;top:0;z-index:5' width='794' height='600'><g fill='none' stroke='#e86474' stroke-linecap='round' opacity='0.72'><path d='M432 156.5 C400 157.5 360 158.5 323 160.2' stroke-width='3'/><path d='M432 155.8 C400 156.8 360 157.8 325 159.4' stroke-width='1' stroke-dasharray='1.5 1.5' stroke='#fff' opacity='0.35'/><path d='M323 160.2 C333 152 343 147 355.3 146' stroke-width='3'/><path d='M323 160.2 C331 169 346 175 361.4 175.4' stroke-width='3'/><path d='M716.7 169.7 C700 180 670 198 649.7 214.7' stroke-width='2.4'/><path d='M649.7 214.7 C652 205 657 195 663.8 187.3' stroke-width='2.6'/><path d='M649.7 214.7 C660 210 675 206 687.6 205' stroke-width='2.6'/></g><path d='M442.3 156 L450.5 150.6 V177.9' fill='none' stroke='#d41a28' stroke-width='3.1' stroke-linecap='butt' stroke-linejoin='miter'/><path d='M727.6 163.5 C727.8 158.5 732 156.6 735.5 156.8 C740 157 742.2 160 742.2 163.8 C742.2 169 736 175.5 727.3 183.6 H743.6' fill='none' stroke='#d41a28' stroke-width='2.8' stroke-linecap='butt' stroke-linejoin='miter'/></svg><div class='a' style='left:0;top:0;width:794px;height:1px;background:#444;z-index:9'></div><div class='a' style='left:0;top:0;width:1px;height:600px;background:#3a3a3a;z-index:9'></div><div class='a' style='left:793px;top:0;width:1px;height:600px;background:#9a9a9a;z-index:9'></div></body></html>
